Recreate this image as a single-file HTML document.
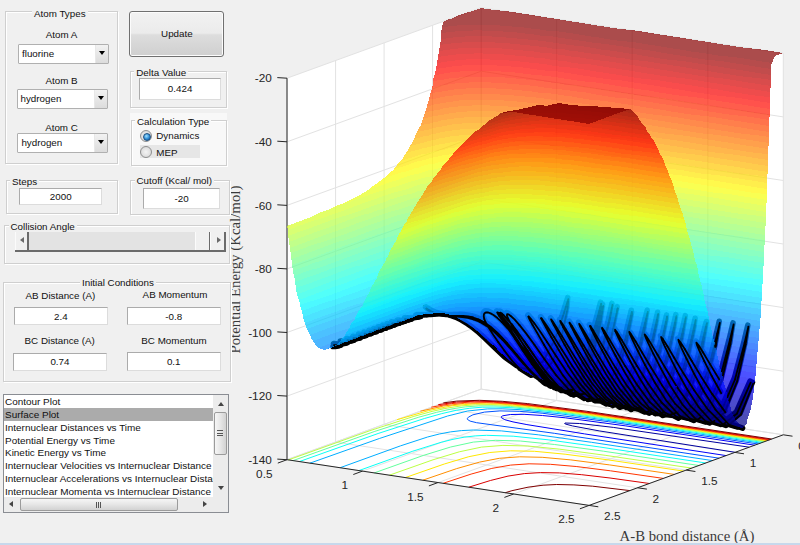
<!DOCTYPE html>
<html><head><meta charset="utf-8"><style>
*{box-sizing:border-box}
html,body{margin:0;padding:0}
body{width:800px;height:545px;overflow:hidden;background:#f0f0f0;position:relative;font-family:"Liberation Sans",sans-serif;font-size:9.8px;color:#111}
div{position:absolute}
.pn{background:#f0f0f0;border:1px solid #cfcfcf;box-shadow:inset 1px 1px 0 #fff,1px 1px 0 #fff}
.pt{background:#f0f0f0;padding:0 2px;line-height:13px;white-space:nowrap}
.lb{text-align:center;line-height:13px;white-space:nowrap}
.ed{background:#fff;border:1px solid #ababab;border-right-color:#dcdcdc;border-bottom-color:#dcdcdc;text-align:center;white-space:nowrap}
.ed{display:flex;align-items:center;justify-content:center}
.pop{background:#fff;border:1px solid #b0b0b0;border-radius:1px}
.pop span{position:absolute;left:3px;top:2px;line-height:13px}
.pop i{position:absolute;right:0;top:0;bottom:0;width:13px;background:linear-gradient(#f2f2f2,#dcdcdc);border-left:1px solid #e8e8e8}
.pop i:after{content:"";position:absolute;left:3px;top:6px;border-left:3.5px solid transparent;border-right:3.5px solid transparent;border-top:4px solid #000}
.btn{border:1px solid #707070;border-radius:3px;background:linear-gradient(#f2f2f2 0%,#ebebeb 48%,#dddddd 52%,#cfcfcf 100%);box-shadow:inset 0 0 0 1px #fcfcfc;display:flex;align-items:center;justify-content:center}
.rad{width:12px;height:12px;border-radius:50%;border:1px solid #8e8f8f;background:radial-gradient(circle at 50% 50%,#f4f4f4 0,#e0e0e0 60%,#d0d0d0 100%)}
.rad.on:after{content:"";position:absolute;left:2px;top:2px;width:6px;height:6px;border-radius:50%;background:radial-gradient(circle at 40% 35%,#9fe0ff 0,#2a8ad4 55%,#1a4f8a 100%);border:0.5px solid #1d4f80}
.rtx{line-height:13px;white-space:nowrap}
</style></head><body>
<svg width="800" height="545" style="position:absolute;left:0;top:0">
<path fill="#fff" d="M287 459.7 481.2 389.1 481.2 7.6 287 78.2ZM481.2 389.1 783.3 434.8 783.3 53.3 481.2 7.6ZM287 459.7 589.1 505.4 783.3 434.8 481.2 389.1Z"/>
<path stroke="#e2e2e2" fill="none" d="M481.2 389.1L783.3 434.8M481.2 389.1L481.2 7.6M287 459.7L481.2 389.1M481.2 389.1L481.2 7.6M432.6 406.8L734.8 452.4M432.6 406.8L432.6 25.2M362.5 471.1L556.7 400.5M556.7 400.5L556.7 19M384.1 424.4L686.2 470.1M384.1 424.4L384.1 42.9M438.1 482.6L632.2 412M632.2 412L632.2 30.5M335.6 442.1L637.6 487.8M335.6 442.1L335.6 60.6M513.6 494L707.8 423.4M707.8 423.4L707.8 41.9M287 459.7L589.1 505.4M287 459.7L287 78.2M589.1 505.4L783.3 434.8M783.3 434.8L783.3 53.3M287 459.7L481.2 389.1M481.2 389.1L783.3 434.8M287 396.1L481.2 325.5M481.2 325.5L783.3 371.2M287 332.5L481.2 261.9M481.2 261.9L783.3 307.6M287 268.9L481.2 198.4M481.2 198.4L783.3 244M287 205.4L481.2 134.8M481.2 134.8L783.3 180.5M287 141.8L481.2 71.2M481.2 71.2L783.3 116.9M287 78.2L481.2 7.6M481.2 7.6L783.3 53.3"/>
<path d="M749.2 447.2 613.3 427.4 579.7 423.5 565 423 564.6 423.5 566 424.2 572.4 425.9 599.2 430.9 735.2 452.3" stroke="#00009e" stroke-width="1" fill="none"/>
<path d="M754.8 445.2 625.8 425.9 565.3 417.8 542.4 415.5 524.1 414.3 510.4 414.5 502.7 415.8 501.4 416.6 501.3 417.6 504.8 419.7 513 421.9 526.9 424.6 584.6 433.9 726.1 455.6" stroke="#0000f8" stroke-width="1" fill="none"/>
<path d="M758.1 444 608.6 421.7 542.1 413.2 519.2 411.3 499.9 410.9 484.5 412.1 472.9 414.8 468.4 417.2 467.4 418.3 467.4 419.4 470.1 421.1 476.6 422.7 554.3 433.3 719.1 458.2" stroke="#0053ff" stroke-width="1" fill="none"/>
<path d="M760.5 443.1 624.9 422.8 561.1 413.9 519 409.6 502.1 408.8 487.7 408.9 467.6 411 447.6 416 379.7 438.4 309.8 463.2M340.2 467.7 400.4 445.9 427.6 437 439.3 434 450.4 431.9 461.4 430.6 473.7 430 501.3 430.9 538.3 434.8 591.5 442.3 712.4 460.6" stroke="#00adff" stroke-width="1" fill="none"/>
<path d="M762.5 442.4 621.6 421.3 556.6 412.2 513.1 407.8 496 407.1 482.2 407.2 469.2 408.3 456.2 410.3 441.8 413.6 424.4 418.5 378.1 433.5 299.3 461.6M358.9 470.6 412.8 451.2 441.1 442.3 453 439.3 464.1 437.2 475.2 435.9 486.6 435.3 513.2 436.2 548.1 439.8 599.1 446.9 705.8 463" stroke="#08fff7" stroke-width="1" fill="none"/>
<path d="M764.2 441.7 621.9 420.4 555.3 411.1 510.5 406.5 493.9 405.8 478.9 405.9 465.2 406.9 451.9 408.9 436.7 412.3 418.8 417.2 374.2 431.6 293.1 460.6M374.3 472.9 423.1 455.5 450.7 447 473.3 442.1 495.4 440.3 520.3 441 554.6 444.5 603.5 451.2 699 465.5" stroke="#62ff9d" stroke-width="1" fill="none"/>
<path d="M765.7 441.2 618.8 419.2 553.1 410 507.9 405.4 490.9 404.6 475.6 404.8 461.4 405.9 447.4 408 432 411.4 413.8 416.4 369.9 430.7 288.4 459.9M389.4 475.2 433 459.8 459.3 451.8 481.5 447.1 502.9 445.4 527.8 446 559.8 449.2 605.9 455.4 691.6 468.1" stroke="#bcff43" stroke-width="1" fill="none"/>
<path d="M767.1 440.7 574.9 412.2 531.7 406.7 501 404.1 475.2 403.7 452.3 405.7 428.4 410.6 397 419.7M405.3 477.6 444.3 464 468.8 456.7 489.8 452.5 510.5 450.8 534.6 451.3 565.1 454.2 608.2 459.9 683.5 471.1" stroke="#ffe800" stroke-width="1" fill="none"/>
<path d="M768.3 440.3 584.7 412.9 542.4 407.3 512.5 404.2 486.5 402.7 464.2 403.3 443.4 406 420.4 411.2M422.8 480.2 456.7 468.6 479.6 462.1 499.3 458.3 519.6 456.8 542.2 457.3 570.8 459.9 609.5 464.9 674.3 474.4" stroke="#ff8e00" stroke-width="1" fill="none"/>
<path d="M769.4 439.9 591.3 413.2 549.2 407.5 519.1 404.1 493.3 402.2 470.8 402 451.5 403.6 431.3 407.2M443.2 483.3 471.1 474.1 491.8 468.4 510.6 465.1 529.1 463.8 550.3 464.3 576.2 466.5 610.4 470.8 663.3 478.4" stroke="#ff3400" stroke-width="1" fill="none"/>
<path d="M770.4 439.5 593.8 413.1 522.9 403.9 496.8 401.7 474.9 401.1 456.5 402.1 438.2 404.7M468.8 487.2 490.4 480.5 508 476.1 524.3 473.6 540.6 472.6 559.4 472.9 581.7 474.7 610 478 649.5 483.5" stroke="#d90000" stroke-width="1" fill="none"/>
<path d="M771.6 439 586.9 411.3 527.8 403.6 502.2 401.3 479.3 400.3 456.7 401.1 443.3 402.9M505.3 492.7 511.9 490.7 528 487.2 543.1 485.2 556.7 484.5 573.9 484.9 592.7 486.2 629.9 490.6" stroke="#800000" stroke-width="1" fill="none"/>
<path stroke="#262626" fill="none" d="M287 78.2L287 459.7M287 459.7L589.1 505.4L783.3 434.8"/>
<g fill-opacity="0.7" shape-rendering="crispEdges">
<path fill="#0068ff" d="M473 307l1 3 1-3m63 0l3 3 0-3m8 1l6 5 0-4"/>
<path fill="#0078ff" d="M494 299l1 2 1-2m-7 0l1 3 1-3m-20 2l-1 1 3 5 2 0 3-4-1-3m58 0l0 3 3 4 3 0 1-6m1 0l5 6 1-5m-84 1l1 3 4-4 0-1m79 1l-1 5 1 1 6 1 1-6m-103 4l1 3 8-2-2-4"/>
<path fill="#0087ff" d="M492 293l2 6 2 0 1-6m-10 0l0 1 2 5 2 0 1-6m-18 1l-3 7 6-1m59-5l-1 5 7 1 0-1-5-5m0 0l5 5 0-5m0 0l0 5 1 1 6 1 0-6m-84 0l-2 2 2 5 5-2-2-6m-5 2l0 1 2-2m84 0l0 6 7 1 0-1m-7-6l7 6 0-5m-98 1l1 3 4-3 0-1m-4 4l-8 3 2 3 7-3"/>
<path fill="#0097ff" d="M496 287l1 4 1-4m-5 0l-1 6 5 0 0-2-1-4m7 0l2 6 1-6m-18 0l-1 6 5 0-2-6m22 0l2 4 0-4m-34 0l2 5 1-5m-10 1l1 6 3-6m-11 1l1 4 2-4m67 4l0 2 1 0m-1-6l0 4 1 2 5 0 1-5m0 0l-1 5 7 1m-82-3l-2 3 3-1m-7-4l2 6 2-1 2-3-1-4m84 1l-1 6 7 1 1-6m-100 1l-1 1 2 5 5-1-2-6m-14 4l1 3 8-5 0-1m-43 14l3 4 8-4-2-3"/>
<path fill="#00a7ff" d="M494 281l0 1 2 5 2 0 1-6m-5 1l-1 5 3 0m7-6l-1 4 1 2 3 0 0-2-1-4m-16 3l-1 3 2 0m19-6l3 6 2 0 1-5 0-1m-36 0l0 1 1 5 3 0 1-3-1-3m-5 0l1 1 0-1m-7 1l-1 2 2 4 4 0 2-6-1-1m50 1l1 2 1-2m-66 1l2 6 3 0 2-5 0-2m66 1l-1 6 7 1 0-1-5-6m-75 1l-3 5 1 2 5-2-2-6m86 1l0 6 7 1 0-1-6-5m-91 4l-3 3 4-1m-14-3l-2 2 2 5 9-3-2-6m-18 6l1 2 8-4-1-1m-35 11l4 6 9-3-4-6m-26 9l1 2 8-4 0-1m-26 9l2 3 8-4-1-2m-74 26l2 5 8-3-2-5"/>
<path fill="#00b7ff" d="M495 275l-1 6 5 0 0-4-1-2m-6 0l2 6 1-6m3 0l1 2 1-2m3 3l0 3 2 0m-3-6l1 3 1-3m4 0l0 2 1 4 6 0-3-6m0 0l3 6 0-6m-35 0l-1 6 4 0-2-6m-4 0l1 6 1 0 1-6m-6 1l-2 6 6-1-1-6m48 1l3 6 2 0 0-6m-63 1l-3 6 7-1-2-6m-6 2l1 5 3-6m70 5l0 1 1 0m7-5l5 6 1-5m-99 1l1 3 3-4m108 1l0 2 6 5 1-6m-118 2l-6 5 7-2m137-2l5 3 1-2m-161 0l-2 2 2 5 8-3-2-6m-9 3l1 1 2-2m161 0l-1 2 13 5 0-5m-202 7l2 6 8-4-1-5m1 5l-8 4 9-3m-20 0l-8 4 2 5 9-3m-20 0l1 2 8-4 0-1m-8 5l-8 3 1 4 9-3m-77 20l3 6 8-3-3-6"/>
<path fill="#00c7ff" d="M496 269l-1 6 3 0m-7-6l0 4 1 2 3 0 1-6m0 0l2 6 2 0 0-6m0 0l2 6 2 0 0-6m-20 0l2 6 1-6m21 0l0 6 4 0-3-6m-30 0l2 5 1-5m27 0l3 6 3 0 1-3-1-3m-34 5l-1 1 1 0m-5-5l-1 1 2 4 3 0 1-1-2-5m-4 2l-1 5 3-1m46-5l0 3 2 3 5 0 0-3-1-2m-62 0l1 2 1-3m-1 3l-1 4 2-1m-8-4l2 6 4-1 1-4-1-2m72 1l5 5 0-5m-89 1l2 5 4-6m83 0l0 5 1 1 6 1 0-6m-101 1l2 6 4-1 1-1-2-5m109 2l0 5 7 1 0-6m-126 1l1 1 2-2m136 2l0 3 7 4 6 1 0-6m-155 2l-6 4 6-2m-11-3l2 6 3-1 6-4-2-4m157 2l0 6 12 2 1-6m-205 7l1 5 8-5-1-3m1 3l-8 5 1 1 9-3m-20 0l2 6 8-4-1-5m-26 9l2 6 9-3-3-6m324 2l0 4 12 2 1-4m12 2l0 4 12 2 1-4m-395 3l0 2 9-3-1-1m-16 5l0 2 8-3 0-2m-25 9l1 3 8-3 0-3m-25 9l1 3 8-3-1-3m-16 6l1 3 8-3-1-3m1 3l-8 3 1 3 8-3"/>
<path fill="#00d7ff" d="M492 263l-1 6 5 0 0-1-2-5m3 0l-1 5 0 1 4 0-2-6m3 0l-1 6 4 0-2-6m-19 0l0 1 1 5 3 0 1-6m14 0l2 6 1-6m-23 0l1 1 0-1m26 5l-1 1 1 0m-31-6l1 6 3 0 1-5-1-1m27 0l0 5 0 1 6 0-2-4-1-2m-35 0l-1 7 3-1-1-6m-8 1l0 3 1-3m53 0l-1 6 6 1-3-7m-60 1l1 6 2-1 1-3 0-3m-7 1l-2 6 0 1 6-1-1-6m-6 1l1 5 2-6m75 1l0 3 1 3 5 0 1-6m-91 1l1 6 6-1 0-1-1-5m85 0l-1 6 7 1 0-2-4-4m-94 0l-3 6 0 1 5-1-1-6m111 2l-1 6 7 0 0-2-5-4m-122 1l1 6 3-1 2-2-1-5m135 3l0 6 13 2 0-6m-160-2l-7 6 1 3 9-3-1-6m158 2l0 6 13 2 0-5-5-2m-197 6l-5 4 2 4 8-3-2-6m-8 5l-8 4 1 3 9-3m-18 4l-8 4 0 1 8-3m324-2l0 4 13 2 0-4m0-2l0 2 12 2 1-2m-1 2l0 4 13 2 0-4m-12-4l-1 2 13 2 0-2m0 0l0 2 13 2 0-2m-410 2l2 5 8-2-2-6m-16 5l2 6 8-3-2-5m-25 8l2 6 9-3-2-6m-25 9l2 6 8-3-2-6m-16 6l2 6 8-3-2-6"/>
<path fill="#00e7ff" d="M493 259l-1 4 2 0m3-3l0 3 1 0m3-2l0 2 1 0m-10-6l1 2 0-2m-9 0l-1 6 5 0-2-6m0 0l2 6 1-6m13 0l-1 4 1 2 3 0 0-3-1-3m-4 0l1 4 1-4m-21 0l1 6 1 0 1-6m20 0l1 3 1-3m-28 0l-1 6 1 0 4 0-1-6m29 1l-1 5 3 0m-36-6l1 6 1-6m-10 1l2 6 1 0 1-5 0-1m52 4l0 2 2 0m-60-5l-1 2 1 4 4-1-2-6m-3 1l0 2 1-2m-1 2l-2 4 3 0m-8-5l2 6 3-1 2-4 0-2m73 1l0 6 7 0 0-2-3-4m0 0l3 4 0-3m-88-1l-3 7 6-1-2-6m87 4l0 2 2 1m18 1l0 1 1 0m-121-6l-2 3 1 4 5-2-2-6m-5 2l1 2 2-3m140 3l-1 5 13 2 0-2-11-5m-148 4l-1 1 2 0m147-5l11 5 1-4m-1 4l0 2 8 1m119 12l0 6 13 2 0-6m0 0l0 6 12 2 0-6m-390 1l0 2 8-3 0-2m382 2l0 6 13 2 0-6m-403 1l-8 4 1 3 8-3m-10-3l1 3 8-4 0-2m-8 6l-8 3 1 2 8-2m-10-3l1 3 8-3-1-3m-15 10l-8 3 0 1 9-3m-10-3l1 5 8-3-1-4m-16 5l1 5 8-3-1-5m-7 8l-8 3 0 1 8-3m-8 2l-8 3 0 1 8-3m-9-3l1 5 8-3-1-5"/>
<path fill="#00f7ff" d="M491 251l1 6 1 0 1-6m-9 0l-1 6 2 0m-1-6l1 6 3 0 0-6m13 0l0 6 2 0m-6-6l0 1 2 5 2 0 0-6m-22 0l-1 1 2 5 3 0 1-6-1 0m18 0l2 6 2 0 0-6m-27 1l-1 5 3 0m-6-5l1 5 2 0 1-5 0-1m-12 1l0 2 1 4 4 0-2-6m-3 2l-1 5 2-1m-5-5l2 6 1 0 1-5 0-1m-7 1l-2 5 0 1 7-1-2-6m76 3l-1 4 4 0m-3-6l0 2 3 4 3 1 1-6m-88 4l-1 1 1 0m-11 0l-2 3 2-1m-6-4l1 6 3-1 2-3-1-3m139 8l0 1 1 0m-1-6l0 5 1 1 12 1 0-4-4-2m0 0l4 2 0-1m0 0l0 1 13 5 0-5m38 6l0 2 12 3 1-3m-271 2l1 5 8-5-1-3m288 5l0 4 12 2 0-4m13 2l0 4 12 2 1-5m-1 5l0 1 13 2m0-6l0 6 12 2 1-6m-393 1l2 6 8-3-2-6m-16 6l1 6 9-3-2-6m-16 6l1 6 8-3-1-6m-25 9l2 5 8-2-1-6m-17 6l2 5 8-3-2-5m-24 8l2 6 8-3-2-6"/>
<path fill="#08fff7" d="M490 245l0 3 1 3 3 0-2-6m-7 0l0 6 4 0 1-3-1-3m10 0l-1 6 4 0-2-6m-20 0l0 6 4 0-1-6m20 0l-1 6 4 0 0-1-1-5m-30 1l-1 4 1 2 4-1-1-6m-9 1l-2 6 3 0m-8-5l1 6 4 0-2-6m-3 0l-2 7 3-1m76-5l0 6 7 1 0-6m-106 3l-1 1 2 5 5-1-2-6m122 0l0 1 6 5 1-5m7 1l5 4 0-3m0 3l0 3 9 1m-9-7l0 3 9 4 4 1 0-6m0 0l0 6 13 1 0-3-7-3m45 6l0 6 13 2 0-6m-273 2l2 6 8-3-1-5m289 5l0 5 12 2 1-5m0-1l0 1 12 2 0-1m0 1l0 5 13 1 0-3m-361-1l0 1 8-4m353 2l0 2 12 2 1-2m-1 2l0 3 13 2 0-3m-386-4l-8 4 1 4 8-3m-9-1l-8 4 1 3 8-3m-9 0l-8 3 1 3 8-3m-17 3l-8 3 0 3 9-3m-9 0l-8 4 0 2 8-3m-16 4l-8 3 0 1 8-3"/>
<path fill="#18ffe7" d="M491 240l-1 5 2 0m-6-6l-1 6 4 0-2-6m12 3l0 3 1 0m-19-6l-1 6 3 0m20-4l0 4 2 0m-11-6l1 3 0-3m-19 1l-1 6 3-1m-14-4l-2 6 3 0m-4-6l1 6 2-6m76 1l-1 6 7 1-5-6m-98 4l-3 5 4-1m122-5l0 5 7 1 0-3-4-3m4 1l0 2 7 4 5 1 1-6m0 0l-1 6 13 2 0-1m-12-7l12 7 1-5m-1 5l0 1 6 1m45 5l0 1 13 2m-265-6l-8 6 0 2 9-2m264-6l0 6 6 1 6 1 1-6m25 4l0 6 12 2 1-6m-350 3l1 6 8-3-1-6m354 2l0 6 13 2 0-6"/>
<path fill="#28ffd7" d="M487 237l-1 2 1 0m5-6l2 6 1 0 1-6m-10 0l1 4 0-4m14 0l2 6 1-5m-41 1l1 5 1-5m-3 0l-2 5 1 1 3 0 0-1-1-5m-4 1l1 4 2-5m78 6l0 1 1 1m-94-5l0 1 1-1m-11 2l1 6 4-7m124 5l0 2 3 0m-137-4l0 2 2-3m139 0l0 6 13 1-12-7m12 2l0 5 13 2 0-4-4-2m4 0l0 2 13 5 0-5m50 10l0 3 13 2 0-3m0-2l0 2 13 3 0-3m0 0l0 3 12 2 0-4m0 4l0 2 13 2 0-2m0-4l0 4 12 2 1-4m-364 2l1 5 8-3-1-5m355 5l0 2 13 2 0-1m0-5l0 5 12 2 1-5"/>
<path fill="#38ffc7" d="M492 227l0 4 0 2 4 0 0-1-1-5m-11 0l2 6 1 0 1-5-1-1m13 1l0 4 1 1 3 1 0-4 0-2m-34 0l0 1 1 5 2-6m-4 0l1 1 0-1m-7 1l-1 3 1 3 2 0 1-4-1-2m-3 3l0 3 1 0m-4-5l0 2 0 4 3-1 0-3 0-3m-10 2l1 6 2-7m83 1l2 2 0-2m5 0l2 3 0-2m-101 0l1 6 1 0 2-7m104 2l6 6 0-6m-122 1l-2 4 1 2 5-1-1-6m124 1l2 1 0-1m-131 1l0 3 2-4m129 0l0 1 6 5 1-5m-143 1l1 6 2-1 2-3 0-3m137 5l0 1 1 0m12-2l0 4 9 1m4-5l0 5 13 2 0-4-4-2m-205 4l0 2 3-3m219-1l0 4 12 4 0-6m-243 3l1 5 8-6 0-2m272 6l0 6 13 2 0-6m-311 1l0 1 4-2m307 0l0 6 12 1 1-5m12 2l0 5 13 2 0-5m-357 0l-8 4 1 3 8-3m-9-3l0 3 8-4 0-2m369 4l0 5 13 2 0-5m0-1l0 1 13 2 0-1"/>
<path fill="#48ffb7" d="M493 222l-1 5 3 0m-11-5l-1 2 1 3 3 0-1-5m15 0l-1 6 4 0-2-6m-31 0l-1 6 3 0 0-3 0-3m-5 1l1 5 1 0 1-6m-7 1l-1 6 2 0m-4-5l-2 6 3-1m-9-4l-1 4 0 2 3-1 2-6m77 0l4 7 2 0 1-6m0 0l4 6 2 1 1-6m-100 0l-2 5 0 1 4-1 2-2-1-4m97 1l6 6 0-5m0 0l0 5 0 1 6 0 1-3-3-3m-118 1l0 3 2-4m-2 4l-2 3 3-1m120-5l0 2 4 4 2 0 0-6m-132 1l1 6 2-1 2-3 0-3m127 0l0 6 7 1 0-4-3-2m-136 0l-4 7 5-1m-11-3l0 1 1-2m164 1l9 4 1-3m-1 3l0 3 9 1m-206-1l1 5 3-1 5-5 0-2m214 1l0 5 12 2 1-4-10-3m10 1l0 2 12 3 0-3m-251 0l-5 4 0 3 9-3-1-5m273 10l0 1 13 2 0-1m-312-4l1 6 4-1 4-3 0-5m303 7l0 1 13 2 0-1m0-5l0 5 6 2 6 1 1-6m-350 1l-4 3 1 5 8-3-1-6m383 6l0 5 13 2 0-6m-454 13l1 4 8-3 0-3"/>
<path fill="#58ffa7" d="M484 216l0 6 2 0-1-6m16 4l0 2 1 0m-11-6l2 5 0-5m-5 0l1 3 0-3m-17 1l-1 5 2 0m-4-5l-1 4 0 2 3-1 1-5-1-1m40 1l2 5 0-5m13 1l1 3 0-3m-71 0l1 6 2-6m72 0l3 6 0-5m-79-1l-1 4-1 3 4-1-1-6m78 1l0 5 7 1-4-6m4 0l0 6 7 1 0-1-5-5m-93 0l-2 6 3-1m-7-4l0 1 1-2m103 0l0 5 0 1 6 1 0-3-2-3m2 3l0 3 4 0m-119-5l1 6 2-1 2-5 0-1m117 1l0 6 6 0 0-2-5-4m-123 0l-4 7 5-1m127-2l0 2 4 1m-147-3l1 6 1-1 3-4 0-3m158 1l0 5 3 2 10 1 0-6m13 2l0 3 12 4 0-5m-216-1l-7 7 0 2 9-3-1-6m215 6l0 1 3 0m10-4l0 5 12 2 1-5m-249 2l-3 3 3-1m274-1l0 1 13 2 0-1m-305 0l-8 5 0 2 9-3m304-4l0 1 12 3 0-2m0 2l0 4 13 2 0-4m0-2l0 2 12 2 0-2m13 2l0 2 12 2 1-2m-1 2l0 4 13 1 0-3m-448 8l-7 3 1 5 9-2-1-6"/>
<path fill="#68ff97" d="M484 215l0 1 1 0m5-6l1 6 2 0 1-6m-8 0l2 6 1 0 1-6m-20 1l-1 6 2-1m39-5l-1 2 2 4 2 0 0-6m-47 0l0 2 1-2m56 1l3 6 1 0 1-5-1-1m-71 0l0 3 0 3 3 0 0-2-1-4m-3 0l1 3 0-3m72 0l0 1 3 5 3 1 0-3-1-3m-77 2l-1 3 1 0m78-2l0 3 3 0m4-2l0 2 2 1m-100-5l1 6 1-1 2-6m99 0l2 2 0-2m0 2l0 4 4 1m-110-6l-3 7 5-1-1-6m113 0l5 6 0-5m0 5l0 1 1 0m-135-3l-4 5 1 2 5-2-1-5m-5 1l0 4 4-5m160 1l0 5 13 2m13-4l0 6 12 2 1-5-6-2m-220 3l0 1 2-2m236 4l0 3 13 2 0-2m0-4l0 4 12 3 1-5m12 2l0 5 13 2 0-5m0 0l0 5 12 2 0-6m-335 2l0 2 8-4m340 2l0 6 12 2 1-6m12 2l0 6 13 2 0-6m-452 18l1 6 8-3 0-6"/>
<path fill="#78ff87" d="M490 204l0 5 0 1 4 0-2-6m-6 0l-1 2 1 4 4 0 0-1-1-5m-15 0l1 6 1-6m-7 1l1 4 1-4m39 0l0 6 3 0 1-3-1-3m-48 0l1 6 1 0 1-6m52 1l1 2 0-2m0 0l0 2 2 4 4 0-2-6m-67 1l-2 5 2 0m-4-5l1 5 1 0 2-5-1-1m71 0l0 6 5 1-4-6m-81 1l0 3 1-4m-5 2l-1 4 0 2 4-1 1-3 0-3m94 0l4 6 2 0 0-5m2 0l5 6 0-5m-112 3l-1 2 1 0m112-5l0 5 1 0 5 1 1-5-2-1m2 0l0 1 6 6 0-6m-141 7l0 1 1 0m-6-5l0 1 1 5 4-1 0-1 0-5m186 9l0 1 7 1m-221-3l1 6 2-1 6-6 0-2m243 5l0 6 13 2 0-5-8-2m-274 3l0 4 8-6 0-1m274 1l0 1 12 2 1-1m-1 1l0 5 13 2 0-4m0 0l0 4 12 1 1-3m-337 0l1 5 8-2-1-6m341 5l0 3 13 2 0-2m0-3l0 3 12 2 1-4m-1 4l0 2 13 2 0-2m-412-1l0 1 3-1m-35 14l-8 3 0 4 9-3m-9-3l0 2 8-3 0-2"/>
<path fill="#87ff78" d="M491 198l-1 6 2 0m-6-6l0 6 3 0-2-6m-13 0l0 5 0 1 2 0 0-1-1-5m0 0l1 5 1-5m-8 1l-1 2 1 4 2 0 0-6m39 0l0 6 3 0m-47-6l-1 5 0 1 3 0 0-4 0-2m-4 0l1 5 1-5m52 1l2 6 1 0 0-6m0 0l0 6 4 0-3-6m-67 0l-1 6 0 1 3-1 0-6m71 4l0 2 1 1m-82-5l1 6 1-1 1-3 0-3m-4 1l-2 7 4-1-1-6m95 0l0 6 6 1 1-2-4-5m4 1l0 4 1 2 5 1 0-5-1-1m1 1l0 5 5 0m2-5l0 5 6 1 0-4-2-2m-140 3l-4 6 5-1m-6-5l1 6 4-6 0-1m-10 3l0 1 1-1m-14 4l-5 4 1 3 9-3-1-5m-26 8l1 6 8-3-1-6m275 1l0 6 13 2 0-6m-304 4l-8 5 0 3 8-3m-17 0l0 4 9-4-1-3m363 2l0 6 13 1 0-5m-401 5l1 5 3 0 5-3 0-5m-49 17l1 6 8-3-1-6"/>
<path fill="#97ff68" d="M486 195l0 3 1 0m-12-3l-1 3 1 0m0-5l0 2 0 3 2 0 0-3 0-2m-8 0l0 6 2 0 1-4 0-2m-5 0l-1 6 2 0m-5-6l0 2 1 4 2 0 1-6m51 1l0 6 3 0 0-1-2-5m2 5l0 1 1 0m-66-3l-1 3 2 0m-1-5l0 2 1-3m-9 2l-1 5 0 1 3-1-1-5m92 0l1 3 0-3m-95 5l-1 1 1 0m95-3l0 3 3 0m4-4l0 5 5 1m-119-5l1 4 1-5m122 0l3 4 0-3m0 3l0 3 4 0m-144-3l-2 3 1 3 5-1-1-6m-5 2l0 2 2-3m-7 2l1 6 1 0 3-5 0-2m-13 7l-4 4 4-1m245-1l12 3 0-1m-275 0l-8 6 0 1 8-3m-9-3l1 5 8-6 0-2m275 3l0 4 13 2 0-4m0-2l0 2 13 3 0-3m25 4l0 4 12 2 0-4m-372 1l1 6 8-3-1-6m364 6l0 2 13 2 0-2m0-4l0 4 13 2 0-4m-406 0l-8 4 0 5 9-3m-42 9l0 2 8-3 0-2m-8 5l-8 3 1 3 8-3m-9-2l0 2 8-3 0-2m-16 6l0 2 8-3 0-2"/>
<path fill="#a7ff58" d="M476 187l-1 6 2 0m1-6l2 5 0-5m-10 0l-1 6 3 0-1-6m-7 1l-1 5 4 0 0-1-1-5m52 5l0 2 1 0m-2-6l1 4 0-4m3 0l1 3 0-3m-67 1l1 6 1-1 1-6m-9 6l-1 2 1 0m88-6l4 6 1 0 1-5m-109 2l1 6 2-1 3-5-1-1m117 0l0 3 3 3 3 1 1-6m2 0l4 4 0-3m-145 2l0 2 2-3m-2 3l-2 4 3-1m-6-4l1 6 2-1 2-4 0-2m-8 2l-1 2 0 4 5-1-1-6m-5 1l1 2 1-2m211 4l0 3 12 4 0-5m13 2l0 6 12 2 1-6m-286 2l1 5 9-3-1-5m289 3l0 5 13 2 0-5m-319 1l0 1 7-4m337 5l0 6 12 2 1-6m-365 2l-8 4 0 1 8-3m377-2l0 6 13 2 0-6m-448 15l1 6 8-3-1-6m-16 6l1 6 8-3-1-6m-16 6l1 6 8-3-1-6"/>
<path fill="#b7ff48" d="M479 181l-1 5 0 1 2 0 1-3-1-3m-10 5l0 1 1 0m4-6l1 6 0-6m15 0l1 5 0-5m3 0l1 4 0-4m-31 1l-1 6 2-1m49-5l0 2 2 4 1 0 1-4-1-2m-61 0l1 5 1-5m59 0l1 2 0-2m0 0l0 2 2 4 1 0 0-5m-67 0l-1 4 1 2 3-1 0-1-1-5m-3 1l0 4 1-4m81 1l0 5 1 1 6 1 0-2-3-4m-96 0l1 5 2-6m-11 2l-2 6 0 1 5-1 0-6m117 1l0 5 7 1 0-2-5-4m5 0l0 4 2 2 4 1 0-6m-141 0l0 2 1-2m-6 2l1 6 2-1 2-5 0-2m-7 3l-2 3 0 3 5-1-1-6m-4 4l-3 4 3-1m-5-4l0 5 2 0 3-4-1-3m177 1l6 3 1-2m25 3l0 6 12 2 1-6m9 2l3 1 0-1m0 1l0 5 13 2 0-4m-278-1l-8 6 0 1 9-3m289-1l0 4 13 2 0-3m-320-2l1 6 7-3 1-1-1-5m325 4l0 3 12 2 0-3m0 3l0 2 13 2 0-2m0-3l0 3 12 3 1-4m-1 4l0 1 13 2 0-1m-432 4l0 2 8-3 0-2m-16 8l-8 3 0 4 8-3m-8-1l-8 4 0 3 8-3m-8 0l-8 3 0 3 8-3"/>
<path fill="#c7ff38" d="M479 176l0 5 1 0m2-6l1 6 1-6m-10 0l0 3 1 3 1 0 1-4-1-2m13 0l2 6 1 0 0-6m1 0l2 6 1 0 1-6m19 1l-1 6 3 0m-61-5l-1 0 1 5 2 0 1-6m56 0l2 6 1 0 0-5m0 0l0 5 3 1 0-1-2-5m-64 0l-1 6 2-1m-4-5l1 6 1 0 1-6m80 2l0 5 4 1m-96-6l0 1 0 5 3-1 0-1 0-5m-9 4l-2 4 3 0m117-1l0 2 2 0m5-5l0 5 6 1 0-2-5-4m-137 1l1 5 1 0 3-7m-8 3l-1 3 0 3 5-2-1-5m-4 4l-2 4 2-1m-8-4l-2 3 1 4 4-2 0-6m171 0l0 4 6 3 7 1 0-6m-189 0l0 2 2-3m200 3l12 5 0-3m0 3l0 2 13 2 0-1m0-4l0 4 9 3 3 0 1-5m-278 4l-6 4 1 4 8-3 0-6m325 4l0 6 12 2 1-6m-363 3l0 4 8-4 0-3m367 2l0 6 13 2 0-6m-396 2l0 5 8-4 0-4m-33 12l1 5 8-3-1-5"/>
<path fill="#d7ff28" d="M482 169l0 4 0 2 2 0 0-6m-9 0l-1 6 2 0m13-6l0 3 0 3 3 0 1-2-1-4m1 0l0 4 0 2 4 0 0-3-1-3m8 1l1 2 0-2m5 0l2 5 0-5m-53 0l1 6 1-6m-3 1l-1 6 3-1-1-6m57 1l0 4 0 1 3 1 0-2-1-4m1 4l0 2 1 0m-64-6l0 6 1 0 1-6m-4 0l-1 6 3 0 0-6m66 0l1 2 0-2m-77 2l-2 6 3-1m101-4l2 3 0-3m8 1l5 6 0-5m0 5l0 1 1 0m-136-5l-1 2 0 4 5-2 0-5m-5 1l0 2 1-2m-1 2l-3 5 3-1m145-6l4 3 0-2m-159 4l-2 4 3-1m171-5l0 5 13 2 0-3-7-4m-183 1l1 6 2-1 2-4 0-2m198 3l0 6 12 2 1-6m12 2l0 6 13 2 0-6-1 0m-274 8l-3 2 3-1m325 1l0 3 13 2 0-2m0-4l0 4 12 2 0-4m-376 1l1 6 8-3-1-6m368 6l0 2 13 2 0-2m-397-2l1 6 8-3-1-6m389 1l0 4 13 2 0-4m-427 6l-8 3 1 6 8-3"/>
<path fill="#e7ff18" d="M483 163l-1 6 2 0m5-6l0 6 3 0-1-6m2 0l0 6 3 0-1-6m5 1l1 5 0-5m1 0l2 6 1 0 0-6m4 0l0 2 1 4 2 0 0-3 0-3m-53 1l-1 0 1 5 2 0 1-6m-4 1l0 6 1-1m57-3l0 4 2 0m-3-6l1 2 0-2m-61 0l0 1 1 5 2 0 0-6m-3 1l-1 5 2 0m64-6l0 1 2 5 1 0 0-6m21 3l0 1 4 5 2 0 1-5m6 0l0 5 1 1 5 1 1-6m-134 0l-2 7 4-1-1-6m-5 1l1 6 1 0 2-7m134 0l6 5 0-4m0 0l0 4 2 2 4 1 1-6m6 1l6 4 1-3m-1 3l0 3 6 0m-183-5l0 1 0 5 5-1-1-6m199 3l0 6 13 2 0-3m-235-1l1 3 4-4m242 6l0 1 12 2m64 4l0 5 12 2 1-6m-369 1l-8 4 0 2 8-3m-8 1l-8 4 0 1 8-3m389-5l0 6 13 2 0-6"/>
<path fill="#f7ff08" d="M490 159l-1 4 2 0m3-4l-1 4 2 0m3-5l2 6 1 0 0-3 0-3m-28 0l0 2 1-2m15-1l1 2 0-1m12 0l-1 3 1 3 3 0-1-6m5 0l0 6 3 0-2-5m-51 0l0 6 3-1 0-2 0-3m0 0l0 3 1-4m50 1l2 6 1 0 1-6m-61 0l-1 6 3 0 0-6m59 0l3 6 0-6m0 0l0 6 3 0 0-1-1-4m-75 1l1 3 0-4m96 2l0 6 7 1 0-2-3-5m9 2l0 5 7 1-6-6m-127 5l-1 1 1 0m-5-5l-1 1 1 5 4-1 1-1-1-5m134 1l0 5 6 1 0-6m-145 0l0 1 1-1m144 0l0 6 7 1 0-3-4-3m4 0l0 3 6 4 7 1 0-6m-174 2l-4 5 4-1m-23 1l0 6 5-1 4-5 0-3m264 7l0 1 12 2 1-1m37 8l0 4 13 1 0-2m12 2l0 2 13 2 0-2"/>
<path fill="#fff700" d="M478 152l1 4 0-4m19 0l0 5 0 1 3 0-2-6m-27 0l1 6 1 0 0-6m14 0l1 5 1 1 0-6m12 1l0 5 2 0m-7-6l1 5 0-5m-31 0l1 6 1-6m40 5l0 1 1 1m-5-7l1 3 0-3m-46 1l-1 6 3 0-1-6m0 0l1 6 1-1 0-3 0-2m50 0l0 5 0 1 4 0 0-2-2-4m-58 1l-1 5 2 0m53-6l2 5 0-5m2 0l2 4 0-4m0 0l0 4 0 2 3 0 0-3-1-2m1 2l0 3 2 1m-3-6l1 2 0-2m-73 1l0 6 1-1 2-6m94 4l0 4 4 0m9 1l0 1 1 0m-130-5l-2 6 4-1 0-6m134 1l0 6 6 0 0-1-5-5m-141 1l1 5 1 0 2-6m142 5l0 1 3 1m-154-5l1 1 0-1m157 0l0 5 13 2 0-3-6-4m-190 8l-2 2 1 4 9-3-1-5m265 7l0 5 13 2 0-6"/>
<path fill="#ffe700" d="M477 146l0 1 1 5 1 0 1-6m18 3l0 3 1 0m-27-6l0 4 0 2 2 0 0-3 0-3m13 0l1 6 2 0 0-6m5 0l2 6 1 0 0-3 0-3m-31 0l0 3 0 3 2 0 0-2 0-4m31 0l2 6 0-6m1 1l2 5 1 0 0-5m-45 4l-1 2 1 0m0-6l0 4 0 2 2 0-1-6m51 1l0 5 2 0m-55-6l1 4 0-4m49 0l0 1 1 5 2 0 0-5 0-1m1 0l-1 1 2 5 2 0 0-5m0 0l0 5 2 1m-63-7l1 6 1-6m59 1l2 6 1 0 1-6m1 0l2 6 0-6m-77 1l-1 3 1 3 3-1-1-6m-3 1l0 3 1-3m101 2l3 4 0-4m-122 2l0 3 2-4m128 0l5 6 0-5m-135 3l-1 3 2-1m134 0l0 1 1 0m-141-5l0 6 4-1 1-3 0-3m145 1l3 3 0-2m-158 0l0 6 1 0 3-7m154 3l0 4 7 0m-184 0l-6 8 7-2m265 1l0 6 13 1 0-5m38 5l0 2 12 2 0-2m13 2l0 2 13 2 0-2m0 0l0 2 12 2 0-2"/>
<path fill="#ffd700" d="M478 140l-1 6 3 0 0-1-1-5m-6 0l-1 6 2 0m13-6l-1 4 1 2 3 0 1-1-1-5m-14 0l1 6 1-6m17 0l0 3 0 3 3 0-2-6m-28 1l-1 5 2 0-1-6m28 0l2 6 1-6m0 0l1 6 2 0 0-2 0-3m1 0l-1 3 1 3 3 0-1-6m-43 3l-1 3 1 0m40-6l0 3 1-3m-44 0l1 6 1 0 1-3-1-3m49 0l0 6 3 0-2-6m-3 0l2 6 0-6m4 1l0 5 3 1-2-6m-60 0l1 5 2 0 1-6m58 1l0 6 4 0 0-2-2-4m0 0l2 4 0-4m0 0l0 4 1 2 2 0 0-5 0-1m-76 1l-1 6 2-1m-4-5l1 6 1 0 1-6m88 1l2 4 0-4m7 1l0 2 3 4 3 0 1-5m1 0l5 5 0-5m-130 1l1 6 2-1 2-6m125 0l0 5 1 1 5 1 1-6m-139 1l-2 5 0 1 5-1-1-6m143 1l0 4 3 2 3 1 1-6m-160 1l1 5 4-1 1-1-1-5m243 19l0 1 13 2m38 0l0 5 12 2 1-5m12 2l0 5 13 2 0-6m0 0l0 6 12 2 0-6"/>
<path fill="#ffc700" d="M478 135l0 5 1 0m8-6l0 6 3 0-2-6m-12 0l-1 4 1 2 2 0 0-5 0-1m17 1l0 5 1 0m-28-1l0 2 0-1m27-5l1 5 3 0-1-5m1 0l0 5 3 1-2-6m3 0l0 6 2 0m-5-6l2 6 1 0 0-6m-43 0l-1 5 0 1 2 0m49-2l0 2 1 0m-4-6l0 2 1 4 2 0 0-2-1-4m5 4l0 3 1 0m-59-6l-1 6 4-1 0-1-1-4m60 2l-1 4 2 0m-6-6l1 3 0-3m4 0l0 2 1 4 2 0 0-6m0 0l0 6 3 0-2-6m-71 0l1 6 1-6m-8 1l0 2 0 4 3 0 0-1 0-5m-4 1l1 1 0-2m88 1l3 6 2 0 0-6m7 1l0 6 7 1 0-2-3-4m3 0l0 4 1 2 5 0 0-5m-130 0l0 2 0 4 5-1 0-2 0-4m125 1l0 5 7 1 0-1-5-5m-132 2l-2 5 2-1m143-4l0 5 7 1 0-4-2-2m-155 0l-3 6 0 1 5-2-1-5m-4 1l0 5 3-6m296 21l0 6 13 2 0-6m12 2l0 6 13 1 0-5m0 0l0 5 12 2 1-5"/>
<path fill="#ffb700" d="M487 129l0 5 1 0m-12-5l0 5 2 0-1-5m19 0l-1 6 3 0m1-3l0 3 1 0m-20-7l1 4 0-4m19 1l-1 3 1 3 3 0-2-6m6 0l0 6 2 0-1-5m-46-1l0 6 1 0 0-6m-6 1l-1 6 2 0 0-6m53 0l2 6 1 0 0-6m4 0l0 6 3 0-2-5m-69 0l1 5 2 0 1-6m65 1l2 5 1-5m2 0l1 2 0-2m-79 0l-1 6 3 0-1-6m-3 1l0 6 1-1 1-6m86 1l0 4 1 2 5 0 1-2-3-4m-95 0l0 3 1-3m103 3l0 4 4 1m3-6l0 6 6 1 0-2-4-4m-124 0l-2 6 5-1-1-6m126 5l0 2 2 0m12-1l-1 3 5 0m-154-3l-1 3 1 0m-5-5l1 6 3-1 1-3 0-3m220 10l0 1 12 3 0-2m76 11l0 6 8 1 4 1 1-6"/>
<path fill="#ffa700" d="M476 126l0 3 1 0m2-6l1 5 1 0 0-5m9 0l1 6 1 0 0-6m-10 0l1 4 1-4m16 0l0 6 1 0m-31-6l1 6 1-6m-4 0l1 6 0-6m38 5l0 1 1 1m-43-7l1 6 1-6m-6 1l1 5 1 0 1-2-1-4m-6 5l0 2 1 0m45-7l1 3 0-3m7 1l0 5 0 1 3 0 0-1-1-5m-4 0l2 5 0-5m-54 0l0 4 1-4m60 3l0 3 1 1m-68-6l-1 5 0 1 4-1-1-6m65 1l0 2 1 4 3 0 0-6m0 0l2 6 1 0 0-6m-78 4l-1 2 1 0m-4-5l1 6 2-1 1-2-1-3m86 0l0 6 4 0-3-6m-93 1l1 5 1 0 1-6m107 2l2 4 0-4m0 4l0 2 2 1m-122-5l-2 5 2-1m129-4l4 4 0-4m-148 2l-1 2 1 4 5-1-1-6m221 10l0 6 12 2 1-6m75 11l0 6 13 2 0-6"/>
<path fill="#ff9700" d="M479 117l0 6 2 0 1-5-1-1m9 0l0 4 0 2 2 0 0-2-1-4m-9 0l0 1 0 5 2 0 0-6m-14 0l0 2 0 4 2 0 0-5 0-1m17 0l1 4 0-4m-23 0l0 1 1 5 1 0 1-4 0-2m15 0l1 4 0-4m-21 0l0 6 2 0 0-5 0-1m-5 1l-1 6 2-1m36-6l1 6 0-6m1 1l2 5 1 0 0-5m7 1l0 5 2 0m-5-6l1 6 2 0 0-5 0-1m-55 0l1 6 1 0 0-4 0-2m0 0l0 2 1-2m-7 1l-1 6 2-1m66-5l-1 6 4 0-2-6m2 0l0 6 3 0 0-3 0-2m-81 0l-1 5 0 1 3 0 0-6m86 4l0 2 1 0m-3-6l2 4 0-4m-93 1l1 6 3-1 0-1-1-5m103 2l1 1 0-1m0 0l0 1 4 5 2 0 0-5m7 1l0 3 2 3 4 0 1-6m-146 2l-3 6 4-1 0-6m221 11l0 5 13 2 0-6m63 10l0 3 12 2 0-3m0 3l0 2 13 2 0-2m13-1l0 3 12 2 0-4"/>
<path fill="#ff8700" d="M480 111l-1 6 2 0m9-4l0 4 1 0m-9-6l0 6 2 0 0-5 0-1m-14 0l0 6 2 0-1-6m18 0l-1 2 1 4 1 0 0-4 0-2m-22 0l-1 6 3 0-1-6m15 0l0 1 1 5 1 0 0-6m-21 1l0 5 2 0-1-5m3-1l1 6 0-6m22 0l1 1 0-1m4 1l2 5 1 0 0-4 0-1m0 0l0 1 1 5 3 0 0-2-1-4m5 0l0 6 3 0-2-6m-53 0l0 3 0 3 2 0-1-6m0 0l1 6 1 0 0-6m60 4l0 3 1 0m-3-6l2 3 0-3m3 1l0 5 3 1m-77-6l1 3 0-4m-4 2l-1 5 2 0m82-6l2 6 2 0 1-5m-92 0l-2 6 3-1 0-5m100 1l3 6 1 0 0-6m0 0l0 6 6 1 1-4-2-2m8 1l0 6 7 0 0-3-2-3m78 16l0 2 13 1m63 4l0 6 12 2 1-6m25 4l0 6 12 1 0-5"/>
<path fill="#ff7800" d="M483 105l-1 6 2 0m-13-4l-1 4 1 0m18-6l0 6 1 0m-22-3l0 3 1 0m16-6l-1 6 2 0 1-6m-21 2l-1 5 1 0m2-6l0 2 1 3 1 0 1-4 0-1m20 0l1 5 1 0 0-5m4 0l0 3 0 3 3 0-1-6m2 0l-1 6 3 0m-42-6l1 6 1-6m45 2l0 4 1 0m-52-5l-1 5 1 0m0-5l0 5 2 0 0-6m56 1l2 6 2 0 0-6m-71 1l0 6 1-1 1-6m70 1l2 6 1-6m3 0l0 2 2 4 5 1 0-3-2-3m-90 2l0 4 1 0m-1-6l0 2 1-2m98 1l0 2 2 4 4 0 0-5m0 0l0 5 5 1-4-6m12 3l0 4 5 0m9-4l6 5 0-4m128 19l11 2 0-1m0 1l0 5 13 2 0-5m0-1l0 1 12 2 0-1m13 3l0 5 12 2 1-5"/>
<path fill="#ff6800" d="M485 100l0 4 0 1 2 0-1-5m-17 0l-1 6 3 0-1-6m21 0l0 5 0 1 2 0 0-2-1-4m-8 0l1 4 0-4m12 0l0 6 2 0m-13-6l1 5 0-5m-5 0l1 3 0-3m5 0l1 5 0-5m1 0l1 5 0-5m-21 0l1 6 0-6m-10 0l-1 2 1 4 2 0 0-1-1-5m-4 1l-1 6 2-1m3-6l1 5 0-5m53 1l-1 6 4 0 0-2-1-3m-71 0l0 1 1 5 2-1 1-4-1-1m69 0l0 3 1 3 3 0 0-6m3 0l0 6 5 1-3-6m-87 0l0 6 1 0 1-6m97 1l0 6 6 1 0-1-3-6m3 6l0 1 1 0m26-3l0 5 0 1 6 1 0-6m102 15l0 5 12 2 0-5m13 2l0 6 1 0 11 1 0-5m13 2l0 5 12 2 1-5"/>
<path fill="#ff5800" d="M485 96l0 4 1 0m-17-4l0 4 1 0m21-4l0 4 1 0m-9-6l0 1 1 5 1 0 0-4 0-2m0 0l0 2 1 4 1 0 0-3 0-3m-6 0l1 6 1 0 0-5 0-1m4 0l0 3 1 3 1 0 0-3 0-3m1 0l-1 3 1 3 1 0 0-4 0-2m-22 0l0 2 1 4 1 0 1-5 0-1m17 0l0 3 1-3m-29 1l0 5 1 0 0-5m31-1l1 1 0-1m-32 1l0 5 1 0 1-5 0-1m2 0l1 2 0-2m41 1l1 2 0-2m7 1l0 5 2 1m-70-6l-1 6 3 0 0-6m70 0l-1 6 4 0-2-6m5 2l0 4 2 1m-88-6l1 6 2 0 0-3 0-3m89 0l1 3 0-3m-96 1l1 6 2-6m100 2l0 4 3 0m-4-6l1 2 0-2m-109 1l0 1 1-1m128 2l6 6 0-5m7 1l0 5 6 1 0-4-2-2m104 15l0 6 12 2 0-6m13 2l0 6 12 2 1-6m12 2l0 6 13 2 0-6"/>
<path fill="#ff4800" d="M484 88l-1 6 2 0m1-6l-1 6 2 0m-6-6l0 6 2 0-1-6m6 0l-1 6 2 0m1-6l0 6 1 0m-21-6l-1 6 3 0-1-6m11 0l1 6 1-6m4 0l1 6 1 0 0-6m-29 5l0 2 1 0m30-7l1 6 1 0 0-6m-32 1l-1 4 1 2 2-1-1-5m3-1l0 6 1 0 0-6m40 1l1 6 1 0 0-6m-60 1l-1 6 2 0m70-2l0 2 1 0m-3-6l2 4 0-4m-79 2l-1 4 0 1 3 0 0-6m86 0l3 6 1 0 1-5m-98 0l1 6 3 0 0-2-1-4m97 0l3 6 1 0 0-5m-109 1l0 5 1 0 1-6m127 2l0 6 6 1 1-6m3 0l3 3 0-2m0 2l0 4 4 0m104 11l0 4 12 2 1-4m12 3l0 3 13 2 0-3m0-3l0 3 12 2 0-3m0 3l0 3 13 2 0-3m0-3l0 3 13 2 0-3m0 0l0 3 12 2 0-3"/>
<path fill="#ff3800" d="M482 86l-1 2 1 0m-12-5l0 5 1 0m11-6l0 4 0 2 2 0 0-1-1-5m5 0l0 6 2 0-1-6m-6 0l1 5 0-5m-3 0l1 4 0-4m10 1l0 4 0 1 2 0 0-3 0-2m-15-1l1 2 0-2m-18 1l0 6 1 0 0-6m2 0l0 1 1 4 1 0 1-4-1-1m39 0l0 2 1 4 2 0 0-3-1-2m-3-1l1 2 0-2m6 1l1 2 0-2m4 0l1 6 2 0 0-5m-78 0l-1 7 2-1m84-6l0 1 2 5 5 1 0-5-1-1m-96 0l-1 5 0 1 3 0 0-4 0-2m95 0l0 1 2 5 4 1 1-6m-109 1l-1 4 0 2 2-1 0-1 0-5m127 2l0 6 7 1 0-2-4-4m4 0l0 4 3 2 3 1 0-6m83 12l0 5 7 2 5 1 1-6m50 8l0 5 12 2 1-5m12 1l0 6 13 2 0-6m0 0l0 6 12 2 0-6"/>
<path fill="#ff2800" d="M482 78l0 4 1 0m5-3l0 3 1 0m-7-5l0 1 1 4 1 0 0-3 0-2m-4 0l1 5 1 0 0-4 0-1m10 0l0 6 2 0m-16-6l1 5 1 0 0-5m-18 5l0 1 1 0m3-6l-1 6 2 0 0-6m5 0l1 4 0-4m-4 0l1 5 1-5m-9 0l0 5 1-5m43 1l0 5 2 1-1-6m-7-1l2 6 0-6m2 0l1 6 1 0 0-5m5 0l1 6 1 0 0-6m4 1l-1 5 1 0 3 1 0-3-1-3m-78 1l1 5 1-5m84 0l0 5 6 1-2-6m-93 0l-1 6 2 0m95-6l0 6 7 1 0-1-3-5m-103 0l0 2 1-2m-3 3l-1 4 1-1m127 0l0 2 3 1m4-5l0 5 6 1 1-6m0 0l6 5 0-4m76 11l0 6 13 2 0-6m50 8l0 6 13 2 0-6m12 2l0 5 13 2 0-5m0 0l0 5 12 2 1-5"/>
<path fill="#ff1800" d="M483 71l-1 6 2 0m-4-6l0 5 0 1 2 0-1-6m-3 0l0 3 0 3 2 0 0-1-1-5m-13 1l0 5 1 0m18-6l1 6 1-6m-16 0l1 6 1 0 1-6m-5 0l0 6 2 0 0-6m20 0l1 6 1 0 0-6m1 0l1 4 0-4m-34 0l1 6 1 0 0-6m43 3l0 4 1 0m-8-7l1 6 2 0 0-4 0-1m0 0l0 1 2 4 2 1 0-4-1-2m5 0l0 3 1 3 2 0 0-4 0-2m4 1l0 6 2 0m-72-6l0 1 1-1m74 0l2 5 0-4m-82 0l-1 3 0 3 2 0 1-6m83 0l0 6 4 0-3-6m-87 0l0 3 1-3m92 1l0 5 4 1-3-6m-100 0l0 6 1 0 1-6m116 2l1 2 0-2m13 2l0 6 7 0m0-5l0 5 6 1 0-5m76 12l0 4 13 2 0-3m50 10l0 1 13 2 0-1m0-5l0 5 12 2 1-5m-1 5l0 1 13 2 0-1m0 0l0 1 13 2 0-1"/>
<path fill="#ff0800" d="M481 68l-1 3 1 0m-3-6l0 6 1 0m6-6l0 5 0 1 2 0 0-1-1-5m-14 0l-1 5 0 1 3 0 0-4 0-2m-5 0l0 6 2 0 0-1 0-5m20 0l0 4 0 2 2 0 0-4 0-2m-9 0l1 5 0-5m1 0l1 5 0-5m1 0l1 5 0-5m4 0l0 2 1 4 1 0 0-6m-34 1l0 3 0 2 2 0 0-6m36 1l0 4 0 1 3 1-1-6m2 0l-1 6 3 0-1-6m6 0l0 6 3 0-2-5m-61 0l1 5 1-5m-5 0l0 6 1 0 0-6m73 0l0 2 1 4 2 1 0-6m-81 0l-1 6 2 0 0-2m83 1l0 1 1 0m-88-6l0 1 1 5 1 0 1-6m91 6l0 1 1 0m-99-6l-1 5 0 1 2 0 0-3 0-3m102 1l2 3 0-3m8 1l4 6 1 0 0-6m7 1l6 7 0-6m7 1l0 6 6 1 0-6m39 5l0 1 12 5 0-4m101 15l0 6 13 2 0-6"/>
<path fill="#f70000" d="M485 61l0 4 1 0m-14-6l0 6 2 0-1-6m-4 0l0 6 2 0-1-6m21 1l0 5 2 0-1-5m-9-1l0 1 1 5 1 0 0-4 0-2m0 0l0 2 1 4 1 0 0-4 0-2m0 0l0 2 1 4 1 0 0-5 0-1m4 1l0 5 2 0-1-5m-32 0l-1 6 2-1m36-5l0 6 2 0-1-6m3 1l0 5 1 0m-46-6l0 5 1-5m51 3l0 3 1 1m-61-6l0 6 2 0 0-2 0-4m0 0l0 4 1-4m-6 0l0 5 0 1 1 0 0-1 0-5m0 0l0 5 1-5m-3 1l1 4 0-5m74 1l0 5 3 1 0-3-1-3m-82 0l-1 6 3 0 0-4 0-2m86 1l2 4 0-4m-94 1l-1 5 1 0m99-6l3 7 2 0 0-6m4 0l3 5 0-4m0 0l0 4 1 2 5 0 1-5m6 1l0 5 6 1 1-6m6 3l0 4 6 1m-8-7l2 2 0-2m45 7l0 5 12 2 0-5m101 15l0 5 13 2 0-5"/>
<path fill="#e70000" d="M472 55l0 4 1 0m-3-2l-1 2 1 0m21 0l0 1 1 0m-9-6l0 5 2 0-1-5m2 0l-1 5 2 0m1-5l-1 5 2 0m5-2l-1 3 1 0m5-1l0 1 1 0m-22-7l1 4 0-4m-15 1l0 4 1-4m-8 0l1 6 1 0 0-5 0-1m42 0l2 6 0-6m-53 1l0 3 0 3 2 0-1-6m0 0l1 6 1 0 0-5 0-1m-5 3l-1 3 1 0m0-6l0 3 0 3 1 0 1-3-1-3m-3 1l0 2 0 4 1-1 1-3-1-2m0 0l1 2 0-3m73 1l0 6 2 0m-81-6l-1 6 2 0m84-5l1 3 0-3m0 0l0 3 1 3 2 0 0-6m4 1l0 2 1 3 5 1 1-5-1-1m1 0l0 1 3 5 3 1 0-6m0 0l0 6 7 1 0-2-3-4m9 1l0 6 7 0 0-3-3-3m3 1l0 2 4 4 2 0 0-5m45 6l0 6 12 2 1-6m50 7l0 5 13 2 0-5m12 2l0 6 8 1 5 1 0-6m25 4l0 6 13 2 0-6"/>
<path fill="#d70000" d="M484 51l-1 3 1 0m-6-6l0 5 1 0 0-5m2 0l1 2 0-2m3 0l1 3 0-3m-23 0l1 6 1 0 0-6m29 0l2 6 0-6m-39 1l0 2 0 3 2 0 0-6m41 0l1 6 2 0 0-4 0-1m-44-1l0 6 1-6m-9 1l-1 6 1 0m5-6l1 2 0-2m-6 0l0 6 2 0-1-6m-3 1l-1 5 1 0m-2-5l-1 6 1 0m63-7l1 2 0-2m-64 1l0 6 1-1 1-5m76 1l2 6 1 0 0-6m0 0l0 6 3 0 1-4-1-2m4 1l0 6 6 0-3-6m4 1l0 5 6 1 0-4-1-2m1 2l0 4 4 1m9-3l0 4 4 0m3-5l0 6 6 1 0-6m45 8l0 4 13 2 0-1m50 5l0 3 13 2 0-3m12 3l0 2 13 2 0-2m13-2l0 4 12 2 0-4m0 4l0 2 13 2 0-2m-13-6l0 4 13 2 0-4"/>
<path fill="#c70000" d="M478 42l-1 4 1 2 1 0 0-6m1 0l1 6 1 0 0-6m2 0l1 6 1 0 0-6m-23 0l0 3 0 3 2 0 0-3 0-3m29 0l0 4 0 2 2 0 0-5m-39 0l0 6 2-1-1-5m7-1l0 3 1-3m34 1l0 4 0 1 3 1-1-6m-44 0l1 5 1 0 0-5m-4 0l0 6 1 0 0-6m-6 0l0 6 1 0 0-6m57 0l1 6 1 0 0-5m-63 0l-1 6 2 0m-4-6l0 6 1-6m79 1l0 6 3 0 0-5 0-1m0 1l0 5 3 0m-90-6l1 2 0-2m93 1l0 6 3 0m4-5l0 6 5 0-3-6m24 3l0 6 6 1 1-2-5-4m0 0l5 4 0-4m70 10l0 5 12 3 0-6m76 13l0 4 12 2 0-4m-12-3l0 1 12 2 1-1m-1 1l0 4 13 2 0-4m0-2l0 2 13 2 0-2"/>
<path fill="#b70000" d="M478 37l0 5 1 0m1-6l0 4 0 2 2 0 0-1-1-5m3 0l0 6 2 0-1-6m-21 1l-1 5 2 0m29-5l0 5 2 1-1-6m-16-1l1 4 0-4m-22 4l-1 3 1 0m6-6l1 5 1 0 0-6m34 1l0 6 2 0-1-6m-43 0l0 3 0 3 2 0 0-6m-5 0l1 6 1 0 1-3-1-3m-5 3l-1 3 1 0m1-6l1 6 1-6m53 1l0 1 1 4 2 1 0-6m-62 0l1 3 0-3m-5 1l-1 2 1 3 1 0 0-2 0-4m0 0l0 4 1-4m-3 1l0 2 1-2m75 0l2 4 0-4m3 0l0 6 3 0-2-6m-85 0l0 6 1 0 1-6m99 5l0 3 2 0m-3-6l1 3 0-3m9 1l4 7 0-6m13 6l0 1 2 1m-2-6l0 4 2 2 5 0 0-4-2-2m2 1l0 1 6 5 0-6m64 11l0 4 12 2 0-2m26 0l0 5 12 3 0-6m0 0l0 6 13 2 0-6m25 4l0 6 13 2 0-6m12 2l0 5 13 2 0-5"/>
<path fill="#a70000" d="M480 30l0 6 1 0 0-6m4 2l-1 4 1 0m10-1l-1 2 1 0m-16-7l0 6 1 0 0-6m-16 1l0 1 0 5 2-1 0-5m34 5l0 1 1 0m-43-6l0 6 2 0-1-6m35 0l1 4 0-4m-40 0l0 5 0 1 2 0 0-6m-4 1l0 5 2 0 0-1 0-4m53 0l0 6 3 0-1-6m-61 0l0 1 0 5 1 0 1-6m-4 0l0 1 1 5 1-5 0-1m-4 1l0 6 1-1m-1-5l1 5 1 0 0-5 0-1m-3 1l0 6 1 0 0-6m74 0l1 6 2 0 0-6m3 4l0 2 1 0m-85-6l0 6 2 0 0-6m95 2l3 6 1 0 0-5m5 0l2 4 0-4m0 0l0 4 2 2 4 1 1-6m12 4l0 4 5 0m2-5l0 6 6 0 0-2-4-4m0 0l4 4 0-3m102 17l0 3 12 2 0-2m-12-5l0 2 12 3 0-3m0 3l0 2 13 2 0-2m25 4l0 2 13 2 0-1m12 2l0 1 13 2 0-1"/>
<path fill="#970000" d="M479 25l-1 3 1 2 1 0 0-5m-9 0l1 2 0-2m10 0l0 6 1 0 0-6m-19 0l0 6 2 0 0-6m2 0l1 5 1-5m16 0l1 6 0-6m-28 3l-1 3 1 0m7-6l0 6 1 0 0-6m21 0l1 6 0-6m1 0l1 4 0-4m2 0l0 2 1 4 1 0 0-6m-39 1l-1 5 2 0m-4-5l0 4 0 2 2 0-1-6m54 0l0 6 2 0m-60-6l-1 6 2 0m-3-5l-1 5 2 0-1-6m0 0l1 6 1-6m-4 1l-1 6 2-1 0-5m-3 0l0 6 1 0 0-6m0 0l0 6 1-6m73 0l0 6 3 0 0-4 0-2m-80 0l-1 6 2 0 1 0-1-6m0 0l1 6 0-6m92 2l0 2 2 4 4 1 1-6m0 0l4 6 2 0 0-5m0 0l0 5 7 1 0-4-2-2m21 8l0 1 2 0m-2-6l0 5 2 1 4 1 1-5 0-1m101 15l0 6 12 2 1-6-2 0m65 9l0 2 12 2 1-2"/>
<path fill="#870000" d="M481 8l-8 3 13 1 8-2m0 0l-8 2 12 2 8-3m0 0l-8 3 13 2 8-3m-54 0l-8 3 6 1 3 1 4 0 2 0 2-1 4-2m20-1l-8 3 3 1 3 0 4 1 3 0 8-3m-37 1l-2 1 3 0 2-1m55-2l-9 3 7 1 6 1 8-3m-67 0l-2 1 1 0 2 1 2-1m-17-1l-2 1 3 1 2-1m6 0l-2 0 1 1 2 0 1-1 1 0m0 0l-1 0 1 1 1-1m17 0l-2 1 2 0 1 0 2-1m-16 0l-2 1 1 0 2 2 1-2 1-1m-17 0l-2 1 2 0 1 0 2 0 1-1m-17 0l-2 1 3 0 2-1m23 1l0 6 1 0m8-7l-2 1 2 0 1 1 1-1 1 0m-30-1l-2 1 2 0 1 0 1 0 1 0m7 0l-1 0 1 6 1 0 0-6 1 0m9 0l-1 2 1 4 1 0 0-4 1-2m-19 0l-1 6 2 0m19-6l-1 0 1 3 1-3m5 0l-1 0 2 0 1 0m-24 0l-2 0 1 6 2 0 0-6m26-1l-2 1 2 0 2 0 2 0m-14 0l-1 3 1 3 1 0 0-4 1-2m-24 0l-1 0 2 0 1 0m0 0l-1 0 1 6 1 0 0-6m-11-1l-2 1 2 0 1 1 1-1 1 0m29 0l-1 2 1 4 1 0 0-5m1-1l-1 1 1 5 1 0 0-6 1 0m1 0l-1 0 1 0 1 0m-35 0l-1 0 2 0 1 0m32 0l0 6 2 0 0-1m-3-5l-1 0 2 6 0-6m-42 0l-2 0 3 1 1-1 1 0m46 0l-2 0 3 5 0-4 1 0 1-1m-49 0l-1 0 2 1 1-1m88-2l-8 3 6 1 7 1 8-3m-54 0l-1 1 3 0 1 0m-52 0l-1 6 1 0m-1-7l-1 1 2 0 1 0m47 0l-1 0 3 5 1-5m-56-1l-2 1 1 0 2 3 1-3 1 0m54 0l-1 0 3 6 1-6m10 0l-2 0 4 1 2-1m7-1l-4 2 3 0 3 1 4-2m-88 4l0 3 0-1m-1-6l-1 0 1 1 1-1m0 0l-1 1 1 3 0 2 2 0 0-3m-4 2l0 2 1 0m-1-7l-1 1 1 4 1-4m-2 3l-1 3 1 0m0-6l-1 0 1 3 0 3 1 0 0-2m73-4l0 6 3 0m4-6l-2 0 3 1 2-1m-86 3l-1 3 1 0m1-6l-1 3 0 3 1 0 1-3m76-3l-1 0 3 1 1-1m12-1l-4 2 6 0 4-1m15-2l-8 3 6 1 6 1 8-3m-40 0l-2 1 3 0 2 0m0 0l-2 0 3 1 3 0 2-1m11 0l-4 1 6 1 4-1m-19 0l0 6 7 1 0-1m26-8l-8 3 7 1 6 1 8-3m-37 0l-2 6 0 1 6 1 0-6 1 0 1-1m4-1l-4 1 6 1 4-1m-12 1l0 6 5 0m14-6l-5 1 7 1 4-1m20-1l-8 3 13 2 8-3m-27 0l-4 1 6 1 4-1m-10 0l-1 6 7 1 0-6m25-2l-8 3 13 1 8-2m12 1l-8 3 13 2 8-3m12 2l-8 3 13 2 8-3m0 0l-8 3 13 2 8-3m-34-1l-4 3 13 4 4-5m21-1l-8 3 12 2 8-3m0 0l-8 3 13 2 8-3m-25 7l0 1 11 2m26-8l-8 3 13 2 8-3m0 0l-8 3 12 2 9-3m12 1l-8 3 13 2 8-3m0 0l-8 3 12 2 8-3m-20 1l-4 7 13 2 3-7"/>
</g>
<path d="M444.1 315.5l0.8 0.1M443.1 315.3l1 0.2M435.9 315.6l1.9-0.2M433.9 315.8l2-0.2M431.6 316l2.3-0.2M429.3 316.2l2.3-0.2M424.5 316.3l2.4 0M421 318.1l-0.6 0M421.4 318l-0.4 0.1M421.4 318.1l0-0.1M421 318.1l0.4 0M420.3 318.3l0.7-0.2M419.1 318.6l1.2-0.3M417.6 318.9l1.5-0.3M415.8 319.2l1.8-0.3M411.4 320.8l-0.8 0.1M411.9 320.7l-0.5 0.1M412 320.7l-0.1 0M411.7 320.8l0.3-0.1M411 321l0.7-0.2M409.8 321.3l1.2-0.3M408.4 321.6l1.4-0.3M405.4 322.8l-0.6 0.1M405.7 322.8l-0.3 0M405.5 322.8l0.2 0M404.8 323l0.7-0.2M402.3 323.6l1.5-0.3 1-0.3M400.4 324.6l-0.6 0.1M400.6 324.5l-0.2 0.1M400.3 324.6l0.3-0.1M399.6 324.8l0.7-0.2M395.5 326.3l-0.9 0.1M396 326.2l-0.5 0.1M396 326.2l0 0M395.5 326.3l0.5-0.1M394.6 326.6l0.9-0.3M391.6 327.8l-0.2 0M391.4 327.9l0.2-0.1M387.2 329.4l-0.3 0.1M386.4 329.7l0.7-0.2 0.1-0.1M360.4 339.5l0.6-0.2" stroke="#000" stroke-width="1.8" stroke-linecap="round" stroke-linejoin="round" fill="none"/>
<path d="M506.9 321.1l-4-4.7-2.9-3.1-2-1.8-1.1-0.8-0.3 0.2 0.5 1.1 1.4 2.2 2.3 3.3 3.4 4.7M502.7 317.9l-2.2-3.4-1.2-2.2-0.3-1.1 0.6 0 1.6 1 2.5 2.3 3.5 3.8M506.7 317.4l-3.3-3.5-2.3-2-1.2-0.8-0.4 0.3 0.5 1.4 1.6 2.5 2.5 3.8M507.2 318.3l4.9 5.8M511.2 322.7l-4.5-5.3M509.6 320.9l-2.3-4.3-1-2.7 0.2-1.3 1.2 0.1 2.5 1.7 3.7 3.4M496.6 316.2l4.6 4.3 5.7 6.2 7.1 8.6M512.1 327.9l-5.2-6.8M504.2 322.2l4.5 6.6 6 8.8M510.5 329.6l-4.5-6.8-3.3-4.9M517 330.3l-5.8-7.6M504.1 319.1l3.7 5.5 5 7.5M513.1 327l-3.5-6.1M518.8 337.1l-6.7-9.2M512.1 324.1l6.1 8.2M518 335.3l-4.9-8.3M513.9 317.8l5 5.7 6.6 8.3M484.5 311.2l1.3-0.4 1.8 0.1 2.4 0.9 2.9 1.6 3.7 2.8M500.1 335.2l-7.8-7.5M497.5 331.8l-7.5-6.6M514 335.3l8.5 11.4M514.7 337.6l7.4 11.3M516.4 338.8l-5.9-9.2M524.4 340.7l-7.4-10.4M512.8 332.1l6.4 10M509.2 345.5l-9.1-10.3M491.1 327.1l7.8 7.3 9 9.9M516.1 352.9l-10-11.9-8.6-9.2M493 329.7l8.6 8.2 9.9 11M529 318l-1.3-2.9 0.4-0.3 1.9 2.1M518.2 332.3l7.8 11M524.5 346.2l-6.5-10.9M525.5 331.8l8.3 11.4M522.5 346.7l10.2 14M527.1 349.1l-8.3-12M523.9 350.4l-7.5-11.6M533.5 354l-9.1-13.3M519.2 342.1l8.1 12.4M486.6 323.6l-1.8-3.4-1.1-2.8-0.5-2.2 0-1.8 0.4-1.3 0.9-0.9M483.5 320.7l-5.7-3M519.9 358.2l-10.7-12.7M507.9 344.3l10.6 12.5M511.5 348.9l11.5 13.4M489.2 328l-2.6-4.4M492.3 327.7l-6.8-5.3-6-3.6M478.2 318.7l6.1 3.4 6.8 5M490 325.2l-6.5-4.5M478.9 320.1l6.7 3.9 7.4 5.7M536.8 331.7l-4.8-8.3-3-5.4M530 316.9l3.7 4.8 5.5 7.7M526 343.3l9.5 13.7M537.1 363.5l-10-14.4M522.1 348.9l9.1 13.5M533.1 364l-9.2-13.6M527.3 354.5l9.8 14.2M532.8 359.4l-8.3-13.2M518.5 356.8l12.1 13.9M527.7 366.7l-11.6-13.8M543.4 343.1l-6.6-11.4M539.2 329.4l7.3 11.1M545.5 326.1l-3.4-6.2-1.6-3.1 0.4-0.1 2.2 2.9M533.8 343.2l10.1 14.4M485 338.3l9.1 8.8M497.6 340.4l-4.8-6.9-3.6-5.5M479.5 318.8l-5.4-2.2-5.1-1.4M472.6 316.6l5.6 2.1M477.8 317.7l-5.4-1.8M532.7 360.7l11.9 15.1M535.5 357l11.2 15.5M544.3 369.2l-10.8-15.2M542.7 373.7l-9.9-14.3M532 372.1l-12.1-13.9M523 362.3l13 13.7M472.9 317.7l6 2.4M494.1 347.1l10.5 9.9M503.7 349l-6.1-8.6M551.9 357.5l-8.5-14.4M546.5 340.5l9.3 14.3M550.8 335.6l-5.3-9.5M543.1 319.6l4.1 6 6.1 9.5M542.5 359.6l11.8-21.4M516.5 365.5l12.9 2.6 13.1-8.5M531.2 362.4l10.8 14M530.6 370.7l13.6 12M543.9 378l-10.8-14M540.9 379.9l-13.2-13.2M548.8 378.5l-11.7-15M511.3 358.9l-7.6-9.9M558.2 348.5l-7.4-12.9M554.3 338.2l8.9-26.3M553.3 335.1l8.1 13M552.6 358.9l-10.8 14.5M543.9 357.6l11.9 16.3M557.6 331.5l-4.4-8-2.3-4.5-0.4-1.2 1.7 2.2 3.6 5.6M541.8 373.4l-11 1.7M545.6 383.6l-13.6-11.5M537.1 368.7l11.4 13.5M536 376l14.3 10M504.6 357l11.9 8.5M520.4 368.7l-9.1-9.8M556.9 384.2l-12.6-15M469 315.2l-5-0.6-4.8-0.3M462.4 314.8l5 0.6 5.2 1.2M472.4 315.9l-5-1-4.9-0.5-4.9 0M461.7 315.5l5.5 0.8 5.7 1.4M544.6 375.8l13.3 12.6M542 376.4l12.2 11M556.2 388.4l-12.3-10.4M546.7 372.5l12.9 14.3M555.2 387.6l-14.3-7.7M554.2 386.2l-11.5-12.5M561.5 332.8l-8.9 26.1M555.8 354.8l11.3 16.8M567.6 364.3l-9.4-15.8M561.4 348.1l10.1 16.1M572.5 358l-8.5-14.9-6.4-11.6M555.8 325.6l5.7 9.2 7.9 12.8M562.4 373.8l-10.5-16.3M567 306.7l-5.5 26.1M573.5 345.7l-6.6-12.2-4.6-8.4M561.4 321.7l3.9 6.1 5.9 9.9M465.6 322.5l5.3 3.7 6.5 5.1 7.6 7M562.3 325.1l-2.4-4.7-0.3-1.1 1.8 2.4M570.7 325.1l-1.9-3.9 0.3-0.1 2.4 3.6M555.8 373.9l13.6 15.3M563.2 311.9l4.5-14.3M530.8 375.1l-10.4-6.4M567.7 297.6l-0.7 9.1M561.9 390.3l-13.1-11.8M554.2 387.4l13 2.2M560.2 387.1l-14.6-3.5M544.2 382.7l14.5 4.6M570.7 394l-13.8-9.8M548.5 382.2l12.6 8.2M550.3 386l14.9-0.1M566.7 391.7l-12.5-5.5M578.9 381.5l-11.3-17.2M571.5 364.2l12.2 17.5M583.1 375.1l-10.6-17.1M569.4 347.6l9.9 16M582.3 361.1l-8.8-15.4M571.2 337.7l8.2 13.6 10.3 16.7M581 344.5l-6.3-11.6M576.1 332.3l6.8 11.4M587.3 349.2l-12.7 26.9-14.4 11M558.7 387.3l14.6-9.3 13.1-25.7M583.7 362.3l-13.8 21M565.2 385.9l14.5-15.9M574.5 389.4l-12.1-15.6M567.1 371.6l13 16.7M574.7 332.9l-4-7.8M571.5 324.7l4.6 7.6M587.7 340.9l-5.3-10.2-3.1-6.2M567.2 389.6l12.9-12.8M581.8 375l-12.7 14.4M569.9 383.3l-14.7 4.3M579.3 324.5l-0.8-2.3 1.3 1.8 3.6 5.7M557.9 388.4l14.4 4.3M575.9 392.8l-14-2.5M569.1 389.4l-12.9-1M559.6 386.8l14 8M561.1 390.4l13.1-3.3M579.4 383.8l-12.7 7.9M569.4 389.2l14.8 9.1M454.5 316.8l3 1.3 3.6 1.8 4.5 2.6M459.2 314.3l-4.9 0.1-4.8 0M452.4 314.5l5 0.1 5 0.2M457.6 314.4l-4.9 0M451.1 314.8l5.3 0.3 5.3 0.4M580.1 376.8l11-28.5M592.5 345.3l-10.7 29.7M574.2 387.1l12.3-19.8 9.7-32.4M594.7 330.1l-11 32.2M579.7 370l12.2-30.1M599.2 326.1l-8.4 33.3-11.4 24.4M579.3 363.6l11.9 17.8M593.1 378.7l-10.8-17.6M589.7 368l12.2 18M599.9 377.1l-10.6-17.5-8.3-15.1M596.5 317.3l-9.2 31.9M586.4 352.3l9.7-32.2M582.9 343.7l9 15 11.1 17.6M591.1 348.3l7.4-32.2M599.3 313.9l-6.8 31.4M595.2 354.8l-7.5-13.9M589.2 339.4l8 13.6M572.3 392.7l14.2-10.8 12.7-27.7M589.6 379.5l-13.7 13.3M591.9 396.6l-13-15.1M583.7 381.7l13.8 15.7M595.5 392.1l-12.4-17M591.9 339.9l8.2-29M583.4 329.7l5.8 9.7M595 336.2l-4-8M601 305.3l-6.3 24.8M591 328.2l-1.7-3.8 0.6 0.2 2.8 4.4 5.1 8.5M573.6 394.8l14.4-5.2M580.1 388.3l14.6 12.3M596.1 320.1l4.6-17.6M585.1 392.1l-14.4 1.9M588 399.4l-13.5-10M599.2 354.2l9-33.7M601.4 349.9l-11.8 29.6M588 389.6l13.2-22.9 10.4-34.4M609.8 339.7l-11.1 33.2M604.9 371.8l-9.7-17M597.2 353l10.2 16.8M598.7 372.9l-13.6 19.2M612.3 394.6l-12.4-17.5M609.4 316.9l-8 33M609.6 363.7l-8.4-15.5-6.2-12M597.8 337.5l7.4 12.5 9.6 16M591.2 381.4l13.7 16.3M605.8 395.6l-12.7-16.9M596.2 334.9l5.3-27.5M602.6 304.4l-3.4 21.7M608.2 341.2l-4.5-9.3-2.3-5 0.1-0.8 2.3 3.4 4.6 7.7M584.2 398.3l15.3-4.2M609.4 404.2l-13.9-12.1M608.2 320.5l3.7-17.1M598.5 316.1l2-14-4 15.2M600.7 302.5l-1.4 11.4M611.9 303.4l-2.5 13.5M601.5 307.4l-0.5-2.1M600.1 310.9l2.5-6.5M447.2 314.6l1.3 0.3 1.6 0.5 1.9 0.6 2.5 0.8M449.5 314.4l-4.8-0.2M442.6 314.1l4.9 0.3 4.9 0.1M452.7 314.4l-4.8 0-4.8-0.3M446 314.5l5.1 0.3M602 396.9l-14 2.5M594.7 400.6l15.2 0.9M606.1 403.8l-14.2-7.2M599.5 394.1l14.1-22.2 11.3-34.8M625.7 342l-10.5 34.5-13.2 20.4M603 376.3l13.1 17.9M616.6 389.8l-11.7-18M607.4 369.8l12.3 18.3M620.2 381.6l-10.6-17.9M614.8 366l11.7 18.3M624.2 370.9l-9.1-16.5-6.9-13.2M615.4 349l9.2 15.5M601.9 386l14.1 15.7M616.4 310.2l-6.6 29.5M608.4 337.2l7 11.8M611.6 332.3l5.5-25.5M622.3 345.4l-4.9-10-2.7-5.8-0.2-1.5 2 2.8 4.4 7.1M604.9 397.7l14.9 9.5M619.9 406.8l-14.1-11.2M626.2 407.4l-13.9-12.8M617.1 306.8l-0.7 3.4M620.4 396.2l-14.3 7.6M597.5 397.4l15 8.1M440 313.7l-4.4-1.1M433.8 311.9l4.2 1.3 4.6 0.9M443.1 314.1l-4.6-0.8-4.2-1.3M432.4 310.8l4.1 1.7 4.6 1.2M609.9 401.5l14.7-16.7 12.4-33.1M633.3 369.9l-12.9 26.3M632.7 399.2l-12.5-17.6M626.5 384.3l13.6 17.5M635.4 389.2l-11.2-18.3M624.6 364.5l11.4 18M639 376.6l-9.5-17.2-7.2-14M616.1 394.2l14.6 13.6M630.1 405.2l-13.5-15.4M619.7 388.1l14.1 16.3M620.9 338l6.7 11.4 9 15.2M624.9 337.1l6.4-26.9M631.6 312.4l-5.9 29.6M637.1 349l-5.1-10.5-2.8-6.3M630.6 332.8l4.3 6.9M612.5 405.5l15.2-6.8M629.2 332.2l-0.5-1.9 1.9 2.5M631.3 310.2l0.3 2.2M438.8 313.7l1.4-0.1 1.3 0 1 0.1 1 0.2 0.8 0.1 0.9 0.2 0.9 0.2 1.1 0.2M444.7 314.2l-4.7-0.5M441.1 313.7l4.9 0.8M623.9 404.4l-14.5-0.2M616 401.7l15.1 7.7M627.7 398.7l13.9-25.6M649.5 352.7l-11.6 34-14 17.7M648.4 405.9l-13-16.7M636 382.5l13.3 18.1M650.5 394.9l-11.5-18.3M642.9 333.6l-9.6 36.3M641.6 373.1l10.6-36.4M636.6 364.6l11.2 17.9M644.5 363.5l-7.4-14.5M637 351.7l8.1-33M634.9 339.7l6.6 11.2 8.9 15M619.8 407.2l15.3-4.8 14.2-23.6M648.4 385.4l-13.9 20-14.6 1.4M633.8 404.4l15.2 8.6M646.7 411.6l-14-12.4M647.2 310.3l-4.3 23.3M647.5 341.3l-2.9-6.5-0.5-2 1.9 2.4 4.3 6.8M428.6 309.4l-2.1-1.5-0.9-0.8 0.3 0.3 1.6 1.1M428 308.5l-1.6-1.2-0.3-0.4 1 0.7 2.1 1.4M645.1 318.7l2.1-8.4M428.7 314.6l2.3-0.2 2.3-0.2 2-0.2M435.6 312.6l-3.9-1.5-3.1-1.7M427.5 308.5l2.7 1.7 3.6 1.7M434.3 312l-3.6-1.7-2.7-1.8M429.2 309l3.2 1.8M631.1 409.4l15.3-7.8M640.9 408.7l-14.7-1.3M630.7 407.8l15.4 2.6M644.6 411.9l-14.5-6.7M649.3 378.8l11.1-36.4M659.6 350.1l-11.2 35.3M646.4 401.6l13.9-26.8M647.8 382.5l13.2 18.4M665.9 399.3l-11.7-18.4-9.7-17.4M650.4 365.9l11.1 17.9M656.6 319.7l-7.1 33M660.2 366.8l-7.5-14.7-5.2-10.8M650.3 342l6.6 11.1 8.9 15.1M655 391.9l-14.1 16.8M640.1 401.8l15.1 11.8M662.7 415.4l-14.3-9.5M649.3 400.6l14.9 13.6M663.8 410.8l-13.3-15.9M435.3 314l1.9-0.2 1.6-0.1M652.2 336.7l5.4-24.5-1 7.5M659.1 402.5l-14.5 9.4M666.9 358.2l-11.9 33.7M661.1 395.3l12.9-32.7M672.1 374.1l-13 28.4M661.5 383.8l13.2 18.5M660.3 374.8l10.4-36.9M669.9 384.4l-9.7-17.6M665.8 368.2l11.1 17.9M674.4 324l-7.5 34.2M676.5 369.5l-7.5-14.7-5.2-10.8M660.4 342.4l6.1-27.3M666.2 318.7l-6.6 31.4M663.8 344l-2.8-6.5M662.5 337.8l4.3 6.9 6.6 11.2M646.1 410.4l15-15.1M649 413l15.5-6.5M661 400.9l14.8 14.4M420.4 316.5l0.4 0 0-0.1-0.4 0.1M416.9 314.5l1.2 0 1.7 0.1 1.9 0.1 2.2 0 2.4 0 2.4-0.1M670.7 337.9l5.1-23.3M661 337.5l-0.5-2.1 2 2.4M666.5 315.1l-0.3 3.6M661.4 412l-14.7-0.4M655.2 413.6l15.6-1.1M664.5 406.5l14.2-25.8M687.1 359.2l-11.6 34.7-14.1 18.1M681.7 402.7l-11.8-18.3M676.9 386.1l13.2 18.5M681.5 337l-9.4 37.1M678.7 380.7l10.8-37.2M686.2 387.2l-9.7-17.7M673.4 355.9l9 15.1M674 362.6l8.7-35.1M686 357.3l-5.1-10.8-2.7-6.4M670.8 412.5l14.8-20M677.3 410.6l-14.6 4.8M678.2 418.1l-14.4-7.3M679.3 414.5l-13.4-15.2M674.7 402.3l14.8 14.8M685.3 315.6l-3.8 21.4M678.2 340.1l-0.4-2 2 2.6 4.5 7 6.7 11.4M675.8 314.6l-1.4 9.4M682.7 327.5l2.6-11.9M664.2 414.2l15.7 2.1M409.3 317.9l2 0 2-0.1 1.9-0.2 1.8-0.3 1.5-0.3 1.2-0.3 0.7-0.2-0.6 0-0.8-0.1-0.9-0.1-0.9-0.3-0.7-0.3-0.5-0.4-0.1-0.4 0.3-0.2 0.7-0.2M685.6 392.5l12.2-35.6M701.2 349.3l-10.4 37.1-13.5 24.2M698 405.5l-11.8-18.3M682.4 371l11.3 18M703.1 389.6l-9.7-17.6-7.4-14.7M694.2 325.6l-7.1 33.6M691 359.1l9.1 15.2M679.9 416.3l15.2-16M692.7 409.5l-14.5 8.6M693.8 420.4l-14.5-5.9M695.2 417.6l-13.5-14.9M689.5 343.5l5.6-25.2M698.7 349l-2.6-6.3-0.3-1.7 2.2 2.7M695.1 318.3l-0.9 7.3M675.8 415.3l15.7 3.9M695.1 400.3l13-33.6M705.7 381.7l-13 27.8M693.7 389l13.2 18.5M714.8 408l-11.7-18.4M715.2 344.2l-9.5 37.5M700.1 374.3l11.4 18M711 374.2l-7.3-14.6-5-10.6M697.8 356.9l7.5-31.8M706.4 321.5l-5.2 27.8M698 343.7l4.5 7.2 6.9 11.6M691.5 419.2l15.4-13.7M690.1 404.6l14.8 14.9M711.5 420.4l-13.5-14.9M403.2 321.7l1-0.3 0.7-0.2 0.2 0-0.3 0-0.6 0.1-1 0.1-1.2 0.1M400.4 320.3l1.8 0.1 1.9 0 1.9-0.2 1.8-0.2 1.4-0.3 1.2-0.3 0.7-0.2 0.3-0.1-0.1 0-0.5 0.1-0.8 0.1-1.1 0-1.2-0.1-1.2-0.2-1.1-0.4-0.7-0.4-0.4-0.3 0.1-0.2 0.6-0.1 1 0.1 1.5 0.1 1.8 0.1M705.3 325.1l1.1-3.6M708.2 409.6l-14.4 10.8M689.5 417.1l15.7 4.7M709.6 422.8l-14.4-5.2M706.9 405.5l13.4-32.1M720.9 379.7l-12.7 29.9M711.5 392.3l13.3 18.5M720.6 391.7l-9.6-17.5M709.4 362.5l9.3 15.4M708.1 366.7l8.6-34.9M705.2 421.8l15.6-12.6M706.9 407.5l14.9 14.9M719.2 321.3l-4 22.9M714.6 345.4l-0.1-1.5M716.7 331.8l2.5-10.5M397.4 320.4l-0.3-0.3 0.1-0.2 0.6 0.1M704.9 419.5l15.8 4.9M394.9 324.7l0.5-0.1 0 0-0.5 0.1M392.7 324.1l1.9-0.1 1.7-0.2 1.5-0.3 1.2-0.3 0.7-0.2 0.3-0.1-0.2 0.1-0.6 0.1-1 0.1-1.3 0.1-1.3-0.1-1.4-0.2-1.2-0.3-0.9-0.4-0.5-0.3 0-0.2 0.6 0.1 1 0.1 1.4 0.2 1.7 0.2 1.9 0 1.8-0.2 1.7-0.2 1.5-0.3M402 321.5l-1.4-0.1-1.3-0.3-1.1-0.3-0.8-0.4M397.8 320l1.1 0.1 1.5 0.2M720.8 409.2l13.6-31.3M736.4 380.1l-12.5 30.8M720.3 373.4l9.3-36.1M729.8 342.5l-8.9 37.2M723.9 410.9l-14.3 11.9M728.2 422.9l-13.4-14.9M733 322.9l-3.2 19.6M729.6 337.3l3.4-14.4M720.7 424.4l15.6-12.4M725.9 425.3l-14.4-4.9M721.8 422.4l15.9 4.6M736.3 412l13.7-31M734.4 377.9l9.6-36.5M745 343l-8.6 37.1M383 325.6l-0.5-0.3 0.1-0.2 0.5 0.1 1.1 0.1 1.4 0.3M388.8 324.5l-1.1-0.4-0.6-0.3-0.2-0.2 0.3-0.1 0.8 0.1 1.3 0.2M740.1 413.2l-14.2 12.1M385.5 327.3l1.8-0.2 1.5-0.3 1.2-0.3 0.8-0.2 0.2-0.1-0.2 0-0.6 0.1-1 0.2-1.3 0-1.4 0-1.4-0.2-1.2-0.4-0.9-0.3M385.6 325.6l1.8 0.1 1.8 0 1.8-0.1 1.6-0.3 1.4-0.3 0.9-0.3-0.9 0.1-1.1 0.1-1.4 0-1.4-0.1-1.3-0.3M389.3 323.8l1.6 0.2 1.8 0.1M744 341.4l3.8-16.3-2.8 17.9M742.6 428.1l-14.4-5.2M752.5 382.2l-12.4 31M380.3 327.8l-1.1-0.4-0.8-0.3-0.3-0.3 0.2-0.1 0.8 0.1 1.2 0.2M377.3 330.6l1.7-0.3 1.4-0.3 1-0.3 0.5-0.1 0.1-0.1-0.4 0.1-0.8 0.1-1.2 0.1-1.3 0.1-1.4-0.2-1.4-0.3M374 328.4l0.9 0.1 1.3 0.3 1.7 0.1 1.8 0.1 1.9-0.1 1.7-0.3 1.5-0.3 1-0.2 0.7-0.2 0.1-0.1-0.3 0.1-0.8 0.1-1.1 0.1-1.3 0.1-1.4-0.1-1.4-0.3M380.3 327l1.6 0.2 1.8 0.1 1.8 0M370.6 331.2l-1-0.4-0.6-0.4 0-0.2 0.4 0 1 0.1 1.4 0.3M375.5 329.4l-1-0.4-0.7-0.3-0.1-0.3 0.3 0M370.4 333.8l1-0.3 0.5-0.1 0-0.1-0.4 0.1-0.9 0.1-1.2 0.1M365.5 332.3l1.5 0.2 1.7 0.1 1.9 0 1.9-0.2 1.7-0.2 1.4-0.4 1-0.2 0.5-0.2 0 0-0.4 0-0.9 0.2-1.1 0.1-1.4 0-1.4-0.2-1.3-0.3M371.8 330.6l1.7 0.1 1.9 0 1.9-0.1M359.1 334.7l-0.5-0.4 0-0.2 0.6 0 1 0.2 1.5 0.2 1.8 0.1M365.5 333.1l-1-0.4-0.5-0.4 0-0.2 0.5 0 1 0.2M361.7 336.6l1.7-0.3 1.4-0.4 1-0.3 0.6-0.1 0-0.1-0.4 0.1-0.9 0.1-1.1 0.1-1.4 0-1.3-0.2-1.3-0.4-0.9-0.4M363.5 334.6l1.9 0 1.9-0.2 1.7-0.3 1.4-0.3M369.4 333.6l-1.3 0-1.4-0.2-1.2-0.3M355.5 337.7l-1.2-0.4-1-0.4-0.5-0.4 0.1-0.2 0.5 0 1.1 0.1 1.5 0.2M353.5 340.3l0.6-0.2 0.2-0.1-0.4 0.1-0.8 0.1M351.7 339l1.9 0 2-0.1 1.7-0.3 1.5-0.4 1-0.3 0.6-0.2 0.1 0-0.4 0-0.8 0.1-1.1 0.1-1.4 0-1.3-0.2M356 336.6l1.8 0.2 2 0 1.9-0.2M340.3 341.1l0.5-0.1 1 0.1 1.5 0.2 1.8 0.2M348.2 339.7l-0.9-0.5-0.5-0.3 0-0.3 0.5 0 1.1 0.1 1.5 0.2 1.8 0.1M345.6 343.2l1.2-0.4 0.7-0.2 0.2-0.1-0.3 0.1-0.7 0.1-1.1 0-1.2 0M345.1 341.5l2 0 2-0.2 1.8-0.3 1.5-0.4 1.1-0.3M353.1 340.2l-1.1 0.1-1.2-0.1-1.4-0.2-1.2-0.3M335.2 344.8l-1-0.5-0.6-0.4-0.1-0.3 0.5 0 1 0 1.4 0.2 1.8 0.2M343 342.5l-1.2-0.3-0.9-0.5-0.6-0.4 0-0.2M336.9 346.2l1.6-0.4 1.2-0.3 0.8-0.3 0.3-0.1-0.2 0-0.7 0.1-1 0.1-1.2 0-1.3-0.2-1.2-0.3M338.2 344l2 0 2-0.2 1.8-0.3 1.6-0.3M344.4 342.7l-1.4-0.2M333 346.6l2-0.1 1.9-0.3" stroke="#000" stroke-width="5.5" stroke-linecap="round" stroke-linejoin="round" fill="none"/>
<g fill-opacity="0.7" shape-rendering="crispEdges">
<path fill="#000087" d="M605 401l-1 2 13 3 2-3m78 12l-5 5 13 2 4-5m0 0l-4 5 13 2 4-5m0-2l0 2 12 2 1-2"/>
<path fill="#000097" d="M567 390l0 1 12 5 3-5m26 6l-3 4 14 2 2-3m103 11l-2 6 13 2 1-6"/>
<path fill="#0000a7" d="M548 382l6 3 2-3m15 1l0 1 12 5 2-4m-14-1l-4 6 15 1 1-2m15-3l0 1 12 3 1-2m0 0l-1 2 13 4 1-4m101 15l-1 6 12 2 2-6"/>
<path fill="#0000b7" d="M536 375l5 3 2-3m0 0l-2 3 7 4 8 0 2-4-4-3m19 2l12 5 1-3m-13-2l-2 6 14 2 0-3m14-2l-1 6 13 2 1-6m7 1l6 2 0-1m-13-2l-1 6 13 2 1-5-6-2m6 1l0 1 13 3 0-2m63 9l0 4 12 3 1-5m13 2l-1 5 12 2 1-5m-13 3l-1 1 13 2 0-1m1-5l-1 5 13 2 1-5"/>
<path fill="#0000c7" d="M527 368l2 1 1-1m0 0l-1 1 6 5 3-6m5 0l2 2 1-2m-8 0l-3 6 1 1 7 0 2-5-2-2m2 2l-2 5 11 0m20-4l-1 6 13 2 1-6-2-1m15 5l-1 3 13 2 0-1m1-5l-1 5 7 2 6 1 1-6m-14 3l0 1 7 1m7-5l-1 6 13 2 1-6m63 9l-1 6 13 2 1-6m13 2l-1 6 12 2 1-6m0 0l-1 6 13 2 1-6"/>
<path fill="#0000d7" d="M520 361l3 3 1-3m0 0l-1 3 4 4 3 0 2-7m14 1l2 1 0-1m-16-1l-2 7 8 0 1-3-5-4m6 0l-1 4 4 3 3 0 2-5-2-1m-7 3l-1 3 5 0m32 0l-1 3 11 1m29-2l-1 6 13 2 1-6-4-1m4 1l-1 6 13 2 1-5m63 12l-1 2 13 2 0-1m13 2l0 1 12 2 0-1m0 0l0 1 13 2 0-1"/>
<path fill="#0000e7" d="M514 354l2 3 1-3m10 0l6 6 1-5m-17-1l-1 3 4 4 4 0 2-7m0 0l-2 7 8 0 1-1-6-6m15 1l-1 3 5 4 2 0 1-6m-16 4l-1 1 2 0m-29-4l3 3 8-3-2-3m27 4l-1 3 6 1m43-1l13 4 0-3m12 7l0 1 9 1"/>
<path fill="#0000f7" d="M510 348l0 1 4 5 3 0 3-6m8 0l-1 6 7 1 1-3-4-4m-11 0l-3 6 9 0 1 0-5-6m-24 3l4 3 8-5-1-1m34 1l-1 6 7 1 1-4-4-3m-36 0l-8 5 3 3 9-3m63-1l0 2 12 6 1-6m0 0l-1 6 13 1 1-4-6-2m108 15l0 1 12 2 0-1m13 2l0 1 12 2 1-1"/>
<path fill="#0008ff" d="M513 341l-3 7 10 0 0-2-3-5m12 4l-1 3 3 0m-11-2l0 2 2 0m-21-6l-5 5 2 4 11-3-4-6m38 5l0 2 3 0m32-2l-1 6 13 2 0-2m-12-6l12 6 1-4m-1 4l0 2 7 1m108 9l0 6 12 2 1-6m13 2l-1 6 13 2 0-6"/>
<path fill="#0018ff" d="M521 335l1 3 1-3m-9 3l-1 3 4 0m-13-1l-3 2 4 0m45-4l2 1 0-1m12 1l1 1 0-1m-77 0l1 0-1-1m90 3l0 6 13 2 0-4-5-3m0 0l5 3 1-2m0 0l-1 2 13 4 0-4m51 7l0 1 13 3 0-2m13 2l-1 2 13 3 0-3m13 5l-1 2 13 2 0-2m-12-5l0 3 12 2 1-4m0 0l-1 4 13 2 0-4m0 4l0 2 12 2 0-2m-12-6l0 4 12 2 1-4"/>
<path fill="#0028ff" d="M516 329l5 6 2 0 1-6m3 1l4 4 0-4m11 1l3 3 1-3m0 0l-1 3 5 4 2 0 0-6m2 0l10 7 1 0 1-5m-85 1l0 1 7 3 0-1-4-6m95 7l-1 2 8 1m-7-7l0 4 7 3 6 1 0-6m0 0l0 6 12 2 1-5-5-2m56 8l-1 6 13 2 1-6m12 2l0 6 12 2 1-6m13 2l-1 6 13 1 0-5m0 0l0 5 12 2 1-5m0 0l-1 5 13 2 0-6"/>
<path fill="#0038ff" d="M517 323l-1 6 8 0 0-3-2-3m3 0l-1 3 3 4 4 0 1-6m-51 1l2 4 4-4 0-1m52 1l0 3 3 3 4 0 0-5 0-1m0 1l0 5 6 1 1-1m0-5l0 5 1 1 12 2 0-2-7-5m-76 2l-8 0 6 6 3-3m96-3l-1 6 13 2 0-2m-12-6l12 6 1-4m-1 4l0 2 8 1m56 5l0 3 13 2 0-2m12 2l0 2 13 2 0-2m13 3l0 1 12 2 0-1m0 0l0 1 13 2 0-1m0 0l0 1 12 1m1-5l-1 5 13 2 0-6"/>
<path fill="#0048ff" d="M509 317l1 1 0-1m8 0l-1 6 5 0m4-5l-1 5 7 1 1-4-2-2m0 0l2 2 0-2m-55 1l3 6 6-1-3-5 0-1m56 1l-1 6 7 0m-6-6l6 6 1-6m4 1l3 3 0-3m0 3l-1 3 6 1m21-3l0 5 13 2 0-6m152 23l0 6 12 1 1-5"/>
<path fill="#0058ff" d="M506 311l3 6 1 0 1-6m-22 0l2 6 2-6m-12 1l3 6 3-7m39 1l0 6 5 0m-5-6l5 6 2 0 1-6m-54 0l-3 5 1 2 6-1-3-6m60 1l-1 6 7 0 0-2-3-4m0 0l3 4 1-3m0 0l-1 3 4 3 3 0 0-6m3 1l10 7 1-6m10 1l3 2 0-1m0 1l-1 5 13 1m152 22l0 1 13 2 0-1"/>
<path fill="#0068ff" d="M497 305l1 4 1-4m5 0l-1 0 3 6 5 0 1-5-1-1m-20 0l2 5 1-5m17 0l1 1 0-1m-26 0l2 4 1-4m0 0l-1 4 1 2 4 0 0-1-2-5m-8 1l-2 5 0 1 6-1 1-2-2-4m41 1l-1 6 8 0-5-6m-48 5l-1 1 1 0m60-2l0 3 3 0m-3-6l0 3 3 3 4 1 0-6m0 0l0 6 6 0 1-1-6-5m-86 2l2 4 9-4-1-3m82 2l0 4 2 2 11 1 0-5-2-1m0 0l2 1 0-1m0 0l0 1 10 6 3 1 0-6m-127 4l7 2-4-5"/>
<path fill="#0078ff" d="M496 299l-1 2 2 4 2 0 1-7m5 1l-1 6 7 0-3-6m-17 0l-1 3 1 3 3 0 1-4-1-2m14 0l3 6 1 0 1-6m-28 0l0 2 1 4 3 0 1-3-1-3m1 3l-1 3 2 0m-6-4l-2 5 3-1m41-2l0 3 2 0m-59-5l0 1 1-1m71 0l-1 6 7 1 0-1-5-6m5 6l0 1 1 0m-79-6l-4 4-4 2 1 2 10-3m83-4l-1 6 11 1-9-7m0 0l9 7 2 0 1-6m0 0l-1 6 13 2 1-5-3-1m-125 4l-8 0 6 6 2 0 3-3m189 2l0 1 12 3 0-2m76 11l0 5 12 2 1-5m0 0l-1 5 13 2 0-5"/>
<path fill="#0087ff" d="M498 292l2 6 1-5m-4 0l-1 6 4-1-2-6m7 1l0 6 3 0m-16-6l-1 6 3 0m11-6l3 6 5 0 0-6m-26 1l-2 5 4 0m-21-4l2 6 1 0 3-7m68 6l0 1 1 0m13 1l0 1 1 0m-1-6l0 5 1 1 12 1 0-4-2-2m2 2l0 4 10 2m-130-5l2 3 8-3-1-3m-30 12l2 2 8-1-3-4m3 4l-8 1 13 1 8 2m195-6l0 6 12 2 1-6m-239 2l2 1 8-2-2-2m-15 6l1 1 8-3-2-1m315 10l-1 5 13 2 0-5m0 0l0 5 12 2 1-6m-382 1l3 2 8-3-2-1m-18 5l4 2 8-3-3-2m-18 6l5 2 8-3-4-2m-23 8l-3 1 6 2 8-3-6-2m-17 6l1 0 8-3"/>
<path fill="#0097ff" d="M498 287l-1 4 1 1 3 1 1-6m-12 0l2 6 1-6m4 4l0 2 1-1m-13-5l2 6 1-6m18 0l-1 6 8 0 1-2-2-4m-43 2l-2 4 1 2 6-1-1-6m84 3l-1 6 11 1-9-7m-102 2l-8 5 1 3 9-3m-20 0l2 3 8-3-1-3m-25 8l2 3 8-3-2-2m2 2l-8 3 4 4 7-3m212-3l-1 5 13 2 0-5m-235 0l-8 4 4 3 8-3m-23-1l2 4 9-3-3-4m3 4l-9 3 6 3 7-3m-24-1l3 4 8-3-2-4m330 10l0 4 12 2 0-4m0 0l0 4 13 1 0-3m-377 0l-8 3 3 1 9-2m-25-1l5 5 8-3-4-5m4 5l-8 3 2 1 9-3m-11 2l-8 4 1 0 9-3m-23-1l5 7 8-3-5-6m-17 5l6 7 3-1 5-2-5-7m-17 6l5 7 9-3-6-7"/>
<path fill="#00a7ff" d="M499 281l-1 6 4 0 0-2-1-4m-12 0l0 3 1 3 3 0 1-5 0-1m11 0l1 4 1-4m-23 0l0 3 1 3 3 0 1-3-1-3m19 0l-1 4 0 2 6 0-3-6m-38 3l-2 5 4-1m65-5l5 6 0-5m-84 1l1 4 3-5m88 1l6 5 0-5m0 5l0 1 1 0m-114-2l1 1 2-2m123-1l13 7 0-5m-138 1l-8 4 1 4 9-3m166-2l9 3 0-2m-204 3l4 6 8-2-3-7m220 8l0 2 12 2 0-1m-258-2l0 1 6-3m0 0l-6 3 4 5 8-3-4-6m-8 4l-8 4 3 4 9-3m-21 0l1 2 8-3-1-2m-23 12l-8 4 1 2 9-3m-18 4l-8 3 1 1 8-2m-9 1l-9 3 1 1 9-3m-10 2l-8 3 1 1 8-3"/>
<path fill="#00b7ff" d="M499 277l0 4 2 0m-10-6l-2 6 5 0-2-6m12 0l-1 3 2 3 2 0 1-4-1-2m-21 0l-2 6 4 0m20-4l-1 4 2 0m28-4l0 5 1 1 5 1 1-6m-87 1l2 6 4-1 1-1-1-5m88 1l-1 5 1 1 6 0 0-6m-115 4l2 6 3-1 6-5-1-3m119 1l-1 6 13 2 1-6m-160 5l1 3 9-4-1-1m176 1l0 5 4 1 9 1 0-6m-197 3l-8 5 1 1 9-3m-29 3l3 6 6-2 2-1-2-6m-17 6l0 1 8-4m-8 4l-8 4 2 4 8-3m-19 0l1 2 8-3-1-2"/>
<path fill="#00c7ff" d="M491 273l0 2 1 0m-2-6l1 4 0-4m13 0l0 6 3 0m-32-5l0 1 1-1m62 1l-1 6 7 1 0-1-5-5m-78 0l-4 6 0 1 6-1m88-5l0 6 6 0 1-2-4-4m-106 2l-2 2-4 4 0 2 10-3-2-6m121 1l0 6 13 2 0-3-7-4m-137 1l2 4 4-4-1-1m-21 6l-2 1 2 5 9-2-2-6m179 1l-1 6 13 1 0-5m-216 10l-8 4 9-3m-20 0l3 6 8-3-2-6m-20 7l-5 2 2 6 8-3-2-6m345 1l-1 4 13 2 0-4m-398 11l0 3 8-4 0-2m-25 9l1 3 8-3-1-3"/>
<path fill="#00d7ff" d="M494 263l2 5 1-5m-9 0l2 6 1 0 1-6m6 0l2 6 1-6m6 0l2 5 0-5m-36 1l2 6 1 0 1-7m61 6l0 2 1 1m8-5l4 4 1-4m-1 4l0 2 3 0m-104 0l-2 2 2-1m121-1l0 2 6 1m-138-5l1 6 5-1-1-6m161 4l5 2 0-1m-180 2l-6 5 7-2m179-4l0 5 12 2 1-2m-228 7l-8 4 0 2 9-3m-17 5l-3 2 3-1m345-3l0 4 12 2 0-4m-400 9l2 6 8-3-2-6m-25 9l2 6 8-3-2-6"/>
<path fill="#00e7ff" d="M493 257l0 2 1 4 3 0 0-3-1-3m-7 0l-1 6 4 0 1-4-1-2m5 0l0 3 1 3 3 0 0-2-1-4m6 0l-1 3 2 3 2 0 1-5-1-1m-36 1l-1 1 1 5 4-1-1-6m69 4l0 3 2 3 5 0 0-6m-109 5l-5 4 1 1 5-1m-7-5l1 5 5-4-1-2m156 3l-1 4 8 3 5 1 0-6m-267 31l-8 4 1 1 8-3m-10-2l1 4 8-4-1-3m-15 10l-8 3 0 1 8-3m-17 0l1 5 8-3-1-5"/>
<path fill="#00f7ff" d="M494 251l-1 6 3 0m-7-6l0 6 3 0-1-6m7 1l-1 5 3 0m6-6l0 6 3 0-2-6m-28 0l0 1 1-1m-6 1l-1 6 3-1-1-5m-18 2l1 5 2-5m86 1l-1 6 7 0 0-4-1-2m-115 4l1 6 5-1-1-6m133 0l11 7 0-5m13 3l0 4 12 2 1-1m88 9l0 4 13 2 0-4m13 1l-1 5 13 3 0-6m13 2l-1 6 13 2 0-6m-429 8l1 6 8-3-1-6m-33 11l2 6 8-3-2-5"/>
<path fill="#08fff7" d="M490 248l-1 3 2 0m-2-6l1 3 0-3m-7 0l1 6 1 0 0-6m15 0l2 6 1-6m3 5l0 1 1 0m-29-6l1 6 1 0 0-6m25 0l1 5 1-5m-33 5l0 2 1 0m-19-4l1 6 3 0 2-7m84 2l0 6 5 0m-112-3l0 1 1-1m-1 1l-4 5 1 1 5-1m132-6l-1 5 2 1 11 2 0-3-5-4m24 4l7 3 0-2m63 9l13 3 0-1m13 3l-1 5 13 2 0-5m0-1l0 1 13 3 0-2m0 2l0 3 12 2 0-3m1-2l-1 2 13 2 0-3m-394 1l0 2 8-4 0-1m386 5l0 3 12 2 1-3m-423 5l-8 3 1 3 8-3m-26 3l1 4 8-4-1-3m-7 7l-8 3 0 1 8-2m-17 0l1 4 8-3-1-4"/>
<path fill="#18ffe7" d="M487 239l2 6 1 0 1-5 0-1m-10 0l2 6 2 0 1-6m13 0l0 3 1 3 3 0 0-4 0-2m-27 1l2 5 2 0 1-6m22 0l0 2 2 4 2 0 0-5m-39 0l1 6 1-6m-15 2l0 2 1 4 6-1-1-6m80 2l5 6 0-6m-108 3l1 6 1 0 3-5 0-2m130 4l0 3 7 1m19-3l-1 5 6 2 7 1 0-6m64 9l-1 6 13 2 0-6m26 4l-1 6 13 2 0-6m13 2l0 6 12 1 0-5m-395 0l1 6 8-3-1-6m-49 18l1 6 8-3-1-6m-25 9l2 6 8-3-1-6"/>
<path fill="#28ffd7" d="M487 233l0 4 0 2 4 0-2-6m-7 0l-1 6 5 0 1-2-1-4m14 0l-1 6 4 0-2-6m-24 1l-1 5 0 1 5-1-1-6m24 1l-1 5 4 1 0-1-1-5m-39 1l1 5 2 0 1-4 0-2m-14 2l-2 6 6-1-1-1-1-4m81 1l0 4 1 2 5 0 1-1-4-5m0 0l4 5 0-5m14 2l5 5 1-4m-125-1l-4 7 5-1m131-4l12 7 0-5m-164 2l1 1 1-2m175 2l0 4 12 2 1-1m29 0l9 2 0-1m25 6l0 3 12 2 1-2m12-2l0 4 13 2 0-4m0 4l0 2 12 2 0-2m1-4l-1 4 13 3 0-5m0 5l0 1 12 2 0-1m-397-5l2 6 8-3-1-5m389 2l-1 5 13 2 0-5m-442 10l-8 4 1 5 8-3m-17 1l-9 3 1 5 9-3"/>
<path fill="#38ffc7" d="M488 228l-1 5 2 0m-6-6l-1 6 4 0-2-6m16 5l0 1 1 0m-10-6l1 4 0-4m-14 1l-1 6 3-1-1-5m16-1l1 5 0-5m-9 0l1 1 0-1m16 3l0 4 2 0m-40-5l0 2 1 4 4-1-1-5-1-1m46 0l1 2 0-1m-54 0l0 3 1-3m-4 3l-2 4 2 0m81-3l0 4 3 0m-3-6l0 2 3 4 4 0 0-3-2-3m15 2l0 6 1 0 6 1 0-5-2-1m9 1l-1 5 1 1 12 2 0-4-5-3m-160 3l1 6 2-1 6-8m178 4l4 2 0-2m25 4l0 6 4 1 9 1 0-6m51 8l-1 5 13 2 0-5-6-1m6 1l13 2 0-1m0 1l0 5 12 2 0-5m-377 2l-8 4 0 1 9-2m389-3l0 5 12 2 1-5"/>
<path fill="#48ffb7" d="M483 224l0 3 1 0m5-5l2 5 1 0 1-5m-15 4l0 2 1 0m14-6l2 5 1 0 1-5m-11 0l1 5 1 0 0-5m-5 0l0 2 1-2m-16 1l-2 6 3-1m44-6l2 6 1 1 0-6m-55 0l0 1 1 5 1 0 1-6m-13 2l1 4 1-4m88 0l-1 6 5 0m16-1l-1 3 5 1m9-3l0 4 7 1m-155-5l-1 2-4 5 0 1 9-3 1 0-1-6m-10 3l1 5 4-5 0-1m175 1l-1 3 9 4 4 0 0-5m16 2l10 3 0-2m0 2l-1 4 13 2 0-3m51 10l0 1 6 1m7-5l-1 6 13 1 0-5"/>
<path fill="#58ffa7" d="M489 216l0 3 0 3 4 0 0-1-2-5m2 0l0 5 0 1 4 0 0-1-2-5m-10 0l1 6 2 0 1-3-1-3m-6 0l1 6 1 0 0-6m-17 1l1 4 1-4m44 0l0 5 3 1 1-6m-55 0l-1 6 3 0-1-6m-10 2l1 3 1-4m-5 1l0 1 1 5 2 0 1-3-1-3m99 2l2 3 1-3m7 1l5 4 1-3m-139 4l-3 4 4-1m-8-4l-3 4 1 3 5-1-1-6m-5 1l0 3 3-4m178 1l0 6 12 2 1-3-11-5m-201 6l1 4 7-7m216 1l0 5 3 1 10 1 0-5m-263 8l1 4 8-5 0-2m317 4l0 2 13 2 0-2m0 2l0 4 12 2 0-4m0-2l0 2 13 2 0-2m13 2l-1 2 13 2 0-2"/>
<path fill="#68ff97" d="M490 210l-1 6 2 0m3-6l-1 6 2 0m-10-6l-1 5 1 1 3 0-2-6m-6 0l2 6 2 0 0-1-1-5m-16 1l-1 2 1 4 2 0 1-6m38 0l1 2 1-2m3 0l0 6 4 0 0-1-2-5m-52 4l-1 2 1 0m-1-6l1 4 0-4m-11 2l1 6 2-1 1-3-1-3m-3 1l-2 6 3 0m95-5l0 2 4 5 3 0 0-6m-117 1l1 6 3-7m119 1l0 5 1 1 6 1 0-6m-145 7l-1 2 2 0m-6-5l1 6 3-1 1-2 0-4m-21 6l-2 2 1 5 8-3 1 0-1-6m217 2l-1 5 13 2 0-3m-263 5l-1 1 1 5 9-3-1-5m318 3l0 6 13 2 0-6m13 2l-1 6 13 2 0-6m13 2l0 6 12 2 0-6m-455 13l0 6 7-3 2 0-1-6"/>
<path fill="#78ff87" d="M485 206l0 4 1 0m-5-6l-1 6 3 0-1-6m7 0l1 5 0-5m-5 0l0 2 1-2m-18 1l-1 6 3 0 0-2-1-4m37 0l2 6 2 0 0-6m4 3l-1 3 2 0m-2-6l1 3 0-3m-53 1l1 5 1 0 2-6m-11 2l-2 6 3-1m93-3l0 5 7 1-5-6m-112 1l-1 3 1 3 4-1 1-2-1-4m120 2l-1 5 7 1m-146-2l-4 5 0 1 5-1m-6-4l1 4 4-5 0-1m-14 4l0 2 2-2m-2 2l-6 6 7-2m-27 7l-7 4 8-2m294-6l-1 1 13 3 0-2m13 4l-1 3 13 2 0-3m13 3l0 2 12 2 0-2m1-4l-1 4 13 2 0-4m0 4l0 2 12 2 1-2m-433 0l0 1 8-3 0-1m-24 11l-8 3 1 4 8-3"/>
<path fill="#87ff78" d="M481 201l0 3 1 0m5-6l2 6 1 0 1-6m-7 0l1 6 1 0 0-6m-18 3l0 4 1 0m38-6l-1 5 0 1 4 0 0-6m-42 0l0 2 1-2m41 0l3 6 1 0 0-6m-52 1l-1 6 4-1 0-1-1-5m-11 2l1 5 1-6m90 2l4 5 0-4m0 4l-1 2 2 0m-109-6l-3 7 4-1m-11-3l1 5 3-6m131 0l2 2 1-2m-152 5l-1 1 1 5 5-2-1-6m-14 5l1 5 2 0 6-7 0-1m261 11l0 6 12 2 0-6m51 8l0 5 12 2 0-5m-421 6l1 5 8-3-1-5"/>
<path fill="#97ff68" d="M487 192l-1 3 1 3 4 0-2-6m-6 0l1 6 2 0 0-3 0-3m21 1l0 6 3 0-2-6m-41 0l1 6 1 0 0-6m42 0l-1 6 4 0 0-5m-51 1l-1 5 2-1m-1-5l0 1 0-2m56 1l2 5 1-5m-69 1l-1 1 1 5 2-1 1-3 0-2m-10 1l1 5 1-5m94 0l0 3 3 3 4 1 0-5 0-1m-109 0l1 6 2-6m-12 3l-1 1 1 5 4-1 1-2-1-4m127 0l0 3 4 3 3 0 0-5m-149 5l-3 5 4-2m-11-2l-3 4 0 3 9-3-1-6m-9 3l1 3 3-4m254 8l0 1 13 2 0-2m0 2l0 4 12 2 1-3m37 3l0 4 13 2 0-4m0 4l0 2 12 2 1-2m-414 0l-8 3 0 5 8-3"/>
<path fill="#a7ff58" d="M487 187l0 5 2 0-1-5m-5 0l-1 4 1 1 3 0-1-5m-14 0l1 6 1-6m34 3l0 3 1 0m-41-6l0 5 0 1 2 0 1-6m41 1l0 5 3 1 1-2-2-4m-51 0l1 6 0-1 1-5m54 0l0 4 1 2 3 0 0-3-1-3m-67 1l-1 6 3 0-1-6m-10 1l0 1 1 5 2 0 1-2-1-4m95 1l-1 5 7 1-5-6m-104 1l0 1 0 4 3 0 2-6 0-1m-11 3l-3 7 4-1m128-6l-1 6 7 1 0-3-4-4m-150 7l-5 6 5-2m-10-3l1 6 4-1 5-6-1-2m199 2l1 1 0-1m51 8l-1 6 13 1 0-5m51 7l-1 6 13 2 0-6"/>
<path fill="#b7ff48" d="M487 184l0 3 1 0m-5-6l0 6 2 0m-5-6l1 3 0-3m-4 0l1 5 1-5m-8 0l-1 5 1 1 2 0-1-6m-4 0l-1 6 3 0 0-1 0-5m41 2l0 5 2 0m-51-6l0 4 0 2 2 0 1-6m54 2l-1 4 3 0m-67-1l0 2 1 0m-8-5l-2 6 3 0m95-1l0 2 1 0m-102-6l-2 7 5-2-1-5m119 6l0 2 2 0m-156 1l-4 5 0 2 9-3 0-5m188 0l-1 2 12 5 1 0 0-5m38 5l0 1 13 3 0-2m0 2l0 4 12 2 0-4m38 4l0 3 13 2 0-3m0 3l0 2 12 2 0-1m1-4l-1 4 13 2 0-5m-465 21l1 3 8-3-1-3"/>
<path fill="#c7ff38" d="M479 175l0 1 1 5 1 0 1-6m-5 0l0 2 0 4 2 0 0-5 0-1m-8 3l0 3 1 0m-3-4l-1 4 2 0m-7-5l-1 6 3 0-1-6m-20 4l-2 5 2 0m109-5l3 5 1-4m7 1l5 4 1-3m-148 1l1 3 1-3m-11 5l-4 5 5-1m188-6l0 6 12 2 1-6-2 0m14 2l0 3 13 3 0-4m13 2l-1 5 13 2 0-6m51 8l-1 6 13 2 0-6m13 2l0 6 12 1 0-5m-465 20l0 6 8-3 0-6"/>
<path fill="#d7ff28" d="M480 169l-1 6 3 0 0-2-1-4m-4 0l0 6 2 0-1-6m14 0l1 4 0-4m-29 4l-1 3 1 0m54-5l1 4 0-4m-67 0l1 6 1-6m96 3l0 3 3 3 4 1 0-6m6 1l0 5 1 1 6 1 0-6m-148 1l0 6 2 0 3-5 0-2m168 3l7 4 0-3m0 3l0 3 11 2m15-4l-1 6 13 2 0-6m13 2l0 6 12 1 0-4m51 10l0 2 12 2 0-2m0-4l0 4 13 2 0-4m0 4l0 2 12 2 1-2m-459 15l-8 3 1 4 8-3"/>
<path fill="#e7ff18" d="M480 165l0 4 1 0m-3-2l-1 2 1 0m13-6l1 6 1 0 0-6m23 2l0 2 2 4 1 0 1-5 0-1m-69 1l1 5 2 0 1-5 0-1m96 4l-1 5 7 1 0-1-5-5m12 1l-1 6 7 1 0-2m-147-3l-2 3 1 3 5-1-1-6m-5 2l0 2 2-3m167 2l-1 3 6 3 7 1 0-5m26 6l0 3 12 2 0-1m89 8l-1 6 13 2 0-6"/>
<path fill="#f7ff08" d="M490 158l0 1 1 4 2 0 1-4-1-1m8 0l0 3 1-3m-44 1l0 6 1 0 0-6m58 0l-1 6 4 0m-66-6l1 6 1-6m-4 1l-1 6 4-1-1-6m68 1l1 4 1-4m27 7l0 2 1 0m-127-3l-2 6 3-1m-6-4l1 6 2-1 2-6 0-1m165 3l0 6 12 2 0-4-5-3m132 23l0 2 12 2 0-2"/>
<path fill="#fff700" d="M490 152l0 6 3 0-1-6m7 0l2 6 1 0 0-5 0-1m-45 1l0 1 1 5 1 0 1-6m-6 1l-1 1 1 4 2 0 1-5 0-1m-4 2l-1 5 2-1m66-5l0 2 2 4 2 0 0-6m-81 1l1 5 1-5m108 2l4 6 1-5m7 1l5 5 1-4m-151 1l0 1 0 5 5-2-1-5m160 1l6 4 0-3m0 3l0 3 7 1"/>
<path fill="#ffe700" d="M490 146l0 6 2 0-1-6m7 0l0 3 1 3 3 0-2-6m-42 1l-1 6 3 0 1-2-1-4m53 0l0 1 1-1m-60 1l0 6 3-1-1-6m65 1l-1 6 4 0-2-6m-73 0l1 6 1-6m-8 2l0 5 2 0 1-3 0-3m105 2l0 4 2 2 5 1 0-6m6 1l0 5 1 1 6 1 0-6m-148 0l-3 7 4-1 0-6m153 1l0 2 7 4 6 1 0-5m139 20l0 2 13 2 0-2"/>
<path fill="#ffd700" d="M491 145l-1 1 1 0m8-6l-1 6 2 0m-14-6l0 4 1-4m-28 1l-1 6 2 0m1-6l1 3 0-3m49 0l2 6 1 0 0-5m-59 0l-1 6 2-1m59-5l2 6 0-6m4 4l0 2 1 0m-74-5l1 5 2 0 1-5 0-1m-8 2l-1 4 0 2 3-1-1-6m-3 1l1 4 1-4m108 2l-1 5 7 1 0-1-5-5m12 1l-1 6 7 1 0-2-5-4m-143 0l1 5 2-5m-2 5l-1 1 1 0m154-5l-1 6 13 2 0-4-4-3m-173 1l1 6 3-7m313 22l-1 5 13 2 0-5"/>
<path fill="#ffc700" d="M485 134l0 1 1 5 1 0 0-6m-12 0l0 4 1-4m22 1l1 5 0-5m-39 0l1 6 1 0 1-6-1 0m48 0l0 4 1 2 3 1 0-3-1-3m-55 0l1 4 1-5m54 1l0 3 1 3 2 0 1-4-1-2m-68 1l-1 5 0 1 4-1-1-6m71 0l2 6 0 1 1-6m-80 2l-1 5 1-1m-4-5l1 6 2 0 1-5-1-1m-6 1l1 4 1-5m112 6l0 2 1 0m12 0l0 1 1 1m-144-5l1 5 3 0 2-5 0-2m150 4l0 4 8 1m-173-5l0 6 4-1 1-1 0-5m312 22l0 6 12 2 0-6-4-1"/>
<path fill="#ffb700" d="M485 128l0 6 2 0 0-5m-13 0l1 5 1 0 0-5m20 0l2 6 1 0 0-3 0-3m-5 0l1 6 1-6m-36 0l0 3 0 3 2 0 0-6m49 1l-1 5 3 1m-55-6l0 6 2-1 0-3 0-2m54 0l0 6 3 0-2-6m-65 1l-1 6 2-1m71-5l-1 5 1 0 3 1 0-4-1-2m-82 1l-1 3 0 3 3 0 0-6m92 0l3 4 0-3m-101 0l0 6 2-1 1-3 0-3m113 3l4 4 1-4m-136 1l-1 4 0 3 6-2-1-5m141 0l4 4 0-3m-158 2l-2 4 1 2 5-1-1-6m326 24l-1 6 13 2 0-6"/>
<path fill="#ffa700" d="M486 123l-1 5 2 1m-13-6l0 5 0 1 2 0 0-3 0-3m20 0l0 4 0 2 3 0-2-6m-5 0l2 6 2 0 0-2-1-4m-34 1l-1 5 2 0m-4-5l-1 4 1 2 2 0-1-6m55 5l0 1 1 0m7-5l0 6 2 0m-74-6l0 5 1-5m-8 1l-1 6 2 0m89-6l3 6 3 1 0-6m-101 0l-1 3 1 3 3-1-1-5m112 1l0 4 2 3 5 0 0-6m-133 1l-3 6 4 0m138-6l0 4 3 2 4 1 0-6m-156 3l-2 5 3-1m326 18l0 6 12 2 0-6"/>
<path fill="#ff9700" d="M475 117l-1 6 2 0m20-5l0 5 1 0m-5-6l0 4 0 2 3 0-1-6m-16 0l1 6 0-6m2 0l1 1 0-1m-24 3l0 4 1 0m-10-5l1 6 1 0 1-6m68 0l2 6 0-6m3 1l0 2 1-2m-84 0l1 5 1-5m88 0l0 4 1 2 6 1 0-2-2-4m-98 0l-1 6 2 0m112-4l0 5 7 1 0-2-3-4m10 1l-1 6 7 1 0-4-2-2m160 24l0 3 13 2 0-3m0 3l0 2 12 2 1-2"/>
<path fill="#ff8700" d="M493 112l-1 5 2 0m-16-6l-1 2 1 4 1 0 1-6m0 0l1 6 1 0 0-6m6 0l0 2 1-2m-23 1l1 5 1-6m-19 2l0 4 0 2 3 0 0-2 0-4m67 0l0 3 1 3 2 0 0-5m0 0l3 6 1 0 0-6m-84 1l0 5 2 0 1-5 0-1m88 1l-1 5 5 1-3-6m-95 0l0 6 2-6m112 4l-1 4 4 0m10-2l0 3 4 1m161 18l-1 6 13 2 0-6"/>
<path fill="#ff7800" d="M478 105l0 6 2 0 0-2 0-4m0 0l0 4 0 2 2 0 1-6m0 0l1 6 1-6m2 0l1 6 1 0 0-6m-23 1l0 1 0 5 2-1 0-3 0-2m31 0l1 6 1-6m-51 1l-1 6 3 0-1-6m68 0l0 6 3 1-2-6m3 0l-1 6 4 0 0-4-1-2m-83 1l-1 2 1 4 3-1-1-6m89 4l0 3 1 0m-96-5l1 5 2 0 0-4 0-2m277 26l0 1 13 2 0-1m0 1l0 5 12 2 0-5m0-1l0 1 13 2 0-1"/>
<path fill="#ff6800" d="M478 100l0 5 2 0-1-5m2 0l-1 5 3 0 0-2-1-3m1 0l0 3 0 2 2 0 0-1-1-4m3 0l0 5 2 0-1-5m-22 0l0 6 2 0-1-6m30 0l2 6 2 0 0-2-1-4m-40 0l0 2 1-2m-10 3l-1 4 1 0m68-2l0 2 1 1m-6-7l1 6 1-6m2 1l1 3 0-3m4 0l0 6 2 0m-82-5l-1 6 2-1 0-5m-6 1l0 2 0 4 3-1 0-6m102 1l3 6 1-5m171 25l0 5 13 2 0-5m13 2l-1 5 13 2 0-6"/>
<path fill="#ff5800" d="M479 99l-1 1 1 0m2-6l0 6 1 0m1-5l0 5 1 0m3-3l0 3 1 0m-21-4l-1 4 1 0m31-6l-1 6 3 0-1-6m-40 1l1 5 1 0 0-5m51 0l0 2 2 4 2 0 0-5m0 0l2 6 1 0 1-6m1 0l2 6 0-6m-77 0l1 6 1-6m-5 4l0 3 1 0m-4-5l-2 6 3-1-1-6m100 1l0 2 3 4 4 1 0-6m30 4l2 2 0-2m140 21l-1 6 13 2 0-6m13 2l0 6 12 1 0-5"/>
<path fill="#ff4800" d="M484 88l1 6 1-6m0 0l1 6 1-6m-8 0l1 6 0-6m17 2l0 4 1 0m-28-6l1 6 0-6m-4 0l1 6 1-6m-11 1l0 6 2 0 0-2 0-4m0 0l0 4 1-4m51 1l-1 5 4 1-2-6m2 0l0 6 4 0 0-2-2-4m2 0l0 4 1 2 2 0 0-5m-77 0l0 5 2 0 1-6m-9 6l0 2 0-1m-1-5l1 4 1-4m99 1l0 5 7 1 0-2-3-4m29 4l0 2 4 4 2 0 1-5m139 23l0 3 12 2 0-3m0-3l0 3 13 2 0-3m0 3l0 3 12 2 1-3"/>
<path fill="#ff3800" d="M484 82l0 5 0 1 2 0-1-6m1 0l0 6 2 0-1-6m-7 0l0 2 0 4 1 0 1-2-1-4m-11 0l0 1 1 5 1 0 1-6m-5 1l0 1 0 4 2 0 0-5 0-1m19 0l1 6 0-6m1 1l1 4 0-4m-33 0l0 6 2 0-1-6m0 0l1 6 1 0 0-6m51 3l0 4 1 0m2-6l0 6 2 0-1-6m3 1l0 5 3 1 0-1-2-5m-75 0l-1 3 1 3 3-1 0-1 0-5m-10 2l0 2 0 4 2 0 1-7m99 2l-1 6 4 0m29-2l0 6 7 1 0-6m152 23l-1 5 13 2 0-6"/>
<path fill="#ff2800" d="M484 79l0 3 1 0m1-3l0 3 1 0m-7-5l0 5 1 0m-10-5l-1 5 3 0 0-1-1-4m-4 0l0 6 2-1-1-5m19 0l0 2 1 3 1 0 0-4 0-1m1 0l-1 1 1 5 1 0 0-6m-32 2l-1 4 1 0m0-6l0 2 0 4 2 0 0-1 0-5m2 0l1 6 1-6m54 5l0 3 1 0m-74-6l-1 6 3-1-1-5m-7 1l-2 6 3-1m-4-5l1 6 2-6m105 2l1 1 0-1m11 1l2 4 1-3m13 1l-1 6 7 1 0-2m152 19l0 6 12 1 0-5"/>
<path fill="#ff1800" d="M471 71l0 6 1 0m-3-6l-1 6 1 0m20-6l-1 6 2 0m1-6l0 6 1 0m-11-6l1 6 1-6m-4 0l1 5 0-5m-19 0l-1 6 2 0m2-6l0 6 2 0 0-5 0-1m-19 3l0 5 1 0m-9-5l-1 6 3 0 0-3 0-3m102 2l3 6 1 0 1-6m6 1l0 2 4 4 3 1 0-6m6 1l7 6 0-5m158 28l0 1 12 2 0-1m1-5l-1 5 13 2 0-5"/>
<path fill="#ff0800" d="M481 65l0 3 0 3 2 0 0-2-1-4m-4 0l1 6 1 0 1-3-1-3m-16 0l-1 6 1 0 2 0-1-6m6 0l0 5 1-5m-4 0l1 6 0-6m-6 0l0 6 1-6m37 1l1 6 1-6m-60 2l1 4 1-4m-5 1l-1 5 2 0m91-5l2 5 0-5m7 1l0 3 2 3 5 0 0-5m6 0l0 6 7 1 0-6m6 1l0 6 7 1 0-6m171 25l0 6 12 2 0-6"/>
<path fill="#f70000" d="M481 59l0 6 1 0m-3-6l-1 6 2 0m-16-5l0 5 1 0 0-5m5-1l1 6 1 0 0-6m-5 0l1 6 1 0 0-6m23 1l1 5 0-5m-31 0l1 5 1 0 0-5m36 0l1 6 2 0 0-5 0-1m-60 2l0 2 0 4 2 0 0-6m78 0l1 3 0-3m-84 1l0 5 1-6m90 1l0 4 1 2 2 0 1-6m6 1l0 6 7 1 0-2-3-5m10 2l-1 5 7 1-5-6m12 1l-1 6 7 1 0-4-2-2m2 0l0 2 6 5 1-6m164 25l0 5 12 2 1-5"/>
<path fill="#e70000" d="M464 58l0 2 1 0m5-6l0 3 0 2 2 0 0-4 0-1m-5 0l0 5 2 0 1-2-1-3m15 0l1 5 1-5m6 0l-1 5 1 1 1 0 1-3-1-3m-7 0l1 5 1-5m-26 0l0 3 0 3 2 0 0-2 0-4m35 0l0 5 1 1 3 0-2-6m-52 1l1 3 0-3m-6 1l-1 6 2 0 1-4 0-2m75 0l2 6 1 0 1-6m-85 1l0 3 0 3 1-1 1-6m89 1l0 6 4 0 0-3-2-3m9 2l-1 5 4 0m10 0l0 2 1 0m12-2l0 3 4 1m2-5l0 5 7 1 0-5"/>
<path fill="#d70000" d="M470 48l0 6 2 0-1-6m-3 0l-1 6 2 0m15-6l0 3 0 3 2 0 0-3-1-3m7 1l0 5 1 0m-7-6l0 3 0 3 2 0 0-3-1-3m-24 0l-1 6 2 0m36-6l-1 6 2 0m-49-5l1 6 1-6m-5 1l0 5 1 0 1-6m-6 1l-1 6 2 0m75-6l0 6 4 0 0-5m-84 0l-1 6 2-1 0-5m90 2l-1 4 2 0m14-4l1 2 0-2m26 4l0 6 7 1 0-4-3-3m41 6l0 2 13 5 0-5"/>
<path fill="#c70000" d="M471 43l-1 5 1 0m13-6l0 6 1 0m1-6l0 6 1 0m-10-6l0 4 1-4m-26 1l0 6 2 0 0-3 0-3m-5 1l0 6 2-1-1-5m0 0l1 5 0-6m71 2l-1 5 4 1m-83-4l-1 4 1 0m102-4l3 6 1 0 1-5m26 7l-1 2 4 0m41 1l0 5 13 2 0-3-10-4m124 19l-1 1 13 2 0-2"/>
<path fill="#b70000" d="M476 36l1 6 1 0 0-5 0-1m-26 2l0 2 0 3 2 0-1-6m-3 4l-1 3 1 0m0-6l0 3 0 3 1-1 1-3-1-2m56 0l1 1 0-1m34 3l0 3 2 3 5 1 0-6m37 5l8 6 0-5m25 9l0 1 3 0m23-2l0 1 12 4 0-3m89 13l0 6 12 1 0-5"/>
<path fill="#a70000" d="M476 30l0 5 0 1 2 0-1-6m-25 2l0 6 1-1 0-5m-2 0l-1 6 1 0m55-6l1 6 1 0 0-6m34 4l0 5 7 1 0-2-2-4m34 5l0 3 5 3 8 1 0-3-4-3m55 8l0 6 12 2 1-6-4-1m92 19l0 1 12 2 0-1"/>
<path fill="#970000" d="M476 26l0 4 1 0m1-5l0 3 1-3m-26 5l-1 2 1 0m52-6l1 6 2 0 0-6m-61 1l0 5 1-5m95 3l-1 6 5 0m7-5l2 2 0-2m26 5l-1 5 9 1m55 7l0 1 9 1m55 3l-1 0 13 3 0-1m0 0l0 1 12 2 1-2"/>
<path fill="#870000" d="M473 11l-8 2 13 2 8-3m33 1l-8 3 12 2 9-3m-75 1l-4 2 3 0 3 1 2-1 2-1m27 0l-2 1 3 1 2-1m-17 0l-1 1 2 0 1 0m-8-1l-1 1 1 0 1 0m3-1l-1 1 1 4 1-4m3 0l-1 0 1 6 1 0 0-6m15 0l-1 0 2 5 1-5m-40 0l-1 1 1 4 1-4m48 0l-1 5 1 1 3 0m-61-5l-1 4 1 2 1 0 0-3m75-4l-2 1 3 0 2 0m-6 0l-1 0 3 6 1-5m19-1l-4 1 7 1 4-1m-19 0l-1 0 4 2 0-1m18 1l-1 1 6 1 1-1m4-1l-4 1 6 1 5-1m-18 0l-1 0 5 6 2 0 0-5m26-3l-8 3 6 1 6 1 8-3m-8 3l-4 1 13 2 4-1m21-1l-8 2 12 2 8-3m13 2l-8 3 12 2 8-3m-33-1l-4 2 13 2 4-2m25 4l-4 5 12 3 5-6m0 0l-5 6 13 2 4-6m21-1l-8 3 12 2 8-3m-8 3l-3 7 12 2 4-7m21-1l-9 3 13 1 8-3m-33 0l-4 7 13 1 3-6"/>
</g>
<g fill-opacity="0.7" shape-rendering="crispEdges">
<path fill="#000087" d="M722 419l-4 5 12 2 4-5m1-2l-1 2 13 2 0-2"/>
<path fill="#000097" d="M596 393l12 4 1-3m127 19l-1 6 12 2 2-6"/>
<path fill="#0000a7" d="M551 384l3 1-6-3m50 5l-2 6 13 1 1-4m128 17l-2 6 13 2 2-6"/>
<path fill="#0000b7" d="M537 377l4 1-5-3m5 3l-4-1 6 3 3 1 5 3-3-2m90 4l0 2 12 2 1-2m63 9l-1 5 13 2 1-5m11 7l0 1 13 2 0-1"/>
<path fill="#0000c7" d="M529 369l-4 0 1 3 7 4 4 1-1-2-1-1m2 3l-4-1 10 4m96 0l-1 6 13 2 1-6m63 9l-1 6 13 2 1-6"/>
<path fill="#0000d7" d="M534 361l5 4 1-4m-26 3l0 1 9-1-3-3m5 8l-4 0 5 3m114 3l-1 5 13 2 0-4m63 12l0 1 13 2 0-1"/>
<path fill="#0000e7" d="M534 355l-1 5 1 1 6 0 1-3-3-3m-22 2l-8 3 6 4 6-3"/>
<path fill="#0000f7" d="M535 352l-1 3 4 0m59 1l6 2 0-2m114 17l0 1 13 2 0-1"/>
<path fill="#0008ff" d="M526 342l3 3 0-3m62 7l-1 4 7 3 6 0 1-6m114 17l-1 6 13 2 1-6"/>
<path fill="#0018ff" d="M523 335l-1 3 4 4 3 0 1-6m2 0l5 5 1-4m53 8l0 4 13 1 0-1m114 16l0 2 13 2 0-2"/>
<path fill="#0028ff" d="M524 329l-1 6 7 1 1-2-4-4m4 0l0 4 1 2 6 1 1-6m61 7l5 2 0-1"/>
<path fill="#0038ff" d="M505 323l3 5 1-5m4 0l3 6 1-6m-30 1l0 1 1-1m36 2l0 3 3 1m5-6l-1 6 8 1 0-3-3-4m0 0l3 4 0-3m7 0l0 1 7 5 0-5m6 1l7 5 1-4m26 3l-1 4 8 3 5 1 1-6m51 7l-1 3 13 3 0-4m38 6l0 5 12 2 1-5m12 2l0 5 12 2 1-5"/>
<path fill="#0048ff" d="M502 317l3 6 4 0 1-5-1-1m1 0l0 1 3 5 4 0 1-6m-34 1l0 1 3 5 1 0 3-7m42 3l-1 4 4 0m-3-6l0 2 3 4 3 1 1-6-1 0m8 0l-1 6 7 1 1-3-3-3m3 0l0 3 5 4 8 1 0-6m26 3l0 6 13 2 0-3-11-4m62 9l0 5 12 2 1-6m38 6l-1 6 13 2 0-6m13 2l-1 6 13 2 0-6"/>
<path fill="#0058ff" d="M499 311l2 5 1-5m0 0l-1 5 1 1 7 0-3-6m5 0l-1 6 8 0-3-6m-28 0l-3 7 7-1-2-6m45 1l-1 6 6 1m8-2l0 2 4 1m-85-4l3 4 8-3-2-4m79 1l0 6 13 2-10-7m24 3l0 1 12 6 1-6m-131 3l4 2-5-4m195 12l0 3 13 1 0-2m38 7l0 1 12 2 0-1m13 2l0 1 12 2 0-1"/>
<path fill="#0068ff" d="M499 305l-1 4 1 2 3 0 1-6m0 0l-1 6 4 0m6-5l-1 5 4 0m-27-2l-1 2 2 0m-15-1l-9 4 1 2 9-3m80 0l-1 1 3 1m24-3l0 6 13 1 0-5m-133 4l-7-2 2 1 3 2 4 3-1-2"/>
<path fill="#0078ff" d="M500 298l3 7 1 0 1-6m-5-1l-1 7 4 0m-19-6l1 2 0-2m-25 5l2 4 4-2-1-3m114 3l3 1 0-1m0 1l-1 5 13 2 0-1m-148-3l8 0-1-3m1 9l-2 0 4 1m202 0l0 2 13 3 0-3"/>
<path fill="#0087ff" d="M501 293l-1 5 5 1 0-6m-23 0l2 6 1 0 2-5 0-1m-24 5l-4 3 1 3 5-1m102-5l2 2 0-1m0 0l0 1 10 6 3 0 0-6m-140 4l4 6 7-3-2-3-2-3m210 10l-1 6 13 2 1-6m-268 6l2 1 8-3-1-1m-62 20l6 2 8-3-5-2m-17 6l-8 3 6 2 8-3"/>
<path fill="#0097ff" d="M502 287l-1 6 4 0-2-6m-20 0l-1 5 0 1 5 0-2-6m58 3l6 6 1-6m-94 2l0 1 1-1m101-1l9 7 2 1 1-6m0 0l-1 6 13 1 1-6m0 0l12 7 1-5m-148 2l-8 3 2 3 7-3m-19 0l2 2 8-2-2-3m221 8l0 5 13 2 0-5-8-2m-257 7l-8 3 5 3 9-3m-25-1l3 5 8-4-3-4m-42 15l5 6 8-4-5-5m-3 9l-8 3 9-3"/>
<path fill="#00a7ff" d="M501 281l1 4 1-4m-1 4l0 2 1 0m-15-6l1 3 0-3m-6 0l1 3 0-3m0 3l-1 3 2 0m-14-5l0 2 1-2m71 2l0 5 0 1 7 0 0-6m-96 2l2 6 1 0 3-3-1-4m98 0l0 5 1 1 12 2 0-6m0 0l0 6 13 1m0-5l0 5 13 2 0-6m-169 4l3 7 8-3-1-4-1-2m186 2l0 2 12 3 0-3m25 9l0 1 5 0m-271 2l-8 3 3 4 8-3m-35 10l-8 3 1 2 8-3"/>
<path fill="#00b7ff" d="M500 275l-1 2 2 4 2 0 0-3-1-3m-16 0l2 6 1 0 2-6m16 0l1 2 0-2m-27 0l2 6 1 0 2-6m-17 1l2 6 1 0 2-6m70 2l-1 6 7 0-5-6m-89 1l-3 4 1 3 5-1-2-6m100 0l0 6 13 2-6-5-3-2m23 3l-1 6 13 1 0-3-5-3m-157 3l-9 4 2 3 9-2m186-4l0 6 12 2 1-6m-219 1l1 5 8-5-1-3"/>
<path fill="#00c7ff" d="M500 269l0 6 2 0m-15-6l-1 6 5 0 0-2-1-4m14 0l3 6 1 0 0-6m-26 0l-1 5 0 1 5 0-2-6m-15 1l-1 3 1 3 5 0 1-5 0-1m69 7l0 1 1 0m-88 0l-1 1 1 0m97-6l4 4 0-3m0 3l-1 2 4 1m23 0l0 3 7 1m31-1l0 5 13 2 0-6m-213-1l-8 5 2 3 8-3m64 6l0-1 3 0"/>
<path fill="#00d7ff" d="M488 263l-1 6 3 0m15-6l-1 6 4 0 1-1-2-5m-24 1l-1 5 2 0m-13-5l-1 3-1 3 6 0-2-6m79 3l-1 4 3 2 4 1 0-6m-129 6l1 3 7-6m173 4l0 1 13 5 0-4m0 4l-1 2 13 1m-147 9l-3-5 9 0 1 2-4 3m4-3l-1-2 4 0"/>
<path fill="#00e7ff" d="M496 257l1 3 0-3m8 3l0 3 2 0m2-6l1 1 0-1m-38 2l-1 5 2 0m-21-3l2 6 3-7m95 1l0 6 6 1 1-5-1-1m-130 6l1 6 8-3 1-1-1-5m173 4l0 6 13 2 0-5-7-2m-131 18l-1-1 5-4 2 0 3 5m0 0l-3-5 9 1 1 3-3 1"/>
<path fill="#00f7ff" d="M494 251l2 6 1 0 1-5 0-1m9 0l2 6 1 0 0-6m-43 2l0 1 0-2m-16 3l1 6 5-1 1-1-1-5m94 1l1 2 0-1m0 1l0 4 6 1m-125-2l-6 6 1 2 9-3-1-6m175 9l-1 1 6 1m-127 13l2-1 0 1m0 0l0-1 4-3 3 0 2 5m-48 0l-3-1 3 0m-47 16l-8 3 1-3 8-3"/>
<path fill="#08fff7" d="M495 245l-1 6 4 0-2-6m11 0l-1 5 1 1 3 0 1-4-1-1m-45 1l2 6 0-1 2-6m-16 3l-2 5 0 1 6-1-1-6m90 1l5 6 1 1 1-6m-119 3l1 5 4-5 0-1m-4 6l-2 2 3-1m251 10l0 1 13 2 0-1m-205 8l2-2 1 2m-49 4l-6-1 2-2 11-3-4 6m298-5l0 3 13 2 0-3m-415 2l0 3 8-4 0-2m42 20l3-5 8-3-3 5m-99 1l1 4 8-3-1-4"/>
<path fill="#18ffe7" d="M495 242l0 3 1 0m2-6l1 3 0-3m8 1l0 5 3 1-2-6m-44 1l1 6 4-1-1-6m-13 4l-2 5 3-1m90-5l0 6 7 1 0-6m16 2l4 3 0-2m-140 1l1 5 5-1-1-6m249 17l0 6 13 2 0-6m-255 15l3-5 6-2 4 1-2 3m294-4l0 5 13 2 0-5m-417 1l2 6 8-3-1-6m46 21l2-3 8-3-2 3m-103 0l1 6 8-3-1-6"/>
<path fill="#28ffd7" d="M489 233l2 6 0-6m5 0l2 6 1 0 1-6m-20 0l1 6 1-6m25 6l0 1 1 0m-33-6l1 5 1-5m29 0l1 5 1-5m-43 1l-1 5 0 1 4-1-1-5m51 0l1 2 0-2m28 2l0 5-1 1 7 1 0-3-2-3m16 2l-1 4 3 2 4 1 0-6m-139 0l-2 3 1 4 5-2-1-6m251 21l-1 2 13 2 0-2m-207 6l-3-5 9 0m-51 11l2-3 4 1m296-1l0 1 13 2 0-1m-418-4l1 6 9-3-2-6m-40 15l0 1 8-4m-8 4l-8 3 1 5 8-3"/>
<path fill="#38ffc7" d="M488 227l0 1 1 5 2 0 1-2-1-4m5 0l0 5 0 1 4 0 0-1-1-4m-20 0l1 5 2 0 1-6m-9 1l1 6 2 0 1-6m26 0l0 2 2 4 2 0 0-6m-42 3l-1 4 2 0m-2-6l1 2 0-2m50 0l0 1 2 5 1 0 0-6m28 5l0 3 4 1m16-3l0 5 6 1 0-1m-137-2l-2 3 3-1m144-4l5 3 0-2m140 20l0 1 12 2 0-1m-248 5l-1-2 2-2 6 0 2 4m-147-2l1 4 8-4 0-3m-8 7l-8 4 8-3m-42 9l2 6 8-3-1-6"/>
<path fill="#48ffb7" d="M488 222l0 5 3 0-2-5m8 0l-1 5 3 1m-20-6l-1 4 1 2 4-1 0-3 0-2m-9 0l-1 3 1 3 4 0 0-2-1-4m28 0l-1 6 4 0 0-1-1-5m-43 1l1 6 1 0 2-6m48 0l0 6 3 0 1-6m38 4l3 3 0-2m10 1l3 2 0-2m0 0l0 2 7 5 5 1 1-6m-194 10l1 3 5-4m327 12l0 5 12 2 1-5m-248 6l4-4 2 4m-137-6l-8 3 0 5 9-3m-42 12l-8 3 0 2 9-3"/>
<path fill="#58ffa7" d="M489 219l-1 3 1 0m-9-6l-1 2 0 4 4 0-1-6m13 0l2 5 0-5m-23 0l0 6 3 0-1-6m29 2l0 4 2 0m-41-5l-2 6 4 0 0-2-1-4m50 0l-1 6 4 0m-60-5l1 5 1-6m93 4l-1 3 4 3 3 1 0-6m-127 1l1 6 4-7m129 1l-1 3 4 3 3 0 0-5m0 0l0 5 13 2 0-1-9-6m24 3l11 5 0-3m-221 7l1 5 6-1 3-3-1-4m-34 11l1 6 8-5-1-4m351 7l0 4 13 2 0-4"/>
<path fill="#68ff97" d="M480 210l0 6 2 0m12-6l1 6 2 0 1-6m-23 1l-1 5 2 0m7-6l1 5 1-5m-19 3l0 4 1 0m48-6l2 5 0-5m-57 1l-1 4 1 2 2-1 1-2-1-4m65 1l1 1 0-1m27 3l0 6 6 1 0-1-5-6m-121 2l-2 4 1 2 5-1-1-6m130 1l0 6 6 1 0-2m0 0l0 2 4 0m22-3l0 6 2 0 11 2 0-6m-204 1l1 6 7-8m209 3l0 1 12 4 0-3m-238 1l-8 7 0 1 9-3m-27 3l-8 4 1 4 8-3"/>
<path fill="#78ff87" d="M494 204l0 6 4 0-2-6m-14 0l1 6 2 0 0-4 0-2m-6 0l1 6 1-6m33 1l0 3 1 3 2 0 0-6m-56 1l-1 6 2-1m63-5l2 6 1 0 0-6m-77 1l1 6 2-6m-12 2l1 4 1-4m-7 1l0 3 1-3m-1 3l-2 4 3-1m-11-3l0 5 4-6m169 5l0 4 13 2 0-1m-203-4l-2 2 1 4 8-2 1-2-1-4m209 3l0 6 12 2 1-6m-266 9l1 6 1-1 7-4 0-4m307 2l0 2 13 2 0-2m0 0l0 2 12 2 0-2m38 5l0 4 13 2 0-4m-441 7l0 1 8-3 0-1"/>
<path fill="#87ff78" d="M495 198l-1 6 2 0m-14-6l-1 3 1 3 3 0-1-6m-5 0l0 5 0 1 2 0 0-3 0-3m33 1l0 6 3 0 1-5m-58 0l1 6 1-6m60 0l3 6 3 0 0-2-2-4m-75 1l-1 3 1 3 3 0 0-1-1-5m-12 2l1 6 2 0 2-7m-10 2l1 6 1 0 3-7m128 2l-1 2 7 5 0-6m-148 1l-1 1 1 5 4-1 1-1-1-5m-15 5l-6 7 7-2m-19-1l0 3 5-4m223 2l0 3 13 2 0-2m-261 3l-5 3 0 5 9-3-1-6m308 2l0 6 13 2 0-6m0 0l0 6 12 2 1-6m37 6l0 5 13 2 0-5m-442 7l1 5 8-3-1-5"/>
<path fill="#97ff68" d="M482 192l0 6 2 0-1-6m-3 2l-1 4 2 0m5-6l0 3 1-3m21 1l2 6 1-6m3 1l0 5 4 1-3-6m-55 0l0 3 0 3 2 0 1-5 0-1m59 0l-1 5 1 1 4 0-3-6m-71 2l-1 5 2 0m-1-6l0 1 1-1m-10 2l-2 6 5-1 1-1-1-5m-9 2l-1 5 0 1 5-1-1-6m129 3l0 5 6 1 0-4-2-2m-143 1l-3 6 4-1m-34 4l1 5 5-1 4-4-1-3m-25 13l-3 2 3-1m309-1l-1 3 13 2 0-3m0 0l0 3 13 2 0-2m38 6l-1 2 13 2 0-2m-434 1l-8 4 0 4 8-3"/>
<path fill="#a7ff58" d="M482 191l0 1 1 0m2-5l1 5 1 0 0-5m-6 0l1 4 1-4m-17 0l1 5 0-5m40 0l0 3 1 3 3 0 0-5m4 4l-1 2 1 0m-54-6l-1 6 3 0-1-6m51 0l2 4 0-4m7 3l0 3 1 0m-72-5l1 6 1 0 1-6m-9 2l-2 6 3-1m98-5l5 6 0-6m-109 2l-3 5 3-1m129 0l0 3 4 0m-171 2l-5 6 0 2 9-3-1-6"/>
<path fill="#b7ff48" d="M483 181l2 6 2 0 0-3 0-3m-6 0l0 3 0 3 2 0 0-6m-13 0l0 5 1-5m-6 1l1 5 1 0 1-6m40 1l-1 5 4 1 0-5 0-1m-49 4l-1 2 1 0m50-6l-1 1 2 5 2 0 0-4-1-2m-53 0l1 4 0-4m-11 1l0 3 0 3 3 0 0-2 0-4m89 2l0 4 1 2 5 0 1-3-2-2m10 1l5 4 0-4m9 2l4 2 0-2m-158 2l1 3 2-3m-16 8l-3 3 3-1m260 1l0 2 12 2 1-2"/>
<path fill="#c7ff38" d="M484 175l-1 6 4 0-1-6m-4 0l-1 6 2 0m-7-6l1 2 0-2m-8 0l0 2 1 4 1 0 0-3 0-3m-5 1l-1 6 3-1 1-4 0-2m39 1l0 6 3 0-2-6m3 0l0 6 2 0m-54-6l1 6 1 0 1-6m57 1l2 5 1-5m-70 0l-2 6 3 0m89-4l0 6 5 1m9-5l-1 4 2 2 5 0 0-5m7 1l-1 3 3 3 4 0 0-6m-158 2l0 6 3 0 2-4-1-3m243 12l0 6 13 2 0-6"/>
<path fill="#d7ff28" d="M484 169l0 6 2 0m-8-6l1 6 1-6m-5 0l1 6 1 0 0-6m4 0l1 4 0-4m-12 1l-1 5 2 0-1-6m-3 1l-1 6 3-1-1-5m40 4l0 2 1 0m-48-6l-1 6 3 0 1-3-1-3m56 1l0 4 1 2 3 0 0-4-1-2m35 4l0 6 6 1 0-1-5-6m12 2l0 6 6 0 0-3-4-3m-153 2l-2 3 1 3 4-1 0-6m-5 2l0 2 2-3m183 2l0 3 11 5 2 0 0-6m38 6l12 3 0-1m0 1l0 4 13 2 0-4"/>
<path fill="#e7ff18" d="M478 163l0 4 0 2 2 0 0-4 0-2m-4 0l-1 6 2 0 1-2-1-4m3 0l0 2 1 4 1 0 1-6m-16 4l0 3 1 0m-6-6l-1 6 2 0m57-4l-1 5 3 0m30-2l5 5 0-5m0 5l0 1 1 0m12 0l0 2 2 0m-151-2l-2 4 3-1m-6-4l1 6 2-1 2-4 0-2m181 3l0 5 13 2 0-6m13 2l0 3 12 4 0-5m13 2l0 6 12 2 1-6"/>
<path fill="#f7ff08" d="M479 157l-1 6 2 0m-4-5l0 5 1 0m4-6l-1 6 3 0 0-2-1-4m-41 5l1 5 2-6m107 2l0 4 1 2 5 0 0-5m1 0l6 6 0-5m9 1l4 3 0-3m-160 2l-1 2 0 4 5-1-1-6m177 2l5 3 1-2m-1 2l0 4 13 1m13-3l0 5 12 2 1-6m12 2l0 6 13 2 0-5-4-1m67 10l0 3 12 2 1-3"/>
<path fill="#fff700" d="M481 153l0 4 1 0m-29-3l0 1 1-1m75 1l2 2 0-2m-90 1l0 6 3-1 0-1-1-5m108 2l0 6 6 1 0-1-4-6m5 1l-1 5 1 1 6 1 0-6m7 1l-1 4 3 2 4 0 0-5m-157 1l-3 6 3-1m170-5l0 3 7 4 6 1 0-6m25 6l0 4 13 1 0-2m88 10l0 6 13 2 0-6"/>
<path fill="#ffe700" d="M452 148l1 6 1 0 0-6m73 1l2 6 2 0 0-6m-89 1l-1 6 2-1 0-5m-3 0l0 6 1 0 1-6m109 5l0 2 2 0m5-5l0 6 6 1 0-1-5-6m12 2l0 6 6 1 0-4-3-3m16 3l0 5 13 2 0-4-4-2m130 21l0 4 13 2 0-4"/>
<path fill="#ffd700" d="M452 142l0 1 0 5 2 0 1-6m69 1l3 6 4 0 0-2-1-4m-87 5l-1 2 1 0m-4-6l1 6 2 0 1-2-1-4m116 7l0 1 1 0m7-4l5 4 0-4m0 4l0 2 3 0m12-4l4 3 0-2m0 2l0 4 9 1"/>
<path fill="#ffc700" d="M509 135l1 4 0-4m-57 1l-1 6 3 0 0-6m62 0l1 2 0-2m7 1l-1 6 6 0-3-6m-79 0l0 5 1-5m-9 1l-1 5 0 1 3 0-1-6m119 3l5 5 0-4m0 0l0 4 1 2 5 0 0-5m5 0l2 2 0-2m0 0l0 2 8 5 4 1 1-6"/>
<path fill="#ffb700" d="M499 129l0 3 1-3m8 1l1 5 1 0 1-5m-51 0l0 2 0-3m-6 1l-1 6 2 0m60-6l2 6 1 0 0-6m7 3l0 4 2 0m-80-6l1 6 1 0 1-6m-9 4l-1 3 1 0m118-3l-1 4 2 2 5 1 0-6m0 0l0 6 6 1 1-3-4-4m4 1l0 3 4 3 2 0 0-5m0 0l0 5 13 2 0-5-2-1m166 25l0 6 13 2 0-6"/>
<path fill="#ffa700" d="M495 123l1 4 0-4m1 0l2 6 1 0 0-6m7 1l0 4 1 2 3 0 0-1-2-5m-50 0l1 6 0-1 1-5m54 0l-1 5 1 1 3 0 0-3-1-2m-70 0l0 4 0 2 3 0 0-1 0-5m-13 2l0 3 1-3m121 2l0 6 6 1 0-2-4-4m4 4l0 2 3 0m4-5l0 6 6 1 0-6m0 0l0 6 11 1m166 19l0 6 13 2 0-6"/>
<path fill="#ff9700" d="M491 117l1 4 0-4m2 0l1 6 1 0 0-5 0-1m0 0l0 1 1 5 3 0-1-6m9 1l-1 6 2 0m-50-6l-1 2 1 4 2 0-1-6m55 1l0 5 2 1m-69-6l-1 6 3 0-1-6m88 2l2 4 0-4m-103 1l1 5 1 0 1-6m117 2l3 4 0-3m0 3l0 2 2 1m9-5l2 2 0-2m0 2l0 4 6 1m165 19l0 3 13 2 0-3m0 3l-1 2 13 2 0-2"/>
<path fill="#ff8700" d="M491 111l-1 2 1 4 1 0 1-5-1-1m1 0l0 1 1 5 2 0-1-6m2 1l-1 5 3 0m-40-5l0 6 1 0m-11-1l-1 2 1 0m85-4l3 6 2 0 0-6m-103 1l0 6 3-1 0-6m112 2l2 2 0-2m0 0l0 2 3 4 3 1 0-6m7 1l0 2 4 4 2 0 0-5m171 25l0 6 13 2 0-6"/>
<path fill="#ff7800" d="M491 106l0 5 1 0m1-5l0 5 2 0m30-3l1 2 0-2m-82 0l1 6 1-6m87 1l0 3 1 3 5 0 1-3-2-2m-101 0l-1 5 0 1 3-1-1-5m109 1l4 6 2 0 0-6m0 0l0 6 6 1 0-4-1-2m8 1l0 6 6 1 0-6m171 26l0 5 13 2 0-5m0-1l0 1 13 2 0-1"/>
<path fill="#ff6800" d="M479 100l1 5 1-5m-14 0l1 6 1-6m31 0l1 4 0-4m22 2l2 6 1 0 0-6m-82 1l0 5 2 0 1-5 0-1m86 1l0 6 5 1-3-7m-97 3l-1 4 1 0m109-5l-1 5 1 1 6 0 0-5m0 0l0 5 5 1m8-5l0 6 6 1 1-1m183 22l0 6 13 2 0-6"/>
<path fill="#ff5800" d="M479 94l0 5 0 1 2 0 0-6m-14 0l0 2 0 4 2 0 0-4 0-2m30 0l1 6 1 0 0-5m22 1l0 6 3 0 0-4 0-1m-82 0l-1 3 1 3 3-1-1-6m87 4l0 3 2 0m12-4l0 6 6 1-5-7m208 31l0 5 13 2 0-5"/>
<path fill="#ff4800" d="M479 88l0 6 2 0-1-6m-13 0l0 6 2 0-1-6m30 1l0 1 1 4 2 1 0-1-1-5m10 0l2 6 1-5m1 0l2 6 0-6m7 1l0 5 3 1m-81-6l-1 6 2-1 0-5m101 6l0 2 1 0m-4-6l3 4 0-4m210 34l-1 3 13 2 0-3"/>
<path fill="#ff3800" d="M480 84l-1 4 1 0m-12-4l-1 4 1 0m17-6l1 6 0-6m1 0l1 6 0-6m10 1l0 6 2 0-1-6m-32 0l1 1 0-1m41 1l0 2 1 3 3 1 0-4-1-2m1 0l0 2 1 4 2 0 0-6m-71 4l0 3 1 0m3-7l0 5 1-5m71 1l2 5 1-5m-79 0l0 3 1-3m95 2l3 6 3 0 0-5m16 2l4 4 0-4"/>
<path fill="#ff2800" d="M484 77l0 2 1 3 1 0 0-3 0-2m0 0l0 2 1 3 1 0 0-3 0-2m10 3l0 3 1 0m-32-6l0 6 1 0 0-6m22 0l0 1 1-1m19 1l-1 6 3 0-1-6m2 0l0 6 3 0-1-6m-67 1l1 5 1 0 0-2 0-4m70 1l0 3 1 3 3 0 0-6m-79 0l0 6 1 0 1-6m91 2l3 5 0-5m0 0l0 5 0 1 6 1 0-5-1-1m15 2l-1 3 3 3 4 0 0-5"/>
<path fill="#ff1800" d="M485 71l-1 6 2 0m1-6l-1 6 2 0m-22-6l0 1 1 5 1 0 1-6m20 0l1 6 1 0 0-6m19 4l0 3 1 0m2-4l0 4 2 0m-67-5l-1 1 1 5 2-1-1-5m71 0l0 6 4 0 0-1-2-5m-78 0l1 6 2 0 0-5 0-1m-9 2l0 5 1-6m96 1l3 6 3 0 0-6m0 0l0 6 5 1-3-6m18 2l0 6 6 1 0-6m190 28l0 5 13 2 0-5"/>
<path fill="#ff0800" d="M467 65l-1 6 3 0-1-6m21 0l0 5 0 1 2 0 0-2-1-4m-8 0l1 4 0-4m-3 0l1 3 0-3m-33 2l0 6 1 0 0-6m72 2l-1 4 2 0m-77-5l-1 4 0 1 3 0 0-6m-9 2l-1 3 1 3 1-1 1-5 0-1m94 1l0 5 1 1 6 0 0-2-2-3m2 3l0 2 2 1m18-4l0 6 6 1m190 22l0 6 13 2 0-6"/>
<path fill="#f70000" d="M467 59l0 6 1 0m21-5l0 5 1 0m-9-6l1 6 1 0 0-5 0-1m-4 0l1 6 1 0 0-6m-3 0l0 6 1-6m-31 7l0 1 1 0m-4-5l0 6 2-1 0-1-1-4m-7 1l-1 6 2-1 0-5m95 0l-1 6 5 1-3-7m20 3l5 6 0-5m197 29l-1 5 13 2 0-5"/>
<path fill="#e70000" d="M481 53l0 6 2 0-1-6m-3 0l0 4 0 2 2 0-1-6m-3 0l0 2 1 4 1 0 0-2-1-4m12 1l1 5 1-5m-23 0l1 3 0-3m23 0l1 3 0-3m-48 4l-1 4 1 0m-4-6l1 6 1-6m-4 4l-1 3 1 0m95-3l0 3 1 0m-3-6l2 3 0-2m17 2l3 4 0-4m0 0l0 4 1 2 5 1 0-6"/>
<path fill="#d70000" d="M482 50l-1 3 1 0m-3-5l0 5 1 0m-3-5l0 5 1 0 0-5m12 0l0 2 0 4 2 0 0-5 0-1m-24 0l1 6 1 0 0-6m17 0l1 3 0-3m4 0l0 1 1 5 1 0 0-6m-33 0l1 6 1-6m-18 2l1 6 1-6m-4 0l-1 6 2 0 1-6m74 0l2 6 0-6m11 1l0 2 1 4 2 1 0-6m13 1l0 2 4 5 3 0 0-6m0 0l0 6 6 1 0-4-1-2m18 2l3 3 0-2"/>
<path fill="#c70000" d="M477 46l0 2 1 0m12-6l0 6 2 0-1-6m-23 0l0 3 0 3 2 0 1-5 0-1m15 0l1 6 1 0 0-6m4 0l0 6 2 0 0-2-1-4m-33 1l1 5 2 0 0-3 0-3m-15 2l1 6 0-6m-3 0l-1 6 2 0m-3-6l-1 6 2 0 0-6m73 0l0 2 1 4 2 0 1-5m0 0l3 6 0-6m7 1l0 5 3 1 0-6m14 2l-1 5 7 1 0-5m0 0l0 5 5 1m15-4l0 4 3 2 3 1 0-6"/>
<path fill="#b70000" d="M490 40l0 2 1 0m-22-6l-1 6 3 0-1-6m16 0l0 6 2 0 0-1 0-5m4 2l0 4 1 0m-32-5l-1 6 3-1-1-5m-11 1l1 2 0-2m-4 0l0 4 0 2 1 0 1-3-1-3m-5 3l0 3 1 0m73-5l0 5 4 1 0-2-2-4m2 0l0 4 0 2 3 0 0-6m7 1l0 6 3 0-2-6m16 2l0 6 6 1-4-7m24 5l0 4 6 1"/>
<path fill="#a70000" d="M469 31l0 5 1 0m17-4l-1 4 2 0m-27-5l0 6 1 0m15-7l1 6 0-6m-23 2l0 4 0-5m-4 1l0 6 1 0 0-6m-3 1l-1 5 1 0m70-5l-1 6 2 0m2-6l0 6 3 0 0-2-1-4m8 6l0 1 1 0m16 0l0 2 2 0m39 0l4 3 0-2m76 11l0 1 13 3 0-2m38 5l0 4 12 2 0-4"/>
<path fill="#970000" d="M476 25l0 1 1 4 1 0 0-2 0-3m-24 1l1 6 0-1 1-5m-5 0l0 6 1 0 1-2-1-4m70 3l0 4 2 0m58 2l0 1 8 6 4 1 0-6m51 7l0 5 9 2 4 1 0-6m12 2l0 6 13 2 0-6m38 7l0 4 12 2 0-4m1-2l-1 2 13 2 1-2"/>
<path fill="#870000" d="M486 12l-8 3 6 1 6 1 8-3m-21 5l-1 6 2 0m33-9l-8 3 3 1 3 0 3 1 3 1 2-2 2 0 4-2m-68 2l-1 0 0 6 2 0 0-2m-4-2l-1 4 1 0m86-4l-2 1 7 6 2-6m29 3l-4 1 6 1 4-1m2 2l0 6 12 2 0-1m5-6l-4 1 13 2 4-2m25 4l-4 2 12 3 4-3m-4 3l0 4 13 2 0-2m12 3l0 1 13 2 0-1m4-6l-4 6 11 3 2 0 4-7m37 6l-3 6 13 2 3-7"/>
</g>
<path d="M582.4 376.6l-12.7 14.4M433 312.4l4.1 1.7 4.6 1.2 4.9 0.8M429.8 310.6l3.2 1.8M427.7 309.2l2.1 1.4M426.7 308.5l1 0.7M434.9 313.6l-3.6-1.7-2.7-1.8-1.6-1.2-0.3-0.4M439.1 314.9l-4.2-1.3M434.4 313.5l4.2 1.3M440.6 315.3l-4.4-1.1-3.9-1.5-3.1-1.7-2.1-1.5M426.5 309l1.6 1.1 2.7 1.7 3.6 1.7M438.6 314.8l4.6 0.9M443.7 315.7l-4.6-0.8M427.1 309.5l-0.9-0.8 0.3 0.3M442.1 315.2l1 0.1M440.8 315.2l1.3 0M416.8 316.3l0.7-0.2M416.5 316.5l0.3-0.2M416.6 316.9l-0.1-0.4M417.1 317.3l-0.5-0.4M417.8 317.6l-0.7-0.3M384.8 326.9l1.4 0.3M383.7 326.8l1.1 0.1M383.2 326.7l0.5 0.1M383.1 326.9l0.1-0.2M383.6 327.2l-0.5-0.3M385.7 327.9l-1.2-0.4-0.9-0.3M379.7 328.4l1.2 0.2 1.6 0.2M378.9 328.3l0.8 0.1M378.7 328.4l0.2-0.1M379 328.7l-0.3-0.3M379.8 329l-0.8-0.3M380.9 329.4l-1.1-0.4M382.3 329.7l-1.4-0.3M383.7 329.8l-1.4-0.1M375.5 330.1l1.3 0.3M374.6 330l0.9 0.1M374.3 330l0.3 0M374.4 330.3l-0.1-0.3M376.1 331l-1-0.4-0.7-0.3M371 331.9l1.4 0.3 1.7 0.1M370 331.8l1 0.1M369.6 331.8l0.4 0M369.6 332l0-0.2M370.2 332.4l-0.6-0.4M371.2 332.8l-1-0.4M372.5 333.1l-1.3-0.3M373.9 333.3l-1.4-0.2M366.1 333.9l1.5 0.2M365.1 333.7l1 0.2M364.6 333.9l0-0.2 0.5 0M365.1 334.3l-0.5-0.4M366.1 334.7l-1-0.4M349 340.3l1.5 0.2M347.9 340.2l1.1 0.1M347.4 340.2l0.5 0M347.4 340.5l0-0.3M347.9 340.8l-0.5-0.3M348.8 341.3l-0.9-0.5" stroke="#000" stroke-width="1.8" stroke-linecap="round" stroke-linejoin="round" fill="none"/>
<g fill-opacity="0.7" shape-rendering="crispEdges">
<path fill="#000087" d="M734 421l-4 5 13 2 4-5"/>
<path fill="#000097" d="M609 394l-1 3 13 3 1-4"/>
<path fill="#0000a7" d="M610 390l-1 4 13 2 1-2"/>
<path fill="#0000b7" d="M651 388l-1 2 13 3 0-4"/>
<path fill="#0000c7" d="M525 369l4 0-2-1m125 14l-1 6 12 1 1-6"/>
<path fill="#0000d7" d="M523 364l-9 1 7 4 4 0 2-1m113 6l0 1 12 3 1-2m-1 2l0 4 12 1 1-2"/>
<path fill="#0000e7" d="M641 368l-1 6 13 2 0-6"/>
<path fill="#0000f7" d="M531 348l4 4 1-3m105 13l0 6 12 2 1-6"/>
<path fill="#0008ff" d="M529 342l0 3 2 3 5 1 1-7m1 1l5 4 1-4m98 17l-1 2 13 2 0-1"/>
<path fill="#0018ff" d="M512 335l2 3 1-3m-14 0l3 5 1-5m25 1l-1 6 8 0 0-1-5-5m6 1l-1 4 1 2 6 0 1-6"/>
<path fill="#0028ff" d="M509 329l3 6 3 0 1-6m-19 0l4 6 4 0 2-6m24 5l-1 2 2 0m7-5l-1 6 7 0 0-3-3-3"/>
<path fill="#0038ff" d="M494 323l3 6 2-6m10 0l-1 5 1 1 7 0-3-6m-14 0l-2 6 10 0 1-1-3-5m34 5l0 3 3 0m-67-2l8 0-2-4m239 25l-1 5 13 2 0-5"/>
<path fill="#0048ff" d="M491 317l3 6 5 0 2-6m9 1l-1 5 4 0m-12-6l-2 6 6 0-3-6m-32 5l5 7 6-4-3-6m117 7l11 4 0-3m114 17l0 6 12 2 1-6"/>
<path fill="#0058ff" d="M515 311l3 6 1-6m-26 0l-2 6 10 0 0-1-2-5m2 5l0 1 1 0m-25 0l-8 3 1 2 8-3m-15 0l6 1-3-4m128 3l-1 6 2 1 11 1 1-6m113 22l0 1 13 2 0-1"/>
<path fill="#0068ff" d="M512 305l0 1 3 5 4 0 1-6m-26 0l-1 5 0 1 6 0-1-2-1-4m-18 1l2 5 2-5m-26 7l4 5 2 1 3-3-1-2-2-4m131 4l0 5 13 2 0-3-11-4m-138 4l1 1-3-2"/>
<path fill="#0078ff" d="M513 299l-1 6 8 0 0-3-2-3m-23 2l-1 4 3 0m-18-5l-1 3 1 3 4 0 2-5-1-2m-22 9l-8 2 3 3 6-3m119-4l0 1 12 6 1-5m-1 5l0 1 2 0m-145 1l7 3-2-1-4-1-6-6m225 9l0 3 13 2 0-3"/>
<path fill="#0087ff" d="M513 293l0 6 5 0-3-6m-34 0l-2 7 5-1-2-6m100 7l0 6 13 2 0-6m-160 5l3 4 8-1-4-6m4 6l-8 1 13 4m-21-3l-8 2 3 0 16-1 2 0m229 0l-1 6 13 2 0-6m-288 7l2 1 8-3-2-1"/>
<path fill="#0097ff" d="M514 291l-1 2 2 0m-33-1l-1 1 1 0m101 1l-1 6 13 2 0-1m-155 0l-8 2 3 4 7-3m-17 10l9-1 7 0m231-5l0 5 12 2 1-5m-286 6l-8 4 5 2 8-3m-25-1l4 5 8-3-3-5"/>
<path fill="#00a7ff" d="M634 296l0 3 13 3 0-4m-178 9l-4-4 10-1 1 1-6 4m-85 4l-8 4 2 3 9-3"/>
<path fill="#00b7ff" d="M561 280l3 2 0-2m71 10l-1 6 13 2 0-6m-182 11l-4-4 1-1 10 0 3 4m-14-3l-1 0 2-1m-62 18l-8 2 1-1 8-3m-41 16l-8 3 1-1 8-3m-9 4l-8 3 1-1 8-3"/>
<path fill="#00c7ff" d="M558 274l0 3 3 3 3 0 0-5m-142 7l0 1 2-1m-11 3l1 3 8-5 0-1m213 2l0 6 12 2 1-5-10-2m-176 13l5-5 1 0 4 4 0 1m-12 1l-6-4 13-2-5 5m-69 19l4-5 8-3-4 5m-48 18l3-5 8-3-3 5m-16 6l3-5 8-3-3 5"/>
<path fill="#00d7ff" d="M512 263l1 2 0-2m-64 5l1 5 3-6m105 1l0 6 6 1 1-6m-145 8l2 5 2 0 6-5-1-3m194 3l0 4 12 3 1-5m-225 0l2 6 9-3-2-5m34 18l-1 0 4-5 6 0 5 3-1 0m-44 10l-8 2 2-4 9-3m-29 14l1-3 9-2-2 2m-49 18l2-3 8-3-2 3m-16 6l2-3 8-3-2 3"/>
<path fill="#00e7ff" d="M510 257l0 1 2 5 1 0 0-5m-66 4l2 6 4-1 1 0-2-6m106 1l1 1 0-1m0 1l-1 5 7 1 0-1m-141 1l-5 4 1 4 9-3-1-6m188 2l7 2 0-1m0 1l0 5 13 2 0-3m-217-3l-8 6 9-2m37 13l3-3 3 3m21-3l-2-4 7 0m-15 4l-3-3 6 0m66 5l-1-1 10 1m-135 12l3-5 9-3-3 5"/>
<path fill="#00f7ff" d="M510 251l0 6 3 1 1-4-1-2m-64 4l-2 4 0 2 5-1-1-6m101 1l0 1 6 5 1 0 0-6m-133 6l1 4 6-6m-6 6l-3 3 4-1m183-5l0 5 5 2 7 1 1-6m-142 18l-2-3 2-1 7 0 2 3-2 1m-18 1l-4-4 12-1 1 1-3 4m65 4l-1-6 13 2 1 5-3 0m16 0l-1-3 13 2 1 2m-161 6l1-1 8-2m-8 2l-8 2 2-3 8-3m195 3l0-1 13 2m-234 7l-8 3 1-3 8-3"/>
<path fill="#08fff7" d="M492 245l2 6 1-6m1 0l2 6 1-6m12 2l-1 4 3 1m-3-6l1 1 0-1m-38 0l1 4 1-4m49 1l1 2 0-2m-74 7l-2 2 2-1m102-5l-1 6 7 0 0-5m-134 5l1 6 7-2 2-2-1-5m177 7l0 3 13 2 0-1m-142 15l5-5 2 5m-22 1l-1-1 3-4 6 0 4 4m18-2l-2-3 7 0m39 8l12-1 1 3m13 2l-1-5 13 1 1 6m-241-3l1 3 8-3 0-3m67 12l3-6 8-2-3 5m195 2l-1-5 13 2 1 5m-241 7l3-5 8-3-3 5"/>
<path fill="#18ffe7" d="M491 239l0 1 1 5 3 0 0-3-1-3m1 0l0 3 1 3 3 0 0-3-1-3m10 1l2 6 1 0 0-6m-39 0l1 6 2 0 1-6m45 1l3 6 1 0 1-6m27 3l0 6 6 1 1-4-3-2m-129 4l-4 4 1 3 9-3-1-5m36 27l3-4 3 4m20-1l-2-5 17 1-8 4m64 7l13 0 0 1m-241-3l1 6 9-3-2-6m89 7l-8 1 2-4 9-2m-20 10l1-2 8-2-1 2m191 2l-1-3 13 2 1 3m-237 7l2-4 8-2-2 3"/>
<path fill="#28ffd7" d="M491 233l0 6 3 0-2-6m4 0l-1 6 3 0m10-5l-1 5 1 1 3 0 1-5-1-1m-40 0l0 2 1 4 4 0 0-1-1-5m44 1l0 2 2 4 5 0 0-5 0-1m25 3l2 3 1-3m-1 3l0 3 4 1m-125-1l-4 5 5-1m162-4l4 2 0-2m-106 25l6-5 9 1 2 5m-173 3l1 6 8-3-1-6m84 10l3-5 9-3-3 6m-134 7l1 1 8-3 0-1"/>
<path fill="#38ffc7" d="M492 231l-1 2 1 0m7-5l1 4 0-4m8 0l0 6 3 0-2-6m-36 0l-2 6 4 0-1-6m45 1l0 6 7 0-3-6m-65 1l1 2 0-2m88 2l0 2 4 4 3 0 0-6m32 5l0 2 9 5 4 0 0-5m-100 25l6-4 1 0 2 5m-9-1l-2-4 8 0m233-1l0 1 13 2 0-1m-262 1l-1-2 3 0m-147 5l1 5 8-4-1-4m80 13l2-2 8-1-1 0m-138 7l1 6 9-3-2-6"/>
<path fill="#48ffb7" d="M497 222l2 6 1 0 1-6m-24 0l1 4 1-4m29 5l0 1 1 0m-36-3l0 3 1 0m28-6l2 6 1-6m-32 0l0 3 1-3m46 1l-1 6 4 0m-66-5l1 6 1 0 2-6 0-1m87 3l-1 6 7 0m-124-2l1 6 4-7m152 2l-1 6 13 2 0-3-9-4m-205 12l0 5 9-5-1-3m112 19l0-1 1 1m-147-7l1 1 4-3m133 9l-2-4 1-1 7 0 2 4 0 1m-154-4l1 1 8-3-1-1m380 1l-1 5 13 2 0-5m-263 4l-3-4 0-1 10 0 0 1-4 4m-139-3l-9 4 1 4 8-3m-41 12l-8 3 0 2 8-3"/>
<path fill="#58ffa7" d="M497 216l0 5 0 1 4 0 0-2-1-4m-24 0l1 6 2 0 0-4 0-2m22 0l0 4 1 2 3 0 0-4 0-2m-33 0l0 1 1 5 1 0 0-6m-11 1l1 6 2-6m51 0l3 6 0-6m-61 1l-2 6 4-1-1-5m-29 6l-2 3 1 3 5-1-1-6m153 7l0 1 3 1m-201 5l-5 3 1 4 8-3-1-5m-33 11l0 6 5-2 4-1-1-6m129 11l5-4 2 4m-153-5l1 6 8-3 0-6m380 3l0 4 12 2 0-4m-266 3l5-5 2 0 3 5"/>
<path fill="#68ff97" d="M498 210l-1 6 3 0m-25-6l0 1 1 5 3 0-1-6m24 0l-1 6 4 0-2-6m-30 0l-1 6 2 0 1-5 0-1m-12 1l0 4 0 2 3 0 0-4 0-2m51 0l0 5 0 1 3 0 1-6m-63 1l1 4 1-4m-1 4l0 2 1 0m-11-4l1 5 2-6m-19 4l0 4 2-4m133 0l6 5 0-4m-141 3l-2 3 3-1m204 4l0 3 13 3 0-4m-260 1l1 5 8-7 0-1m-8 8l-3 2 3-1m-26 4l-8 4 1 3 8-3m-9 0l-8 4 0 2 9-3m131 3l1-1 1 1"/>
<path fill="#78ff87" d="M476 204l-1 6 3 0m24-2l0 2 1 0m-11-6l2 6 0-6m-21 0l0 6 2 0-1-6m22 0l2 6 0-6m-33 1l-2 6 3 0m51-6l0 6 4 0 0-3-1-2m-62 0l0 1 0 5 2 0 1-6m-12 1l-1 4 1 3 3-1-1-6m-19 5l1 5 2 0 2-4 0-3m131 1l0 6 6 1 1-6m64 9l-1 6 13 2 0-6m-259 0l-2 2 1 5 9-3-1-6m315 12l0 2 13 3 0-3"/>
<path fill="#87ff78" d="M491 198l1 6 2 0 1-6m-21 5l-1 1 1 0m7-6l0 3 1-3m13 0l1 6 2 0 1-6m19 2l-1 5 3 1m-61-6l-1 6 3 0-1-6m66 0l2 4 0-3m-78 0l0 3 1-3m-1 3l-1 3 2 0m103-3l1 1 0-1m-120 1l-3 6 0 1 5-2-1-6m132 3l0 4 7 1m-149-5l0 1 1-1m212 12l0 2 12 2m-253-5l-6 5 7-2m-27 3l1 1 5-3m337 5l-1 6 13 2 0-6"/>
<path fill="#97ff68" d="M491 192l0 6 4 0-2-6m-13 0l0 2 1 4 1 0 0-6m13 0l0 6 4 0 0-1-1-4m17 1l3 6 0-6m-58 3l-1 3 1 0m-1-6l1 3 0-3m63 0l3 6 2 1 1-5-1-1m-79 1l1 5 1 0 1-5 0-1m97 2l0 1 5 6 1 0 1-6m-120 5l-1 2 1-1m137-4l2 2 0-1m-150 0l1 6 1 0 3-6 0-1m-58 18l0 6 6-2 3-2-1-5m310 2l0 3 12 2 0-3m13 6l0 2 12 2 0-2m26 0l0 4 12 2 0-4"/>
<path fill="#a7ff58" d="M492 187l-1 5 2 0m-13-5l0 5 2 0 0-1-1-4m15 0l-1 5 3 1m8-6l1 3 0-3m8 1l0 4 0 2 3 0 0-2-1-4m-59 0l1 6 1 0 1-6m61 0l0 3 1 3 5 1-3-6m-75 1l-1 4 0 2 3-1-1-6m98 2l0 6 7 1 0-3-3-3m16 2l0 3 4 3 2 1 1-6m-150 0l-2 3 1 3 5-1-1-6m-51 16l-7 4 1 4 8-3-1-5m311 2l0 5 12 2 1-5m50 7l0 6 12 2 1-6"/>
<path fill="#b7ff48" d="M481 184l-1 3 1 0m6-6l0 3 1-3m17 0l1 6 1 0 1-5m7 2l0 4 2 0m-6-6l0 1 1-1m-53 0l-1 5 0 1 3 0 1-2-1-4m53 0l1 2 0-2m7 1l0 5 3 1-2-6m-72 3l-1 4 1-1m0-5l0 2 0-3m99 5l-1 3 4 1m16-4l0 6 7 1 0-4-4-2m-144 1l-2 5 3-1m-50 15l-1 1 1 0m299-6l-1 2 13 3 0-3m0 3l0 3 13 2 0-3m50 9l0 1 13 2 0-1m-214 7l-2-5 14 2 0 2"/>
<path fill="#c7ff38" d="M486 175l1 6 1 0 0-6m-17 0l0 3 1-3m32 0l0 5 1 1 3 1 0-6m-44 0l1 6 1-6m43 0l2 6 1 0 0-6m-52 0l-1 6 2 0m51-6l2 6 1 0 1-6m6 6l0 1 1 0m-73-5l1 6 0-1 2-6m116 9l0 2 3 1m106 9l0 6 12 2 0-6m-140 24l-1-5 13 2 2 5"/>
<path fill="#d7ff28" d="M484 169l2 6 2 0 1-3-1-3m-18 0l1 6 1 0 0-6m-4 1l1 5 1-5m35 0l0 2-1 3 4 1 0-2-1-4m-43 0l0 3 0 3 2 0 1-6m42 0l-1 4 1 2 3 0 0-1-2-5m2 0l0 5 0 1 4 0 0-1-2-5m-64 2l-1 3 1 3 3-1-1-6m213 20l0 1 13 2 0-1m0 1l0 4 12 2 1-3m-142 22l-1-2 9-2 4 1 1 5"/>
<path fill="#e7ff18" d="M485 163l-1 6 4 0-1-6m-17 1l0 5 2 0 0-5m5-1l1 4 0-4m-10 1l-1 3 1 3 2 0 0-1-1-5m36 0l0 6 2 0m-42-6l0 1-1 5 3 0 0-3 0-3m42 2l0 4 1 0m2-3l0 3 2 0m-63-4l-1 6 2-1m188 10l0 5 12 3 1 0 0-6m13 2l-1 6 13 2 0-6m-121 28l3 0 1 1"/>
<path fill="#f7ff08" d="M485 157l0 6 2 0m-16-3l-1 4 2 0m4-6l1 5 1 0 1-6m0 0l1 6 1-6m-13 2l0 5 1 0m-3-6l-1 6 2 0m-16-4l0 6 1-6m-37 8l1 2 1-2m186 2l-1 2 13 5 0-5m26 3l-1 6 13 2 0-6m13 3l0 5 12 2 0-5m64 9l-1 3 13 2 0-3"/>
<path fill="#fff700" d="M477 152l-1 6 3-1 0-1-1-4m1 0l0 4 0 1 2 0 0-4 0-1m-31 2l1 6 1 0 1-5 0-1m-38 8l0 6 2 0 3-6-1-1m184 3l0 6 12 2 1-6m25 7l0 2 12 2m89 8l0 6 12 2 0-6"/>
<path fill="#ffe700" d="M477 147l0 5 1 0m2-6l-1 6 2 0m-30-4l-1 6 3 0-1-6m-38 9l1 5 4-1 0-6m180 3l4 2 0-2m0 2l0 4 13 2 0-1m126 16l0 4 12 2 1-4m-340 35l-8 3 0-1 8-3"/>
<path fill="#ffd700" d="M452 143l-1 5 1 0m78-5l1 4 0-4m-114 7l-3 7 5-2-1-5m172 1l0 2 9 5 4 0 0-5m-196 67l3-5 8-3-3 5"/>
<path fill="#ffc700" d="M455 136l0 6 1-6m71 1l3 6 1 0 1-5m-114 11l-1 1 1 0m173-5l-1 6 13 2 0-6m-193 68l3-5 8-3-3 5"/>
<path fill="#ffb700" d="M454 130l1 6 1 0 1-6m68 1l0 2 2 4 5 1 0-2-2-4m-95 2l0 3 1-4m155 7l0 5 12 2"/>
<path fill="#ffa700" d="M455 124l-1 6 3 0 0-2 0-4m56 0l1 5 1-5m2 1l1 2 0-2m7 0l0 6 5 1-3-6m-81 0l1 3 0-4m-13 3l1 6 1-1 1-3 0-3"/>
<path fill="#ff9700" d="M460 118l1 6 1-6m-7 0l0 6 2 0-1-6m55 0l0 1 2 5 2 0 0-5m0 0l2 6 1 0 1-6m6 3l0 3 2 1m-81-6l0 6 1-1 1-6m-14 3l0 1 0 5 3-1-1-5m136 3l0 2 6 5 1-6"/>
<path fill="#ff8700" d="M490 111l0 2 1-2m4 0l1 6 1-5m-38 0l1 6 2 0 0-3 0-3m-6 3l-1 3 1 0m56-5l-1 5 4 1 0-1-2-5m2 0l0 5 0 1 4 0 0-3-2-3m-72 1l0 1 1 5 2-1 1-2-1-3m-12 2l-2 6 2 0m136-2l0 5 7 1 0-5"/>
<path fill="#ff7800" d="M489 105l1 6 1 0 0-5m2 0l2 5 2 1 0-3-1-3m-36 0l-1 6 3 0-1-6m51 2l0 5 1 0m2-6l0 6 2 0m-71-5l-1 6 3 0 0-6m90 2l2 2 0-2m-105 0l1 5 1-5m135 4l0 6 7 1 0-2-6-5"/>
<path fill="#ff6800" d="M489 100l0 5 2 1 0-1-1-5m3 0l0 4 0 2 3 0-1-6m-35 2l0 4 1 0m-14-3l-1 5 2 0m87-5l3 7 2 0 0-6m-105 0l0 6 2 0 1-4 0-2m128 3l7 6 0-5m0 5l-1 1 1 0"/>
<path fill="#ff5800" d="M489 97l0 3 1 0m4-5l-1 5 2 0m-52-3l0 3 1-3m89 0l0 3 2 3 5 1 0-4-1-2m-104 1l-1 1 1 4 3 0-1-6m111 1l5 7 0-6m13 2l0 5 7 1 0-5"/>
<path fill="#ff4800" d="M523 91l3 6 1-6m-84 0l0 6 1 0 1-6m89 1l-1 5 6 1-3-6m-100 0l-1 7 2-1m110-5l0 4 1 2 5 1 1-6m13 2l-1 6 7 1 0-4-3-3m-9 56l-1-2 11 1"/>
<path fill="#ff3800" d="M508 84l1 2 0-2m15 1l-1 5 0 1 4 0 0-5 0-1m-85 0l1 6 2 0 0-3 0-3m89 2l0 5 2 0m-100-5l0 4 1-5m110 2l0 5 7 1 0-1-4-5m17 6l0 2 3 0m-10 54l-3-4 15 1 2 4-3 0m3 0l-2-4 13 1 1 3"/>
<path fill="#ff2800" d="M507 78l1 6 1 0 1-6m5 0l1 6 1-5m7 0l0 6 3 0m-8-6l1 3 0-3m-77 1l-1 5 3 0 0-6m-9 2l-1 2 1 4 1-1 1-6m109 3l0 5 3 0m7 58l0-1 13-1 2 3m-15-2l-3-4 15 1 1 2m2 3l-2-3 8-1 5 1 2 4"/>
<path fill="#ff1800" d="M483 71l1 6 1-6m2 0l1 6 1-6m17 1l0 2 1 4 3 0 0-3-1-3m4 0l0 2 2 4 2 1 0-6m-68 0l1 5 1-4 0-2m66 1l2 6 1 0 0-6m-76 1l-1 6 2-1-1-6m-7 2l-1 6 2-1 0-5m116 66l-1-2 11-2 2 1 3 4m9 1l4 0 1 1"/>
<path fill="#ff0800" d="M483 65l0 4 0 2 2 0 0-1-1-5m3 0l0 5 0 1 2 0 0-1-1-5m2 0l1 4 0-4m-26 0l1 6 1-6m39 1l0 6 3 0-2-6m7 1l-1 5 4 1 0-1-2-5m-66 0l0 6 2-1-1-5m67 0l0 5 0 1 3 0 1-4-1-2m-76 5l0 2 0-1m-7-1l0 3 1 0m126 62l2 0 0 1"/>
<path fill="#f70000" d="M483 60l0 5 1 0m3-4l0 4 1 0m1-6l0 1 1 5 1 0 0-5m-26 0l0 5 2 0 0-6m40 4l-1 3 1 0m7-4l0 5 1 0m-66-6l-1 5 1 1 1 0 0-6m67 0l0 6 3 0-2-6m240 35l12 2 0-1"/>
<path fill="#e70000" d="M490 54l-1 5 2 1 0-1m-9-6l1 6 0-5m-18 0l-1 4 1 2 2-1-1-5m14-1l1 6 0-6m-31 5l-1 3 1 0m68-2l-1 2 1 0m-79-4l1 3 0-3m318 33l0 6 12 1 0-5"/>
<path fill="#d70000" d="M482 48l0 2 0 3 1 1 1-3-1-3m-18 0l0 6 1 0 0-6m14 0l-1 0 1 5 1 0 1-3-1-2m-39 3l0 5 1-6m-4 1l0 1 0 5 1 0 1-6m119 4l1 2 1-2m196 33l0 2 12 2 0-2"/>
<path fill="#c70000" d="M482 42l0 6 1 0m-18-3l0 3 1 0m14-6l0 6 1 0m10-6l1 6 0-6m1 0l1 4 0-4m-48 2l1 6 1-6m-6 1l0 2 0 4 1-1 1-6m-4 1l-1 6 2 0 1-4-1-2m114 4l5 6 2 0 0-6m-12 70l-4-2 13 0"/>
<path fill="#b70000" d="M491 36l-1 4 1 2 1 0 0-4 0-1m-7-1l1 6 0-6m6 1l0 1 1 4 1 0 0-5m-32 0l1 5 1-5m-4 0l0 6 1-6m-14 1l-1 4 0 2 2 0 0-2 0-4m-5 1l-1 6 2-1 0-3 0-2m-3 0l-1 6 1 0m114-2l0 6 7 0 0-5m-16 73l-5-3 3-1 14 0 4 3-3 1"/>
<path fill="#a70000" d="M491 31l0 5 1 1m-7-6l0 1 0 4 1 0 1-4 0-1m6 0l-1 6 2 0 1-2-1-4m-33 0l1 6 2 0 0-5 0-1m-5 0l1 6 1 0 0-6m-14 2l0 5 1 0m-5-5l0 6 1 0 0-6m80 0l1 4 0-3m31 3l-1 6 7 1 0-2-3-4m174 25l0 4 13 3 0-5m-202 48l10-3 4 3"/>
<path fill="#970000" d="M485 25l0 6 2 0-1-6m7 2l0 4 1 0m-32-6l-1 5 0 1 3 0-1-6m-4 0l0 3 0 3 2 0 0-1 0-5m-9 1l1 4 0-4m-3 0l1 6 0-6m71 1l0 2 2 4 1 1 1-6m30 5l0 4 3 1m137 14l12 2 1 0m24 5l0 4 13 2 0-4m1-2l-1 2 13 2 0-2"/>
<path fill="#870000" d="M478 15l-4 2 3 0 3 1 4-2m1 6l0 3 1 0m-24-6l0 6 1 0m-3-6l-1 6 2 0m62-7l-4 2 4 0 3 1 4-2m-78 1l-1 0 1 2 0 4 1 0 1-6m-3 0l-1 3 0 3 1 0 1-4m57-2l3 5 0-4m11 1l-1 5 4 1 0-5m56 6l12 7 1-5m17 0l-4 2 12 2 4-2m76 12l-4 7 13 2 3-7m38 5l-3 7 12 2 4-7"/>
</g>
<path d="M530 369.7l13.1-8.5M542.4 375l-11 1.7M567.6 308.3l-5.5 26.1M563.8 313.5l4.5-14.3-0.7 9.1M667.1 316.7l-0.3 3.6M411.9 319.5l2-0.1M409.9 319.5l2 0M408.1 319.4l1.8 0.1M406.6 319.3l1.5 0.1M405.6 319.2l1 0.1M405 319.3l0.6-0.1M409.5 320.9l-1.2-0.1M360.8 335.9l1.5 0.2 1.8 0.1M359.8 335.7l1 0.2M359.2 335.7l0.6 0M359.2 335.9l0-0.2M359.7 336.3l-0.5-0.4M360.6 336.7l-0.9-0.4M355.1 338l1.5 0.2M354 337.9l1.1 0.1M353.5 337.9l0.5 0M353.4 338.1l0.1-0.2M353.9 338.5l-0.5-0.4M354.9 338.9l-1-0.4M356.1 339.3l-1.2-0.4M357.4 339.5l-1.3-0.2M342.4 342.7l1.5 0.2M341.4 342.6l1 0.1M340.9 342.9l0-0.2 0.5-0.1M341.5 343.3l-0.6-0.4M342.4 343.8l-0.9-0.5" stroke="#000" stroke-width="1.8" stroke-linecap="round" stroke-linejoin="round" fill="none"/>
<g fill-opacity="0.7" shape-rendering="crispEdges">
<path fill="#000097" d="M622 396l-1 4 13 3 1-5"/>
<path fill="#0000a7" d="M624 390l-1 4-1 2 13 2 2-6"/>
<path fill="#0000b7" d="M625 385l-1 5 13 2 1-4m25 1l0 4 12 2 1-4"/>
<path fill="#0000c7" d="M664 383l-1 6 13 2 1-6"/>
<path fill="#0000d7" d="M653 376l-1 2 13 3 0-4m0 4l-1 2 13 2 0-2"/>
<path fill="#0000e7" d="M538 355l3 3 1-3m111 15l0 6 12 1 1-5"/>
<path fill="#0000f7" d="M509 348l1 1 0-1m26 1l-1 3 3 3 4 0 1-6m3 0l4 3 0-2m104 14l-1 6 13 2 1-6"/>
<path fill="#0008ff" d="M517 341l3 5 1-4m-16 0l4 6 1 0 3-7m24 1l-1 7 7 0 0-2-5-4m6 0l-1 4 3 2 4 1 1-6m103 19l0 1 13 2 0-1"/>
<path fill="#0018ff" d="M515 335l-1 3 3 3 4 1 1-4-1-3m-16 0l-1 5 1 2 8-1 1-3-2-3m-24 3l1 1 2-2m46 4l0 1 1 1m7-6l-1 6 7 1 1-5-2-1"/>
<path fill="#0028ff" d="M516 329l-1 6 6 0m-14-6l-2 6 7 0-3-6m-25 3l4 6 3-1 6-8m48 5l0 3 5 1"/>
<path fill="#0038ff" d="M522 323l2 3 1-3m-17 5l-1 1 2 0m-21-5l-1 1-4 4 1 3 13-3-3-6"/>
<path fill="#0048ff" d="M518 317l4 6 3 0 1-5m-35-1l-3 7 6-1m-25 2l6 4-5-7m136 5l0 3 13 4 0-5"/>
<path fill="#0058ff" d="M519 311l-1 6 8 1 0-6m-51 1l2 4 3-5m-11 8l-6-1-1 1 5 4 2 1 1-3m137-1l-1 6 13 2 0-6"/>
<path fill="#0068ff" d="M520 305l-1 6 7 1-4-7m-47 2l-1 3 1 3 5-1 1-1-2-5m-16 13l-2-1 1 2m134-6l11 4 0-3m0 3l0 3 12 2 1-1m-145 2l-3-5 14 2 2 3-8 0"/>
<path fill="#0078ff" d="M518 299l2 3 0-3m0 3l0 3 2 0m-45-5l1 3 1-3m-1 3l-3 4 4-1m116 2l-1 5 2 1 11 1 1-5m-136 9l-1 0 13-3 2 5"/>
<path fill="#0087ff" d="M515 293l3 6 2 0 1-6m-47 1l3 6 2 0 2-7m114 9l0 6 13 2 0-5-6-2m-159 10l-2 0 2-1m-56 13l2 1 9-3-2-1"/>
<path fill="#0097ff" d="M514 287l0 4 1 2 6 0-3-6m-41 1l-3 6 7-1 1-1-2-5m115 14l0 1 7 1m-161 10l-7 0 4-3 7-1 4 1-6 2m-52 8l-8 3 4 2 9-3"/>
<path fill="#00a7ff" d="M515 282l-1 5 4 0m-39-5l-2 6 3-1m167 11l0 4 12 3 1-5m-222 10l3-2 4 1m-4-1l-8 0 11-3"/>
<path fill="#00b7ff" d="M647 292l0 6 13 2 0-6m-227 14l4-5 7-2 3 1-3 3"/>
<path fill="#00c7ff" d="M515 269l1 3 0-3m122 16l10 2 0-1m0 1l-1 5 13 2 0-4m-223 13l2-2 5 0"/>
<path fill="#00d7ff" d="M513 263l0 2 2 4 1 0 1-5m119 15l-1 5 3 1 10 1 0-5m-180 12l-5-3 9-1m-19 6l-7-2 11-3m100 7l0-3 13 2 0 1m-155 8l-8 2 1-3 9-3m-10 6l-9 2 2-2 8-3"/>
<path fill="#00e7ff" d="M513 258l0 5 4 1 0-3-2-3m-43 0l0 1 1-1m86 4l0 1 6 5 0-5m-146 8l0 2 5-4m199 2l0 1 13 4 0-3m0 3l0 3 12 2 0-2m-185 11l-3-3 1-2 10-1 3 3-2 2m-26 4l-1 0 4-5 8-2 3 1-3 3m100 4l-1-5 12 2 2 5m-162 8l4-5 8-3-3 5m-17 6l3-5 9-3-4 5"/>
<path fill="#00f7ff" d="M514 254l-1 4 2 0m-2-6l1 2 0-2m-44 0l2 6 1 0 1-6m85 4l0 6 6 1 1-6m-149 8l2 6 5-2 3-3-1-4m198 3l-1 6 13 2 0-5-2-1m-173 18l4-5 2 0 4 4m20-2l-2-3 6 0m-46 9l3-4 5 2m23-6l-1-1 3 0m74 10l-1 0 13 0 0 2m-13-2l-1-5 13 2 1 3m-139 4l-8 2 2-4 9-3m-20 11l1-2 8-2-1 1m-17 6l2-3 8-2-1 2"/>
<path fill="#08fff7" d="M511 246l0 1 2 5 1 0 0-6m-45 0l1 6 4 0 0-2-1-4m86 5l0 5 7 1 0-5-1-1m-146 7l-3 3 1 4 9-3-1-6m186 2l0 2 13 4 0-4m0 4l0 1 10 2m-169 13l1-1 1 1m22-1l-2-5 8 0 2 3-2 2m-16 0l-4-4 11-1 1 0-5 5m72 5l-1-3 13 0 1 5m-144 5l3-5 9-3-3 5m-101 0l1 3 8-3-1-3"/>
<path fill="#18ffe7" d="M511 240l0 6 3 0 1-3-1-3m-44 0l-1 6 4 0-1-6m-18 2l1 2 0-2m102 3l3 2 0-2m0 2l-1 4 6 0m-142-1l1 3 4-4m-4 4l-5 5 6-2m186-4l0 6 13 2 0-5-6-2m-131 21l6-5 2 5m-20 1l-3-4 1-1 10-1 3 5m-28 0l-4-1 5-1m-33 14l1-2 8-1m-105-1l1 6 8-3-1-6m89 5l-8 2 2-3 8-3"/>
<path fill="#28ffd7" d="M512 235l-1 5 3 0m-43-4l-1 4 2 0m39-6l1 1 0-1m-59 3l1 5 1 0 2-6m97 2l-1 3 4 4 3 0 0-6m-136 5l-1 2 0 4 5-1 4-5 0-2m180 9l-1 1 7 1m-145 17l4-5 3 0 3 4m-29 4l-4-1 1-2 12-3-4 5m-9 0l-7 0 8-2m-121 6l-1 0 1 6 8-3-1-6m84 10l2-5 9-3-3 5m-133 8l0 1 9-3-1-1"/>
<path fill="#38ffc7" d="M509 228l2 6 1 0 0-6m11 1l3 6 1-6m-72 1l-2 7 4-1 2-4-1-2m96 2l0 6 6 1-6-6m-124 3l-6 8 8-2-1-6m46 29l2-2 1 2m-29 5l3-5 6-2 4 2-1 2m-20 5l-1 0 2-5 10-2-3 5m-115-3l1 6 8-3-1-5m98 7l-8 1 1-3 9-3m-21 11l2-4 9-1-2 2m-137 7l1 6 8-3-1-6"/>
<path fill="#48ffb7" d="M509 222l-1 5 1 1 3 0 1-6m7 1l3 6 4 0 0-5m-70 0l-2 6 3 0m-13-4l1 5 2-5m57 33l-2-4 9 0 0 1m-17 0l0-1 1 0m-42 10l2-3 4 1m-117-4l0 2 9-4-1-1m93 11l3-5 3-1 6 1-2 3m-111-4l-8 3 1 3 8-2m91 5l3-5 9-3-3 5m-142 6l1 4 8-3-1-4m-7 7l-8 3 0 2 8-3"/>
<path fill="#58ffa7" d="M479 216l0 2 1-2m20 0l1 4 0-4m8 0l0 6 4 0-2-5m-40-1l1 1 0-1m48 1l0 6 7 1 0-3-1-3m-81 2l-1 2 1 4 3 0 2-6 0-1m-21 5l0 3 2-3m147 0l9 6 0-5m-203 13l0 2 5-3m114 18l-2-4 1-1 8 0 2 5m-17 0l-3-5 9 0 0 1-5 4m-154-2l1 6 8-3-1-6m97 12l1-1 2 0m-12 4l2-4 8 0-1 1m-138 3l-8 3 1 5 8-3"/>
<path fill="#68ff97" d="M478 210l1 6 1 0 0-6m18 0l2 6 1 0 1-6m7 3l0 3 2 1m-41-6l1 5 1 0 1-6m48 1l-1 6 6 1-3-6m10 1l1 3 1-3m-88 1l-2 6 5-1-1-5m-21 5l1 5 2 0 2-3 0-4m141 1l0 4 4 2 9 1 0-5-1-1m-203 14l1 5 5-1 3-2-1-5m-33 11l0 3 8-4 0-2m136 12l6-4 2 4m-18 0l-1-1 4-4 4 0 2 5m-151-2l-8 4 0 1 8-3"/>
<path fill="#78ff87" d="M476 204l2 6 2 0-1-6m19 0l0 6 4 0 0-2-1-4m-30 1l-1 4 0 2 3-1 0-6m48 4l0 3 2 1m-66-6l1 1 0-1m71 1l4 6 2 0 0-6m-87 4l-1 3 2 0m111-4l2 1 0-1m-131 2l-4 6 1 1 5-2-1-5m143 0l-1 6 12 1m-196 5l0 1 2-2m-2 2l-8 6 1 2 8-3m-34 6l1 5 8-3-1-5m130 12l2-2 2 2"/>
<path fill="#87ff78" d="M477 198l-1 5 0 1 3 0 0-1-1-5m21 0l-1 6 3 0m-30-5l0 6 2-1 1-1-1-4m-16 1l0 6 1 0 1-6m69 1l0 3 1 3 6 0-3-6m23 3l0 1 5 5 2 0 0-5m-130 6l-1 1 1 0m152-4l4 2 0-2m51 8l0 3 12 4 1-6m-263 1l1 6 2-1 6-5 0-3m-34 12l1 3 8-5-1-1m-7 6l-9 4 1 2 8-3m139 4l-1-1 3 0m-37 6l-5-2 7-1"/>
<path fill="#97ff68" d="M477 195l0 3 1 0m11-6l2 6 0-6m-19 3l-1 4 2 0m20-7l2 6 0-6m-38 2l-1 3 1 3 2 0 1-3-1-3m70 2l-1 5 4 0m-4-6l1 1 0-1m27 3l-1 6 7 1 0-3-3-4m16 3l0 1 9 6 4 0 0-6m51 8l0 6 13 1 0-5-2-1m-257 0l-4 3 0 4 9-3-1-5m-34 11l1 6 8-3 0-6m330 1l0 3 13 3 0-4m-212 15l-3-5 9 0 1 2-4 3m-42 4l-3-1 2-3 11-2-3 5"/>
<path fill="#a7ff58" d="M488 187l1 5 2 0 1-5m0 0l1 5 2 0 1-5m-38 1l-1 6 2 0m66-5l3 6 1 0 0-6m-81 1l1 4 1-4m103 2l3 3 0-3m0 3l0 3 3 0m17-3l-1 6 13 1 0-2-5-4m56 13l0 1 11 1m-253-3l-4 3 4-1m-26 4l-8 5 0 2 9-3m331-4l-1 5 13 2 0-6m-215 16l0-1 4-4 3 0 2 5m-9-1l-3-3 7-1m-41 10l3-5 3-1 6 3-1 1"/>
<path fill="#b7ff48" d="M488 181l-1 3 1 3 4 0 0-1-1-5m1 0l0 5 0 1 4 0 0-2-1-4m28 2l2 6 4 0 0-2-1-4m-81 1l1 6 2 0 1-4 0-2m99 2l0 2 3 4 3 0 0-5m20 4l0 4 7 1m107 10l0 3 13 2 0-3m0 3l0 3 12 1 0-2m38 2l0 5 13 2 0-5m-262 9l2-1 1 1m-10 1l-1-3 2-2 6 0 2 3-2 1m-38 5l1-2 2 1"/>
<path fill="#c7ff38" d="M488 175l0 6 3 0-2-6m3 0l0 6 3 0-2-6m30 2l-1 5 1 1 5 0-3-6m-76 1l-2 5 0 1 4 0-1-6m100 2l0 6 6 1 0-2-3-5m137 20l0 6 13 2 0-6m50 8l0 5 13 2 0-5m-268 10l4-4 2 4"/>
<path fill="#d7ff28" d="M489 172l-1 3 1 0m4-2l-1 2 1 0m-5-6l1 3 0-3m18 1l1 4 1-4m-46 0l1 3 0-3m50 0l2 5 0-4m7 2l0 4 2 0m-76-2l0 3 1 0m-1-6l0 3 1-3m100 5l0 3 3 0m125 13l0 1 13 3 0-3m0 3l-1 3 13 2 0-3m51 9l-1 2 13 2 0-2"/>
<path fill="#e7ff18" d="M483 163l1 6 1-6m2 0l1 6 1 0 0-6m-20 1l1 5 0-5m-3 0l0 3 1-3m37 0l2 6 2 0 0-4-1-2m-46 0l1 6 1 0 1-5 0-1m48 1l-1 2 2 3 2 1 0-4-1-2m-67 1l1 6 1 0 1-6m-40 9l1 1 0-1m203 2l13 5 0-3m50 8l0 6 13 1 0-5"/>
<path fill="#f7ff08" d="M483 157l0 4 0 2 2 0 0-6m0 0l2 6 2 0 1-4-1-2m-21 1l0 1 1 5 1 0 1-4 0-2m-5 0l1 6 1 0 0-5 0-1m37 0l0 6 3 0-1-6m-44 0l-1 4 0 2 3 0-1-6m49 1l0 6 2 0m-67-5l0 4 0 2 3 0 0-6m-40 10l0 5 1 0 4-5-1-2m200 4l0 5 13 2 0-5m50 8l0 5 13 2 0-4m63 8l0 3 13 2 0-4"/>
<path fill="#fff700" d="M484 152l-1 5 2 0m1-5l-1 5 4 0-1-5m-19 0l-1 6 3 0-1-6m-4 0l0 5 0 1 2 0-1-6m39 3l-1 3 2 0m-44-3l0 3 1 0m-14-4l-2 6 3 0m-41 4l1 6 4-2 0-6m201 4l-1 6 13 2 0-4-8-3m21 3l0 3 12 4 1-5m100 15l0 6 13 1 0-5"/>
<path fill="#ffe700" d="M486 146l0 6 2 0-1-6m-18 4l0 2 1 0m-3-3l-1 3 1 0m-53 5l-4 6 0 1 5-2m188-4l0 2 13 5 0-5m0 5l0 1 4 1m21-3l0 6 13 2 0-6m101 17l-1 4 13 2 0-4m-320 24l-8 2 1-2 9-3"/>
<path fill="#ffd700" d="M486 144l0 2 1 0m116 7l0 5 13 2 0-5m25 6l0 3 13 2 0-2m-214 45l3-6 9-2-3 5"/>
<path fill="#ffc700" d="M433 140l0 4 2-4m168 7l0 6 13 2 0-3m-173 51l2-3 8-2-1 3"/>
<path fill="#ffb700" d="M530 132l2 4 0-4m-100 2l1 6 2 0 0-3 0-3m154 5l2 1 0-1m0 0l0 1 12 7 1-6m36 53l0-1 13 2 0 1"/>
<path fill="#ffa700" d="M453 124l1 6 1-6m72 2l3 6 2 0 0-6m-100 2l0 2 0 4 3 0-1-6m144 4l11 7 2 0 0-5m0 0l0 5 13 2 0-5m-144 53l-8 1 1-2 9-3m178 8l-2-5 13 2 2 5"/>
<path fill="#ff9700" d="M452 119l1 5 2 0 0-6m71 2l-1 2 2 4 5 0 0-2-2-4m-96 3l-2 5 2 0m145-2l-1 6 13 2 0-6m0 0l0 6 13 2 0-2-10-6m-141 60l3-5 9-3-3 5m176 3l-2-5 13 2 2 5"/>
<path fill="#ff8700" d="M509 112l2 6 1-5m-59 0l-1 4 0 2 3-1 1-3-1-2m58 0l2 5 0-5m11 1l0 6 4 0-2-6m-95 2l1 6 2-6m143 5l0 5 12 2 0-1-8-6m8 6l0 1 3 0m-138 55l2-2 8-2-1 1m171 3l13 1 0 1"/>
<path fill="#ff7800" d="M496 106l1 3 0-3m-38 0l0 6 1-6m48 1l0 1 1 4 3 1 0-5-1-1m-57 0l-1 6 2 0 0-6m57 0l0 1 1 5 2 0 0-6m11 3l0 4 2 0m3-5l2 3 0-3m-101 2l1 5 3 0 0-1-1-5m123 2l1 2 0-2m20 7l0 2 4 0m11 48l0-1 13 1"/>
<path fill="#ff6800" d="M492 100l1 4 0-4m2 0l1 6 1 0 0-6m-39 1l1 5 1 0 0-4 0-2m49 1l-1 6 3 0-1-6m-56 1l0 5 1 0m57-6l0 6 3 0-1-6m14 2l3 6 2 0 0-6m-100 2l-1 3 0 3 3-1 0-6m118 2l5 6 1 0 1-6m34 62l-2-5 13 2 2 4"/>
<path fill="#ff5800" d="M492 94l-1 2 1 4 1 0 1-5-1-1m1 0l0 1 1 5 2 0-1-6m-38 1l0 4 0 2 2-1-1-5m50 2l0 4 1 0m2-4l0 4 2 0m12-4l0 1 2 5 5 0 0-3-1-3m-98 3l-1 5 2-1m-1-5l0 1 1-1m118 1l0 6 7 0 0-5m32 62l-2-4 13 1 2 5"/>
<path fill="#ff4800" d="M492 88l0 6 1 0m1-6l0 6 2 0-1-6m-36 1l-1 6 1 0m68-4l-1 6 6 0-3-6m-95 2l0 6 1 0 1-7m118 2l-1 6 7 1-5-7"/>
<path fill="#ff3800" d="M494 85l0 3 1 0m32-2l0 5 2 0m-94-4l-2 5 1 1 2-1 0-1 0-4m118 6l0 1 1 0m-5-6l4 5 0-4m32 62l-1-3 14 2 0 1"/>
<path fill="#ff2800" d="M524 79l3 6 0-5m-92 3l0 4 1 0m111-5l0 1 3 5 4 1 0-6m16 61l-1-2 9 1m7 5l-2-4 13 1 3 5"/>
<path fill="#ff1800" d="M505 72l1 2 0-2m3 0l1 3 0-3m14 2l0 4 0 1 3 1 0-6m21 2l-1 6 7 1 0-4-1-2m16 65l-3-4 14 1 2 4-4 0m5 1l-1-1 13 0 1 2"/>
<path fill="#ff0800" d="M504 66l1 6 1 0 0-6m1 0l2 6 1 0 0-6m1 1l2 5 1-5m1 0l2 5 0-5m7 1l0 6 3 0 0-1-1-5m-89 1l0 3 1-3m110 2l0 5 5 1-4-6m17 67l0-1 12-1 2 3"/>
<path fill="#f70000" d="M503 60l0 1 1 5 2 0 1-3-1-3m1 0l0 3 0 3 3 0 0-3 0-2m0 0l0 2 1 4 3 0 0-5 0-1m0 0l0 1 1 5 2 0 0-6m7 4l0 3 2 0m-89-5l0 1 0 5 1 0 1-6m109 6l0 2 1 0"/>
<path fill="#e70000" d="M488 54l1 5 1-5m-24 0l1 5 0-5m36 0l0 6 3 0-1-5m2 0l0 5 3 1-2-6m3 0l-1 6 4 0-2-6m2 0l0 6 3 0 1-2-2-3m-78 1l-1 6 2 0 1-3-1-3m126 4l3 3 0-2"/>
<path fill="#d70000" d="M488 48l0 3 0 3 2 0 0-4-1-2m-6 0l1 3 0-3m-18 0l0 6 1 0 1-6m35 2l0 4 2 1m2-4l0 4 1 0m3-4l0 4 1 0m2-5l0 5 2 1-1-6m-76 2l-1 5 1 0m123-2l-1 2 4 4 3 1 0-6m190 28l0 4 12 2 1-4"/>
<path fill="#c70000" d="M488 42l0 6 1 0m-7-6l1 6 1 0 0-6m-5 0l0 6 1 0 0-6m-14 0l-1 3 1 3 2 0 0-3 0-3m46 7l0 1 1 0m47-1l0 6 6 1 0-6m190 30l0 4 13 2 0-4"/>
<path fill="#b70000" d="M482 36l0 5 0 1 2 0-1-6m-5 0l0 1 1 5 1 0 0-2-1-4m-13 0l0 6 2 0-1-6m23 0l0 4 1-4m35 3l2 6 1-5m33 4l0 5 6 1 0-1-4-5"/>
<path fill="#a70000" d="M483 31l-1 5 1 0m-5-6l0 6 1 0 0-6m-13 1l0 5 1 0m22-5l1 5 1 0 0-5m0 0l1 6 1-6m32 3l0 3 1 2 3 1 0-6m33 8l0 2 2 0m-5-6l3 4 0-4m133 20l0 3 13 2 0-3m38 5l0 5 12 2 0-5"/>
<path fill="#970000" d="M478 28l0 2 1 0m10-5l0 6 2 0 0-2-1-4m1 0l0 4 0 2 2 0 0-4 0-2m-30 0l1 6 0-6m-3 0l0 5 1-5m-4 0l1 3 0-3m67 3l-1 6 4 0 0-3-1-3m28 3l0 2 3 5 3 0 0-4 0-2m134 20l-1 6 13 2 0-6m38 7l0 4 12 2 1-4"/>
<path fill="#870000" d="M484 16l-4 2 3 0 2 1 1 0 2-1 2-1m-1 3l0 5 1 0m1-6l0 6 2 0m-30-6l-1 0 1 6 1 0 1-6m-4 0l-1 0 1 6 1 0 0-6m-4 0l-1 1 1 5 1 0 1-6m64 2l-1 1 3 1 1-1m-1 1l0 5 2 0m28-2l0 5 6 1 0-5"/>
</g>
<path d="M517.1 367.1l12.9 2.6M587 353.9l9.7-32.2M597.1 318.9l-9.2 31.9M591.7 349.9l7.4-32.2M599.8 327.7l-8.4 33.3M449.1 316.5l1.6 0.5M447.8 316.2l1.3 0.3M446.7 316l1.1 0.2M404.9 319.5l0.1-0.2M405.3 319.8l-0.4-0.3M406 320.2l-0.7-0.4M407.1 320.6l-1.1-0.4M408.3 320.8l-1.2-0.2M402.8 322l1.9 0M401 321.9l1.8 0.1M399.5 321.7l1.5 0.2M398.4 321.6l1.1 0.1M397.8 321.5l0.6 0.1M397.7 321.7l0.1-0.2M398 322l-0.3-0.3M398.8 322.4l-0.8-0.4M399.9 322.7l-1.1-0.3M403.8 323l-1.2 0.1M404.8 322.9l-1 0.1" stroke="#000" stroke-width="1.8" stroke-linecap="round" stroke-linejoin="round" fill="none"/>
<g fill-opacity="0.7" shape-rendering="crispEdges">
<path fill="#000087" d="M619 403l-2 3 13 3 2-4"/>
<path fill="#000097" d="M621 400l-2 3 13 2 2-2m1-5l-1 5 12 2 2-5"/>
<path fill="#0000a7" d="M637 392l-2 6 13 2 1-6"/>
<path fill="#0000b7" d="M638 388l-1 4 12 2 1-4m26 1l-1 4 13 2 1-4"/>
<path fill="#0000c7" d="M677 385l-1 6 13 2 1-6"/>
<path fill="#0000d7" d="M519 366l2 3-7-4 0-1m151 13l0 4 12 2 1-4m-1 4l0 2 13 2 0-2"/>
<path fill="#0000e7" d="M556 356l6 5 1-4m-55 3l-1-2 6 2 4 3 2 3-5-2m152 8l-1 5 13 2 1-6"/>
<path fill="#0000f7" d="M522 348l5 6 1-6m22 2l0 2 6 4 7 1 1-6m-57 7l-3-3 9 5m154 6l-1 6 13 1 0-6"/>
<path fill="#0008ff" d="M521 342l-1 4 2 2 6 0 1-3-3-3m-33 2l3 3 5-5m50 2l-1 6 14 1 0-3-5-3m108 20l0 1 12 1"/>
<path fill="#0018ff" d="M522 338l-1 4 5 0m-35-5l-2 2 4 5 8-2 3-2-3-5m51 4l-1 5 8 1"/>
<path fill="#0028ff" d="M497 329l-6 8 10-2"/>
<path fill="#0038ff" d="M475 329l2 2 4 4"/>
<path fill="#0048ff" d="M475 329l-6-4 2 2 2 1 4 3"/>
<path fill="#0058ff" d="M469 325l-2-1 4 3"/>
<path fill="#0068ff" d="M522 305l4 7 1-6m80 9l0 3 13 4 0-5m-132 7l-2-3 14 1 1 1"/>
<path fill="#0078ff" d="M520 299l0 3 2 3 5 1 0-3-2-3m83 10l-1 5 13 2 0-5m-134 9l-2-5 1 0 13 1 2 5m-29-3l-3-4 16 1"/>
<path fill="#0087ff" d="M521 293l-1 6 5 1m77 3l6 2 0-1m0 1l0 5 12 2 1-2m-136 6l11-4 2 5m-30-2l-4-4 17 0 3 5m-62-2l-8 3 1-1 10-2"/>
<path fill="#0097ff" d="M518 287l3 6 1-5m74 8l-1 5 7 2 6 1 1-6m-145 13l-1 0 7-4 8 0 2 2 1 2m183-5l8 2 0-1m-192 2l-2-2 7 0m-36 3l-4-1 6-1m-36 8l11-3 8 0-9 1"/>
<path fill="#00a7ff" d="M515 281l0 1 3 5 4 1 0-4-1-2m0 0l1 2 0-2m74 8l0 6 13 2 0-6m-139 15l6-4 2 4m182-7l-1 5 5 1 8 1 0-5m-194 5l-2-4 1-1 15 0 0 1-7 4m-40 2l-4-1 3-3 8-1 3 1-4 3"/>
<path fill="#00b7ff" d="M515 275l0 6 6 1-3-7m0 0l3 7 1 0 1-6m73 11l0 3 13 2m51 2l0 6 12 2 1-6m-196 6l5-4 2-1 6 1 2 4m-48 3l3-3 5 2m-5-2l-3-1 4-1"/>
<path fill="#00c7ff" d="M516 272l-1 3 3 0m-2-6l0 3 2 3 5 1 0-3-2-3m127 16l0 1 12 3 0-2m0 2l0 4 13 2 0-3m-189 4l4-3 2 4m15-1l-1-4 10 1m-70 7l-5 0 2-3 12-3-5 5m137 7l-1-4 12 2 1 3"/>
<path fill="#00d7ff" d="M517 264l-1 5 5 1-3-6m48 5l5 4 0-3m77 11l0 5 12 2 1-6m-157 11l-2-5 14 2 2 3-4 1m-73 4l4-5 1 0 7 2m131 8l-1-5 2 0 10 2 1 5"/>
<path fill="#00e7ff" d="M517 261l0 3 1 0m-3-6l2 3 0-3m48 5l0 5 1 1 5 1 1-6m-162 9l1 6 8-6 0-2m217 2l0 3 12 3 1-4m-1 4l0 2 13 1m-159 6l-1-1 6-3 8 1 1 5m-56-3l-3-1 4-1m124 13l10 1 0 1"/>
<path fill="#00f7ff" d="M514 252l0 2 1 4 2 0 1-6m48 5l-1 6 7 1 0-6m-164 10l2 5 9-2-2-6m217 2l2 1 0-1m0 1l0 5 13 2 0-4m-142 13l7-3 1 4m-58 1l-5-2 0-1 13-3-4 5m-48 12l-8 2 1-3 9-2"/>
<path fill="#08fff7" d="M514 246l0 6 4 0 0-2-2-4m-66 4l1 4 2-5m112 2l1 1 0-1m0 1l0 5 6 1 0-1m-156 2l0 2 3-3m-3 3l-8 6 0 1 9-3m207-5l0 4 10 3 2 0 1-6m-185 22l4-6 6-1 4 3-1 1m-142 11l1 3 8-3-1-3m75 8l3-5 9-3-3 6"/>
<path fill="#18ffe7" d="M515 243l-1 3 2 0m-2-6l1 3 0-3m14 1l3 6 1-5m-83 1l-1 3 1 4 3-1 2-5-1-2m106 3l0 2 5 4 1 0 0-5m-152 7l2 6 3-1 5-5-1-3m195 3l6 2 0-1m0 1l0 5 13 1 0-2m-181 18l2-3 4 2m24-2l-3-5 10 0-6 5m-15-3l0-1 1 0m-151 15l1 6 8-3-1-6m79 9l2-3 8-2-1 2m1-2l-8 2 1-2 9-3"/>
<path fill="#28ffd7" d="M512 234l0 1 2 5 1 0 0-6m11 1l0 1 3 5 4 1 0-6m-80 1l-3 6 4-1m106-3l0 6 6 1 0-2-5-5m-148 8l1 6 9-3 0-4-1-1m190 1l0 5 6 2 6 1 0-6m-141 21l-3-4 10-1 3 5m-21 1l-6-3 11-2-4 5m78 3l-1-4 13 1 1 3m-235 3l-8 3 1 6 8-3m82 4l3-5 8-3-2 5"/>
<path fill="#38ffc7" d="M512 228l0 6 3 0 1-4-1-2m12 1l-1 6 7 1 0-4 0-2m-113 9l-7 7 0 1 9-2-1-6m191 3l0 4 12 2 1-2m-145 19l-1-2 2-3 7 0 1 2 1 2m-24 3l-2-2 2-3 10-1 3 2-2 2m73 4l-1-5 13 1 1 5m-235 0l1 6 1 0 7-3-1-6m98 6l-9 1 1-1 9-3m-20 11l2-5 8-2-2 4m191-2l-1-4 13 2 1 4"/>
<path fill="#48ffb7" d="M507 222l1 5 1-5m4 0l-1 6 3 0m12-4l0 5 6 1-4-6m-108 14l-1 1 1 0m60 21l4-4 3 4m-22 2l4-5 1 0 5 4m73 3l-2-6 14 2 1 5m-227-3l0 2 8-3 0-2m113 3l-6-1 8-2m-123 5l-8 4 1 2 8-3m90 6l3-5 9-3-3 5m178 2l-1-4 13 2 1 4m-332 2l1 4 8-3-1-4"/>
<path fill="#58ffa7" d="M505 216l0 2 2 4 2 0 0-6m18 5l0 3 2 0m8-5l4 6 0-6m-71 38l0-1 1 1m30-6l0-1 1 0m45 8l13-1 1 3m-91-4l-5-3 8-1m-139 4l1 6 8-3-1-6m108 8l-2 0 2-4 11-3-3 5m-29 9l3-5 8-2-2 4m-137 3l-8 3 1 5 8-3"/>
<path fill="#68ff97" d="M506 210l-1 6 4 0 0-3-1-2m27 2l-1 3 3 3 4 0 0-2-2-4m-190 31l1 4 8-4 0-3m143 9l-2-5 8 0 1 1-6 4m-161-3l1 5 8-4-1-4m116 9l-3-1 2-3 12-2 1 0-4 5m-131 0l-8 3 0 1 8-3m108 4l3-5 4-1 5 1-1 2"/>
<path fill="#78ff87" d="M506 205l0 5 2 1m27-4l0 6 4 0m36-1l11 7 1 1 1-6m68 10l8 2 0-1m-316 14l1 5 9-3-1-5m142 9l-2-2 3-2 5 0 2 4m-164-4l-3 1 1 5 8-3-1-5m116 10l3-5 4-1 5 4m-23 5l1-2 3 1"/>
<path fill="#87ff78" d="M478 198l1 5 0-5m-6 1l1 4 0-5m58 3l3 6 0-6m40 5l0 6 13 2 0-4-4-2m68 9l-1 6 5 1 8 1 0-6m-308 15l-8 4 0 1 9-3m143 5l4-4 1 4m-157-3l-5 3 5-2m119 5l2-2 2 1"/>
<path fill="#97ff68" d="M477 192l0 3 1 3 1 0 1-4 0-2m-8 1l0 2 1 4 1-1 1-3-1-2m55 2l0 1 3 5 3 0 0-3-1-3m41 7l0 4 9 2m68 4l0 5 12 2 0-4"/>
<path fill="#a7ff58" d="M478 187l-1 5 3 0m-7-5l-1 6 2 0m55-4l0 6 5 0-3-6m52 7l5 4 1-3m50 7l0 5 11 2 2 1 0-6m-290 9l1 4 8-5 0-1"/>
<path fill="#b7ff48" d="M529 187l0 2 2 0m-3-6l1 4 0-4m47 6l0 2 7 5 6 1 0-6m-185 4l1 4 4-5m231 4l-1 6 13 2 0-5-3-1m-287 10l0 5 9-2-1-6m194 21l0-2 13 2"/>
<path fill="#c7ff38" d="M525 177l3 6 1 0 1-5m-83 0l0 5 2-5m127 5l0 6 13 2 0-2-7-5m-178 6l0 5 5-1 4-5 0-2m227 10l0 1 9 2m-280 3l-8 4 1 3 8-3m194 19l-2-5 13 2 2 5m-118 0l-8 0 1-2 10-3"/>
<path fill="#d7ff28" d="M523 171l0 2 2 4 5 1 0-1-3-5m-81 1l1 5 2 0 0-3 0-3m127 8l0 3 6 1m-175-1l-4 4 1 3 9-3-1-6m279 13l0 3 12 2 0-3m51 8l0 4 12 2 0-4m-247 10l-2-4 8 1m37 8l-1-5 13 2 1 5m-123 3l3-5 10-3-3 5"/>
<path fill="#e7ff18" d="M508 164l1 2 0-2m3 0l0 3 1-2m10 0l0 6 4 1-3-6m-77 0l-1 6 0 1 3-1-1-6m-36 10l-5 7 5-2m279 8l0 5 12 2 1-5m50 7l0 6 12 2 1-6m-250 12l-3-4 1 0 16 0 0 2-6 3m36 3l-1-1 13-1 1 4m-119 3l2-4 8 0 0 1m-8-1l-7 1 8-2"/>
<path fill="#f7ff08" d="M482 157l1 4 0-4m21 1l1 6 0-6m-41 0l1 6 1-6m41 0l1 6 1 0 0-6m1 1l2 5 1 1 0-6m10 5l0 1 1 1m-76-2l-1 2 1 0m214 13l4 1 0-1m13 2l-1 1 13 3 0-2m0 2l0 4 13 2 0-4m50 9l0 2 13 2 0-2m-252 10l7-5 6 0 3 5m-81 10l-1 0 3-5 9-2-3 5"/>
<path fill="#fff700" d="M481 152l0 1 1 4 1 0 1-5m0 0l1 5 1-5m16 0l0 1 2 5 1 0 1-3-1-3m-42 0l0 3 1 3 2 0 0-1-1-5m0 0l1 5 0-5m40 0l0 3 1 3 2 0 0-1-1-4m2 0l-1 4 1 2 3 0 0-1-2-5m109 14l8 3 0-2m26 4l-1 5 9 2 4 0 0-5m13 1l0 6 12 2 0-6m-169 26l5-3 1 3m-76 10l3-5 3-1 5 0-2 4m2-4l-5 0 6-2"/>
<path fill="#ffe700" d="M482 146l-1 6 3 0 0-3-1-3m1 0l0 3 0 3 2 0 0-6m16 0l0 6 3 0-2-5m-39 0l-1 5 2 0m-1-5l1 5 1 0 1-3-1-3m40 1l0 5 2 1m2-5l0 5 1 0m-102 5l1 5 4-6m202 3l0 5 4 2 8 1 0-6m26 4l0 6 12 2 0-6m13 2l0 5 12 2 1-5-11-2m-226 38l0-1 3 0m0 0l-3 0 3-4 10-3-4 5"/>
<path fill="#ffd700" d="M482 141l0 5 1 0m1-6l0 6 2 0 0-2 0-4m16 4l0 2 1 1m-38-6l-1 6 2-1 0-5m-57 11l0 6 5-1-1-6m203 4l0 5 12 2 1-5-3-1m28 8l0 2 12 2 0-1m-208 36l3-5 2-1 7 0-2 3"/>
<path fill="#ffc700" d="M485 135l-1 5 2 0m-21-2l0 3 1 0m-56 5l-2 4 1 2 4-1 0-6m190 2l13 5 0-3m0 3l0 3 10 1m-165 42l0-1 2 0m-10 1l-8 2 1-2 9-3"/>
<path fill="#ffb700" d="M412 143l-2 3 3-1m191-4l-1 6 13 2 0-6m-170 55l4-5 9-3-4 5"/>
<path fill="#ffa700" d="M432 129l0 1 0-2m172 8l0 5 12 2 1-4-7-2m-120 45l-7-2 11-2m-44 15l2-3 8-1-1 1m-7 0l-9 2 1-1 9-3"/>
<path fill="#ff9700" d="M431 123l1 6 0-1 2-5 0-1m170 12l0 2 6 1m-127 43l-1-1 4-4 7-2 3 2-2 3m-50 13l4-5 8-3-3 5"/>
<path fill="#ff8700" d="M455 113l1 2 0-3m-4 1l0 4 1-4m-23 4l1 6 3-1-1-6m131 2l2 3 0-2m17 2l8 6 1-5m-106 53l2-3 5 1m-5-1l-3-1 5-1m-42 16l2-3 8-2-2 2"/>
<path fill="#ff7800" d="M455 107l0 6 1-1 1-5m51-1l0 2 0-1m3 0l1 1 0-1m-61 0l1 6 1 0 1-6m-23 4l-1 5 0 1 3-1-1-5m127 1l0 2 5 4 2 1 0-6m13 2l0 4 4 2 9 1 0-5m-107 54l-5-1 3-3 11-2-4 5"/>
<path fill="#ff6800" d="M454 101l0 1 1 5 2 0-1-6m50 0l2 5 0 1 1-6m1 0l1 6 1 0 0-6m-61 1l0 1 0 4 3 0 0-5 0-1m-22 7l-1 3 1 0m0-6l0 3 1-3m127 1l-1 6 7 1 0-6m13 2l0 6 13 2 0-4-4-3m-105 57l4-4 8 1-1 1m-30 7l-8 2 2-4 9-2"/>
<path fill="#ff5800" d="M491 94l0 2 1-2m4 0l1 6 1-6m-43 1l-1 6 2 0m49-6l0 1 1 5 3 0 0-4-1-2m-51 0l1 4 0-4m51 0l0 2 1 4 2 0 0-4 0-2m-60 1l-1 6 3-1-1-6m-21 4l-1 1 1 5 1 0 1-5 0-1m126 2l0 5 6 1m13-2l0 4 9 1m2 49l0-1 13 2m-145 10l4-5 2 0 6-1-3 4"/>
<path fill="#ff4800" d="M490 88l1 6 1 0 0-6m3 0l1 6 2 0 0-4-1-1m8 0l0 6 3 0-1-6m-50 0l0 6 1 0 1-6m50 0l0 6 3 0-2-6m-58 1l0 6 1-1 0-5m-20 3l-1 6 2 0 0-6m121 1l5 7 0-6m30 63l-2-5 13 2 2 5m0 0l-2-5 13 2 2 4-12-1"/>
<path fill="#ff3800" d="M490 82l0 6 2 0 0-1-1-4m3 0l0 2 1 3 2 1-1-6m10 2l-1 4 2 0m-51-6l0 2 1 4 2 0-1-6m51 3l0 3 1 0m-57-1l-1 2 1 0m-20 2l0 1 1 0m-1-6l0 5 2-5m119 2l0 4 1 1 5 1 0-6m28 64l-2-2 13 0 2 4m0 0l-2-4 12 1 1 0 2 5"/>
<path fill="#ff2800" d="M490 78l0 4 1 1m3-6l0 6 2 0-1-6m-38 1l-1 5 2 0m-25-2l0 3 0 3 2 0 0-4 0-2m119 2l0 6 6 0 0-2-2-4"/>
<path fill="#ff1800" d="M495 75l-1 2 1 0m-61-2l-1 6 2 0 0-6m119 4l0 4 4 0m24 60l-2-4 14 2 1 2"/>
<path fill="#ff0800" d="M520 67l1 2 0-2m5 1l1 5 1-5m-93 6l-1 1 1 0m145 64l-2-3 12 0 1 0 3 5m-16-5l-1-2 13 2"/>
<path fill="#f70000" d="M506 60l1 3 0-3m11 1l2 6 1 0 0-5m3 0l0 3 2 3 2 0 0-6m49 72l-3-4 14 1 3 5-1 0m-66-6l-1-1 3 0"/>
<path fill="#e70000" d="M505 55l1 5 1 0 0-5m1 0l2 6 1-6m1 0l2 6 0-6m4 1l0 3 0 2 3 1 0-6m4 0l-1 6 4 0 0-2-1-3m47 73l-3-5 14 2 3 4m-65-2l-7-2 2-1 17-2-9 5"/>
<path fill="#d70000" d="M489 48l1 2 0-2m13 1l0 1 2 5 2 0 0-4 0-2m0 0l0 2 1 4 3 0 0-4-1-2m1 0l0 2 1 4 2 0 0-5m4 0l0 6 3 0-2-6m6 1l0 5 2 1m4-6l1 2 0-2m39 74l-1 0 13-1 2 3m-67-1l7-4 7-1 5 2-2 1"/>
<path fill="#c70000" d="M488 42l1 6 1 0 0-6m14 1l-1 6 4 0-2-6m2 0l0 6 3 0-1-6m2 1l0 5 3 1 0-1-1-5m5 2l0 4 1 0m9-5l0 1 3 5 1 0 0-5m-7 76l4-3 3 2"/>
<path fill="#b70000" d="M489 36l-1 5 0 1 2 0 0-2 0-4m-9 0l1 5 0-5m1 0l1 6 0-6m-17 0l1 6 1-6m35 2l0 5 1 0m3-4l-1 4 2 0m-52-6l1 3 0-3m53 1l0 6 2 0m16-4l-1 5 4 1 0-6m32 4l4 5 0-4"/>
<path fill="#a70000" d="M489 31l0 5 1 0m-9-6l0 6 1 0 1-5-1 0m1 0l0 5 1 0 1-4-1-1m-17 0l-1 0 1 5 2 0 0-5m-12 0l0 6 1 0 0-6m71 3l0 6 3 0 0-1-2-5m32 4l0 4 2 2 4 1 0-4-1-2m191 28l0 5 13 2 0-5m-238 42l-2 0 4-1"/>
<path fill="#970000" d="M481 25l-1 5 1 0 1 1 0-6m1 0l0 6 1 0 0-6m-17 0l0 6 2 0 0-1-1-5m-12 1l1 5 1 0 1-3-1-3m71 6l0 3 1 0m-2-6l1 3 0-3m33 6l0 4 5 1m192 24l-1 4 13 2 0-4m-240 46l-6-1 5-2 16-2 0 1-11 3m-10 0l-8 0 13-2"/>
<path fill="#870000" d="M481 21l0 4 1 0m1-4l0 4 1 0m-1-7l-1 1 2 0 1 0m-18 0l0 6 1 0m-11-5l-1 4 0 2 2-1m69-3l-1 1 2 5 1 0 0-6 1 0m27 3l-1 1 6 1 1-1m-33 82l8-3 8 1m-29 4l13-3 8-2-8 3"/>
</g>
<path d="M599.9 315.5l-6.8 31.4M592.5 341.5l8.2-29M601.6 306.9l-6.3 24.8M596.8 336.5l5.3-27.5M603.2 306l-3.4 21.7M602.1 309l-0.5-2.1M600.7 312.5l2.5-6.5M628.3 400.3l13.9-25.6M478.8 320.3l6.1 3.4M486.1 324l-6-3.6M485.4 321.8l-1.1-2.8M439.4 315.3l1.4-0.1M437.8 315.4l1.6-0.1M393.8 323.6l1.4 0.2M392.8 323.5l1 0.1M392.2 323.4l0.6 0.1M392.2 323.6l0-0.2M392.7 323.9l-0.5-0.3M393.6 324.3l-0.9-0.4M388.6 325.2l1.3 0.2 1.6 0.2M387.8 325.1l0.8 0.1M387.5 325.2l0.3-0.1M387.7 325.4l-0.2-0.2M388.3 325.7l-0.6-0.3M389.4 326.1l-1.1-0.4M390.7 326.4l-1.3-0.3" stroke="#000" stroke-width="1.8" stroke-linecap="round" stroke-linejoin="round" fill="none"/>
<g fill-opacity="0.7" shape-rendering="crispEdges">
<path fill="#000087" d="M632 405l-2 4 12 2 4-5"/>
<path fill="#000097" d="M634 403l-2 2 14 1 0-1m2-5l-2 5 13 3 1-6"/>
<path fill="#0000a7" d="M649 394l-1 6 12 2 2-7"/>
<path fill="#0000b7" d="M650 390l-1 4 13 1 1-2m26 0l-1 4 13 2 0-4"/>
<path fill="#0000c7" d="M557 369l3 2 0-2m-28 4l1 3-7-4m164 15l-1 6 12 2 1-6"/>
<path fill="#0000d7" d="M548 362l0 1 9 6 3 0 2-6m6 1l7 4 0-3m-54 4l-2-3 11 2 2 5-6-1m152 7l-1 4 13 2 1-4m-1 4l0 2 12 2 1-2"/>
<path fill="#0000e7" d="M549 356l-1 6 14 1 0-2-6-5m7 1l-1 4 6 3 7 1 1-6m-57 7l-2-3 12 5 1 0m149 5l-1 6 13 2 0-6"/>
<path fill="#0000f7" d="M550 352l-1 4 7 0m8-5l-1 6 13 2 1-4-5-3m107 15l0 6 12 2 1-5-12-2"/>
<path fill="#0008ff" d="M559 345l5 3 1-3m-72 0l3 2-3-3m71 4l0 3 8 1m-47 6l-1-4 12 2 2 5-4-1"/>
<path fill="#0018ff" d="M552 338l0 1 7 6 6 0 0-5-1-1m-75 0l-1 0 0 3 5 3 0-1m31 10l-2-5 13 2 1 5"/>
<path fill="#0028ff" d="M552 332l0 6 12 1-10-7m-66 7l-7-3 6 5 1 1m34 7l-1-3 13 2 1 3"/>
<path fill="#0038ff" d="M553 331l-1 1 2 0"/>
<path fill="#0048ff" d="M478 328l1 2-6-2-2-1"/>
<path fill="#0058ff" d="M467 324l-4-2 12 2 3 4-7-1"/>
<path fill="#0068ff" d="M463 322l-4-3 9 0 4 0 3 5m26-1l-1-1 3 0"/>
<path fill="#0078ff" d="M525 300l2 3 1-3m-60 19l3 0 1 0m28 3l-2-5 14 1 1 3-10 1"/>
<path fill="#0087ff" d="M521 293l4 7 3 0 0-6m80 10l0 1 13 5 0-4m-137 10l-3-5 15 1-11 4m13 1l-2-5 1 0 14 1 1 5"/>
<path fill="#0097ff" d="M522 288l-1 5 7 1-4-6m85 10l-1 6 13 2 0-6m-140 11l-1-2 5-2 9 0 2 5m1 0l12-3 2 4m161-6l0 1 13 2 0-1m-251 4l-8 0 1 0 11-3"/>
<path fill="#00a7ff" d="M522 284l0 4 2 0m85 4l0 6 12 2 1-4-9-3m-128 14l7-4 2 4m178-5l0 5 13 2 0-5m-209-1l-1-1 2 0m-50 11l6-5 8 0-3 2"/>
<path fill="#00b7ff" d="M673 296l-1 6 13 2 0-6m-210 4l-3-4 9-1 1 1-5 4"/>
<path fill="#00c7ff" d="M521 270l2 3 0-3m54 6l7 4 0-3m76 11l0 2 13 3 0-3m0 3l0 3 12 2 1-3m-214 3l0-1 5-4 2 0 2 4m-42 4l-8 0 10-3"/>
<path fill="#00d7ff" d="M518 264l3 6 2 0 1-6m47 6l0 3 6 3 7 1 0-6m-181 11l0 2 5-4m253 2l-1 6 13 2 0-5-5-2m-191 10l1-1 1 1m-48 8l4-6 10-2-4 5"/>
<path fill="#00e7ff" d="M517 258l0 3 1 3 6 0 0-2-2-4m50 6l-1 6 13 1 1-5m-184 10l2 6 5-2 3-1-1-6m239 2l-1 4 13 3 0-5m-160 10l-1-3 7 0m-72 11l2-3 8 1"/>
<path fill="#00f7ff" d="M518 252l-1 6 5 0-3-6m18 2l2 2 0-2m33 4l0 6 13 2 0-1-11-7m62 9l0 1 13 3 0-2m-243-1l-6 5 1 3 9-3-2-5m241 3l0 4 12 2 0-3m-161 10l-2-5 15 1 1 1-7 3m86 7l0-2 13 2 0 1"/>
<path fill="#08fff7" d="M518 250l0 2 1 0m-3-6l2 4 0-4m15 2l4 6 2 0 0-6m33 9l0 1 2 0m-167 4l1 5 8-6 0-2m221 2l-1 6 13 2 0-6m-241 4l-2 1 2 0m90 11l-1-2 5-3 9 1 2 5m-47-1l-4-3 7-1m124 14l-1-5 12 2 2 5"/>
<path fill="#18ffe7" d="M515 240l0 3 1 3 2 0 1-6m14 2l-1 5 1 1 6 0 1-6m-91 2l0 2 1-3m-45 13l2 6 9-3-2-6m210 1l0 1 13 4 0-3m0 3l0 2 12 2 0-1m-147 12l8-4 1 5m-49 1l-4-2 1-2 13-2 0 1-3 4m123 9l-1-2 13 2 0 2m37 2l0-1 13 1 0 2"/>
<path fill="#28ffd7" d="M515 234l0 6 4 0 0-3-1-2m15 1l0 6 7 0 0-1-4-5m-88 2l-1 1 2 5 1-1 3-6m-42 11l-6 5 0 3 9-3-1-6m211 1l0 6 13 2 0-6m-178 22l4-5 3 0 6 3m169 17l-1-6 12 2 2 5"/>
<path fill="#38ffc7" d="M516 230l-1 4 3 1m15-5l0 2 1-2m-1 2l0 4 3 0m-86-5l-2 7 5-1-1-6m-40 10l1 5 7-7m192 1l0 2 13 4 0-4m-212 4l-2 2 2-1m212-1l-1 2 13 2m-174 17l1-2 2 2m13-4l-3-2 5-1m-17 5l-4-2 6-1m-146 11l1 6 8-3-1-6m97 4l-8 2 1 0 8-3m201 5l-1-4 13 2 0 4m1 1l-1-1 13 2 0 1"/>
<path fill="#48ffb7" d="M529 224l4 6 1 0 0-6m-82 5l-2 2 2 0m-37 3l-4 4 1 3 8-2 1-1-1-5m192 2l0 5 13 2 0-5m-149 24l-5-4 13-2 1 1-4 4m-21 3l-4-1 2-3 12-2-4 5m-139 3l0 3 8-4 0-2m-8 6l-8 3 1 2 8-3m284-2l0-1 13 2 0 1m-207 6l3-6 8-2-3 5m200 1l-1-4 12 1 2 5"/>
<path fill="#58ffa7" d="M527 218l0 3 2 3 5 0-3-6m-112 12l-4 4 5-1m193-1l-1 3 13 2 0-1m-154 21l-1-1 3-4 7-1 4 4m28 0l-2-5 7 1 1 1m-60 7l3-5 4-1 5 3 0 1m90 0l-1-2 13 2m-246 2l1 6 8-3-1-6m278 11l-1-5 12 2 2 5m-204 1l2-5 7-2 2 0-3 5"/>
<path fill="#68ff97" d="M503 210l2 6 1-6m22 3l-1 5 4 0m8-5l2 4 0-3m46 6l13 7 0-6m-127 31l4-5 3 4m30-1l-2-4 0-1 8 1 1 5m-56 3l1-2 3 1m-132-3l1 5 8-3-1-5m218 8l-1-5 13 2 1 5m-110-5l-5-1 7-2m-130 6l-8 3 0 1 8-3m277 6l-1-2 13 1 0 3m-200 1l1-1 6-1m-138 2l1 6 8-3-1-6"/>
<path fill="#78ff87" d="M502 204l0 4 1 2 3 0 0-5m29 2l4 6 2 1 1-6m46 6l-1 6 13 1 0-4-2-2m-90 30l6-3 2 4m-176-4l-8 3 1 5 8-3m217 3l-2-5 14 1 1 6m-114-1l-3-1 2-3 11-3-3 5m-164 9l-8 3 0 4 8-3"/>
<path fill="#87ff78" d="M503 199l-1 5 4 1 0-1-2-5m31 2l0 6 7 1-4-6m50 8l0 4 10 1m-250 18l0 5 8-4 0-4m200 15l0-2 12-1 2 4m-114 1l3-6 5-1 5 2-2 2m141 8l-1-5 13 1 1 5-10-1"/>
<path fill="#97ff68" d="M503 194l0 5 1 0m-27-6l0 2 0-3m-3 1l1 2 0-2m59 2l1 3 1-2m-1 2l0 3 3 1m58 1l5 3 0-2m-253 23l-1 0 1 6 8-3-1-6m155 9l-1-2 3 0m-53 10l2-2 3 1m-3-1l-8 0 10-3m144 11l-1-3 13 1 1 3"/>
<path fill="#a7ff58" d="M476 187l1 6 0-1 1-5m-5 0l1 6 1 0 1-6m55 2l3 6 2 1 0-6m53 7l-1 3 8 3 5 1 0-5m-205 5l1 4 5-6m-48 16l1 5 8-4-1-4m-7 8l-7 4 7-3m154 7l-2-5 8 1 1 2-4 2m-59 8l-1 0 3-5 11-3-3 5"/>
<path fill="#b7ff48" d="M476 181l0 6 2 0 0-1-1-5m-3 0l-1 6 3 0-1-6m54 2l0 4 2 2 5 1 0-1-3-5m56 7l0 6 12 2 0-4-6-3m-199 6l0 6 6-2 3-3-1-4m-51 18l1 5 8-3 0-5m145 16l-1-1 4-3 3 0 2 5m-9-2l-2-3 6 0m-55 12l3-6 2 0 7 1-1 2"/>
<path fill="#c7ff38" d="M477 177l-1 4 1 0m-3-3l0 3 1 0m55-3l-1 5 4 1m49 0l7 5 0-4m0 4l0 2 6 1m-195-1l-5 5 1 2 8-3 0-5m-43 17l-8 4 0 2 9-3m148 12l2-2 1 2m-9 0l-2-4 1-1 8 0 1 3-2 2m-52 6l1 0 1 0m117 0l-2-5 13 1 2 4-12 0"/>
<path fill="#d7ff28" d="M527 172l3 5 0-5m46 6l0 2 6 4 7 1 0-5m-186 4l0 3 4-4m-4 4l-3 4 4-1m299 6l0 3 13 3 0-4m-213 19l5-4 3 4m64 6l-1-5 13 1 1 5"/>
<path fill="#e7ff18" d="M524 166l3 6 3 0 0-5 0-1m-85 1l1 5 1-6m130 6l-1 6 13 2 0-3-6-4m-181 5l1 6 4-1 5-7-1-1m293 16l-1 5 13 2 0-5m-142 25l-1-4 13 0 1 5m-14-5l-1-2 13 2 1 0"/>
<path fill="#f7ff08" d="M524 160l-1 4 1 2 6 0-3-6m-83 1l1 6 2-1 1-2-1-3m130 8l0 3 6 1m-179-1l-2 3 0 3 9-3 0-5m280 13l0 2 13 2 0-2m0 2l0 4 12 2 0-4m-237 21l-7-2 11-3m89 7l-1-5 13 2 1 5"/>
<path fill="#fff700" d="M463 153l0 2 0-3m45 1l1 4 1-4m14 1l0 6 3 0m-82-5l-1 5 0 1 3 0 0-6m-37 9l-6 8 7-2m217-2l0 2 13 3 0-3m50 7l0 6 13 2 0-6m-232 29l-1 0 4-5 9-2 2 1-3 3m88 2l-2-5 13 2 2 5"/>
<path fill="#ffe700" d="M480 146l1 6 1-6m1 0l1 3 0-3m-18 0l1 3 0-3m-5 1l1 6 0-1 1-5m42 0l2 6 2 0 0-5 0-1m-64 5l-1 3 2 0m181 7l0 6 13 2 0-6m51 8l-1 5 13 2 0-5m-229 29l3-5 6 3m85 1l12 0 1 2m-13-2l-2-5 14 2 0 3"/>
<path fill="#ffd700" d="M480 140l0 5 0 1 2 0 0-5 0-1m0 0l0 1 1 5 1 0 0-6m-18 1l0 5 1 0 1-5m-6 0l0 3 0 3 2 0-1-6m43 0l0 6 4 0-2-6m-45 0l1 6 1-6m161 15l3 1 0-1m0 1l-1 5 13 2 0-3m13-1l0 4 12 3 1-5m-100 35l-1-5 13 2 2 5"/>
<path fill="#ffc700" d="M480 134l0 6 2 0-1-6m2 0l-1 6 2 0 1-5 0-1m-20 1l0 3 1 3 2 0 0-2-1-4m-4 0l-1 6 1 0m44-4l-1 4 2 0m-45-6l0 6 2 0 0-3 0-3m151 14l0 3 10 4 3 0 0-5m25 4l0 5 13 2 0-6m-101 36l-1-2 12 0 2 4m-134 6l-8 2 1-1 8-3"/>
<path fill="#ffb700" d="M481 132l-1 2 1 0m2-6l0 6 2 0-1-6m-18 1l-1 6 2 0m-4-6l0 6 2 0-1-6m-37 7l1 5 2-6m186 8l0 6 13 2 0-6m25 6l0 4 13 1 0-2m-229 47l3-5 9-3-4 5"/>
<path fill="#ffa700" d="M483 127l0 1 1 0m-20-1l-1 2 1 0m-38 1l1 6 3-1 2-5 0-1m185 10l-1 4 13 2 0-1m-188 52l2-4 9-2-2 3"/>
<path fill="#ff9700" d="M428 124l-2 5 0 1 6-1-1-6m163 5l10 6 0-4"/>
<path fill="#ff8700" d="M430 117l-2 7 3-1m161-1l-1 5 3 1 10 2 0-6"/>
<path fill="#ff7800" d="M430 111l0 5 1-5m161 6l0 5 12 2 0-4-4-2"/>
<path fill="#ff6800" d="M456 101l1 6 1-6m-8 1l1 1 0-1m-22 4l1 5 1 0 1-3 0-3m156 5l4 3 0-2m0 2l0 4 8 1m-113 45l-2 0 2-1m-31 12l-8 2 2-3 8-3"/>
<path fill="#ff5800" d="M455 95l1 6 2 0 0-2-1-4m-4 0l1 6 1-6m-5 1l0 6 1 0 1-6m-23 4l0 6 3-1-1-5 0-1m148 4l0 2 9 5 4 1 0-6m-107 58l-6 0 2-3 10-3-4 5m-37 11l3-5 9-3-4 5"/>
<path fill="#ff4800" d="M497 89l1 1 0-1m-42 0l-1 5 0 1 2 0 0-6m46 0l2 6 0-6m-52 1l0 5 2 0 0-1 0-5m-6 1l1 6 2 0 0-6m-22 4l-1 6 2-1 0-5m149 4l-1 5 13 2 0-5m-111 60l4-5 8 1-2 1m-38 11l1-1 8-2m0 0l-8 2 3-4 9-3"/>
<path fill="#ff3800" d="M496 83l1 6 1 0 0-6m-42 2l0 4 1 0m45-6l1 6 2 0 1-4-1-2m-47 0l1 6 0-6m-6 1l0 4 0 2 2-1-1-5m-4 0l-1 5 0 1 3 0 1-2-1-4m81 2l1 1 0-1m-103 6l-1 2 1 0m149-2l0 6 12 2 0-1-9-7m16 59l0-1 12 2m-154 11l4-4 8-2-3 3"/>
<path fill="#ff2800" d="M493 77l-1 0 2 6 0-6m1 0l1 6 2 0 0-3 0-3m4 0l0 6 3 0-1-6m-47 1l1 5 1 0 1-4 0-2m-6 3l-1 4 1 0m1-6l1 5 1-5m-7 0l0 4 0 2 2 0 0-6m79 2l2 6 1 0 0-6m46 10l0 2 3 0m16 58l-3-5 13 2 3 5-1 0"/>
<path fill="#ff1800" d="M493 71l0 6 1 0 1-2-1-4m1 0l0 4 0 2 3 0-2-6m6 2l0 4 2 0m-46-5l-1 4 0 2 3-1-1-5m-4 0l0 6 2 0 0-2 0-4m-6 2l-1 4 2 0m76-4l3 6 3 0 0-5m62 70l-1-2 13 1 1 3"/>
<path fill="#ff0800" d="M493 67l0 4 1 0m1-6l0 6 1 0m-38-5l0 6 1 0m-4-6l0 5 0 1 2 0-1-6m72 2l-1 5 1 1 6 1 0-1-2-5"/>
<path fill="#f70000" d="M456 61l-1 5 1 0m72-4l0 6 4 1-1-2-2-4"/>
<path fill="#e70000" d="M516 56l2 3 0-3m10 4l0 2 1 1"/>
<path fill="#d70000" d="M515 50l1 6 2 0 0-6"/>
<path fill="#c70000" d="M502 43l1 6 1-6m1 0l2 6 0-6m8 1l-1 5 1 1 3 0 0-4-1-2"/>
<path fill="#b70000" d="M488 36l0 5 1-5m12 1l1 6 2 0 0-5 0-1m0 0l0 1 1 5 2 0 1-4-1-1m8 0l0 6 2 0-1-6"/>
<path fill="#a70000" d="M487 31l0 1 1 4 1 0 0-5m-5 0l1 1 0-1m15 0l0 5 1 1 3 0-2-6m2 1l0 5 3 1-1-6m9 4l0 2 1 0m14-4l2 5 0-5m35 5l1 2 1-2"/>
<path fill="#970000" d="M487 25l0 6 2 0-1-6m-8 0l0 5 1-5m3 0l0 6 1 0 0-6m16 1l-1 5 2 0m2-5l0 6 2 0-1-6m24 2l0 3 1 3 2 0 0-5m30 3l0 2 5 5 2 0 0-6"/>
<path fill="#870000" d="M487 21l0 4 1 0m-9-6l1 6 1 0 0-4m3-2l-1 2 1 4 1 0 0-3m19 3l0 1 1 0m24-4l0 6 3 1 1-5m29 3l0 5 7 1m-52 77l-8 1 13-1 8-3"/>
</g>
<path d="M596.7 321.7l4.6-17.6M601.1 303.7l-4 15.2M599.1 317.7l2-14M601.3 304.1l-1.4 11.4M473.5 319.3l6 2.4M484.1 322.3l-5.7-3M473.2 318.2l5.6 2.1M480.1 320.4l-5.4-2.2M478.4 319.3l-5.4-1.8M474.7 318.2l-5.1-1.4M426.9 316.3l2.4-0.1M422.3 316.3l2.2 0M420.4 316.2l1.9 0.1M418.7 316.1l1.7 0.1M417.5 316.1l1.2 0M418.7 317.9l-0.9-0.3M419.6 318l-0.9-0.1M420.4 318.1l-0.8-0.1" stroke="#000" stroke-width="1.8" stroke-linecap="round" stroke-linejoin="round" fill="none"/>
<g fill-opacity="0.7" shape-rendering="crispEdges">
<path fill="#000087" d="M646 406l-4 5 13 3 4-6"/>
<path fill="#000097" d="M646 405l0 1 13 2m1-6l-1 6 12 2 2-6"/>
<path fill="#0000a7" d="M662 395l-2 7 13 2 2-7"/>
<path fill="#0000b7" d="M554 375l4 3 1-2m104 17l-1 2 13 2 0-2"/>
<path fill="#0000c7" d="M546 368l-1 2 9 5 5 1 1-5-3-2m3 0l0 2 12 6 1 0 1-6m11 1l2 1 0-1"/>
<path fill="#0000d7" d="M548 363l-2 5 11 1m5-6l-2 6 14 2 1-3-7-4m7 1l0 3 10 4 2 0 1-5m103 14l-1 4 13 2 0-4"/>
<path fill="#0000e7" d="M562 361l0 2 6 1m8-5l-1 6 13 2 1-6m-72 2l-1-2 12 3 1 4m162 7l0 6 12 2 1-6"/>
<path fill="#0000f7" d="M572 352l5 3 0-2m-77-1l2 2-4-3m79 4l-1 4 13 2m-73 0l-2-5 12 3 2 5m152 4l12 2 0-1m0 1l-1 5 13 2 1-5"/>
<path fill="#0008ff" d="M565 345l-1 3 8 4 5 1 1-6-1 0m-81 0l-3-2 3 3 4 4-2-1m16 5l-1-2 12 4 1 1m154 3l-1 5 1 1 12 1 1-5"/>
<path fill="#0018ff" d="M565 340l0 5 12 2m-84-2l-5-3 1 0 5 3 2 3m184 10l0 4 13 2 0-3"/>
<path fill="#0028ff" d="M488 342l-1-1 2 1m-8-6l0-1 3 2 3 4m34 5l-1-2 13 2 1 2"/>
<path fill="#0038ff" d="M481 335l-4-4 4 2 2 3 1 1m36 7l-1-5 13 1 1 6"/>
<path fill="#0048ff" d="M477 331l-4-3 6 2 2 3m38 6l-2-5 2 0 11 1 2 5"/>
<path fill="#0058ff" d="M519 334l11 0 0 1"/>
<path fill="#0068ff" d="M529 306l5 6 0-6"/>
<path fill="#0078ff" d="M528 300l-1 3 2 3 5 0 1-3-2-3"/>
<path fill="#0087ff" d="M528 294l0 6 5 0m88 6l0 4 12 3 1-5m-220 9l-8 3 1-1 8-3"/>
<path fill="#0097ff" d="M524 288l4 6 1-6m92 12l0 6 13 2 0-6m-138 10l-2-5 15 1 0 1-12 3m-90 7l11-4 2 0 6-2-11 3"/>
<path fill="#00a7ff" d="M522 282l0 2 2 4 5 0 0-4-1-2m94 14l-1 4 13 2 0-3m-140 8l-2-4 1-1 14 1 2 5"/>
<path fill="#00b7ff" d="M523 276l-1 6 6 0-3-6m-32 26l10-4 2 0 2 5m-25-5l-1-1 3 0"/>
<path fill="#00c7ff" d="M523 273l0 3 2 0m-22 22l2-1 0 1m168-8l0 3 13 2 0-3m-205 5l-2-4 9 0 0 1-4 3m-12 0l-4-4 9 0"/>
<path fill="#00d7ff" d="M668 283l5 2 0-1m-279 1l1 3 8-4 0-2m270 3l0 5 13 2 0-5m-207 6l-1-1 5-4 2 0 3 5m-20 0l4-4 3-1 3 4-1 1m-50 9l-4 1 3-5 9-3-4 6"/>
<path fill="#00e7ff" d="M522 258l2 4 0-4m137 19l0 5 7 1 5 1 1-5m-282 0l2 6 9-3-2-6m82 12l1-1 1 1m-13 1l2-2 1 1m-30 5l-8-1 1-2 11-2m-23 10l3-5 8-1-2 3"/>
<path fill="#00f7ff" d="M519 252l3 6 2 0 1-5m-79 4l1 3 2-4m-50 14l1 3 6-5m255 6l0 3 13 2 0-3m-274-3l-8 5 0 1 9-3m37 14l4-5 7-2 3 1-3 4"/>
<path fill="#08fff7" d="M518 246l0 4 1 2 6 1 0-4-1-2m-80 4l2 6 3-1 2-2-1-4m-52 15l1 5 7-2 2-1-1-5m35 23l1-3 6 1"/>
<path fill="#18ffe7" d="M519 240l-1 6 6 1-3-6m-77 4l-1 2 1 4 6-1-1-4 0-2m188 12l0 3 12 3 1-4m-252 0l-1 1 1 6 9-3-2-6m161 25l-1-6 13 2 1 4m0 0l-1-4 12 2 1 3m-180 6l-8 3 1-2 8-3"/>
<path fill="#28ffd7" d="M519 237l0 3 2 1m15-5l4 5 0-4m-93 2l-3 6 5-1m-45 6l1 3 6-5m226 2l0 6 13 2 0-5-9-2m-236 2l-7 5 7-2m160 19l-1-2 13 0 1 4m-14-4l-1-3 13 2 1 1m1 4l-1-4 11 1 1 0 1 5m-186 10l3-5 8-3-3 5"/>
<path fill="#38ffc7" d="M534 230l-1 2 3 4 4 1 0-4-2-2m-132 12l-3 3 1 4 7-2 2-2-1-5m151 29l-1-5 13 2 1 5m-169 12l2-5 8-3-2 5m224-1l0-4 12 2 1 4m-235-6l-8 3 9-3"/>
<path fill="#48ffb7" d="M534 224l0 6 4 1m-127 5l0 2 4-4m-4 4l-5 5 6-2m73 15l-1-1 1 0m77 10l12 0 1 2m-13-2l-1-5 13 2 0 3m-255 3l0 3 8-3 0-3m298 5l0-1 12 2m2 5l-2-5 13 2 1 5m-242 1l3-6 9-3-3 6"/>
<path fill="#58ffa7" d="M543 220l5 5 0-5m-138 10l1 6 4-2 4-4 0-3m65 28l-4-4 10-1-5 5m76 5l-1-3 12 0 2 5m-256 0l1 6 8-3-1-6m299 10l-2-5 13 2 1 5m-225 2l3-5 8-3-2 5"/>
<path fill="#68ff97" d="M541 214l0 3 2 3 5 0 0-4-2-2m-129 8l-7 8 9-3-1-6m62 30l-3-4 12-1 2 3-1 1m18-4l-1-1 1 0m-183 8l1 5 8-3-1-5m-7 8l-8 4 8-3m284 1l-1-3 13 2 1 2m0 3l0-3 12 2 1 3m-221 2l1-1 8-3-1 1m-7 2l-9 2 2-3 9-3"/>
<path fill="#78ff87" d="M501 204l1 4 0-4m40 4l-1 6 5 0m52 1l2 2 0-1m-182 4l-1 2 1-1m59 26l4-5 4-1 4 5m18-1l-2-4 9 0 0 1-6 3m-176 0l-8 3 1 5 8-3m276 7l-1-5 3 0 10 2 1 5m-331 0l1 2 8-3 0-2m109 10l3-5 8-3-2 5"/>
<path fill="#87ff78" d="M499 198l2 6 1 0 1-5m1 0l2 5 1-5m31 3l4 6 0-6m46 6l0 2 10 5 2 1 1-6m-120 32l2-3 2 2m20 0l-1-4 2-1 5 0 3 5m97 11l10 1 0 1m-330-1l0 6 9-3-1-6m113 11l2-4 8-2-2 3"/>
<path fill="#97ff68" d="M499 193l0 4 0 1 4 1 0-5 0-1m0 0l0 1 1 5 3 0 0-6m29 3l-1 2 3 4 4 0 0-3-1-3m47 6l0 6 13 2 0-4-5-3m-207 9l0 2 4-3m113 25l4-3 1 3m-213 11l-8 3 1 3 8-3"/>
<path fill="#a7ff58" d="M500 187l-1 6 4 0-2-6m3 0l-1 6 4 0 0-3-1-3m30 3l0 6 5 0-4-6m51 10l0 2 8 1m-208 4l1 5 4-1 4-3-1-4m-50 17l1 6 1 0 7-4-1-5"/>
<path fill="#b7ff48" d="M500 183l0 4 1 0m3-6l0 6 2 0-1-6m-33 0l1 6 1-6m59 3l3 5 0-5m0 5l0 1 1 0m-146 9l-4 4 1 4 8-3 0-6m-51 18l1 5 8-3-1-5"/>
<path fill="#c7ff38" d="M504 180l0 1 1 0m-33-6l-1 3 1 3 2 0 0-3-1-3m57 3l3 6 3 0 0-5 0-1m-141 14l0 4 5-5m-5 5l-4 3 5-1m-43 13l-8 4 0 1 8-3m237 15l-2-4 13 2 1 3"/>
<path fill="#d7ff28" d="M472 169l0 6 1 0m57-3l0 5 0 1 6 0-3-6m-90 1l1 6 2-6m-52 14l1 5 5-1 3-4 0-3m185 40l-1-5 13 2 1 5"/>
<path fill="#e7ff18" d="M530 167l0 5 3 0m-91-5l0 1 1 5 3 0 0-1-1-5m-47 13l-4 4 0 3 9-3-1-6m185 41l-1-5 2 0 10 2 2 5"/>
<path fill="#f7ff08" d="M527 160l3 6 1-6m-87 1l-2 6 3 0m-43 5l0 3 2-3m-2 3l-4 5 4-2m302 7l0 2 12 2 0-2m-128 27l10 1 0 1"/>
<path fill="#fff700" d="M524 154l3 6 4 0 0-3-2-2m-128 12l1 5 2 0 6-8m294 15l0 6 12 2 1-6m-246 27l-8-1 1-2 11-2"/>
<path fill="#ffe700" d="M524 148l0 6 5 1-2-6m-126 12l-1 0 1 6 9-3 0-1-1-5m295 16l0 5 13 2 0-4m-253 28l4-5 8-2 2 0-3 5"/>
<path fill="#ffd700" d="M479 140l1 5 0-5m25 1l1 6 0-6m18 2l0 5 3 1m-121 4l-5 8 8-3 0-6m220 4l0 1 12 4 0-3m26 4l-1 5 13 3 0-6m13 2l0 6 12 2 0-6m-236 32l2-3 6 1m0 0l-6-1 1-2 11-2-4 5m-8-1l-7 0 8-2"/>
<path fill="#ffc700" d="M478 134l0 1 1 5 1 0 0-6m1 0l1 6 1-6m20 1l2 6 1 0 1-4-1-2m-98 15l-2 3 3-1m220-1l0 5 12 2 1-5m25 3l0 6 12 2 0-6m13 2l0 6 12 2 1-6m-234 33l3-5 6-1 4 1-2 3m-19 4l-2 0 3-4 10-3-3 5"/>
<path fill="#ffb700" d="M479 128l-1 6 2 0 1-2-1-4m1 0l0 4 0 2 2 0 0-6m1 0l1 6 0-6m18 1l0 6 3 0-2-6m-40 0l1 6 1-6m163 16l0 6 13 2 0-5-4-2m16 3l0 2 13 3 0-3m0 3l0 2 12 2 1-1m12 2l0 1 13 2 0-1m-231 29l2-2 4 1m-16 4l4-5 8 0-2 2"/>
<path fill="#ffa700" d="M479 123l0 5 1 0m1-5l0 5 2 0 0-1-1-4m2 0l-1 4 1 1 1 0 1-5m18 3l-1 3 1 0m-40-6l0 4 0 2 2 0-1-6m145 14l7 2 0-2m0 0l0 2 12 5 0-5m0 5l0 1 9 1m17-3l-1 6 13 2 0-6"/>
<path fill="#ff9700" d="M482 118l-1 5 1 0m2-6l0 6 2 0 0-2-1-4m-20 0l-1 6 1 0m-39 1l0 5 2-5m176 6l0 4 6 3 7 0 0-5m0 0l0 5 12 2 1-5m25 3l0 6 12 2 0-5-10-2m-175 41l-8 0 1-2 11-2"/>
<path fill="#ff8700" d="M484 112l0 5 1 0m-60 1l1 6 2 0 2-7m174 7l0 6 13 2 0-6m0 0l0 6 13 2 0-4-10-4m-145 51l4-5 6-1 3 1-2 3"/>
<path fill="#ff7800" d="M425 113l0 5 5-1 0-1 0-5m170 7l4 2 1-1m-1 1l0 4 13 2m-138 46l1-2 5 1"/>
<path fill="#ff6800" d="M427 106l-2 7 5-2-1-5m163 5l0 2 8 5 5 1 0-6"/>
<path fill="#ff5800" d="M429 100l-2 6 2 0m163-1l0 6 13 2 0-6"/>
<path fill="#ff4800" d="M455 89l0 5 1-5m136 11l0 5 13 2 0-1-11-6"/>
<path fill="#ff3800" d="M454 84l1 5 1 0 0-4 0-2m-4 1l1 4 0-4m130 8l9 7 1-5m-1 5l0 1 2 0m-142 62l-8 2 9-3"/>
<path fill="#ff2800" d="M454 78l0 2 0 4 2-1-1-5m-3 0l0 6 1 0 1-4-1-2m127 8l0 4 3 2 10 2 0-6m19 64l-3-5 13 2 2 4m-180 11l5-5 8-3-4 5"/>
<path fill="#ff1800" d="M459 72l1 5 1-6m-6 1l-1 6 1 0m2-6l0 4 1-4m-7 0l0 2 1 4 1 0 0-6m127 9l0 5 13 2 0-4-3-2m19 65l-1-3 12 1 2 4m-27-6l-1-2 13 1 1 2m-159 15l2-3 8-2-2 2m2-2l-8 2 2-2 8-3"/>
<path fill="#ff0800" d="M458 66l1 6 2-1 0-2 0-3m-5 0l1 6 1 0 0-6m-6 1l-1 5 2 0-1-6m128 9l0 6 10 1m4 59l-3-5 13 2 3 4m-154 12l4-5 8-2-4 4"/>
<path fill="#f70000" d="M459 60l-1 5 0 1 3 0-1-6m-4 0l0 1 0 5 2 0 0-1 0-5m-6 5l0 2 0-1m139 70l12 0 1 2m-13-2l-3-5 13 2 2 3"/>
<path fill="#e70000" d="M459 55l0 5 1 0m-4-6l0 6 2 0-1-6m131 77l-3-4 13 1 3 5"/>
<path fill="#d70000" d="M457 51l-1 3 1 0m128 73l-2-3 12 0 3 4m-15-4l-1-2 13 2"/>
<path fill="#c70000" d="M513 44l1 5 1-5m2 0l1 2 0-2m64 78l-4-4 14 1 3 5"/>
<path fill="#b70000" d="M511 38l2 6 2 0 0-6m1 0l1 6 1 0 0-5m15 1l2 6 0-6m38 5l2 2 0-1m3 72l-3-3 4-1 9 1 4 4"/>
<path fill="#a70000" d="M499 31l1 5 0-5m2 0l2 6 0-5m7 0l0 6 4 0 0-2-1-4m1 0l0 4 1 2 2 1 1-6-1 0m14 1l0 5 1 1 2 0 1-5m33 4l-1 2 5 4 2 1 0-6m4 74l8 0 1 1"/>
<path fill="#970000" d="M498 25l1 6 1 0 1-5m0 0l1 5 2 1 0-6m8 0l-1 6 3 0-2-5m3 0l0 5 3 1-1-6m15 2l0 5 4 1 0-4-1-2m34 4l0 6 6 1 0-1-5-6"/>
<path fill="#870000" d="M498 19l-1 1 1 5 3 1 0-2m0-4l0 4 0 2 3 0 0-1m8 0l0 1 0 1m3-5l0 5 2 0m16-3l-1 5 3 0m28-3l-1 1 7 6 1-6"/>
</g>
<path d="M543.1 361.2l11.8-21.4M562.1 334.4l-8.9 26.1M554.9 339.8l8.9-26.3M531.4 376.7l-10.4-6.4M466.2 324.1l5.3 3.7M608.8 322.1l3.7-17.1-2.5 13.5M461.7 321.5l4.5 2.6M617.7 308.4l-0.7 3.4M458.1 319.7l3.6 1.8M635.7 404l14.2-23.6M649 387l-13.9 20M484.3 319l-0.5-2.2 0-1.8M647 403.2l13.9-26.8M497.2 317.8l4.6 4.3M483.8 315l0.4-1.3 0.9-0.9M493.5 315l3.7 2.8M485.1 312.8l1.3-0.4M507.5 322.7l-4-4.7M490.6 313.4l2.9 1.6M499.1 315.8l2.3 3.3M486.4 312.4l1.8 0.1 2.4 0.9M503.3 319.5l-2.2-3.4M502.2 316.9l2.5 3.8M503.5 318l-2.9-3.1M504.3 316.1l3.5 3.8M500.6 314.4l1.6 2.5M507.3 319l-3.3-3.5M501.8 313.8l2.5 2.3M504 315.5l-2.3-2M507.9 318.2l-1-2.7 0.2-1.3 1.2 0.1 2.5 1.7" stroke="#000" stroke-width="1.8" stroke-linecap="round" stroke-linejoin="round" fill="none"/>
<g fill-opacity="0.7" shape-rendering="crispEdges">
<path fill="#000087" d="M659 408l-4 6 12 2 4-6"/>
<path fill="#000097" d="M673 404l-2 6 13 2 2-7"/>
<path fill="#0000a7" d="M568 383l3 1 0-1m104 14l-2 7 13 1 1-6"/>
<path fill="#0000b7" d="M559 376l-1 2 10 5 3 0 2-6-1 0m103 18l0 2 12 2 1-2"/>
<path fill="#0000c7" d="M560 371l-1 5 13 1m15-5l0 1 13 4 0-3"/>
<path fill="#0000d7" d="M588 367l-1 5 13 2 1-6m-60 3l1 1-10-3m171 14l0 4 12 3 1-5"/>
<path fill="#0000e7" d="M507 358l1 2-3-3m84 4l-1 6 13 1 1-3m-73 3l-1-4 12 2 1 5-9-2m172 8l-1 6 13 2 1-6"/>
<path fill="#0000f7" d="M502 354l-2-2 3 2 1 1 3 3-2-1m23 7l-2-5 8 1 4 1 2 5m152 3l0 1 13 2 0-1m0 1l-1 5 13 2 0-5"/>
<path fill="#0008ff" d="M500 352l-4-4 4 1 3 5m23 5l-1-1 9 2m159 4l-1 5 13 2 0-6"/>
<path fill="#0018ff" d="M565 339l0 1 12 7 1 0 0-6m-82 7l-2-3 6 4m193 12l0 3 12 1 1-2"/>
<path fill="#0028ff" d="M566 334l-1 5 13 2 1-2-9-5m-11 18l-1-3 13 2 1 3"/>
<path fill="#0038ff" d="M566 332l0 2 4 0m-12 15l-1-5 6 1 7 1 1 5"/>
<path fill="#0058ff" d="M534 312l5 7 1 0 1-6"/>
<path fill="#0068ff" d="M534 306l0 6 7 1 0-3-3-3m-79 12l-1-1 10 1"/>
<path fill="#0078ff" d="M533 300l2 3 0-3m0 3l-1 3 4 1m-80 11l-7-3 17 0 3 4-3 0"/>
<path fill="#0087ff" d="M528 294l5 6 2 0 1-5m-85 20l11-4 2 0 4 4"/>
<path fill="#0097ff" d="M529 288l-1 6 8 1 0-2-3-5m-71 23l1 0 1 0m-38 2l-6 2 7-2"/>
<path fill="#00a7ff" d="M529 284l0 4 4 0m-41 15l0-1 1 0m-73 13l-2 0 5-4 9-3 1 0-6 5"/>
<path fill="#00b7ff" d="M492 302l-2-4 13 0-10 4m-70 9l2-2 7-1"/>
<path fill="#00c7ff" d="M529 271l1 2 1-2m-41 27l-2-4 3-1 13 0 1 4-2 1"/>
<path fill="#00d7ff" d="M526 264l3 7 2 0 0-6m142 19l0 1 13 2 0-1m-301 2l2 4 8-4-1-3m97 8l4-3 3-2 4 0 2 5m-26-1l-3-4 8 0"/>
<path fill="#00e7ff" d="M524 258l0 4 2 2 5 1 0-5 0-1m143 20l-1 5 13 2 0-6m-302 2l1 6 9-3-2-6m106 9l3-1 1 1m-27 0l-1-1 3-3 5-1 2 4-1 1m-46 4l-8 1 9-3"/>
<path fill="#00f7ff" d="M525 253l-1 5 7 1-4-6m135 18l-1 3 13 2 0-3m0 3l0 3 12 1 1-1m-295-1l-8 4 8-3m85 5l3-4 2 3m32-2l-1-1 4 0m-88 13l3-5 10-3-4 5"/>
<path fill="#08fff7" d="M525 249l0 4 2 0m135 12l0 6 12 2 0-6-6-1m-155 14l-2-5 15 1 0 1-9 3m-85 8l3-5 1 0 7-1-1 3"/>
<path fill="#18ffe7" d="M443 245l0 2 1-2m206 13l-1 4 13 3 0-6m-151 16l-1-5 14 1 2 5m65 6l-1-3 13 2 1 3m-201 7l-8 2 1-1 8-3"/>
<path fill="#28ffd7" d="M442 239l1 6 1 0 3-6 0-1m-52 15l2 6 1-1 7-5-1-3m246 3l0 5 12 1 0-3m-152 14l9-5 4 1 1 5m53 2l-1-1 12 2m2 5l-1-5 13 2 1 5m-207 11l2-5 9-3-3 5"/>
<path fill="#38ffc7" d="M445 232l-3 7 5-1-1-6m-43 14l-8 6 0 1 9-3m115 15l3-1 1 2m53 6l-1-5 13 2 1 5-1 0m1 0l13 1 0 1m50 6l-1-4 13 2 1 3m-267 4l3-5 2-1 6-2-2 5"/>
<path fill="#48ffb7" d="M446 231l-1 1 1 0m129 35l-1-2 13 1 1 3m63 9l-1-5 13 2 1 5m-263 2l0-1 2 0m0 0l-2 0 3-5 8-3-3 6"/>
<path fill="#58ffa7" d="M448 261l-8 0 1-1 9-3m187 14l-1-5 13 2 1 5m-246 3l3-5 8-3-3 5"/>
<path fill="#68ff97" d="M491 249l-2-3 6-1m-54 15l3-6 9-2-3 5m-133-1l1 6 8-4-1-5m298 8l-1-2 13 2 0 2m1 3l-1-3 13 2 1 3m-225-4l-8 3 2-4 8-3m209 3l0-2 12 2 1 2m-241 6l0-2 9-2-1 1m-8 1l-8 3 2-3 8-3m-10 6l-8 3 2-3 8-3"/>
<path fill="#78ff87" d="M600 216l0 1 13 5 0-4m-124 28l-4-5 11 0 1 2-2 2m19-3l0-1 2 0m-40 6l-5-4 10-1-4 5m-33 7l2-4 8 0-1 2m1-2l-8 0 1-1 9-2m-132 1l-8 4 1 4 8-3m297 6l-1-5 13 2 1 5m-217 2l2-5 9-3-3 5m209 1l-1-5 12 1 1 6m-246 6l3-5 8-3-3 5m-16 6l3-6 8-2-3 5"/>
<path fill="#87ff78" d="M601 210l-1 6 13 2 1-6m-129 29l-2-2 2-2 8-1 0 1 3 4m18 0l-3-5 14 1-9 4m-45 2l-2-1 2-3 10-2 2 2-2 3m-34 7l2-5 10-3-3 6m165 7l0-1 12 2 1 1m-214 2l2-3 8-2-1 2m205 1l-1-1 13 2m-242 7l2-4 8-3-2 4m-16 5l2-4 8-2-2 4"/>
<path fill="#97ff68" d="M498 193l1 4 0-4m102 13l0 4 13 2 0-1m-275 19l0 1 8-4m138 10l4-5 1 0 3 4m18 0l-1-3 2-2 13 1 2 4-2 1m-54 2l3-5 2-1 5 4m46-1l-2-4 11 1m-87 11l3-5 1 0 8 0-2 2"/>
<path fill="#a7ff58" d="M496 187l2 6 1 0 1-6m1 0l2 6 1-6m-65 5l1 1 0-1m-102 32l1 6 8-3-1-6m143 11l0-1 1 1m22-1l4-2 4-2 3 0 2 5m-51 2l1-1 1 0m49-1l-2-5 15 1 1 4-3 1"/>
<path fill="#b7ff48" d="M496 181l0 4 0 2 4 0 0-4-1-2m1 0l0 2 1 4 3 0 0-6m-65 5l0 6 1 0 2-7m-55 16l0 2 4-4m-47 17l-7 3 1 5 8-3-1-5m175 11l3-2 0 2m0 0l0-2 6-3 7 1 2 5m-126 20l-8 2 2-4 9-3"/>
<path fill="#c7ff38" d="M497 175l-1 6 3 0-1-6m3 0l-1 6 4 0 0-1-1-5m-30 0l1 3 0-3m62 3l0 1 1-1m-98 2l-1 2 1 4 3-1 2-5 0-1m-58 16l1 6 4-2 4-3 0-4m-50 23l-1 1 1 0m184 6l6-2 1 3m-34-5l-1-1 2 0m32 3l-1-2 6 1m-134 27l3-6 8-3-2 6"/>
<path fill="#d7ff28" d="M497 172l0 3 1 0m3-5l0 5 2 0m-31-6l1 6 1 0 1-6m58 3l3 6 1 0 0-5m-97 1l-1 6 5-1-1-6m-54 15l-3 3 0 4 9-3-1-5m107 30l-3-4 10-1 0 1-5 4m31 1l-2-5 15 1 1 3-8 2m-131 21l1-2 8-2-1 1m1-1l-8 2 2-3 8-3"/>
<path fill="#e7ff18" d="M473 163l-1 6 3 0-1-6m56 3l0 1 3 5 4 1 0-4-1-2m-94 1l-2 6 3-1m-49 11l-5 4 5-1m104 26l-4-5 11 0 3 4m24 1l-1-3 3-2 11 1 2 5m-16-4l0-2 3 0m52 6l-1 0 3 0m-176 21l3-5 8-3-3 5"/>
<path fill="#f7ff08" d="M473 160l0 3 1 0m57-3l-1 6 6 1-3-6m183 26l0 2 13 3 0-3m-235 19l4-4 4-1 3 5m29 0l10-3 1 4m-14-1l-3-5 15 1 1 1-10 3m51 6l-1-5 13 2 1 4-10-1m-173 16l1-3 9-3-2 3m2-3l-9 3 2-2 8-3"/>
<path fill="#fff700" d="M531 157l0 3 2 1m184 20l-1 6 13 2 0-6m-231 21l2-3 2 2m26 0l-1-3 4-1 10 0 2 5m41 5l-2-5 13 2 2 5m-179 14l2-5 9-3-3 5"/>
<path fill="#ffe700" d="M704 174l13 3 0-2m0 2l0 4 12 2 0-4m-198 20l9-4 1 4m41 5l-1-2 13 0 1 4m-175 14l3-5 8-2-2 4"/>
<path fill="#ffd700" d="M641 158l0 3 13 3 0-4m50 8l0 6 13 1 0-5"/>
<path fill="#ffc700" d="M506 135l1 2 0-2m135 18l-1 5 13 2 0-5m51 7l-1 6 13 2 0-6"/>
<path fill="#ffb700" d="M477 129l1 5 1-6m22 1l2 6 0-6m1 0l2 6 1 0 0-6m-85 8l0 3 1-4m215 10l4 2 0-1m0 1l0 5 12 2 0-4m13 0l0 3 13 3 0-4m25 8l0 1 12 2m-241 24l-8 0 10-3"/>
<path fill="#ffa700" d="M477 123l-1 3 1 3 2-1 0-5m21 0l1 6 2 0 1-3-1-3m1 0l0 3 0 3 3 0 0-1-1-4m-43-1l1 4 0-4m-43 8l1 6 1-1 3-6m203 9l0 5 9 2 4 1 0-6m25 4l0 6 13 2 0-6m-212 41l3-6 11-2-4 5"/>
<path fill="#ff9700" d="M477 117l0 6 2 0-1-6m22 0l0 6 3 0-2-5m3 0l0 5 2 1m-44-6l1 5 1 0 1-6m-44 8l0 6 5-1 0-1 0-5m204 10l-1 5 13 2 0-5m15 2l10 2 0-1m0 1l0 5 13 2 0-4m-209 39l3-3 8 0 0 1"/>
<path fill="#ff8700" d="M477 113l0 4 1 0m22-4l0 4 1 1m-39-6l0 3 0 3 3-1-1-5m-41 7l-2 6 5-1-1-6m205 12l0 4 12 2 0-2m13-2l0 5 2 1 10 1 1-5"/>
<path fill="#ff7800" d="M463 106l-1 6 2 0m-39 1l-2 6 2-1m180 1l-1 1 13 6 0-6m38 6l0 6 13 2 0-6"/>
<path fill="#ff6800" d="M605 113l0 6 12 1 0-5m38 8l0 3 13 2 0-2"/>
<path fill="#ff5800" d="M605 107l0 6 12 2 1-4-9-3m-94 49l-4-3 10 0"/>
<path fill="#ff4800" d="M594 100l11 6 0-5m0 5l0 1 4 1m-98 46l-4-2 2-2 19-1-7 5m107 8l-1-4 12 2 2 3"/>
<path fill="#ff3800" d="M593 94l-1 5 2 1 11 1 0-5m-96 54l5-3 1-1 8-1 5 4m99 9l-3-4 13 1 2 5"/>
<path fill="#ff2800" d="M453 78l1 2 0-2m139 10l0 6 12 2 1-5-3-1m-88 56l5-4 3 3m101 9l0-1 13 1 0 1m-13-2l-2-4 13 2 2 3"/>
<path fill="#ff1800" d="M453 72l0 6 1 0 1-6m135 10l3 2 0-2m0 2l0 4 10 2m19 59l-2-4 13 1 2 5m-27-7l-1-2 13 2 0 1"/>
<path fill="#ff0800" d="M452 66l1 6 2 0 0-1-1-5m126 9l10 7 3 0 0-5m14 65l-3-4 13 1 3 5m25 3l-2-4 13 2 2 4"/>
<path fill="#f70000" d="M460 60l1 6 1-6m-9 1l-1 4 0 1 2 0 0-5m127 8l-1 6 13 2 0-6m11 67l-1-2 13 1 1 2m26 4l-2-3 13 1 2 4"/>
<path fill="#e70000" d="M459 54l0 1 1 5 2 0 0-3 0-3m-9 2l0 5 1 0m87-3l1 1 0-1m39 6l0 5 12 2 0-2-6-5"/>
<path fill="#d70000" d="M460 48l-1 6 3 0-1-6m77 4l3 6 1 0 0-5m39 7l0 4 6 0"/>
<path fill="#c70000" d="M460 43l0 5 1 0m74-2l3 6 4 1 0-6m53 77l-3-5 13 2 3 3"/>
<path fill="#b70000" d="M535 40l0 6 7 1 0-3-1-3m51 78l-4-4 14 2 3 4"/>
<path fill="#a70000" d="M510 32l1 6 0-6m3 0l1 4 0-4m21 3l-1 5 6 1-3-6m50 80l-1-1 13 0 2 3"/>
<path fill="#970000" d="M508 26l2 6 1 0 1-6m0 1l2 5 1 0 0-5m2 0l1 6 1 0 0-6m17 4l0 4 2 0m-3-6l1 2 0-2m34 4l5 6 0-5"/>
<path fill="#870000" d="M509 20l-1 6 4 0 0-1m0-4l0 4 0 2 3 0 0-5m2-2l-2 2 2 5 2 0 0-6 1 0 1 0m12 2l0 1 2 5 1 0 0-6m34 4l-1 6 1 0 5 1 1-6"/>
</g>
<path d="M553.2 360.5l-10.8 14.5M587.9 350.8l-12.7 26.9M580.3 371.6l12.2-30.1M574.8 388.7l12.3-19.8M580.7 378.4l11-28.5M593.1 346.9l-10.7 29.7M595.3 331.7l-11 32.2M587.1 368.9l9.7-32.4M471.5 327.8l6.5 5.1M534.1 355.6l-9.1-13.3M646.7 412l15-15.1M497.7 313.6l1.4 2.2M501.1 316.1l-1.2-2.2M500.6 314.9l-2-1.8M497.2 312.5l0.5 1.1M498.6 313.1l-1.1-0.8-0.3 0.2M499.9 313.9l-0.3-1.1M500.1 313l0.5 1.4M672.7 375.7l-13 28.4M499.6 312.8l0.6 0 1.6 1M500.5 312.7l-0.4 0.3M501.7 313.5l-1.2-0.8M665.1 408.1l14.2-25.8M687.7 360.8l-11.6 34.7M413.9 319.4l1.9-0.2" stroke="#000" stroke-width="1.8" stroke-linecap="round" stroke-linejoin="round" fill="none"/>
<g fill-opacity="0.7" shape-rendering="crispEdges">
<path fill="#000087" d="M671 410l-4 6 13 2 4-6m0 0l13 3 0-1"/>
<path fill="#000097" d="M565 390l2 1 0-1m119 15l-2 7 13 2 1-7"/>
<path fill="#0000a7" d="M556 382l-2 3 11 5 2 0 4-6-3-1m28 3l2 1 0-1m89 13l-1 6 12 2 2-6"/>
<path fill="#0000b7" d="M558 378l-2 4 12 1m18-4l-1 3 11 4 2 0 1-6m-53 0l0 1-3-1m145 17l-1 2 13 2 1-2"/>
<path fill="#0000c7" d="M587 373l-1 6 13 1 1-3m-67-1l-1-3 11 3 3 4-3 0m57-6l0 3 12 4 1-5"/>
<path fill="#0000d7" d="M532 373l-2-5 2 1 10 3 1 4m58-8l-1 6 13 2 1-6m-72 2l-1-1 12 2 1 3m0 0l-1-3 13 2 1 4m149 6l-1 5 13 2 0-5"/>
<path fill="#0000e7" d="M516 361l1 2-4-3m17 8l-1 0 3 1m70-4l-1 3 13 2 0-1m-73 2l-1-5 12 2 1 5m0 0l-1-5 12 2 2 5m151 4l-1 6 12 2 1-6"/>
<path fill="#0000f7" d="M504 355l-1-1 11 2 2 5-3-1m27 6l-2-5 12 3 2 4m0 0l-2-4 13 2 1 4m-26-9l12 2 0 1m0 0l0-1 13 2 0 1m154 8l0 5 12 2 1-5"/>
<path fill="#0008ff" d="M503 354l-3-5 2 1 11 4 1 2m24 5l-2-5 13 2 1 5m0 0l-1-5 12 2 2 5"/>
<path fill="#0018ff" d="M498 344l2 5-6-4-5-3m47 14l-1-5 12 1 2 6m0 0l-2-6 13 2 1 6m132-2l0 3 13 2 0-3"/>
<path fill="#0028ff" d="M570 334l9 5 0-4m-92 6l-3-4 7 2 5 2 2 3-9-2m46 9l-1-3 12 2 1 2m0 0l-1-2 13 2 1 2m134-2l-1 6 13 2 1-6"/>
<path fill="#0038ff" d="M567 328l-1 4 4 2 9 1 1-6m-96 8l-1-1 8 3m203 11l0 2 13 2 0-1"/>
<path fill="#0048ff" d="M567 322l0 6 13 1"/>
<path fill="#0078ff" d="M591 333l-1-4 12 2 1 3"/>
<path fill="#0087ff" d="M538 320l-1-3 13 1 1 2m-145 0l-8 3 1-1 8-3m183 10l-1-5 5 1 7 1 1 5"/>
<path fill="#0097ff" d="M533 288l3 5 0-4m1 28l-1-4 8 0 5 0 1 5m-151 4l10-4 9-3-11 4"/>
<path fill="#00a7ff" d="M530 282l-1 2 4 4 3 1 1-6m7 30l5-1 0 1m-140 5l1-1 8-2"/>
<path fill="#00b7ff" d="M530 276l0 6 7 1 0-1-4-5m1 28l-1-4 13 2 1 2m-115 3l-7 1 2-3 10-3-4 5"/>
<path fill="#00c7ff" d="M530 273l0 3 3 1m0 24l-1-3 8-1 5 1 1 5m-119 3l4-5 8 0-2 2"/>
<path fill="#00d7ff" d="M686 286l0 1 13 2 0-1m-322 3l2 5 8-4-2-4m155 9l5 0 0 1m-27-5l-2-3 13 1"/>
<path fill="#00e7ff" d="M531 259l0 1 1-1m154 21l0 6 13 2 0-6m-316 0l-7 4 1 5 8-3-1-6m132 8l-1-5 14 1 1 5-1 0"/>
<path fill="#00f7ff" d="M527 253l4 6 1 0 0-6m142 20l0 3 13 3 0-4m-305 1l2 6 8-4-1-5m296 6l-1 1 13 2 0-1m-184 4l-1-4 3-1 10 1 2 5"/>
<path fill="#08fff7" d="M525 247l0 2 2 4 5 0 0-6m142 20l0 6 13 2 0-5m-306 0l1 6 9-3-2-6m128 13l9-3 1 4m-84 1l-7 1 9-3"/>
<path fill="#18ffe7" d="M526 241l-1 6 7 0-3-6m-141 21l1 3 8-6m-8 6l-8 4 0 1 8-3m47 16l-1 0 3-5 10-3-3 5m159 4l-1-3 13 2 0 2"/>
<path fill="#28ffd7" d="M526 236l0 5 3 0m121 11l0 1 12 3 0-2m-271 0l-4 3 1 5 9-3-2-6m115 17l-2-5 11 0m-81 13l3-6 2 0 7 0-2 3m155 6l-1-5 13 2 1 5"/>
<path fill="#38ffc7" d="M441 233l1 6 3-7m205 14l0 6 12 2 1-6m-268 4l-4 2 4-1m113 12l-2-5 15 1 1 3-3 1m-78 7l1 0 1 0m146 2l-1-5 13 2 1 4m0 1l0-1 12 1 1 2m50 5l-1-3 12 2 1 3"/>
<path fill="#48ffb7" d="M442 227l-2 4 1 2 4-1 1-1-1-5m205 17l0 3 13 2 0-2m-157 14l-1-1 7-3 0-1 7 1 2 5m53 4l0-3 13 2 0 2m1 3l-1-3 13 1 1 4m63 9l-1-5 12 2 1 5m-275-1l-8 3 3-5 8-3"/>
<path fill="#58ffa7" d="M444 222l-2 5 3-1m67 29l6-3 1 4m55 6l-2-5 5 0 8 1 2 6m-147-3l-8 2 0-1 9-2m209 13l-1-5 12 2 2 5m-267 4l2-5 9-3-3 5"/>
<path fill="#68ff97" d="M620 224l6 2 0-1m-194 37l3-5 9-3-3 6m208 8l-1-3 13 2 0 3m-13-5l-1-2 13 1 1 3m0 0l-1-3 13 2 0 2m-275 6l1-2 8-3 0 2"/>
<path fill="#78ff87" d="M613 218l0 4 7 2 6 1 0-6m-129 24l-1-2 4 0m-184 9l0 2 8-4 0-1m111 10l2-5 6-2 3 0-2 4m2-4l-3 0 4-1m200 14l-1-6 13 2 1 5m0 0l-1-5 12 2 2 5"/>
<path fill="#87ff78" d="M614 212l-1 6 13 1 0-3-11-4m-119 29l-3-4 1-1 9 0 1 1-4 4m-7-4l0-1 1 0m-11 3l-2-2 4 0m-170 7l1 6 8-3-1-5m114 10l1-1 5-1m0 0l-5 1 2-4 9-3-2 5m174 4l-1-5 12 2 1 5m13 2l13 1 0 1m0 0l0-1 12 2 0 1m-257-4l-8 3 0-2 9-3"/>
<path fill="#97ff68" d="M601 204l0 2 13 5 0-5m0 5l0 1 1 0m-121 24l5-5 1 0 3 5m-173-3l1 1 8-3 0-1m154 6l-3-4 9-1-5 5m-13 1l-5-4 13-1-4 5m-162 1l-9 3 1 3 8-2m117 5l3-5 9-3-3 5m171 4l-1-3 12 2 1 3m-226 8l3-5 8-3-2 5"/>
<path fill="#a7ff58" d="M601 199l0 5 13 2 0-5-1-1m-114 31l1-1 0 1m-170-4l0 6 9-3-1-6m152 8l-1-1 4-4 4 0 3 3-1 1m-23 2l-1 0 3-4 7-1 4 3 0 1m27-3l-1-2 5 0m-77 15l1-3 8 0m0 0l-8 0 2-3 9-2m-46 19l3-5 7-3 1 0-3 5"/>
<path fill="#b7ff48" d="M499 181l1 2 0-2m40 4l3 4 0-4m58 10l0 4 12 1m-235 4l1 5 8-6 0-2m-50 17l0 1 7-3m-7 3l-8 4 1 4 8-3m155 3l3-3 1 3m-19 2l3-5 4 4m30-1l-2-5 8 0 2 3-3 2m3-2l-2-3 8 0m-83 14l3-5 9-3-3 6"/>
<path fill="#c7ff38" d="M498 175l1 6 1 0 1-6m2 0l1 5 0-5m33 3l-1 1 4 6 3 0 0-6m-105 1l0 2 1-2m-61 18l0 6 9-3-1-6m-50 18l1 5 7-2 1-1 0-5m168 12l-1-2 5-3 2 0 2 5m0 0l-2-5 15 1 1 2-6 2m-80 9l2-3 8 0-1 0"/>
<path fill="#d7ff28" d="M497 169l0 3 1 3 3 0 0-5m0 0l2 5 1 0 1-3-1-2m33 3l0 5 6 1-4-6m-102 1l1 6 1 0 1-6m-55 16l1 1 3-3m-3 3l-8 6 0 1 8-3m-50 12l0 6 9-3-1-6m173 13l2-1 0 1m0 0l0-1 6-3 7 0 2 5m-26-5l0-1 1 0m39 5l-1-3 10 1m-147 23l-8 3 2-3 8-3"/>
<path fill="#e7ff18" d="M497 164l0 5 4 1 0-1-1-5m-26-1l1 6 1-6m-4 1l0 5 1-6m28 1l0 5 0 1 3 0-2-6m35 5l0 4 2 0m-3-6l1 2 0-2m-100 2l-1 1 1 4 3 0 2-6 0-1m-57 17l0 6 4-2 5-4-1-3m-49 22l-8 3 0 1 8-3m181 9l6-3 1 3m-24-1l-3-4 9 0-5 4m38 2l-2-5 14 2 1 4-3 0m-153 23l3-5 8-3-3 5"/>
<path fill="#f7ff08" d="M498 158l-1 6 3 0m-26-6l-1 2 1 3 2 0 0-5m-5 0l0 2 1 4 1-1 0-3 0-2m28 3l0 3 1 0m31-3l3 6 1 0 0-6m-98 1l-2 7 5-2-1-5m-57 16l1 6 8-3 0-6m112 33l-3-5 10 0 2 5m31 1l-1-4 3 0 10 1 2 5m-152 22l1-4 8-2-1 3m1-3l-8 2 1-1 9-3"/>
<path fill="#fff700" d="M474 152l0 6 2 0-1-6m-3 0l-1 6 2 0m58-3l0 2 2 4 4 0 1-2-2-4m-95 1l-2 6 2 0m-49 9l-8 7 9-3m109 28l-2-2 3-2 6-1 1 3 2 2m35 2l9-2 1 3m-30-6l-1-1 5 0m-31 2l-2-2 5 0m-94 29l3-6 8-2-2 5"/>
<path fill="#ffe700" d="M474 149l0 3 1 0m56-3l0 6 5 0-3-6m-30 50l3-4 3 3m17 1l-2-5 15 1 1 0-9 4m-33 0l-5-4 12-1 1 1-3 4m78 3l0-3 13 2 0 1m-182 20l3-4 8-3-3 5"/>
<path fill="#ffd700" d="M531 147l0 2 2 0m146 15l0 6 2 0 11 2 0-6m-168 28l-1-2 6-3 8 1 2 5m-46 0l-1-1 3-4 6 0 4 4m-13 0l-5-2 8-2m86 9l-2-5 13 2 2 5"/>
<path fill="#ffc700" d="M679 158l0 6 13 2 0-6m-163 29l7-3 1 4m-42 0l3-3 3 3m-14 2l-3-2 2-2 11-2 1 1-3 3m84 4l-2-4 6 0 7 1 2 5"/>
<path fill="#ffb700" d="M680 157l-1 1 13 2 0-1m13-3l0 5 12 3 0-6m-231 30l4-5 1-1 6 4m86 4l7 0 0 1"/>
<path fill="#ffa700" d="M476 123l0 3 1-3m29 1l1 4 0-4m198 27l0 5 12 2 1-5m-228 30l0-1 1 0m-24 6l-7 1 2-4 9-3-3 6"/>
<path fill="#ff9700" d="M475 117l1 6 1 0 0-6m27 1l2 6 1 0 1-6m159 21l0 1 13 3 0-2m25 7l0 3 13 2 0-3m-256 35l3-5 4-1 5 0-3 3m3-3l-5 0 6-2"/>
<path fill="#ff8700" d="M475 111l0 5 0 1 2 0 0-4 0-2m-13 1l1 5 0-5m39 0l0 4 0 2 4 0-2-6m114 14l10 4 0-2m0 0l0 2 12 4 0-4m26 4l-1 5 13 2 0-6m-215 45l1-1 3 0m0 0l-3 0 3-4 10-3-4 5"/>
<path fill="#ff7800" d="M476 105l-1 6 2 0m-14-5l1 6 1 0 1-5-1-1m40 0l-1 6 2 0m111 8l0 6 3 0 10 2 0-6m0 0l0 6 12 2 1-6m25 4l0 6 12 1 0-5m-211 45l3-4 8-1-1 2"/>
<path fill="#ff6800" d="M463 100l0 5 0 1 2 0 0-6m152 15l0 5 13 2 0-5m0 0l0 5 13 2 0-4-8-3m33 9l0 2 12 2 1-1"/>
<path fill="#ff5800" d="M464 95l-1 5 2 0m144 8l9 3 0-2m0 2l-1 4 13 2 0-1m0 0l0 1 5 0"/>
<path fill="#ff4800" d="M605 101l0 5 4 2 9 1 0-6m-111 49l-3-1 5-1"/>
<path fill="#ff3800" d="M605 96l0 5 13 2 0-5m-114 53l-5-2 2-1 11-2 2 1-5 3m5-3l-2-1 3 0"/>
<path fill="#ff2800" d="M603 90l3 1 0-1m0 1l-1 5 13 2 0-1m-117 51l4-5 7 3m0 0l-7-3 1 0 12-2 2 1-5 4m122 8l-2-3 13 1 1 4"/>
<path fill="#ff1800" d="M593 82l0 2 10 6 3 0 0-6m-100 59l6-5 6 3m117 10l-2-5 3 0 9 2 3 4m-28-7l0-1 13 2"/>
<path fill="#ff0800" d="M454 66l1 5 0-5m138 11l0 5 13 2 0-5m-102 57l-3 0 4-1m131 11l9 1 0 1m-25-4l-3-5 13 2 3 5"/>
<path fill="#f70000" d="M454 61l0 5 1 0 1-5 0-1m137 11l0 6 13 2 0-3-7-4m-98 64l-5 0 3-3 9-2 2 0-5 4m5-4l-2 0 3 0m106 8l-1-2 13 1 1 3m-27-5l-2-3 14 2 1 2"/>
<path fill="#e70000" d="M453 55l0 1 1 5 2-1-1-5m132 9l6 5 1-4m-1 4l0 2 6 1m-100 61l3-2 6 0m0 0l-6 0 3-3 9-1 2 0-5 4m90 2l-3-5 14 2 3 5m-113-4l-8 0 11-3"/>
<path fill="#d70000" d="M454 49l-1 6 2 0m126 3l0 2 6 4 7 1 0-4-3-2m-86 69l3-2 6 1m84 1l-3-4 14 1 3 5m-118 1l6-5 8 0-3 2"/>
<path fill="#c70000" d="M581 52l0 6 10 1m4 65l13 0 1 1"/>
</g>
<path d="M505.2 358.6l11.9 8.5M573.9 379.6l13.1-25.7M591.4 361l-11.4 24.4M527.9 356.1l9.8 14.2M455.1 318.4l3 1.3M533.7 365.6l-9.2-13.6M452.6 317.6l2.5 0.8M523.1 348.3l10.2 14M537.7 365.1l-10-14.4M450.7 317l1.9 0.6M533.4 361l-8.3-13.2M467.8 317.9l5.7 1.4M462.3 317.1l5.5 0.8M446.6 316.1l5.1 0.3 5.3 0.3 5.3 0.4M468 317l5.2 1.2M463 316.4l5 0.6M469.6 316.8l-5-0.6M458 316.2l5 0.2M473 317.5l-5-1M464.6 316.2l-4.8-0.3M468 316.5l-4.9-0.5M459.8 315.9l-4.9 0.1M463.1 316l-4.9 0M715.8 345.8l-9.5 37.5" stroke="#000" stroke-width="1.8" stroke-linecap="round" stroke-linejoin="round" fill="none"/>
<g fill-opacity="0.7" shape-rendering="crispEdges">
<path fill="#000087" d="M684 412l-4 6 12 2 5-5m0-1l0 1 12 2 0-2"/>
<path fill="#000097" d="M566 391l1 0-2-1m133 17l-1 7 12 1 2-6"/>
<path fill="#0000a7" d="M554 385l-3-1 10 3 5 4-1-1m20-5l-2 4 10 3 3 1 2-6-2-1m104 15l-2 6 13 2 2-6"/>
<path fill="#0000b7" d="M551 384l-5-3 13 4 2 2m24-5l0 3 11 1m105 13l-1 2 13 2 0-1"/>
<path fill="#0000d7" d="M728 387l0 5 12 2 1-5"/>
<path fill="#0000e7" d="M602 362l0 3 12 4 1-5m114 17l-1 6 13 2 1-6"/>
<path fill="#0000f7" d="M603 356l0 2-1 4 13 2 1-6m-53 8l0-1 12 2 1 2m154 7l-1 5 13 2 0-5"/>
<path fill="#0008ff" d="M512 352l1 2-11-4m102 0l-1 6 13 2 1-5-6-2m-48 14l-2-5 13 1 1 6"/>
<path fill="#0018ff" d="M500 349l-2-5 12 3 2 5-10-2m102-1l0 1 7 1m-50 9l-1-6 12 2 2 5"/>
<path fill="#0028ff" d="M498 344l-2-3 13 3 1 3m-15-7l1 1-5-2m43 9l-1-2 13 1 0 3m0 0l0-3 12 2 1 3m1 2l-1-2 13 2 0 2"/>
<path fill="#0038ff" d="M483 336l-2-3 12 2 2 5-4-1m42 7l-1-6 12 2 0 1 2 4m0 0l-2-4 13 1 1 5"/>
<path fill="#0048ff" d="M567 322l13 7 0-5m-99 9l-2-3 13 2 1 3m39 5l-2-5 13 2 1 5"/>
<path fill="#0058ff" d="M568 316l-1 6 13 2 1-5-3-2m-48 18l0-1 12 1 1 2"/>
<path fill="#0068ff" d="M568 311l0 5 10 1"/>
<path fill="#0087ff" d="M451 315l-8-2 0-1 19-1"/>
<path fill="#0097ff" d="M443 312l6-2 2-2 8-1 4 4-1 0m74 2l0-2 8 2"/>
<path fill="#00a7ff" d="M451 308l4-3 4 2m77 4l-1-5 13 2 1 4-5 1m-126 2l-8 2 4-4 9-2"/>
<path fill="#00b7ff" d="M533 277l4 5 0-5m-2 29l-1-1 13 0 1 3m-1-3l-1-2 13 2m-145 8l2-2 9-2-2 2"/>
<path fill="#00c7ff" d="M531 271l-1 2 3 4 4 0 1-6m-168 29l1 0 5-2m170 5l-1-5 13 2 1 5"/>
<path fill="#00d7ff" d="M531 265l0 6 7 0 0-2-3-4m0 0l3 4 0-3m-169 28l1 6 6-2 3-2-2-5m168 7l0-1 12 0 1 3"/>
<path fill="#00e7ff" d="M531 260l0 5 4 0m-3-6l-1 1 4 5 3 1 0-6m-163 25l1 1 7-4m-7 4l-9 4 2 4 8-3"/>
<path fill="#00f7ff" d="M532 253l0 6 6 1 1-4-2-2m-163 25l1 6 8-3 1 0-2-6"/>
<path fill="#08fff7" d="M532 247l0 6 5 1-4-6m-160 25l-1 0 2 6 8-3-1-6"/>
<path fill="#18ffe7" d="M381 269l-8 4 8-3m235 15l0-2 12 2 1 2m-242 9l-8 3 0-1 8-3"/>
<path fill="#28ffd7" d="M387 256l0 1 4-3m271 0l0 2 13 2 0-2m-59 27l-1-5 12 2 1 5m-249 13l3-5 8-3-3 5"/>
<path fill="#38ffc7" d="M386 250l1 6 4-2 4-2-1-5m269 1l-1 6 13 2 0-6m-73 25l-1-4 12 1 1 4m1 2l-1-2 13 2 0 2m-245 13l3-6 8-3-3 6"/>
<path fill="#48ffb7" d="M650 240l0 3 13 3 0-4m-269 2l-9 5 1 1 8-3m269-1l0 2 12 2 0-1m-88 17l0-2 12 1 1 2m1 4l-1-4 12 1 1 4"/>
<path fill="#58ffa7" d="M651 235l-1 5 13 2 0-5m-76 27l-2-6 13 2 1 5m-167-2l-2 0 2-1m231 13l-2-5 13 2 1 5m0 0l-1-5 13 1 1 6"/>
<path fill="#68ff97" d="M651 233l0 2 12 2 0-1m-91 21l-1-5 13 1 1 5-8-1m8 1l13 1 0 1m-168 3l-6 1 2-4 9-3-3 5m229 8l0-3 12 1 1 4m0 0l-1-4 13 2 1 3m-14-5l0-2 12 2 1 2"/>
<path fill="#78ff87" d="M571 252l-1-6 13 2 0 2 1 3m-276 0l0 2 8-3 0-2m110 10l3-5 8-3-2 5m238 9l-2-5 13 2 1 5"/>
<path fill="#87ff78" d="M615 212l11 4 0-2m-56 32l-2-4 7 0 6 1 2 5m-276-1l1 6 8-3-1-6m114 11l1-2 8-2-1 1m1-1l-8 2 2-3 8-3m193 8l-1-5 13 2 1 5m0 0l-1-5 12 2 2 4m12 3l0-1 13 2 0 1m-278-3l-8 2 0-1 8-3"/>
<path fill="#97ff68" d="M614 206l0 5 1 1 11 2 0-6m-304 28l1 2 8-4-1-1m245 9l6 0 0 1m-267-2l-8 3 1 3 8-3m117 6l2-6 9-2-3 5m192 3l-1-3 13 2 1 3m0 0l-1-3 13 1 0 4m-259 7l3-5 8-3-3 5"/>
<path fill="#a7ff58" d="M614 201l0 5 12 2 1-3m-138 26l-4-3 8-1m-172 3l1 6 8-3 0-6m145 6l-6-3 9-1m-44 15l2-3 8-2-1 3m-7-1l-8 2 0-1 9-3m-36 17l3-5 8-3-3 5"/>
<path fill="#b7ff48" d="M433 187l1 5 2-6m-107 35l0 2 8-4 0-1m148 10l-4-4 13-2 2 2-3 3m-164-4l-8 3 0 4 9-3m139 3l-2-1 2-3 12-2-3 5m-50 13l3-5 9-3-3 5m-33 12l0-1 8-2"/>
<path fill="#c7ff38" d="M432 181l1 6 3-1 2-4 0-2m-110 36l1 5 8-3-1-5m145 11l4-5 5-1 4 4m18-2l-1-3 6 0m-48 9l3-5 3-1 6 4m-50 13l3-5 5-2 4-1-3 5"/>
<path fill="#d7ff28" d="M496 169l1 3 0-3m42 4l4 6 1-6m-109 2l-3 6 6-1-1-6m-60 18l1 5 8-6-1-1m-57 20l-1 0 1 6 8-3 0-6m149 12l2-3 3 2m21-1l-3-4 1-1 8 0 2 4-2 1m-45 4l1-2 2 1m-41 12l0-1 5-1m-37 11l-8 3 2-3 8-3"/>
<path fill="#e7ff18" d="M495 163l1 6 1 0 0-5m40 3l0 2 2 4 5 0 0-4-1-1m-107 1l0 1 1-1m-1 1l-1 5 2-1m-61 13l1 5 8-2 0-6m-49 22l-8 4 8-3m173 5l5-4 3 4m43 3l-1-4 13 1 1 2m-177 27l2-5 9-3-3 5"/>
<path fill="#f7ff08" d="M494 158l0 1 1 4 2 1 1-6m39 3l0 6 6 1-4-7m-103 2l0 6 1 0 2-7m-55 16l-8 6 0 3 9-3m129 24l-2-5 10 0-7 5m44 3l-2-5 14 1 1 5m-28-7l-1-1 4 1m-149 31l2-4 8-3-1 4m1-4l-8 3 1-1 8-3"/>
<path fill="#fff700" d="M494 152l0 6 4 0 0-1-1-5m-22 0l1 6 1-6m-7 0l1 6 1-6m66 7l-1 2 2 0m-104-4l1 6 3-1 2-6-1 0m72 47l-2-2 4-3 12 1 1 1-5 3m35 3l-1-3 10-1 3 0 2 5m-28-3l-2-5 14 2 1 2-9 2m-146 26l3-6 8-3-3 6"/>
<path fill="#ffe700" d="M495 146l-1 6 3 0m-22-6l-1 3 1 3 2 0 0-5 0-1m-7 0l-1 4 1 2 2 0 0-2-1-4m-34 5l-2 6 5-1 0-6m74 48l7-4 3 0 2 5m15 0l-1-4 2 0 12 1 1 5m-151 24l3-4 8-3-3 4"/>
<path fill="#ffd700" d="M475 140l0 6 2 0-1-6m-6 0l0 6 1 0m-32-1l-2 6 3-1-1-6m82 50l2-2 1 2m18 1l10-3 2 4"/>
<path fill="#ffc700" d="M475 138l0 2 1 0m-37 3l0 2 0-1m59 43l-1-1 3-1m-16 5l-4-1 6-1"/>
<path fill="#ffb700" d="M680 153l0 4 12 2 0-5m25 4l0 6 13 2 0-6m-233 26l-6-4 14-1-5 4m-20 4l-4-1 2-3 12-2-4 5"/>
<path fill="#ffa700" d="M680 147l0 6 12 1 0-5m26 4l-1 5 13 2 0-6m-239 28l-1 0 4-4 5-1 6 4m-27 4l4-5 1 0 7 2 0 1"/>
<path fill="#ff9700" d="M680 143l0 4 12 2 1-4m-13-4l0 2 13 2 0-2m25 7l0 3 12 1 0-2m-236 26l2-3 3 2m-17 3l0-1 1 1"/>
<path fill="#ff8700" d="M474 111l1 5 0-5m2 0l0 2 1-2m25 1l1 4 0-4m138 18l0 4 13 3 0-5m25 3l0 6 13 2 0-6m-227 42l-8 2 2-3 9-3"/>
<path fill="#ff7800" d="M473 105l0 1 1 5 1 0 1-6m0 0l1 6 1 0 0-6m-13 1l1 1 0-1m35 0l2 6 1 0 1-6-1 0m139 18l-1 6 13 2 0-6m25 4l0 5 13 2 0-5m-213 38l-8 1 1-1 10-3m-23 11l3-5 6-2 3 0-3 4m3-4l-3 0 4-1"/>
<path fill="#ff6800" d="M474 100l-1 5 3 0 0-2-1-3m1 0l0 3 0 2 2 0 0-5m-13 0l0 6 1 0 0-6m35 0l0 4 0 2 3 0-1-6m140 20l0 4 12 2 0-3m13-1l0 4 13 3 0-5m0 5l-1 1 13 2 0-1m-220 39l4-5 8-2 2 0-4 4m-20 6l1-1 5-1m0 0l-5 1 3-4 10-3-4 5"/>
<path fill="#ff5800" d="M474 94l0 6 1 0 0-6m2 0l-1 6 2 0 1-1-1-5m-14 0l0 1 1 5 1 0 1-4-1-2m35 1l0 5 2 0-1-5m116 14l0 2 12 5 0-5m38 5l0 6 13 2 0-6m-204 47l2-2 6 0m-18 5l3-4 9-1-2 2"/>
<path fill="#ff4800" d="M474 92l0 2 1 0m2-5l0 5 1 0m-13-5l-1 5 2 0 0-6m35 6l0 1 1 0m116 8l0 6 12 2 1-6m37 6l0 5 13 2 0-4m-235 56l-8 2 3-3 8-3"/>
<path fill="#ff3800" d="M465 84l0 5 1-1m152 10l0 5 13 2 0-4-8-3m-182 71l3-5 8-2-3 4"/>
<path fill="#ff2800" d="M606 90l0 1 12 6 0-5m0 5l0 1 5 0m-118 45l-1 0 2 0"/>
<path fill="#ff1800" d="M606 84l0 6 12 2 0-6m-114 57l-7-1 2-2 12-2 1 0-6 5"/>
<path fill="#ff0800" d="M606 79l0 5 12 2 1-5-3-1m-117 60l5-4 7 2m122 8l-3-5 13 2 2 4-9-1"/>
<path fill="#f70000" d="M599 72l7 4 0-3m0 3l0 3 10 1m14 61l-1-3 12 2 2 3m-27-6l-1-2 12 1 2 2"/>
<path fill="#e70000" d="M455 55l1 5 0-6m138 11l-1 4 6 3 7 1 0-6m-90 60l-2 0 4-1m97 9l-3-5 13 2 2 4"/>
<path fill="#d70000" d="M454 49l1 6 1-1 1-3-1-2m135 10l3 2 0-1m0 0l0 1 0 4 12 2 0-6m-92 66l-6-1 3-2 14-2-7 4m94 4l-3-5 13 2 3 5m-117-6l-8 0 11-2"/>
<path fill="#c70000" d="M454 43l0 3 0 3 2 0 0-6m125 9l10 7 3 1 0-6m0 0l0 6 12 1 1-1-10-6m-86 70l7-5 6-1 5 1-4 3m84 3l-1-1 13 1 1 2m-122-1l7-5 11-2-7 5m97 0l-3-3 14 2 2 2m-121 1l-8 1 4-3 11-3m114 4l-2-2 13 1 1 3"/>
<path fill="#b70000" d="M455 37l-1 6 2 0m125 3l0 6 13 2 0-1-8-6m8 6l0 1 3 0m-79 65l3-1 3 0m-17 3l6-4 8 1-3 1m87 2l-3-4 13 1 4 5m-123 1l7-5 8-2 2 0-6 4m112 2l-4-5 13 2 4 4"/>
<path fill="#a70000" d="M581 44l0 2 5 1m16 70l-2-3 12 1 3 3m-112 1l2-1 6-1m104 1l-3-3 13 1 3 4"/>
</g>
<path d="M494.7 348.7l10.5 9.9M565.8 387.5l14.5-15.9M584.3 363.9l-13.8 21M521 370.3l-9.1-9.8M485.6 339.9l9.1 8.8M567.8 391.2l12.9-12.8M555.8 389.2l-14.3-7.7M536.6 377.6l14.3 10M546.2 385.2l-13.6-11.5M531.2 372.3l13.6 12M602 351.5l-11.8 29.6M541.5 381.5l-13.2-13.2M523.6 363.9l13 13.7M532.6 373.7l-12.1-13.9M519.1 358.4l12.1 13.9M531.8 364l10.8 14M536.1 358.6l11.2 15.5M544.9 370.8l-10.8-15.2M544.5 359.2l11.9 16.3M526.6 344.9l9.5 13.7M563 375.4l-10.5-16.3M671.4 414.1l14.8-20M691.4 388l-13.5 24.2M686.2 394.1l12.2-35.6M541.1 318.4l0.4-0.1M695.7 401.9l13-33.6M706.3 383.3l-13 27.8M410.6 320.9l-1.1 0M406.6 321.8l1.8-0.2M404.7 322l1.9-0.2M401.2 323l-1.3-0.3M402.6 323.1l-1.4-0.1M400.6 323.8l1.7-0.2" stroke="#000" stroke-width="1.8" stroke-linecap="round" stroke-linejoin="round" fill="none"/>
<g fill-opacity="0.7" shape-rendering="crispEdges">
<path fill="#000087" d="M709 415l0 2 13 2 0-2"/>
<path fill="#000097" d="M582 391l-3 5 13 4 4-7-3-1m118 17l-2 6 13 2 2-6"/>
<path fill="#0000a7" d="M583 389l-1 2 11 1m120 11l-2 6 13 2 1-6"/>
<path fill="#0000b7" d="M546 381l0-1 11 3 2 2m154 17l0 1 12 2 1-1"/>
<path fill="#0000c7" d="M546 380l-3-4 12 2 2 5"/>
<path fill="#0000d7" d="M543 376l-1-4 12 4 1 2m186 11l-1 5 13 2 1-5"/>
<path fill="#0000e7" d="M615 364l-1 5 9 2 4 1 1-6m114 17l-1 6 13 2 0-6"/>
<path fill="#0000f7" d="M616 358l-1 6 13 2 1-6m113 18l0 5 12 2 1-5"/>
<path fill="#0008ff" d="M611 351l6 2 0-1m-104 2l-1-2 12 2 1 4m92-5l-1 5 13 2 0-3"/>
<path fill="#0018ff" d="M604 345l0 4 7 2 6 1 0-6m-105 6l-2-5 12 2 2 5"/>
<path fill="#0028ff" d="M605 340l-1 5 13 1 1-2m-108 3l-1-3 12 2 1 3m-26-8l-1-1 13 2 1 2"/>
<path fill="#0038ff" d="M495 340l-2-5 13 2 2 5m36 1l0-1 13 2"/>
<path fill="#0048ff" d="M493 335l-1-3 13 1 1 4m-27-7l-1-2 13 2 1 2m52 10l-1-5 13 2 1 5"/>
<path fill="#0058ff" d="M478 328l-3-4 5 0 9 1 2 5m52 7l-1-2 13 1 1 3"/>
<path fill="#0068ff" d="M480 324l8 0 1 1"/>
<path fill="#0087ff" d="M576 323l0-1 13 2m-191-1l-9 3 2-1 8-3"/>
<path fill="#0097ff" d="M463 311l-4-4 10 0 1 0m106 15l-1-5 12 2 2 5m-198 1l9-4 9-3-10 4"/>
<path fill="#00a7ff" d="M459 307l-4-2 2-2 8 0 4 4m106 10l-1-3 13 1 0 4m-187 2l2-1 8-3-1 1m1-1l-8 3 4-4 8-3"/>
<path fill="#00b7ff" d="M457 303l4-4 4 4m-40 6l-9 2 2-3 9-2m-21 10l2-3 8-2-2 2"/>
<path fill="#00c7ff" d="M362 303l1 1 8-4-1 0m48 8l4-5 5-1 4-1-4 5"/>
<path fill="#00d7ff" d="M360 297l2 6 8-3-1-6m53 9l1 0 4-1"/>
<path fill="#00e7ff" d="M367 288l0 2 9-4-1-1m-8 5l-8 3 1 4 9-3"/>
<path fill="#00f7ff" d="M365 282l2 6 8-3-1-6"/>
<path fill="#08fff7" d="M372 273l-8 4 1 5 9-3"/>
<path fill="#18ffe7" d="M380 265l1 4 8-4-1-3"/>
<path fill="#28ffd7" d="M378 259l2 6 8-3-1-5 0-1"/>
<path fill="#38ffc7" d="M381 252l-4 2 1 5 9-3-1-6m136 14l-1-3 10 1"/>
<path fill="#48ffb7" d="M663 242l0 4 12 3 1-5m-291 5l-4 3 5-2m135 11l-2-5 15 1 1 3-4 2m69 5l-1-2 13 2 0 1m-219 16l-8 3 3-5 8-3m-11 8l-8 3 2-5 9-3"/>
<path fill="#58ffa7" d="M663 237l0 5 13 2 0-5-5-1m-152 18l-1-4 4-1 10 1 2 5m65 8l-1-5 13 2 1 5m-224 15l2-5 8-3-2 5m-17 6l3-5 8-3-2 5"/>
<path fill="#68ff97" d="M663 236l0 1 8 1m-149 13l9-4 1 5m53 6l-1-5 13 2 1 4m0 1l0-1 12 1 1 2m-221 15l1-2 8-3-1 2m-16 6l1-2 8-3-1 2"/>
<path fill="#78ff87" d="M584 253l-1-3 13 1 1 4"/>
<path fill="#87ff78" d="M626 214l0 2 13 3 0-3m-209 37l-8 2 1-3 9-2m227 8l-2-4 13 2 1 4m0 0l-1-4 13 2 1 4"/>
<path fill="#97ff68" d="M430 200l0 1 1-1m195 8l0 6 13 2 0-6m-325 29l0 2 9-3-1-2m101 16l3-5 8-3-2 6m212-1l0-2 12 2 1 1m0 4l0-4 12 2 1 4m0 0l-1-4 13 2 1 4"/>
<path fill="#a7ff58" d="M429 194l1 6 1 0 3-7m180 7l0 1 13 4 0-3m0 3l-1 3 13 2 0-1m-326 24l1 6 8-3-1-6m123 9l-8 2 1-2 9-3m-20 11l2-4 8-2-2 3m210 3l-2-5 13 2 1 5m-228-6l-8 2 8-3"/>
<path fill="#b7ff48" d="M548 186l2 2 0-2m-121 2l-1 2 1 4 5-1 0-1-1-5m181 8l0 5 13 2 0-6m-131 28l-2-2 4 0m-177 4l-8 3 0 4 8-3m146-1l-7-1 9-2m-32 13l3-5 9-3-3 5m196 6l-1-5 12 2 2 5m-235 1l3-5 8-3-3 5m-32 11l-8 3 2-5 8-2"/>
<path fill="#c7ff38" d="M543 179l5 7 2 0 0-6m-118 1l-3 7 4-1m182 2l-1 6 13 1 0-2m-258 7l0 2 6-4m119 23l-4-4 11-1 1 1-4 4m-38 6l-1 0 3-5 10-2-3 5m-29 8l3-5 8-1-2 3m192 6l-1-4 12 2 1 4m-230 1l3-5 8-3-3 5m-41 14l3-5 8-3-3 6"/>
<path fill="#d7ff28" d="M544 173l-1 6 7 1 0-3-2-3m-116 2l0 5 3-6m-66 20l0 6 6-2 3-2-1-5m113 26l-3-2 2-2 9-1 3 4m-39 6l3-5 1 0 7 1-1 2m-46 14l0-2 8-2 0 1m-41 14l1-2 8-3-1 2"/>
<path fill="#e7ff18" d="M544 169l0 4 4 1m-117-4l1 6 3-1 1-5 0-1m-67 20l-1 1 1 5 8-3-1-5m113 27l4-5 1-1 4 5m-33 5l0-1 1 1"/>
<path fill="#f7ff08" d="M493 158l1 1 0-1m-61 6l-2 5 0 1 5-1 0-6m-60 21l-7 5 7-2"/>
<path fill="#fff700" d="M492 152l1 6 1 0 0-6m42 3l2 4 0-4m-103 2l-2 7 3-1m74 38l-1-3 5 0m42 5l-1-2 11 1"/>
<path fill="#ffe700" d="M491 146l1 6 2 0 1-6m-21 0l0 3 1-3m-4 0l1 4 0-4m-3 0l0 4 1-4m63 3l3 6 2 0 0-5m-29 48l-3-3 2-1 13 0-7 4m41 3l-1-5 13 1 2 5-3 0"/>
<path fill="#ffd700" d="M491 140l0 5 0 1 4 0 0-3-1-3m-21 0l1 6 1 0 0-6m-5 0l1 6 1 0 1-6m-5 0l1 6 1 0 0-6m61 3l0 4 2 2 5 1 0-2-2-4m-100 1l1 6 2-6m69 49l5-4 1-1 7 0 2 3-2 2m33 2l-2-4 5-1 9 1 1 5"/>
<path fill="#ffc700" d="M491 134l0 6 3 0-1-6m-20 0l0 5 0 1 2 0 0-2 0-4m-4 1l-1 5 3 0 0-1-1-5m-4 1l0 4 0 1 2 0-1-5m63 3l-1 5 5 1-3-6m-97 1l0 6 3 0 0-2-1-4m76 50l5-4 2 4m36 2l8-1 1 2"/>
<path fill="#ffb700" d="M492 129l-1 5 2 0m-19-5l-1 5 2 0m-4-5l0 6 1-1m-3-5l-1 6 1 0m63 1l0 2 1 0m-97-5l-1 4 1 2 2 0 0-6m254 21l0 5 13 2 0-5"/>
<path fill="#ffa700" d="M437 130l-1 3 2 0m254 16l0 5 13 2 0-5m-173 27l-2-2 8 0m-33 5l-6-4 11-1"/>
<path fill="#ff9700" d="M693 145l-1 4 13 2 0-3m-175 28l-2-4 1-1 14 1 1 2-6 2m-39 1l-3-2 3-2 8-1 4 3-1 1m18-4l-1-1 2 0"/>
<path fill="#ff8700" d="M506 112l2 6 0-6m21 59l9-4 3 0 2 5m-44 1l4-5 4 4m20-1l-3-5 14 1-9 4m-71 10l-8 2 1-2 9-3"/>
<path fill="#ff7800" d="M505 106l1 6 2 0 0-4 0-2m30 61l2-1 1 1m-17-1l-1 0 8-4 7 0 2 4-2 1m-87 14l4-5 8-3-3 5"/>
<path fill="#ff6800" d="M472 100l1 5 1-5m1 0l1 3 0-3m29 1l0 5 3 0-2-5m129 16l8 3 0-2m0 0l0 2 12 3 0-3m-124 42l5-3 2 3m-83 14l1-2 8-2-1 1"/>
<path fill="#ff5800" d="M472 94l0 1 0 5 2 0 0-6m1 0l0 6 1 0 1-6m1 0l1 5 0-5m26 2l0 5 1 0m124 10l0 5 5 1 8 1 0-5m0 0l0 5 12 2 1-5m-177 48l-9 1 1-1 10-3"/>
<path fill="#ff4800" d="M472 88l0 6 2 0 0-2 0-4m1 0l-1 4 1 2 2 0 0-5 0-1m0 0l0 1 1 5 1 0 0-6m-16 1l1 5 1-5m166 16l-1 6 13 2 0-6m0 0l0 6 13 2 0-6m12 2l13 3 0-1m-210 50l4-5 9-3 1 0-4 5"/>
<path fill="#ff3800" d="M473 82l-1 6 2 0m1-6l0 6 2 0-1-6m1 0l0 6 2 0 1-4-1-2m-16 1l0 6 2 0 0-5 0-1m158 15l8 3 0-2m0 2l0 4 12 2 0-2m0 0l0 2 13 2 0-1m13-3l-1 6 13 2 0-6m-206 51l2-2 7-1m-15 2l-8 2 0-1 9-3"/>
<path fill="#ff2800" d="M475 78l0 4 1 0m2-5l-1 5 2 0m-16-5l-1 5 1 1 2 0-1-6m154 15l0 5 5 1 8 1 0-5m38 5l0 6 12 2 0-6m-198 48l-6 1 7-2m-23 10l5-5 9-3-5 5"/>
<path fill="#ff1800" d="M463 71l0 6 1 0 0-6m154 15l0 6 13 2 0-6m38 8l0 3 12 2 1-2m-205 51l-2 0 4-5 10-2-5 5m-18 5l1-1 8-2"/>
<path fill="#ff0800" d="M616 80l3 1 0-1m0 1l-1 5 13 2 0-2m-120 52l-7-2 1-1 14-2-7 5m-33 7l2-2 8-1 0 1"/>
<path fill="#f70000" d="M606 73l0 3 10 4 3 0 0-5m-114 60l5-4 1 0 12-2 1 1-5 3m110 5l-2-2 13 2 1 2"/>
<path fill="#e70000" d="M606 67l0 6 13 2 0-6m-108 62l5-4 7 2m104 7l-2-4 13 2 2 4"/>
<path fill="#d70000" d="M606 61l0 6 13 2 0-4-7-3m13 70l-3-5 13 2 3 5"/>
<path fill="#c70000" d="M597 54l10 6 0-4m0 4l-1 1 6 1m10 65l-1-2 12 2 2 2"/>
<path fill="#b70000" d="M594 48l0 5 3 1 10 2 0-4-4-2m-82 68l-8-1 13-2"/>
<path fill="#a70000" d="M594 45l0 3 9 2m-90 67l8-5 10-1 2 0-7 4m74-1l-2-2 14 2 0 1m0 0l0-1 13 2"/>
<path fill="#970000" d="M521 112l4-2 6 1m67 1l-4-4 14 2 4 4m0 0l-4-4 13 2 4 4"/>
<path fill="#870000" d="M594 108l-2-2 12 1 4 3m0 0l-4-3 13 1 4 4m-28 4l-8 3 12 2 8-3"/>
</g>
<path d="M575.2 377.7l-14.4 11M559.3 388.9l14.6-9.3M570.5 384.9l-14.7 4.3M550.9 387.6l14.9-0.1M560.8 388.7l-14.6-3.5M544.8 384.3l14.5 4.6M478 332.9l7.6 7M587.1 383.5l12.7-27.7M511.9 360.5l-7.6-9.9M443.2 315.7l4.9 0.3 4.9 0.1 5 0.1M448.5 316l-4.8-0.3M445.3 315.8l-4.7-0.5M445.8 315.8l0.9 0.2M450.1 316l-4.8-0.2M453.3 316l-4.8 0M454.9 316l-4.8 0M458.2 316l-4.9 0M534.4 344.8l10.1 14.4M444.9 315.6l0.9 0.2M552.5 359.1l-8.5-14.4M568.2 365.9l-9.4-15.8M562 349.7l10.1 16.1M680.5 417.9l15.2-16M707.5 407.1l13.4-32.1M721.5 381.3l-12.7 29.9" stroke="#000" stroke-width="1.8" stroke-linecap="round" stroke-linejoin="round" fill="none"/>
<g fill-opacity="0.7" shape-rendering="crispEdges">
<path fill="#000087" d="M594 400l10 3 1-2"/>
<path fill="#000097" d="M567 391l-1 0 10 2 3 3m17-3l-4 7 2 0 11 1 3-4"/>
<path fill="#0000a7" d="M566 391l-5-4 11 2 4 4"/>
<path fill="#0000b7" d="M561 387l-2-2 12 4 1 0"/>
<path fill="#0000c7" d="M680 400l0-3 12 2 1 3"/>
<path fill="#0000d7" d="M627 372l13 3 0-1m40 23l-2-5 13 2 1 5"/>
<path fill="#0000e7" d="M628 366l-1 6 13 2 1-6m37 24l-1-5 12 2 2 5"/>
<path fill="#0000f7" d="M629 360l-1 6 13 2 0-6m102 15l-1 1 13 2 0-1m-78 8l-1-1 13 2 0 1"/>
<path fill="#0008ff" d="M617 352l0 1 12 4 0-3m0 3l0 3 12 2 1-2m-56 4l0-1 13 2 0 1m144 5l0 6 12 2 1-6"/>
<path fill="#0018ff" d="M617 346l0 6 12 2 1-6m-44 15l-1-5 12 2 2 5m144 4l0 2 13 2 0-2"/>
<path fill="#0028ff" d="M605 339l0 1 13 4 0-3m0 3l-1 2 13 2 0-1m-45 11l-1-2 13 2 0 2"/>
<path fill="#0038ff" d="M606 333l-1 6 13 2 0-6"/>
<path fill="#0048ff" d="M606 330l0 3 12 2 1-1m-127-2l-1-2 13 2 1 1m52 11l-1-5 12 2 2 5-7-1"/>
<path fill="#0058ff" d="M491 330l-2-5 13 2 2 5m38 3l-1-3 13 2 1 2m1 3l-1-3 13 2 0 3"/>
<path fill="#0068ff" d="M489 325l-1-1 13-1 1 4m39 5l-1-4 10 0 3 1 1 5"/>
<path fill="#0078ff" d="M550 328l3 0 0 1"/>
<path fill="#0097ff" d="M589 324l-2-5 13 2 1 5-7-1"/>
<path fill="#00a7ff" d="M455 305l-3-1 5-1m-90 12l2 3 8-3-2-3m212 7l0-4 12 2 1 4"/>
<path fill="#00b7ff" d="M452 304l-5-2 1-2 12-1 1 0-4 4m-92 6l2 6 8-3-1-4-1-2m43 5l-8 2 2-2 8-3"/>
<path fill="#00c7ff" d="M448 300l5-5 1 0 6 4m-89 1l-8 4 2 5 8-3m37 5l3-5 9-3-4 5"/>
<path fill="#00d7ff" d="M413 306l2-1 8-2-1 0"/>
<path fill="#18ffe7" d="M371 267l1 6 1 0 8-4-1-4"/>
<path fill="#28ffd7" d="M370 262l1 5 9-2-2-6"/>
<path fill="#38ffc7" d="M377 254l-8 4 1 4 8-3"/>
<path fill="#48ffb7" d="M676 244l-1 5 13 2 0-5"/>
<path fill="#58ffa7" d="M671 238l5 1 0-1m0 1l0 5 12 2 1-5m-171 11l-1-1 5 0"/>
<path fill="#68ff97" d="M664 231l-1 5 8 2 5 0 0-5m-159 18l-1-5 14 1 1 0-9 4m76 8l-1-4 12 2 1 3m-219 15l-8 3 2-3 8-3m-10 6l-8 3 2-3 8-3"/>
<path fill="#78ff87" d="M664 226l0 5 12 2 0-5m-160 18l-2-4 2-1 13 1 1 5m53 3l0-2 12 2 1 1m1 4l-1-4 12 1 1 5m-224 18l2-6 9-3-3 6m-16 6l2-6 8-3-2 6"/>
<path fill="#87ff78" d="M516 241l9-4 2 0 2 5m54 6l-2-5 13 2 1 5m-173 5l-8 2 1-2 8-3m-36 17l2-4 9-3-2 4m-17 6l2-4 8-3-2 4"/>
<path fill="#97ff68" d="M525 237l2-1 0 1m54 6l0-1 13 1 0 2m-179 10l2-5 9-3-3 5m234-2l-1-1 13 2 0 1"/>
<path fill="#a7ff58" d="M417 250l3-5 8-2-2 4m230 2l-1-5 12 2 2 5"/>
<path fill="#b7ff48" d="M313 227l0 2 8-3 0-2m334 20l-2-5 13 2 1 5m-248-1l-7 3 3-5 8-3-3 5"/>
<path fill="#c7ff38" d="M361 204l0 3 8-4 0-2m-57 20l1 6 8-3-1-5m161 5l-6-4 10-1m-34 9l-8 1 9-3m201 13l-1-4 13 2 1 4m-26-8l-1-1 13 2 0 1m-237 8l2-6 9-2-3 5"/>
<path fill="#d7ff28" d="M360 198l1 6 8-3 0-6m-50 18l-8 4 1 4 8-2m155 1l-2-1 3-3 9-2 2 2-2 3m-42 10l3-5 9-3-3 5m187 6l-1-5 13 1 1 6m-235 3l1-1 8-3 0 2"/>
<path fill="#e7ff18" d="M543 168l1 1 0-1m-176 22l-8 5 0 3 9-3m107 21l3-5 1-1 5 4m-39 10l3-6 1 0 7-1-2 4m183 6l-1-6 12 2 2 5"/>
<path fill="#f7ff08" d="M539 161l4 7 1 0 0-6m-114 2l1 5 2-5m46 47l0-1 1 0m157 11l-1-2 12 2 1 2"/>
<path fill="#fff700" d="M538 155l0 4 1 2 5 1 0-4-1-2m-113 2l0 6 3 0 2-7"/>
<path fill="#ffe700" d="M538 150l0 5 5 1-4-6m-105 1l1 6 2-6m-6 1l-2 4 1 2 5-1-1-6m72 44l-1-1 3 0m32 1l-1 0 3 0"/>
<path fill="#ffd700" d="M490 140l1 5 0-5m3 0l1 3 0-3m43 8l0 2 1 0m-106-4l1 5 3 0-1-6m-3 1l-2 6 3-1m71 43l-4-4 11-1 1 1-5 4m15-2l-2-3 8 0m10 6l-2-5 15 1 0 1-10 3m10-3l0-1 5 0m50 12l-2-5 13 1 1 5-7-1"/>
<path fill="#ffc700" d="M488 134l2 6 1 0 0-6m2 0l1 6 1 0 0-5m-23-1l1 5 0-5m-4 1l1 5 1-5m-4 0l1 4 0-4m-33 5l-2 4 0 2 3-1 0-6m65 51l-3-3 2-2 8 0 4 4m9 0l-2-4 2 0 14 0 1 1-7 3m8 1l-1-4 3-1 11 1 2 5m-16-5l-1-1 4 0m13 6l-2-5 14 1 1 3-8 1m48 7l-2-6 13 2 2 5m-189 6l-8 2 9-3"/>
<path fill="#ffb700" d="M487 129l1 5 3 0 1-5-1 0m1 0l1 5 2 1-1-6m-23 0l1 5 1 0 1-5m-5 0l0 6 2 0 0-6m-5 0l1 6 1 0 1-6m-34 8l0 3 1-1m64 46l5-4 3 4m13 0l8-5 3 0 3 5m4 0l9-3 2 4m-15-1l-3-5 16 1 0 1-9 3m11 1l-2-4 4 0 10 0 2 5m39 5l0-2 12 2 1 2m-1-2l-1-3 13 2 1 2m-207 14l3-5 9-3-3 5"/>
<path fill="#ffa700" d="M488 123l-1 6 4 0-1-6m2 0l0 6 2 0m-22-6l-1 6 3 0 0-1-1-5m-4 0l0 6 2 0-1-6m-3 0l-1 6 3 0-1-6m61 57l3-2 0 2m0 0l0-2 6-2 7 0 3 5m4 1l9-2 1 2m52 7l-1-5 12 2 2 5m-203 11l3-5 8-2-2 4m2-4l-8 2 1 0 8-3"/>
<path fill="#ff9700" d="M488 117l0 6 2 0 0-2-1-4m-17 1l0 5 1 0m-3-4l-1 4 1 0m-3-5l0 5 1 0m225 20l0 2 12 3 0-3m-167 31l6-2 1 2m-49-1l-3-2 6 0m114 11l-2-4 13 1 1 5m-197 11l3-5 8-3-3 5"/>
<path fill="#ff8700" d="M488 113l0 4 1 0m204 20l0 6 12 2 0-6m-212 34l-5-1 2-2 12-2 1 0-4 5m-68 19l3-5 8-2-3 4m-5-2l-9 3 1-1 8-3"/>
<path fill="#ff7800" d="M693 132l0 5 12 2 1-5m-216 36l4-5 1 0 7 3m-76 21l3-5 9-3-4 5"/>
<path fill="#ff6800" d="M503 100l1 6 1 0 0-5m150 19l0 3 13 3 0-4m25 9l0 1 13 2m-212 31l1-1 0 1m-66 19l3-3 8-3-2 3"/>
<path fill="#ff5800" d="M502 95l1 5 2 1 0-5 0-1m151 20l-1 5 13 2 0-6m-198 48l-6 1 7-2"/>
<path fill="#ff4800" d="M474 88l0 4 1-4m27 1l-1 5 1 1 3 0-2-6m153 20l0 6 12 1 0-5-5-1m18 3l0 1 13 2 0-1m-201 41l-8-1 11-3m-32 13l-2 0 4-5 9-2-4 5"/>
<path fill="#ff3800" d="M473 82l1 6 1 0 0-6m1 0l1 6 0-6m25 1l0 6 1 0m128 10l0 2 12 4 0-4m13 7l0 1 7 1m18-3l0 6 13 2 0-6m-209 46l5-5 5-1 4 0-3 3m3-3l-4 0 6-1m-17 7l-7 1 3-3 10-3-5 5m-19 5l3-3 8-1-2 2"/>
<path fill="#ff2800" d="M473 77l0 4 0 1 2 0 0-4 0-1m0 0l0 1 1 4 1 0 1-5m153 17l0 5 12 2 1-5m37 5l0 6 13 2 0-6m-204 47l1-2 4 1m0 0l-4-1 3-3 10-2 1 0-4 5m-21 5l3-4 8-1-1 2"/>
<path fill="#ff1800" d="M474 71l-1 6 2 0m1-6l-1 6 3 0 0-3 0-3m153 17l0 6 13 2 0-6m25 4l0 2 13 3 0-3m0 3l-1 2 13 2 0-2m-200 44l3-3 7 1m-29 7l-8 2 3-4 9-3"/>
<path fill="#ff0800" d="M476 65l0 6 2 0-1-6m154 21l0 2 13 2m25-2l0 6 13 2 0-6m-212 58l3-3 8-2-2 2m2-2l-8 2 2-2 9-2"/>
<path fill="#f70000" d="M476 63l0 2 1 0m192 17l0 6 13 2 0-6m-207 59l4-5 9-1-4 4m157-1l-1-2 13 2 1 1"/>
<path fill="#e70000" d="M669 80l0 2 13 2 0-1m-42 55l-2-4 12 1 3 5"/>
<path fill="#d70000" d="M612 62l7 3 0-2m19 71l-3-5 12 2 3 4"/>
<path fill="#c70000" d="M607 56l0 4 5 2 7 1 0-5m16 71l-2-2 13 1 1 3"/>
<path fill="#b70000" d="M603 50l4 2 0-2m0 2l0 4 12 2 0-1"/>
<path fill="#a70000" d="M594 43l0 2 9 5 4 0 0-6m-96 73l-6 1 5-3 11-3-8 5"/>
<path fill="#970000" d="M594 37l0 6 13 1 0-1-11-6m-86 78l7-5 8 0-4 2m104 4l-4-4 13 1 4 4-7 0"/>
<path fill="#870000" d="M594 36l0 1 2 0m25 75l-4-4 13 1 4 4m-25-3l-8 3 12 2 8-3"/>
</g>
<path d="M549.1 383.8l12.6 8.2M599.3 374.5l-13.6 19.2M588.6 391.2l13.2-22.9M556.8 390l-12.3-10.4M542.6 378l12.2 11M504.3 350.6l-6.1-8.6M545.2 377.4l13.3 12.6M562.5 391.9l-13.1-11.8M554.8 387.8l-11.5-12.5M528.3 368.3l-11.6-13.8M537.7 370.3l11.4 13.5M512.1 350.5l11.5 13.4M544.5 379.6l-10.8-14M520.5 359.8l-10.7-12.7M508.5 345.9l10.6 12.5M533.3 362.3l11.9 15.1M502.2 339.5l9.9 11M549.4 380.1l-11.7-15M557.5 385.8l-12.6-15M543.3 375.3l-9.9-14.3M522.7 350.5l9.1 13.5M479.5 321.7l6.7 3.9M487.2 325.2l-1.8-3.4M547.1 342.1l9.3 14.3M705.8 423.4l15.6-12.6 13.6-31.3M396.9 324l1.9 0 1.8-0.2M395.2 323.8l1.7 0.2M737 381.7l-12.5 30.8M394.8 324.6l-1.2-0.3M396.2 324.8l-1.4-0.2M397.5 324.9l-1.3-0.1M398.8 324.8l-1.3 0.1M399.8 324.7l-1 0.1M398.4 325.1l1.2-0.3M396.9 325.4l1.5-0.3M395.2 325.6l1.7-0.2M393.3 325.7l1.9-0.1M391.5 325.6l1.8 0.1M736.9 413.6l13.7-31M392.1 326.5l-1.4-0.1M393.5 326.5l-1.4 0M394.6 326.4l-1.1 0.1M753.1 383.8l-12.4 31M393.2 326.9l1.4-0.3" stroke="#000" stroke-width="1.8" stroke-linecap="round" stroke-linejoin="round" fill="none"/>
<g fill-opacity="0.7" shape-rendering="crispEdges">
<path fill="#0008ff" d="M629 354l0 3 13 3 0-4"/>
<path fill="#0018ff" d="M630 348l-1 6 13 2 1-5-4-1m105 15l-1 4 13 2 0-4"/>
<path fill="#0028ff" d="M618 341l0 3 12 3 1-5m-1 5l0 1 9 2m-130-6l-1-2 12 2 1 2m63 10l-1-3 13 2 1 3m147 1l0 6 12 2 1-6"/>
<path fill="#0038ff" d="M618 335l0 6 13 1 0-5-4-1m-119 6l-2-5 13 2 1 5m63 9l-1-5 13 2 1 5"/>
<path fill="#0048ff" d="M619 334l-1 1 9 1m-121 1l-1-4 12 1 2 5"/>
<path fill="#0058ff" d="M555 336l-1-2 13 2 1 2"/>
<path fill="#0068ff" d="M554 334l-1-5 13 2 1 5"/>
<path fill="#0078ff" d="M553 329l0-1 12 2 1 1"/>
<path fill="#0087ff" d="M389 326l-8 3 2-1 8-3"/>
<path fill="#0097ff" d="M371 321l4 5 8-3-4-5m4 10l9-4 8-3-9 4"/>
<path fill="#00a7ff" d="M377 315l-8 3 2 3 8-3m13 6l2-1 8-3-2 1m-41-4l2 5 8-4-2-3m35 5l-8 3 3-4 9-3m-12 7l-8 3 3-4 8-3"/>
<path fill="#00b7ff" d="M356 311l3 6 8-2-2-6m32 10l3-3 8-3-2 3m2-3l-8 3 1-2 9-3m-21 11l3-4 8-2-3 3"/>
<path fill="#00c7ff" d="M363 304l-9 3 2 4 9-2m36 5l4-5 8-3-3 5"/>
<path fill="#00d7ff" d="M405 309l2-2 8-2-2 1"/>
<path fill="#38ffc7" d="M369 256l0 2 8-4 0-1"/>
<path fill="#48ffb7" d="M688 246l0 5 13 2 0-5m-333 2l1 6 8-3-1-6"/>
<path fill="#58ffa7" d="M689 241l-1 5 13 2 0-4m-325 1l-8 5 8-3"/>
<path fill="#78ff87" d="M596 251l-1-1 13 2"/>
<path fill="#87ff78" d="M595 250l-1-5 13 2 1 5m-210 10l-9 3 1-1 8-3"/>
<path fill="#97ff68" d="M594 245l0-2 12 1 1 3m62 5l0-1 12 2 1 1m-292 10l3-5 8-3-3 5"/>
<path fill="#a7ff58" d="M669 251l-2-5 13 2 1 5m-288 6l2-5 9-3-3 5"/>
<path fill="#b7ff48" d="M304 230l1 2 8-3 0-2m354 19l-1-5 13 2 1 5m-285 6l1-1 8-3 0 1"/>
<path fill="#c7ff38" d="M304 224l0 6 9-3-1-6m354 20l-1-4 13 2 1 4m-27-8l0-1 13 1 0 2m0 0l0-2 12 2 1 2"/>
<path fill="#d7ff28" d="M487 216l-2-2 4 0m-178 3l-8 3 1 4 8-3m161-2l-7-1 10-2m-37 14l-5 1 3-5 9-2-3 5m209 5l-1-6 12 2 2 5m0 0l-2-5 13 2 1 5"/>
<path fill="#e7ff18" d="M485 214l-5-4 13-1-4 5m-23 4l-1-1 3-4 11-2-3 5m-39 10l3-5 9-3-3 6m205 4l-2-5 13 2 1 5m0 0l-1-5 12 2 2 5"/>
<path fill="#f7ff08" d="M480 210l-1 0 4-5 6 0 5 3-1 1m-25 4l3-5 1 0 7 2 0 1m-39 10l1-1 8-2m200 5l-1-2 13 1 1 3m0 0l-1-3 13 2 0 3"/>
<path fill="#fff700" d="M543 156l1 2 0-2m-61 49l3-3 3 3"/>
<path fill="#ffe700" d="M539 150l4 6 1 0 1-5"/>
<path fill="#ffd700" d="M538 144l0 4 1 2 6 1 0-4-1-2m-31 45l-1-1 2 0"/>
<path fill="#ffc700" d="M538 138l0 6 6 1-4-7m-28 51l-4-4 10 0 1 0-5 4m5-4l-1 0 3 0m44 5l-1-3 13 2 0 1"/>
<path fill="#ffb700" d="M539 136l-1 2 2 0m-32 47l-3-4 10-1 3 5m0 0l-3-5 14 0-8 5m43 2l-2-5 13 2 2 5m-29-7l0-1 4 1m76 11l-1-2 13 2 0 1m-227 16l3-5 8-3-3 5"/>
<path fill="#ffa700" d="M486 123l1 6 1-6m-15 0l1 5 0-5m31 58l5-5 1 0 4 4m0 0l-4-4 19 0 2 2-3 2m33 2l-1-2 11-1 1 0 2 5m-27-3l-3-5 15 2 1 2-9 2m75 9l-2-5 13 2 2 5m-224 12l3-5 8-3-3 5m3-5l-8 3 9-3"/>
<path fill="#ff9700" d="M486 117l0 4 0 2 2 0 0-6m-16 0l0 1 1 5 1 0 1-6m230 28l0 3 13 2 0-3m-208 29l1-1 0 1m0 0l0-1 5-4 11 0 1 1 2 4m15 0l-1-2 6-2 8 1 2 5m65 8l-1-5 3 1 9 1 2 5m-219 12l4-6 8-2-3 5"/>
<path fill="#ff8700" d="M486 111l0 6 2 0 0-4 0-2m-15 0l-1 6 3 0 0-1-1-5m231 28l0 6 13 2 0-6m-202 30l1-1 6-4 1 0 3 5m23 1l7-1 1 2m-116 12l-8 2 0-1 9-3m-20 11l2-4 9-3-3 5"/>
<path fill="#ff7800" d="M487 105l-1 6 2 0m-15-5l0 5 1 0m232 23l-1 5 13 2 0-5-11-2m-273 52l4-5 8-3-3 5"/>
<path fill="#ff6800" d="M693 126l0 5 13 3 0-6m-268 53l2-3 8-2-2 2"/>
<path fill="#ff5800" d="M693 120l0 6 13 2 0-6"/>
<path fill="#ff4800" d="M500 89l1 5 1-5m192 27l-1 4 13 2 0-3"/>
<path fill="#ff3800" d="M499 83l1 6 2 0 0-6m141 18l0 4 13 3 0-5m-179 53l-8 1 1-2 10-2"/>
<path fill="#ff2800" d="M498 77l0 3 1 3 3 0-2-6m144 19l-1 5 13 2 0-6m-165 51l-8 1 1-1 10-3m-24 10l5-5 2 0 6-1-3 4"/>
<path fill="#ff1800" d="M474 71l1 6 1-6m23 0l-1 6 2 0m144 13l0 6 12 1 0-4-10-3m36 6l0 3 12 2 0-4m-210 51l5-5 2-1 6 0-3 3m3-3l-6 0 8-2"/>
<path fill="#ff0800" d="M477 65l1 6 0-6m-4 0l0 2 0 4 2 0 0-6m155 17l0 4 13 4 0-6m38 6l0 6 12 1 0-5m-205 51l0-1 2 0m0 0l-2 0 5-4 7-2 3 0-5 4m-10 2l-8 1 3-2 10-3m-21 7l-8 2 1-1 9-3"/>
<path fill="#f70000" d="M477 59l-1 4 1 2 1 0 0-6m-4 0l0 6 2 0 0-2 0-4m155 18l0 5 13 2 0-5m38 5l0 6 12 2 1-6m-201 52l2-2 5 0m-17 5l4-4 8-1-2 2m2-2l-8 1 1-1 10-3m-33 13l5-5 8-2 0-1-4 5"/>
<path fill="#e70000" d="M477 55l0 4 1 0m-3-6l-1 6 2 0m156 12l-1 6 13 2 0-5-6-2m44 11l0 1 13 2 0-1m-206 51l5-5 8 0-3 2m-28 8l0-1 8-1"/>
<path fill="#d70000" d="M632 70l0 1 6 1"/>
<path fill="#c70000" d="M633 127l-1-3 12 2 2 2"/>
<path fill="#b70000" d="M607 50l0 2 12 5 1-5m12 72l-4-4 13 2 3 4"/>
<path fill="#a70000" d="M607 44l0 6 13 2 0-3-9-4m17 75l-3-4 6 1 7 0 3 5"/>
<path fill="#970000" d="M596 37l11 6 0-4m0 4l0 1 4 1"/>
<path fill="#870000" d="M595 31l-1 5 2 1 11 2 1-6m9 75l-8 2 12 2 9-3m-29 4l-8 3 12 2 8-3"/>
</g>
<path d="M561.7 392l13.1-3.3M580 385.4l-12.7 7.9M554.8 389l13 2.2M569.7 391l-12.9-1M572.9 394.3l14.2-10.8M590.2 381.1l-13.7 13.3M567.3 393.3l-12.5-5.5M558.5 390l14.4 4.3M576.5 394.4l-14-2.5M574.2 396.4l14.4-5.2M599.8 355.8l9-33.7M610.4 341.3l-11.1 33.2M610 318.5l-8 33M601.8 368.3l10.4-34.4M560.2 388.4l14 8M600.1 395.7l14.1-22.2M617 311.8l-6.6 29.5M612.2 333.9l5.5-25.5M615.8 378.1l-13.2 20.4M498.2 342l-4.8-6.9-3.6-5.5M493.6 331.3l8.6 8.2M506.7 342.6l-8.6-9.2M500.7 336.8l-7.8-7.5M491.7 328.7l7.8 7.3M633.9 371.5l-12.9 26.3M486.2 325.6l7.4 5.7M489.8 329.6l-2.6-4.4M498.1 333.4l-7.5-6.6M484.9 323.7l6.8 5M492.9 329.3l-6.8-5.3M490.6 326.8l-6.5-4.5M558.8 350.1l-7.4-12.9M553.9 336.7l8.1 13M590.5 326.2l2.8 4.4" stroke="#000" stroke-width="1.8" stroke-linecap="round" stroke-linejoin="round" fill="none"/>
<g fill-opacity="0.7" shape-rendering="crispEdges">
<path fill="#000097" d="M579 396l-3-3 12 3 4 4"/>
<path fill="#0000a7" d="M576 393l-4-4 5 2 7 1 4 4"/>
<path fill="#0000b7" d="M572 389l-1 0 6 2m-18-6l-2-2 12 2 2 4"/>
<path fill="#0000c7" d="M557 383l-2-5 12 2 2 5"/>
<path fill="#0000d7" d="M555 378l-1-2 13 3 0 1"/>
<path fill="#0008ff" d="M642 356l0 4 12 3 1-5m-56 8l0-1 12 2 0 1"/>
<path fill="#0018ff" d="M639 350l4 1 0-1m0 1l-1 5 13 2 0-5m-56 12l-2-5 13 2 1 5"/>
<path fill="#0028ff" d="M631 342l-1 5 9 3 4 0 0-6m-46 16l0-2 12 2 1 2"/>
<path fill="#0038ff" d="M631 337l0 5 12 2 1-4"/>
<path fill="#0048ff" d="M619 329l0 5 8 2 4 1 1-6m-127 2l-1-1 13 2m65 14l-1-5 13 2 1 5"/>
<path fill="#0058ff" d="M619 323l0 6 13 2 0-5-6-2m-122 8l-2-5 13 2 2 5m64 9l-1-4 13 2 1 4"/>
<path fill="#0068ff" d="M620 322l-1 1 7 1m-124 3l-1-4 2-1 11 1 1 6"/>
<path fill="#0078ff" d="M503 322l10-1 1 2m39 5l-1-4 12 1 1 5m38 4l-1-3 13 2 1 3"/>
<path fill="#0087ff" d="M552 324l-1-4 12 1 1 4m38 6l-1-5 13 2 1 5"/>
<path fill="#0097ff" d="M601 326l13 1 0 1m-13-2l-1-5 13 1 1 5"/>
<path fill="#00a7ff" d="M600 321l-1-4 13 2 1 3m-262-2l2 5 8-3-2-5"/>
<path fill="#00b7ff" d="M348 314l3 6 8-3-3-6m28 10l-8 3 1-1 8-3m-9 4l-8 3 1-1 8-3"/>
<path fill="#00c7ff" d="M354 307l-8 3 2 4 8-3m21 12l3-5 9-3-4 5m-16 6l3-5 8-3-3 5"/>
<path fill="#00d7ff" d="M380 318l2-3 8-3-1 3m-17 6l2-3 8-3-2 3"/>
<path fill="#87ff78" d="M389 265l-8 3 1-1 8-3"/>
<path fill="#97ff68" d="M594 243l-1-3 12 2 1 2m-224 23l3-5 8-3-3 5"/>
<path fill="#a7ff58" d="M593 240l-2-5 13 1 1 6m-220 20l2-5 8-3-2 5"/>
<path fill="#b7ff48" d="M591 235l-1-6 13 2 1 5m-308-3l1 3 8-4-1-2m100 20l-8 3 2-4 8-3m-19 11l1-1 8-3-1 1"/>
<path fill="#c7ff38" d="M590 229l0-1 12 1 1 2m-307-4l0 6 8-3 0-6m94 25l3-6 8-3-3 6"/>
<path fill="#d7ff28" d="M303 220l-8 3 1 4 8-3m130 7l-8 2 2-4 9-3m-36 17l1-2 8-3-1 2"/>
<path fill="#e7ff18" d="M465 217l-8 0 1-1 10-3m-40 16l3-5 9-3-3 5"/>
<path fill="#f7ff08" d="M548 162l3 5 0-4m-57 45l-5-3 9-1m-40 12l3-5 10-3-3 5m-19 5l-8 2 2-4 9-3m-21 11l2-2 8-2-1 1"/>
<path fill="#fff700" d="M544 156l0 2 4 4 3 1 0-6m-62 48l-3-3 1-2 11-1 2 2-2 3m-37 7l2-4 8 1m-28 8l3-5 9-3-3 5"/>
<path fill="#ffe700" d="M545 151l-1 5 7 1 0-2-3-4m-61 49l4-5 2 0 5 4m-52 12l1-2 8-2 0 1"/>
<path fill="#ffd700" d="M545 147l0 4 3 0m-4-6l1 2 0-2m-54 50l1-1 1 1"/>
<path fill="#ffc700" d="M540 138l4 7 1 0 0-6m32 51l0-1 6 1"/>
<path fill="#ffb700" d="M539 133l0 3 1 2 5 1 0-4-1-2m33 56l-2-5 14 2 1 4-7 0"/>
<path fill="#ffa700" d="M539 127l0 6 5 0-3-6m34 57l-2-5 14 2 2 5m-28-6l-1-2 12 1"/>
<path fill="#ff9700" d="M539 125l0 2 2 0m-30 48l-4-3 9-1m57 8l13 0 1 2m-27-3l-2-5 13 1 2 5-1 0"/>
<path fill="#ff8700" d="M471 111l1 6 1-6m34 61l-4-4 11-1 3 3-1 1m42 2l-1-2 11-2 1 0 2 5m53 7l-2-5 13 2 1 5-9-1"/>
<path fill="#ff7800" d="M471 106l0 1 0 4 2 0 0-5 0-1m30 63l6-5 5 4m108 9l-2-5 13 2 2 5"/>
<path fill="#ff6800" d="M471 100l0 6 2-1-1-5m148 71l12 1 1 1m-185 3l-8 2 1-2 9-3"/>
<path fill="#ff5800" d="M472 95l-1 5 1 0m-31 76l4-5 8-3-3 5"/>
<path fill="#ff4800" d="M694 115l0 1 12 3 0-3m-261 55l1-1 8-3-1 1"/>
<path fill="#ff3800" d="M694 109l0 6 12 1 0-5"/>
<path fill="#ff2800" d="M694 103l0 6 12 2 1-6"/>
<path fill="#ff1800" d="M496 71l2 6 1-6m147 19l10 3 0-1m38 9l0 2 13 2 0-1m-13-7l0 4 13 3 0-5"/>
<path fill="#ff0800" d="M495 65l1 6 3 0 0-1-1-4m146 18l0 6 2 0 10 2 1-6m37 6l0 5 13 2 0-5m-242 53l-8 2 9-3"/>
<path fill="#f70000" d="M476 59l0 4 1-4m-4 0l1 6 0-6m21 1l0 5 3 1-1-6m147 19l0 5 13 2 0-6m38 6l-1 6 13 2 0-6m-219 49l-9 1 10-2m-32 13l5-5 9-3-5 5"/>
<path fill="#e70000" d="M475 53l1 6 1 0 0-4 0-2m-5 1l0 1 1 4 1 0 1-6m21 1l-1 6 2 0m141 12l6 2 0-1m0 1l0 5 13 1 0-3m38 8l0 1 12 2m-228 50l6-4 6-2 3-1-5 5m-27 8l1-1 8-3 0 1"/>
<path fill="#d70000" d="M475 48l0 3 0 2 2 0-1-5m-3 0l-1 6 3-1 0-2-1-3m158 17l0 5 6 2 6 1 0-6m-159 67l1-1 5-1"/>
<path fill="#c70000" d="M475 43l0 5 1 0m-3-6l0 6 1 0 0-6m148 16l10 4 0-2m0 2l0 3 12 2 1-1m-153 61l-8 2 3-2 9-3"/>
<path fill="#b70000" d="M473 39l0 3 1 0m146 10l-1 5 3 1 10 2 0-6m-145 73l6-5 10-3-7 5"/>
<path fill="#a70000" d="M611 45l9 4 0-3m0 3l0 3 12 2 0-1m-139 69l3-3 9-1-2 1"/>
<path fill="#970000" d="M607 39l0 4 4 2 9 1 0-5"/>
<path fill="#870000" d="M608 33l-1 6 13 2 0-1 0-5"/>
</g>
<path d="M614.2 373.5l11.3-34.8M516.7 354.5l-10-11.9M626.3 343.6l-10.5 34.5M509.8 347.1l-9.1-10.3M499.5 336l9 9.9M625.2 386.4l12.4-33.1M519.8 343.7l8.1 12.4M515.3 339.2l7.4 11.3M524.5 352l-7.5-11.6M514.6 336.9l8.5 11.4M527.7 350.7l-8.3-12M525.1 347.8l-6.5-10.9M564.6 344.7l-6.4-11.6M389.8 327.3l1.8-0.1 1.6-0.3M388 327.3l1.8 0M386.2 327.2l1.8 0.1M387.1 328.1l-1.4-0.2M388.5 328.1l-1.4 0M389.8 328.1l-1.3 0M390.8 327.9l-1 0.2M391.4 327.8l-0.6 0.1M390.6 328.1l0.8-0.2M387.9 328.7l1.5-0.3 1.2-0.3M386.1 328.9l1.8-0.2M384.3 328.9l1.8 0M382.5 328.8l1.8 0.1M385 329.7l-1.3 0.1M386.1 329.6l-1.1 0.1M386.9 329.5l-0.8 0.1M385.4 329.9l1-0.2" stroke="#000" stroke-width="1.8" stroke-linecap="round" stroke-linejoin="round" fill="none"/>
<g fill-opacity="0.7" shape-rendering="crispEdges">
<path fill="#0008ff" d="M655 358l-1 5 13 2 0-5m-56 8l0-1 13 2 0 1"/>
<path fill="#0018ff" d="M643 350l0 1 12 2 0-1m0 1l0 5 12 2 1-4m-57 11l-1-5 12 2 2 5"/>
<path fill="#0028ff" d="M643 344l0 6 12 2 1-6m-59 12l-1-3 13 2 0 3m1 2l-1-2 13 2 0 2"/>
<path fill="#0038ff" d="M631 337l13 3 0-2m0 2l-1 4 13 2 0-3m-60 12l-1-5 12 2 2 5"/>
<path fill="#0048ff" d="M632 331l-1 6 13 1 0-5m-24 21l-1-6 12 2 1 6"/>
<path fill="#0058ff" d="M626 324l6 2 0-1m0 1l0 5 12 2 1-4m-128 5l-2-5 14 1 1 4-11 0m61 5l0-1 12 1 1 2m26 7l-1-3 12 2 1 3"/>
<path fill="#0068ff" d="M620 317l0 5 6 2 6 1 1-6m-118 10l-1-6 13 2 2 5m51 8l-2-6 13 2 1 5"/>
<path fill="#0078ff" d="M620 312l0 5 13 2 0-6m-119 10l-1-2 13-1 1 5m38 5l-1-5 13 2 1 4m0 1l0-1 13 2 0 1"/>
<path fill="#0087ff" d="M621 310l-1 2 13 1m-82 7l-1-2 13 2 0 1m1 4l-1-4 13 2 1 4m-196 2l-8 3 2-1 8-3"/>
<path fill="#0097ff" d="M550 318l-1-5 13 2 1 5m-188 11l9-4 8-3-9 4"/>
<path fill="#00a7ff" d="M549 313l0-1 12 1 1 2m-178 12l2-1 8-3-2 1m-50-1l3 5 8-3-2-5m35 6l-8 3 3-4 8-3"/>
<path fill="#00b7ff" d="M340 317l2 6 9-3-3-6m33 11l3-4 8-3-3 4"/>
<path fill="#00c7ff" d="M346 310l-8 4 2 3 8-3"/>
<path fill="#00d7ff" d="M366 321l-8 3 2-3 8-2"/>
<path fill="#00e7ff" d="M360 321l3-5 8-3-3 6"/>
<path fill="#00f7ff" d="M363 316l1-3 8-3-1 3"/>
<path fill="#97ff68" d="M606 244l-1-2 13 1 1 2"/>
<path fill="#a7ff58" d="M605 242l-1-6 13 2 1 5"/>
<path fill="#b7ff48" d="M604 236l-1-5 12 2 2 5"/>
<path fill="#c7ff38" d="M603 231l-1-2 13 1 0 3"/>
<path fill="#d7ff28" d="M426 233l-8 3 2-4 8-3"/>
<path fill="#e7ff18" d="M420 232l3-5 8-3-3 5"/>
<path fill="#f7ff08" d="M441 220l-8 2 1-3 9-3m-20 11l2-3 8-2-2 2"/>
<path fill="#fff700" d="M486 202l-2-1 3-1m-53 19l3-5 9-3-3 5"/>
<path fill="#ffe700" d="M484 201l-6-3 13-3-4 5m-32 7l-8 2 2-3 9-3m-21 11l2-3 8-2-1 2"/>
<path fill="#ffd700" d="M478 198l4-5 5-1 5 2-1 1m-42 11l3-5 9-3-3 5"/>
<path fill="#ffc700" d="M482 193l2-3 3 2m-35 9l1-3 8-1 0 1"/>
<path fill="#ffb700" d="M544 133l1 2 0-2"/>
<path fill="#ffa700" d="M541 127l3 6 1 0 1-5"/>
<path fill="#ff9700" d="M539 121l0 4 2 2 5 1 0-5-1-1m-1 52l-1-2 7 0m23 7l-2-5 14 2 1 3"/>
<path fill="#ff8700" d="M539 115l0 6 6 1-3-6m1 56l-2-5 14 1 2 3-7 1m-33-2l-3-3 9-1m48 8l-2-5 14 2 2 5m-28-5l-2-3 13 1m68 14l-1-5 12 2 2 4"/>
<path fill="#ff7800" d="M540 112l-1 3 3 1m-1 51l-1-1 10-3 3 0 2 5m-41-1l-5-4 11-1 3 4m46 3l13-1 1 3m-28-3l-2-5 14 1 2 5-1 0m-66-1l-7-3 14-2-6 5m132 10l-2-5 12 2 2 5"/>
<path fill="#ff6800" d="M550 163l3-1 0 1m-44 0l0-1 5-4 2 0 4 4m33 1l0-1 12-2 2 4m-72 1l0-1 4-4 5-1 5 3 0 1m124 10l-1-1 13 1 0 2m-25-4l-2-5 13 2 1 4m-192 6l-8 3 1-2 8-3"/>
<path fill="#ff5800" d="M514 158l1-1 1 1m-17 2l2-2 3 1m114 7l-2-5 13 2 2 5m-198 11l4-5 8-3-4 5"/>
<path fill="#ff4800" d="M706 116l0 3 13 2 0-3m-103 43l12 1 1 1m-175 4l-8 3 3-4 8-3m-20 11l1-2 8-2-1 1"/>
<path fill="#ff3800" d="M706 111l0 5 13 2 0-5m-270 53l3-4 9-3-4 4"/>
<path fill="#ff2800" d="M707 105l-1 6 13 2 0-6"/>
<path fill="#ff1800" d="M656 92l0 1 13 3 0-2m38 10l0 1 12 2 0-1"/>
<path fill="#ff0800" d="M498 66l1 4 0-4m158 20l-1 6 13 2 0-6"/>
<path fill="#f70000" d="M494 60l1 5 0-5m2 0l1 6 1 0 0-6m158 20l0 6 12 2 0-6"/>
<path fill="#e70000" d="M494 54l0 3 0 3 1 0 1-6m0 0l1 6 2 0 0-1-1-5m146 19l0 1 13 3 0-2m0 2l0 3 12 2 0-2m26 0l0 5 12 3 0-6m-228 57l-8 1 5-4 9-2-6 4"/>
<path fill="#d70000" d="M476 48l1 5 0-5m17 0l0 6 2 0m-22-6l1 3 0-3m-4 0l1 6 1-6m23 0l0 6 2 0-1-6m147 19l0 6 13 2 0-6m38 8l0 3 12 2 0-2m-216 52l-5 1 4-4 10-3-6 5m-18 5l2-1 8-2-1 1"/>
<path fill="#c70000" d="M475 42l0 1 1 5 1 0 0-2 0-4m-3 0l0 6 1 0 0-5 0-1m-4 0l0 1 0 5 2 0 0-6m23 1l0 5 1 0m135 12l0 2 13 4 0-5m0 5l-1 1 13 2m-167 60l2-2 8-1"/>
<path fill="#b70000" d="M476 36l-1 6 2 0m-4-6l0 3 1 3 1 0-1-6m-3 0l0 6 2 0 0-3 0-3m159 18l0 6 13 1 0-4-11-3"/>
<path fill="#a70000" d="M474 31l-1 5 1 0m-3-5l0 5 2 0-1-5m148 15l0 3 12 4 0-5m0 5l0 1 2 0m-129 64l-9 1 4-2 10-2"/>
<path fill="#970000" d="M472 27l-1 4 1 0m148 10l0 5 12 2 0-3-11-4m-121 76l7-4 10-3-7 5"/>
<path fill="#870000" d="M620 40l0 1 1 0m-114 72l2-2 8-1"/>
</g>
<path d="M585.7 393.7l-14.4 1.9-13.8-9.8M584.8 399.9l15.3-4.2M547.3 374.1l12.9 14.3M570 390.8l14.8 9.1M556.4 375.5l13.6 15.3M513.4 333.7l6.4 10M509.3 330.4l6 8.8M517 340.4l-5.9-9.2M507.5 328.3l7.1 8.6M508.4 326.2l5 7.5M504.8 323.8l4.5 6.6M511.1 331.2l-4.5-6.8M501.8 322.1l5.7 6.2M512.7 329.5l-5.2-6.8M504.7 320.7l3.7 5.5M501.4 319.1l3.4 4.7M506.6 324.4l-3.3-4.9M513.7 328.6l-3.5-6.1M507.8 319.9l4.9 5.8M511.8 324.3l-4.5-5.3M510.2 322.5l-2.3-4.3M558.2 333.1l-4.4-8M556.4 327.2l5.7 9.2M583.5 345.3l9 15M604.3 333.5l-2.3-5 0.1-0.8 2.3 3.4" stroke="#000" stroke-width="1.8" stroke-linecap="round" stroke-linejoin="round" fill="none"/>
<g fill-opacity="0.7" shape-rendering="crispEdges">
<path fill="#000087" d="M604 402l0 1-10-3"/>
<path fill="#000097" d="M592 400l-4-4 11 2 5 4-10-2"/>
<path fill="#0000a7" d="M588 396l-4-4 12 3 3 3m-16-6l1 0-7-1"/>
<path fill="#0000b7" d="M571 389l-2-4 13 2 1 5-6-1"/>
<path fill="#0000c7" d="M569 385l-2-5 11 2 2 0 2 5"/>
<path fill="#0000d7" d="M567 380l0-1 11 3"/>
<path fill="#0008ff" d="M667 360l0 5 12 2 1-5"/>
<path fill="#0018ff" d="M668 356l-1 4 13 2 0-4"/>
<path fill="#0028ff" d="M609 360l0-3 12 2 1 3"/>
<path fill="#0038ff" d="M644 338l0 2 12 3 1-3m-48 17l-2-5 13 2 1 5"/>
<path fill="#0048ff" d="M644 333l0 5 13 2 0-5m-62 15l-1-5 12 2 1 5"/>
<path fill="#0058ff" d="M632 325l0 1 13 3 0-2m0 2l-1 4 13 2 0-3m-127 2l-1-4 12 2 1 3m52 10l-1-4 12 2 1 4"/>
<path fill="#0068ff" d="M633 319l-1 6 13 2 0-6m-116 9l-2-5 13 2 0 1 1 4"/>
<path fill="#0078ff" d="M633 313l0 6 12 2 1-5-11-2m-108 11l-1-5 1 0 12 2 1 5m-27-6l-1-3 14 2m52 11l-1-4 13 2 1 4"/>
<path fill="#0087ff" d="M527 320l11 0 1 2m-27-4l-1-5 13 2 2 5m37 1l0-1 13 2 0 1m1 4l-1-4 13 1 1 5"/>
<path fill="#0097ff" d="M511 313l-2-4 2 0 12 1 1 5m39 5l-1-5 13 2 1 5"/>
<path fill="#00a7ff" d="M511 309l11-3 1 4m26 2l-1-4 13 2 0 3m1 2l-1-2 13 1 1 3m-241 9l2 5 9-3-3-5"/>
<path fill="#00b7ff" d="M548 308l-1-3 12 0 2 5m-229 10l2 6 8-3-2-6m52 1l-8 3 1-1 8-3"/>
<path fill="#00c7ff" d="M338 314l-8 3 2 3 8-3m45 3l4-5 8-3-4 5"/>
<path fill="#00d7ff" d="M389 315l1-3 8-3-1 3m-39 12l-8 3 1-3 9-3"/>
<path fill="#00e7ff" d="M351 324l4-5 8-3-3 5"/>
<path fill="#00f7ff" d="M355 319l1-3 8-3-1 3"/>
<path fill="#97ff68" d="M619 245l-1-2 13 2 0 2"/>
<path fill="#a7ff58" d="M618 243l-1-5 13 2 1 5"/>
<path fill="#b7ff48" d="M617 238l-2-5 13 2 2 5"/>
<path fill="#c7ff38" d="M615 233l0-3 12 2 1 3m-26-6l-1-3 13 2 1 2"/>
<path fill="#d7ff28" d="M601 226l-1-5 13 2 1 5"/>
<path fill="#e7ff18" d="M600 221l-2-5 13 2 2 5"/>
<path fill="#f7ff08" d="M598 216l0-1 13 1 0 2m-178 4l-8 2 1-2 8-3"/>
<path fill="#fff700" d="M426 222l3-5 8-3-3 5"/>
<path fill="#ffe700" d="M429 217l2-4 8-2-2 3"/>
<path fill="#ffc700" d="M549 140l3 4 0-4m-91 57l-8 1 2-3 9-2"/>
<path fill="#ffb700" d="M545 133l0 2 4 5 3 0 0-6m-97 61l4-5 8-2 1 0-4 5"/>
<path fill="#ffa700" d="M546 128l-1 5 7 1 0-2-2-4m-91 62l1-1 7-1"/>
<path fill="#ff9700" d="M546 123l0 5 4 0m36 51l-1-3 13 2 1 1"/>
<path fill="#ff8700" d="M585 176l-2-5 13 2 2 5"/>
<path fill="#ff7800" d="M540 166l-2-4 12 1m-27 3l-3-4 11 0m52 9l-1-3 12 1 2 4m-27-4l-2-5 14 2 1 2"/>
<path fill="#ff6800" d="M538 162l-2-3 4-1 11 0 2 4-3 1m-30-1l-4-4 19 0 1 1-5 3m-22 0l-5-3 10-1m53 6l-2-4 3 0 11 1 2 5m-86-2l-8-1 0-1 12-2m133 12l-1-4 12 2 2 3"/>
<path fill="#ff5800" d="M540 158l9-3 2 3m-35 0l-1-1 6-3 10-1 4 5m-31 1l-3-1 3-3 7-1 4 3-1 1m54 2l10-1 1 2m-92 1l4-5 5-1 5 2-2 2m132 8l-2-5 12 2 2 5"/>
<path fill="#ff4800" d="M521 154l7-5 3 4m-27 2l3-3 4 2m-20 3l2-1 3 0m133 7l-1-1 13 1 0 2m-25-4l-2-4 13 1 1 4"/>
<path fill="#ff3800" d="M614 157l-2-5 12 2 3 4m-166 1l-9 3 1-1 8-3"/>
<path fill="#ff2800" d="M612 152l12 1 0 1m-171 7l4-5 9-3-5 5"/>
<path fill="#ff1800" d="M707 99l0 5 12 2 0-5m-262 55l2-2 8-2-1 1"/>
<path fill="#ff0800" d="M707 94l0 5 12 2 1-5"/>
<path fill="#f70000" d="M707 88l0 6 13 2 0-6-5-1"/>
<path fill="#e70000" d="M498 54l1 5 0-5m158 21l0 2 12 3 1-3m-199 63l-8 3 4-4 9-3"/>
<path fill="#d70000" d="M497 48l1 6 1 0 1-6m157 21l0 6 13 2 0-5m25 3l0 2 12 3 1-3m-171 46l-5-2 13-1m-59 13l-8 2 3-3 9-3m-23 10l3-2 8-2-2 1"/>
<path fill="#c70000" d="M496 43l1 5 3 0 0-1-1-4m196 26l0 6 13 2 0-6m-176 50l-3-2 5-2 12 0 4 2-5 1m-64 12l3-3 8-2-2 2"/>
<path fill="#b70000" d="M474 36l1 6 1-6m-6 0l1 6 0-6m25 1l0 6 3 0-1-6m136 17l11 3 0-1m-111 61l7-3 5 3m-5-3l-1-1 4 0"/>
<path fill="#a70000" d="M474 30l0 1 0 5 2 0 0-1-1-5m-3 1l1 5 1-5 0-1m-5 1l1 5 1 0 0-5m26 1l-1 5 2 0m134 11l0 5 2 1 11 2 0-6m-105 63l-7-2 2-1 18 0 1 0-10 3m-48 6l-8 2 2-1 10-3"/>
<path fill="#970000" d="M474 25l0 5 1 0 0-5m-3 0l0 2 0 4 2-1-1-5m-3 0l-1 5 0 1 2 0 1-4-1-2m150 16l11 4 1-3m-1 3l0 3 13 2 0-1m-110 61l11-3 7 3m-63 10l7-4 10-3-7 4"/>
<path fill="#870000" d="M474 23l0 2 1 0m-3-6l0 6 1 0m-3-6l0 6 1 0m149 10l0 5 1 1 12 1 0-5m-136 79l4-3 8-2-2 2"/>
</g>
<path d="M625.5 338.7l6.4-26.9M632.2 314l-5.9 29.6M631.9 311.8l0.3 2.2M643.5 335.2l-9.6 36.3M650.1 354.3l-11.6 34M518.8 333.9l7.8 11M519.4 338.7l-6.7-9.2M525 342.3l-7.4-10.4M518.6 336.9l-4.9-8.3M660.2 351.7l-11.2 35.3M649.9 380.4l11.1-36.4M512.7 325.7l6.1 8.2M517.6 331.9l-5.8-7.6M526.1 333.4l8.3 11.4M519.5 325.1l6.6 8.3M552.8 321.6l3.6 5.6M551.5 320.6l-0.4-1.2 1.7 2.2M562.9 326.7l-2.4-4.7M562 323.3l3.9 6.1M560.5 322l-0.3-1.1 1.8 2.4M595.8 356.4l-7.5-13.9M383.9 330.2l1.5-0.3M380.3 330.6l1.9-0.1 1.7-0.3M378.5 330.5l1.8 0.1M376.8 330.4l1.7 0.1M377.5 331.3l-1.4-0.3M378.9 331.5l-1.4-0.2M380.2 331.4l-1.3 0.1M381.4 331.3l-1.2 0.1M382.2 331.2l-0.8 0.1M382.6 331.1l-0.4 0.1M382.5 331.2l0.1-0.1M382 331.3l0.5-0.1M381 331.6l1-0.3M379.6 331.9l1.4-0.3M377.9 332.2l1.7-0.3M376 332.3l1.9-0.1M374.1 332.3l1.9 0M375.3 333.3l-1.4 0M377.7 333l-0.4 0M377.2 333.2l0.5-0.2 0 0M376.2 333.4l1-0.2" stroke="#000" stroke-width="1.8" stroke-linecap="round" stroke-linejoin="round" fill="none"/>
<g fill-opacity="0.7" shape-rendering="crispEdges">
<path fill="#0000a7" d="M584 392l-1 0 13 2 0 1"/>
<path fill="#0000b7" d="M583 392l-1-5 12 2 2 5"/>
<path fill="#0000c7" d="M582 387l-2-5 12 3 2 4"/>
<path fill="#0000d7" d="M567 379l-1-4 12 2 2 5-2 0"/>
<path fill="#0000e7" d="M566 375l-2-5 12 2 2 5"/>
<path fill="#0000f7" d="M564 370l-1-4 13 3 0 3"/>
<path fill="#0008ff" d="M624 370l0-1 12 2 1 1"/>
<path fill="#0018ff" d="M668 354l0 2 12 2 1-2m-57 13l-2-5 13 2 1 5"/>
<path fill="#0028ff" d="M669 348l-1 6 13 2 0-6m-59 14l0-2 12 2 1 2"/>
<path fill="#0038ff" d="M669 346l0 2 12 2 0-2"/>
<path fill="#0048ff" d="M607 352l-1-5 13 1 1 6"/>
<path fill="#0058ff" d="M645 327l0 2 12 3 1-3m-65 12l-1-2 13 2 0 2m1 4l-1-4 13 2 1 3"/>
<path fill="#0068ff" d="M645 321l0 6 13 2 0-6m-118 5l0-1 10 1m42 11l-1-5 13 2 1 5"/>
<path fill="#0078ff" d="M635 314l11 2 0-1m0 1l-1 5 13 2 0-4m-118 8l-1-5 13 2 1 4-3 0m41 6l0-1 12 1 1 2"/>
<path fill="#0087ff" d="M634 308l-1 5 2 1 11 1 0-6m-120 11l-2-5 13 2 1 3-11 0m12 2l-1-2 13 0 1 4m-179 8l-8 3 2-1 8-3"/>
<path fill="#0097ff" d="M634 302l0 6 12 1 1-5m-123 11l-1-5 13 1 0 2 1 4m-28-8l0-1 2 1m115 20l-1-5 13 2 1 5m-272 3l9-4 8-3-9 4"/>
<path fill="#00a7ff" d="M634 299l0 3 13 2 0-2m-124 8l-1-4 7 0 6 0 1 5m-27-3l-2-5 14 2 1 1-11 3m50 4l0-3 12 2 1 2m51 10l-1-4 13 2 1 4m-262 4l2-1 8-3-2 1m-58 2l2 5 8-3-2-5"/>
<path fill="#00b7ff" d="M529 306l5-1 1 1m-28-3l-2-5 15 2 1 5m40 5l-2-5 2 0 11 2 1 5m-250 11l3 6 8-3-2-6"/>
<path fill="#00c7ff" d="M505 298l0-1 9-3 4 1 2 5m41 5l11 1 0 1m-242 10l-8 3 1 3 9-3"/>
<path fill="#00d7ff" d="M514 294l4-1 0 2m-120 14l-8 3 2-2 8-3"/>
<path fill="#00e7ff" d="M392 310l3-5 8-3-3 5"/>
<path fill="#00f7ff" d="M395 305l2-3 8-3-2 3"/>
<path fill="#97ff68" d="M631 247l0-2 13 2 0 2"/>
<path fill="#a7ff58" d="M631 245l-1-5 12 2 2 5"/>
<path fill="#b7ff48" d="M630 240l-2-5 13 2 1 5"/>
<path fill="#c7ff38" d="M628 235l-1-3 13 1 1 4m-26-7l-1-2 13 2 0 2"/>
<path fill="#d7ff28" d="M614 228l-1-5 12 2 2 5"/>
<path fill="#e7ff18" d="M613 223l-2-5 13 2 1 5"/>
<path fill="#f7ff08" d="M611 218l0-2 12 1 1 3m-26-5l-1-4 13 2 1 3"/>
<path fill="#fff700" d="M597 211l-2-5 13 2 2 5"/>
<path fill="#ffe700" d="M595 206l-1-4 13 1 1 5m-169 3l-8 2 1-2 8-2"/>
<path fill="#ffd700" d="M432 211l3-5 8-3-3 6"/>
<path fill="#ffc700" d="M435 206l2-4 8-2-2 3"/>
<path fill="#ff7800" d="M582 168l-1-2 13 2 0 1"/>
<path fill="#ff6800" d="M553 162l-2-4 14 2m-29-1l-1-1 5 0m41 8l-2-5 13 2 2 5"/>
<path fill="#ff5800" d="M551 158l-2-3 4-1 10 1 2 5m-30-2l-4-5 17 1 1 1-9 3m39 3l-1-2 12 0 2 4m-27-3l-2-5 13 1 2 3-10 1m-67-2l-5-2 8-1"/>
<path fill="#ff4800" d="M553 154l8-2 2 3m-32-2l-3-4 17 0 3 5m15 1l-2-3 10-1 3 1 2 4m-80 0l-3 0 3-4 8-1 3 1-3 3"/>
<path fill="#ff3800" d="M528 149l9-4 5 0 3 4m26 2l3 0 0 1m-78 0l3-3 5 2"/>
<path fill="#ff2800" d="M537 145l4-2 1 2"/>
<path fill="#ff1800" d="M719 101l0 5 13 2 0-5m-265 49l-8 2 2-3 9-3"/>
<path fill="#ff0800" d="M720 96l-1 5 13 2 0-6m-271 54l4-4 8-2-3 3"/>
<path fill="#f70000" d="M720 90l0 6 12 1 0-5"/>
<path fill="#e70000" d="M670 77l-1 3 13 3 0-5"/>
<path fill="#d70000" d="M657 69l13 3 0-1m0 1l0 5 12 1 0-3m26 2l-1 3 13 2 0-4m-242 57l-8 2 2-3 9-2"/>
<path fill="#c70000" d="M499 43l1 4 0-4m157 20l0 6 13 2 0-6m38 6l0 6 12 1 0-4m-191 45l-5-1 10-1m-62 17l4-3 8-2-3 3"/>
<path fill="#b70000" d="M495 37l1 6 0-6m2 0l1 6 1 0 0-6m157 24l0 2 13 2 0-1m-146 54l-3 0 5-3 14-2 1 1-7 3"/>
<path fill="#a70000" d="M475 30l1 5 0-5m19 1l0 4 0 2 1 0 1-5-1-1m1 0l0 1 1 5 2 0 0-1-1-5m27 84l7-4 7 2"/>
<path fill="#970000" d="M475 25l0 5 1 0 0-4 0-1m-3 0l1 5 0-5m21 0l0 6 1 0m1-6l0 6 2 0-1-6m135 17l-1 3 13 4 0-5"/>
<path fill="#870000" d="M475 19l-1 4 1 2 1 0 1-6m-4 0l-1 0 1 6 1 0 0-2m23-3l0 5 1 0m135 12l0 5 12 2 0-4m-115 67l-8 3 12 1 8-3m-33 3l-8 2 13-1 8-2"/>
</g>
<path d="M602.6 398.5l-14 2.5-13.5-10M642.2 374.7l10.6-36.4M667.5 359.8l-11.9 33.7M661.7 396.9l12.9-32.7M514.5 319.4l5 5.7M544 344.7l-6.6-11.4M510.8 316l3.7 3.4M539.8 331l7.3 11.1M537.4 333.3l-4.8-8.3M534.3 323.3l5.5 7.7M589.8 341l8 13.6M571.3 326.7l-1.9-3.9M610.2 365.3l-8.4-15.5M569.4 322.8l0.3-0.1 2.4 3.6M588.3 342.5l-5.3-10.2M605.8 351.6l9.6 16M584 331.3l5.8 9.7M583 332.3l-3.1-6.2M580.4 325.6l3.6 5.7M579.9 326.1l-0.8-2.3 1.3 1.8M591.6 329.8l-1.7-3.8 0.6 0.2" stroke="#000" stroke-width="1.8" stroke-linecap="round" stroke-linejoin="round" fill="none"/>
<g fill-opacity="0.7" shape-rendering="crispEdges">
<path fill="#000087" d="M604 403l0-1 11 2 2 2"/>
<path fill="#000097" d="M604 402l-5-4 12 2 4 4"/>
<path fill="#0000a7" d="M599 398l-3-3 13 3 2 2"/>
<path fill="#0000f7" d="M664 384l-1-4 12 2 1 4"/>
<path fill="#0008ff" d="M637 372l-1-1 13 2 0 1m14 6l-1-4 12 2 1 4"/>
<path fill="#0018ff" d="M636 371l-1-5 13 2 1 5"/>
<path fill="#0028ff" d="M622 362l-1-3 13 2 0 3m1 2l-1-2 13 2 1 2m-14-4l0-3 12 2 1 3"/>
<path fill="#0038ff" d="M669 342l0 4 12 2 1-4m-61 15l-1-5 12 2 2 5m0 0l-2-5 4 0 9 2 1 5"/>
<path fill="#0048ff" d="M670 336l-1 6 13 2 0-6"/>
<path fill="#0058ff" d="M658 329l-1 3 13 2 0-3m0 3l0 2 12 2 0-1m-77 6l0-2 12 2 1 2"/>
<path fill="#0068ff" d="M658 323l0 6 12 2 1-6m-66 16l-1-5 12 2 1 5"/>
<path fill="#0078ff" d="M658 319l0 4 13 2 0-3m-67 14l-1-2 13 2 0 2"/>
<path fill="#00a7ff" d="M522 306l-1-1 8 1m45 8l-1-2 13 2 1 1m-269 17l2 5 8-3-2-5"/>
<path fill="#00b7ff" d="M521 305l-1-5 13 1 1 4-5 1m44 6l-1-5 13 1 1 6m-271 12l3 6 8-3-3-6"/>
<path fill="#00c7ff" d="M520 300l-2-5 14 1 0 2 1 3m26 4l-1-5 13 1 1 5-11-1m11 2l0-1 13 1 0 1m-263 12l-8 3 1 3 8-3"/>
<path fill="#00d7ff" d="M518 295l0-2 11-2 1 0 2 5m26 4l-1-3 13 0 1 4m-181 11l-8 3 2-2 8-3"/>
<path fill="#00e7ff" d="M384 313l3-5 8-3-3 5"/>
<path fill="#00f7ff" d="M387 308l2-3 8-3-2 3"/>
<path fill="#c7ff38" d="M627 232l0-2 12 2 1 1"/>
<path fill="#d7ff28" d="M627 230l-2-5 13 2 1 5"/>
<path fill="#e7ff18" d="M625 225l-1-5 13 1 1 6"/>
<path fill="#f7ff08" d="M624 220l-1-3 13 2 1 2m-26-5l-1-3 12 2 1 2"/>
<path fill="#fff700" d="M610 213l-2-5 13 1 1 6"/>
<path fill="#ffe700" d="M608 208l-1-5 5 0 7 1 2 5m-27-7l0-1 13 2m-176 10l-8 2 0-1 9-3"/>
<path fill="#ffd700" d="M594 201l-2-5 13 2 2 5m-184 11l3-5 9-3-3 5"/>
<path fill="#ffc700" d="M592 196l-2-5 13 1 2 6m-179 11l3-4 8-3-2 4"/>
<path fill="#ffb700" d="M590 191l0-1 13 0 0 2"/>
<path fill="#ff5800" d="M549 155l-1-1 5 0m25 5l-2-3 14 2 0 1"/>
<path fill="#ff4800" d="M548 154l-3-5 15 1 1 2-8 2m23 2l-2-4 14 1 2 5"/>
<path fill="#ff3800" d="M545 149l-3-4 15 1 3 4m14 2l0-1 12 0 2 2m-60-4l-5-4 14 0"/>
<path fill="#ff2800" d="M542 145l-1-2 8-2 5 0 3 4 0 1m-34-1l-3-3 2-1 16 0 3 2-4 2"/>
<path fill="#ff1800" d="M549 141l4-2 1 2m-32 0l8-5 4 0 4 5"/>
<path fill="#ff0800" d="M530 136l2-1 2 1"/>
<path fill="#e70000" d="M720 84l0 6 12 2 1-6"/>
<path fill="#d70000" d="M670 71l0 1 12 3 0-2m38 9l0 2 13 2 0-2"/>
<path fill="#c70000" d="M670 65l0 6 12 2 1-6m25 4l12 3 0-1m-236 56l-8 2 2-1 9-3"/>
<path fill="#b70000" d="M657 58l0 3 13 3 0-4m0 4l0 1 13 2 0-1m25-1l0 6 12 2 1-6m-243 63l6-5 9-3-6 5"/>
<path fill="#a70000" d="M496 31l1 1 0-1m161 21l-1 6 13 2 0-5m38 8l0 2 13 2 0-2m-237 60l4-4 8-2-3 3"/>
<path fill="#970000" d="M495 25l1 6 1 0 0-6"/>
<path fill="#870000" d="M496 19l-1 5 0 1 2 0 0-5 1-1m24 91l-8 2 12 2 8-3m0 0l-8 3 13 2 8-3"/>
</g>
<path d="M580.7 389.9l14.6 12.3M575.1 391l-12.1-15.6M637.6 353.3l8.1-33M647.8 311.9l-4.3 23.3M645.7 320.3l2.1-8.4M592.5 398.2l-13-15.1M567.7 373.2l13 16.7M657.2 321.3l-7.1 33M652.8 338.3l5.4-24.5-1 7.5M556.4 356.4l11.3 16.8M532.6 325l-3-5.4-1.3-2.9M530.6 318.5l3.7 4.8M528.7 316.4l1.9 2.1M528.3 316.7l0.4-0.3M551.4 337.2l-5.3-9.5M547.8 327.2l6.1 9.5M546.1 327.7l-3.4-6.2M543.7 321.2l4.1 6M542.7 321.5l-1.6-3.1M541.5 318.3l2.2 2.9M553.8 325.1l-2.3-4.5M601.8 349.8l-6.2-12M598.4 339.1l7.4 12.5M595.6 337.8l-4-8M593.3 330.6l5.1 8.5M376.4 333.2l-1.1 0.1M377.3 333l-0.9 0.2M374.8 333.8l1.4-0.4M373.1 334l1.7-0.2M369.3 334.2l1.9 0 1.9-0.2M367.6 334.1l1.7 0.1M367.3 335l-1.2-0.3M370 335.2l-1.3 0-1.4-0.2M371.2 335.1l-1.2 0.1M372.1 335l-0.9 0.1M372.5 334.9l-0.4 0.1M372.5 335l0-0.1M369.6 335.7l1.4-0.3 1-0.3 0.5-0.1M367.9 336l1.7-0.3M366 336.2l1.9-0.2M364.1 336.2l1.9 0M367 337.1l0-0.1" stroke="#000" stroke-width="1.8" stroke-linecap="round" stroke-linejoin="round" fill="none"/>
<g fill-opacity="0.7" shape-rendering="crispEdges">
<path fill="#0000a7" d="M596 395l0-1 12 2 1 2"/>
<path fill="#0000b7" d="M596 394l-2-5 12 2 2 5"/>
<path fill="#0000c7" d="M594 389l-2-4 13 2 1 4m-26-9l12 2 0 1"/>
<path fill="#0000d7" d="M580 382l-2-5 12 2 2 5"/>
<path fill="#0000e7" d="M578 377l-2-5 13 2 1 5"/>
<path fill="#0000f7" d="M576 372l0-3 12 2 1 3"/>
<path fill="#0038ff" d="M682 344l-1 4 13 2 0-4m-49 11l0 1-9-2"/>
<path fill="#0048ff" d="M682 338l0 6 12 2 1-6m-63 16l-1-6 13 2 1 5-9-1"/>
<path fill="#0058ff" d="M670 331l0 3 12 3 1-5m-1 5l0 1 13 2 0-1m-77 6l-1-2 13 2 0 2m1 3l-1-3 13 2 1 3"/>
<path fill="#0068ff" d="M671 325l-1 6 13 1 0-5m-66 16l-1-5 13 2 1 5"/>
<path fill="#0078ff" d="M671 322l0 3 12 2 1-3m-68 14l0-2 12 2 1 2"/>
<path fill="#0087ff" d="M365 335l-8 3 2-1 8-3m-41 11l1 0 8-3-1 0"/>
<path fill="#0097ff" d="M359 337l9-4 8-3-9 4m-46 4l5 7 8-3-5-7"/>
<path fill="#00a7ff" d="M587 315l-1-1 13 1 0 2m51 7l-1-1 13 2 0 1m-294 7l2-1 8-3-2 1m-48 4l-8 3 1 1 8-3"/>
<path fill="#00b7ff" d="M586 314l-1-6 13 2 1 5m50 8l-1-5 13 2 1 5"/>
<path fill="#00c7ff" d="M532 298l0-2 8 1m32 9l-1-5 13 2 1 4m0 1l0-1 12 1 1 2m37 3l-1-2 13 2 1 2m0 3l0-3 12 2 1 3"/>
<path fill="#00d7ff" d="M532 296l-2-5 14 2 1 4-5 0m31 4l-1-4 13 1 1 5m50 8l-1-6 13 2 1 6m-265 2l-8 3 2-2 8-3"/>
<path fill="#00e7ff" d="M530 291l13-2 1 4m89 12l0-1 13 2 0 1m-270 9l3-6 8-2-3 5"/>
<path fill="#00f7ff" d="M379 310l2-2 8-3-2 3"/>
<path fill="#f7ff08" d="M623 217l-1-2 13 1 1 3"/>
<path fill="#fff700" d="M622 215l-1-6 13 2 1 5"/>
<path fill="#ffe700" d="M621 209l-2-5 13 2 2 5m-211 4l-8 3 0-1 8-3"/>
<path fill="#ffd700" d="M619 204l13 1 0 1m-217 11l3-5 8-3-3 5"/>
<path fill="#ffc700" d="M437 202l-8 3 1-1 8-3m-20 11l3-5 8-2-3 4"/>
<path fill="#ffb700" d="M590 190l-1-4 13 1 1 3m-173 14l3-5 8-3-3 5"/>
<path fill="#ffa700" d="M589 186l-2-5 13 2 2 4m-169 12l2-4 8-3-2 4"/>
<path fill="#ff9700" d="M587 181l-1-2 13 0 1 4"/>
<path fill="#ff2800" d="M541 143l-3-2 11 0m-29 1l-2-1 4 0"/>
<path fill="#ff1800" d="M538 141l-4-5 17 1 2 2-4 2m-31 0l-6-3 18-2-8 5"/>
<path fill="#ff0800" d="M534 136l-2-1 7-3 8 0 4 5m-39 1l7-5 10 0 3 2-2 1"/>
<path fill="#f70000" d="M539 132l6-2 2 2m-28 1l5-3 5 3"/>
<path fill="#e70000" d="M733 86l-1 6 13 2 0-6"/>
<path fill="#d70000" d="M682 73l0 2 13 2 0-2m25 3l0 4 13 2 0-4m0 4l0 2 12 2 0-2"/>
<path fill="#c70000" d="M683 67l-1 6 13 2 0-6m25 5l0 4 13 2 0-4m-13-3l0 1 13 2 0-1"/>
<path fill="#b70000" d="M670 60l0 4 13 2 0-5m0 5l0 1 12 2m26-2l-1 6 13 2 0-6"/>
<path fill="#a70000" d="M658 52l12 3 0-1m0 1l0 5 13 1 0-3m25 2l0 3 13 2 0-4m0 4l0 2 12 2 0-2"/>
<path fill="#970000" d="M658 46l0 6 12 2 0-6m38 6l0 6 13 1 0-4"/>
<path fill="#870000" d="M658 44l0 2 12 2 0-1"/>
</g>
<path d="M610.5 403.1l14.7-16.7M595.3 402.2l15.2 0.9M621 397.8l-14.3 7.6-14.2-7.2M613.1 407.1l15.2-6.8M598.1 399l15 8.1M666.8 320.3l-6.6 31.4M661 344l6.1-27.3M660.9 376.4l10.4-36.9M616 350.6l9.2 15.5M615.7 356l-6.9-13.2M609 338.8l7 11.8M608.8 342.8l-4.5-9.3M604.4 331.1l4.6 7.7" stroke="#000" stroke-width="1.8" stroke-linecap="round" stroke-linejoin="round" fill="none"/>
<g fill-opacity="0.7" shape-rendering="crispEdges">
<path fill="#000087" d="M617 406l-2-2 12 2 3 3"/>
<path fill="#000097" d="M615 404l-4-4 12 2 4 4"/>
<path fill="#0000a7" d="M611 400l-2-2 12 2 2 2"/>
<path fill="#0000c7" d="M592 385l0-1 12 2 1 1"/>
<path fill="#0000d7" d="M592 384l-2-5 13 2 1 5"/>
<path fill="#0000e7" d="M590 379l-1-5 12 2 2 5"/>
<path fill="#0000f7" d="M589 374l-1-3 13 2 0 3m-25-7l-1-2 12 2 1 2"/>
<path fill="#0008ff" d="M575 367l-1-6 12 2 0 1 1 5"/>
<path fill="#0018ff" d="M574 361l-2-5 13 2 1 5"/>
<path fill="#0028ff" d="M572 356l0-2 12 2 1 2m75 10l-1-3 12 1 1 4"/>
<path fill="#0038ff" d="M694 346l0 4 13 3 0-5m-48 17l-1-5 12 2 1 4"/>
<path fill="#0048ff" d="M695 340l-1 6 13 2 1-6"/>
<path fill="#0058ff" d="M683 332l-1 5 13 2 0-5m0 5l0 1 13 2 0-1m-78 6l0-2 13 2 0 2"/>
<path fill="#0068ff" d="M683 327l0 5 12 2 1-5m-66 16l-1-5 12 2 2 5"/>
<path fill="#0078ff" d="M684 324l-1 3 13 2 0-3m-80 10l-1-3 13 2 0 3m1 2l-1-2 13 2 0 2"/>
<path fill="#0087ff" d="M615 333l-1-5 12 2 2 5m-293 7l-8 3 6 2 8-3m-23 4l9-3-1 0"/>
<path fill="#0097ff" d="M614 328l0-1 12 2 0 1m26 3l-2-5 13 2 1 5m-351 6l5 7 8-3-5-7"/>
<path fill="#00a7ff" d="M599 317l0-2 13 2 0 2m38 9l0-4 12 2 1 4m-285-1l-8 3 3-4 8-3m-61 12l-8 3 1 1 8-3"/>
<path fill="#00b7ff" d="M599 315l-1-5 12 2 2 5m-239 11l3-4 8-3-3 4"/>
<path fill="#00c7ff" d="M598 310l-1-2 13 2 0 2m38 3l-1-2 13 1 0 3"/>
<path fill="#00d7ff" d="M545 297l-1-4 13 1 0 3m13 0l0-1 13 2m64 15l-1-6 12 2 2 5"/>
<path fill="#00e7ff" d="M530 291l-1-5 13 2 1 1m1 4l-1-4 9 0 4 0 1 5m13 2l-2-5 13 2 2 5m63 9l0-1 12 2 0 1"/>
<path fill="#00f7ff" d="M529 286l-2-5 14 1 1 6m10 1l3 0 1 0m12 2l0-2 13 1 0 3m-192 12l-8 3 1-3 8-3"/>
<path fill="#08fff7" d="M527 281l-1-4 3-1 11 1 1 5m-159 23l3-5 8-3-3 5"/>
<path fill="#18ffe7" d="M529 276l10-2 1 3m-155 23l2-4 8-3-2 4"/>
<path fill="#f7ff08" d="M636 219l-1-3 13 2 0 3"/>
<path fill="#fff700" d="M635 216l-1-5 12 2 2 5"/>
<path fill="#ffe700" d="M634 211l-2-5 13 2 1 5"/>
<path fill="#ffd700" d="M632 206l0-1 12 2 1 1m-26-4l-1-5 12 2 2 4"/>
<path fill="#ffc700" d="M618 199l-2-5 13 2 1 5"/>
<path fill="#ffb700" d="M616 194l-1-2 13 1 1 3m-26-6l-1-3 12 2 1 3"/>
<path fill="#ffa700" d="M602 187l-2-4 13 1 1 5m-171 3l-8 3 1-1 8-3"/>
<path fill="#ff9700" d="M600 183l-1-4 12 1 2 4m-177 10l3-5 9-3-4 5"/>
<path fill="#ff8700" d="M439 189l3-4 8-2-2 3"/>
<path fill="#ff1800" d="M553 139l-2-2 13 0"/>
<path fill="#ff0800" d="M551 137l-4-5 16 1 3 4-2 0m-32-2l-3-2 10-1"/>
<path fill="#f70000" d="M547 132l-2-2 6-2 8 1 4 4m-34 0l-5-3 2-1 17-1 2 2-6 2"/>
<path fill="#e70000" d="M551 128l7-2 1 3m-33 0l9-5 3 0 5 4"/>
<path fill="#d70000" d="M535 124l2-1 1 1"/>
</g>
<path d="M610 405.8l-13.9-12.1M584.3 383.3l13.8 15.7M579.5 383.1l-11.3-17.2M596.1 393.7l-12.4-17M572.1 365.8l12.2 17.5M675 325.6l-7.5 34.2M671.3 339.5l5.1-23.3-1.4 9.4M679.3 382.3l10.8-37.2M630.1 361l-7.2-14M628.2 351l9 15.2M621.5 339.6l6.7 11.4M645.1 365.1l-7.4-14.5M361.9 337.1l-1.3-0.4M363.2 337.3l-1.3-0.2M364.6 337.3l-1.4 0M365.7 337.2l-1.1 0.1M366.6 337.1l-0.9 0.1M367 337l-0.4 0.1M366.4 337.2l0.6-0.1M362.3 338.2l1.7-0.3 1.4-0.4 1-0.3M358.4 338.4l2 0 1.9-0.2M356.6 338.2l1.8 0.2M358.8 339.5l-1.4 0M360.7 339.3l-0.8 0.1M361.1 339.3l-0.4 0M361 339.3l0.1 0M359.4 339.8l1-0.3" stroke="#000" stroke-width="1.8" stroke-linecap="round" stroke-linejoin="round" fill="none"/>
<g fill-opacity="0.7" shape-rendering="crispEdges">
<path fill="#0000a7" d="M609 398l-1-2 12 2 1 2"/>
<path fill="#0000b7" d="M608 396l-2-5 13 2 1 5"/>
<path fill="#0000c7" d="M606 391l-1-4 12 2 2 4"/>
<path fill="#0000f7" d="M588 371l-1-2 13 1 1 3m75 13l-1-4 13 2 1 4"/>
<path fill="#0008ff" d="M587 369l-1-5 13 2 1 4m75 12l-1-4 13 2 1 4"/>
<path fill="#0028ff" d="M572 354l-1-3 12 2 1 3"/>
<path fill="#0038ff" d="M571 351l-1-5 12 2 1 5"/>
<path fill="#0058ff" d="M695 334l0 5 13 2 0-5"/>
<path fill="#0068ff" d="M696 329l-1 5 13 2 1-6"/>
<path fill="#0078ff" d="M684 321l0 3 12 2 0-3m0 3l0 3 13 1 0-1m-81 9l0-3 12 2 1 3"/>
<path fill="#0087ff" d="M684 315l0 6 12 2 1-6m-69 18l-2-5 13 1 1 6m-283 1l-8 3 2-1 8-3m-32 8l-9 3 7 2 8-3"/>
<path fill="#0097ff" d="M685 310l-1 5 13 2 0-4m-83 14l-1-5 12 2 1 5m0 1l0-1 13 2m25 4l-1-5 13 2 1 5m-326 3l9-4 8-3-9 4"/>
<path fill="#00a7ff" d="M613 322l-1-3 12 1 1 4m38 6l-1-4 13 2 1 4m-316 4l2-1 8-3-2 1m2-1l-8 3 3-4 8-3m-11 7l-8 3 3-4 8-3"/>
<path fill="#00b7ff" d="M365 331l3-4 8-3-3 4m-16 6l3-4 8-3-3 4"/>
<path fill="#00c7ff" d="M597 308l-1-3 13 2 1 3"/>
<path fill="#00d7ff" d="M596 305l-1-5 13 2 1 5"/>
<path fill="#00e7ff" d="M583 298l-2-5 13 2 1 4-10-1m10 2l0-1 13 2 0 1m38 4l-1-4 12 2 1 4"/>
<path fill="#00f7ff" d="M581 293l0-3 12 1 1 4m51 7l-2-5 13 2 1 5m-276 4l-9 2 2-2 8-3"/>
<path fill="#08fff7" d="M526 277l0-1 3 0m12 6l-1-5 13 2 0 2m-179 27l3-5 8-3-3 5"/>
<path fill="#18ffe7" d="M526 276l-2-5 14 1 1 2-10 2m11 1l-1-3 9-1 4 1 1 5m-158 14l-8 3 0-1 9-3m-19 11l2-4 8-3-2 4"/>
<path fill="#28ffd7" d="M524 271l-1-5 14 1 1 5m10 1l3 0 1 1m-165 21l3-5 8-3-2 5"/>
<path fill="#38ffc7" d="M523 266l-1-2 9-2 4 0 2 5m-147 23l3-6 8-2-3 5"/>
<path fill="#48ffb7" d="M531 262l4-2 0 2m-142 22l8-3 0 1"/>
<path fill="#f7ff08" d="M648 221l0-3 12 2 1 2"/>
<path fill="#fff700" d="M648 218l-2-5 13 2 1 5"/>
<path fill="#ffe700" d="M646 213l-1-5 12 2 2 5"/>
<path fill="#ffd700" d="M645 208l-1-1 13 2 0 1m-25-5l-2-4 13 2 1 4"/>
<path fill="#ffc700" d="M630 201l-1-5 13 2 1 5"/>
<path fill="#ffb700" d="M629 196l-1-3 12 1 2 4"/>
<path fill="#ff9700" d="M599 179l-1-1 13 1 0 1"/>
<path fill="#ff8700" d="M598 178l-2-5 13 1 2 5m-161 4l-8 2 1-2 8-2"/>
<path fill="#ff7800" d="M596 173l-2-4 13 0 2 5m-166 9l3-5 9-2-4 5"/>
<path fill="#ff6800" d="M446 178l2-2 8-2-1 2"/>
<path fill="#ff0800" d="M566 137l-3-4 14 1 1 2"/>
<path fill="#f70000" d="M563 133l-4-4 15 1 3 4m-32-4l-2-2 8 0"/>
<path fill="#e70000" d="M559 129l-1-3 8-1 5 0 3 5m-31-2l-5-4 18 1 2 1-7 2"/>
<path fill="#d70000" d="M566 125l4 0 1 0m-33-1l-1-1 8-3 6 0 5 5"/>
<path fill="#c70000" d="M545 120l5-1 1 1"/>
</g>
<path d="M638.5 388.3l-14 17.7-14.5-0.2M620.4 408.8l15.3-4.8M635.1 407l-14.6 1.4M605.5 399.3l14.9 9.5M591.8 383l13.7 16.3M606.4 397.2l-12.7-16.9M583.7 376.7l-10.6-17.1M579.9 365.2l11.9 17.8M682.1 338.6l-9.4 37.1M674.6 364.2l8.7-35.1M573.1 359.6l-8.5-14.9M701.8 350.9l-10.4 37.1M622.9 347l-4.9-10-2.7-5.8M617.1 332.5l4.4 7.1M635.5 341.3l6.6 11.2M338.8 345.6l2 0M337 345.4l1.8 0.2M335.6 345.2l1.4 0.2M334.6 345.2l1 0M334.1 345.2l0.5 0M334.2 345.5l-0.1-0.3M334.8 345.9l-0.6-0.4M335.8 346.4l-1-0.5" stroke="#000" stroke-width="1.8" stroke-linecap="round" stroke-linejoin="round" fill="none"/>
<g fill-opacity="0.7" shape-rendering="crispEdges">
<path fill="#000087" d="M630 409l-3-3 13 2 2 3"/>
<path fill="#000097" d="M627 406l-4-4 13 2 4 4"/>
<path fill="#0000a7" d="M623 402l-2-2 13 3 2 1"/>
<path fill="#0000c7" d="M605 387l-1-1 13 2 0 1"/>
<path fill="#0000d7" d="M604 386l-1-5 12 2 2 5"/>
<path fill="#0000e7" d="M603 381l-2-5 13 2 1 5"/>
<path fill="#0000f7" d="M601 376l0-3 12 3 1 2m75 10l-1-4 12 2 1 4"/>
<path fill="#0008ff" d="M662 376l-1-1 13 2 0 1m0 0l0-1 13 2 0 1m1 4l-1-4 12 2 1 4m-13-6l0-1 12 2 0 1"/>
<path fill="#0018ff" d="M661 375l-1-5 13 2 1 5m0 0l-1-5 12 2 2 5m0 0l-2-5 13 1 1 6"/>
<path fill="#0028ff" d="M660 370l0-2 12 2 1 2m0 0l-1-2 13 2 0 2m0 0l0-2 12 2 1 1"/>
<path fill="#0048ff" d="M570 346l-2-5 13 2 1 5"/>
<path fill="#0058ff" d="M568 341l0-3 12 1 1 4m127-7l0 5 12 2 1-5m-53 15l0-2 12 2 1 2"/>
<path fill="#0068ff" d="M709 330l-1 6 13 2 0-6m-53 19l-1-5 12 2 1 5"/>
<path fill="#0078ff" d="M696 323l0 3 13 3 0-4m0 4l0 1 12 2 0-1m-54 15l-1-2 13 2 0 2"/>
<path fill="#0087ff" d="M697 317l-1 6 13 2 0-6"/>
<path fill="#0097ff" d="M685 309l0 1 12 3 0-2m0 2l0 4 12 2 1-4"/>
<path fill="#00a7ff" d="M685 304l0 5 12 2 1-6m-86 14l0-2 12 2 0 1m38 6l0-1 12 2 1 1"/>
<path fill="#00b7ff" d="M685 298l0 6 13 1 0-5m-86 17l-2-5 13 2 1 5m38 6l-1-5 12 2 1 5m-306 0l-8 3 1-1 8-3"/>
<path fill="#00c7ff" d="M686 295l-1 3 13 2 0-2m-88 14l0-2 12 1 1 3m-13-4l-1-3 13 2 0 2m39 9l-1-3 13 2 0 3m-312 7l3-5 8-3-3 5"/>
<path fill="#00d7ff" d="M609 307l-1-5 13 2 1 5m-258 15l2-3 8-3-2 3"/>
<path fill="#00e7ff" d="M595 299l-1-4 13 2 1 4m0 1l0-1 12 2 1 1"/>
<path fill="#00f7ff" d="M581 290l-1-2 13 1 0 2m1 4l-1-4 13 1 1 5m-235 13l-8 3 2-2 8-3"/>
<path fill="#08fff7" d="M553 281l0-2 13 2m14 7l-1-6 13 2 1 5m-227 22l2-5 9-3-3 5"/>
<path fill="#18ffe7" d="M539 274l-1-2 10 1m5 6l-1-5 13 1 1 6m13 1l0-1 12 1 1 2m-224 22l3-4 8-3-2 4"/>
<path fill="#28ffd7" d="M538 272l-1-5 13 2 1 4-3 0m4 1l-1-1 13 0 1 2"/>
<path fill="#38ffc7" d="M537 267l-2-5 14 2 1 5"/>
<path fill="#48ffb7" d="M535 262l0-2 12-2 2 6"/>
<path fill="#f7ff08" d="M661 222l-1-2 13 2 1 2"/>
<path fill="#fff700" d="M660 220l-1-5 12 2 2 5"/>
<path fill="#ffe700" d="M659 215l-2-5 13 2 1 5"/>
<path fill="#ffd700" d="M657 210l0-1 13 1 0 2m-26-5l-1-4 13 2 1 4"/>
<path fill="#ffc700" d="M643 203l-1-5 12 2 2 5"/>
<path fill="#ffb700" d="M642 198l-2-4 13 2 1 4"/>
<path fill="#ff9700" d="M611 180l0-1 13 2"/>
<path fill="#ff8700" d="M611 179l-2-5 13 2 2 5"/>
<path fill="#ff7800" d="M609 174l-2-5 13 2 2 5"/>
<path fill="#e70000" d="M558 126l-2-1 10 0"/>
<path fill="#d70000" d="M556 125l-5-5 16 1 3 4-4 0"/>
<path fill="#c70000" d="M551 120l-1-1 9-2 4 0 4 4"/>
<path fill="#b70000" d="M559 117l3-1 1 1"/>
</g>
<path d="M620.5 408.4l-14.1-11.2M626.8 409l-13.9-12.8M602.5 387.6l14.1 15.7M590.3 369.6l12.2 18M593.7 380.3l-10.8-17.6M685.9 317.2l-3.8 21.4M683.3 329.1l2.6-11.9M570 349.2l9.9 16M694.8 327.2l-7.1 33.6M690.1 345.1l5.6-25.2M580 352.9l10.3 16.7M600.5 378.7l-10.6-17.5M562.1 336.4l7.9 12.8M695.7 319.9l-0.9 7.3M615.3 331.2l-0.2-1.5 2 2.8M637.7 350.6l-5.1-10.5-2.8-6.3M631.2 334.4l4.3 6.9M629.8 333.8l-0.5-1.9 1.9 2.5M359.9 339.4l-1.1 0.1M357.9 340.2l1.5-0.4M356.2 340.5l1.7-0.3M350.5 340.5l1.8 0.1 1.9 0 2-0.1M350 341.6l-1.2-0.3M351.4 341.8l-1.4-0.2M352.6 341.9l-1.2-0.1M353.7 341.8l-1.1 0.1M354.9 341.6l-0.4 0.1-0.8 0.1M354.1 341.9l0.6-0.2 0.2-0.1M353 342.2l1.1-0.3" stroke="#000" stroke-width="1.8" stroke-linecap="round" stroke-linejoin="round" fill="none"/>
<g fill-opacity="0.7" shape-rendering="crispEdges">
<path fill="#0000a7" d="M621 400l-1-2 13 2 1 3"/>
<path fill="#0000b7" d="M620 398l-1-5 12 2 2 5"/>
<path fill="#0000c7" d="M619 393l-2-4 13 3 1 3m-14-6l0-1 12 2 1 2"/>
<path fill="#0000d7" d="M617 388l-2-5 13 2 1 5"/>
<path fill="#0000e7" d="M615 383l-1-5 12 1 2 6"/>
<path fill="#0000f7" d="M601 373l-1-3 13 2 0 4m1 2l-1-2 13 2 0 1"/>
<path fill="#0008ff" d="M600 370l-1-4 12 2 2 4"/>
<path fill="#0028ff" d="M672 370l-1-4 13 2 1 4"/>
<path fill="#0038ff" d="M671 366l-1-4 13 1 1 5"/>
<path fill="#0058ff" d="M568 338l-1-2 13 2 0 1m141-1l-1 5 13 2 0-5"/>
<path fill="#0068ff" d="M567 336l-1-5 12 1 2 6m141-6l0 6 12 2 1-6"/>
<path fill="#0078ff" d="M566 331l-1-1 13 1 0 1m131-7l0 4 12 2 1-4m-1 4l0 1 13 2 0-1"/>
<path fill="#0087ff" d="M709 319l0 6 13 2 0-6m-373 20l-8 3 2-1 8-3"/>
<path fill="#0097ff" d="M697 311l0 2 13 2 0-2m0 2l-1 4 13 2 0-4m-45 20l-1-5 12 2 1 5m-346 4l9-4 8-3-9 4"/>
<path fill="#00a7ff" d="M698 305l-1 6 13 2 0-6m-86 13l0-1 13 2 0 1m39 10l-1-4 12 2 1 4m-336 5l2-1 8-3-2 1"/>
<path fill="#00b7ff" d="M698 300l0 5 12 2 1-5m-87 17l-1-5 13 2 1 5"/>
<path fill="#00c7ff" d="M686 292l0 3 12 3 0-4m0 4l0 2 13 2 0-2m-88 14l-1-3 13 2 1 3m-14-5l0-2 12 2 1 2m25 4l0-3 12 2 1 3m12 2l0-3 12 2 1 3"/>
<path fill="#00d7ff" d="M686 287l0 5 12 2 1-5m-77 20l-1-5 12 1 1 6m26 3l-2-5 13 2 1 5m13 2l-1-5 12 2 1 5m-323-2l-8 3 2-2 8-3"/>
<path fill="#00e7ff" d="M608 301l-1-4 12 1 1 5m1 1l-1-1 13 1 0 1m25 4l0-1 13 2 0 1m13 2l-1-1 13 2 0 1m-13-3l-1-4 13 2 1 4m-328 5l3-6 8-3-3 6"/>
<path fill="#00f7ff" d="M607 297l-1-5 12 2 1 4m63 10l-1-5 13 2 1 5m-324 3l1-3 9-2-2 2m-15 3l-8 3 1-2 9-3"/>
<path fill="#08fff7" d="M357 314l3-5 8-3-2 5"/>
<path fill="#18ffe7" d="M379 299l-8 3 0-1 8-3m-19 11l3-4 8-3-3 4"/>
<path fill="#28ffd7" d="M371 301l3-5 8-3-3 5"/>
<path fill="#38ffc7" d="M374 296l3-6 8-3-3 6"/>
<path fill="#48ffb7" d="M535 260l-1-3 13 1"/>
<path fill="#58ffa7" d="M534 257l-2-5 14 1 1 5"/>
<path fill="#68ff97" d="M532 252l-1-5 1 0 12 1 2 5"/>
<path fill="#78ff87" d="M532 247l11-3 1 4"/>
<path fill="#ffd700" d="M657 209l-1-4 12 2 2 3"/>
<path fill="#ffc700" d="M656 205l-2-5 13 2 1 5"/>
<path fill="#ffb700" d="M654 200l-1-4 13 2 1 4"/>
<path fill="#ff6800" d="M607 169l-2-4 13 1 2 5"/>
<path fill="#ff5800" d="M605 165l-2-5 1 0 12 1 2 5"/>
<path fill="#d70000" d="M570 125l-3-4 15 1 1 2"/>
<path fill="#c70000" d="M567 121l-4-4 15 1 4 4"/>
<path fill="#b70000" d="M563 117l-1-1 13-1 3 3"/>
</g>
<path d="M631.7 411l15.3-7.8M655.6 393.5l-14.1 16.8-14.7-1.3M616.6 403.3l15.1 7.7M612.9 396.2l-12.4-17.5M603.6 377.9l13.1 17.9M582.9 362.7l-8.8-15.4M698.4 358.5l7.5-31.8M707 323.1l-5.2 27.8M589.9 361.2l-8.3-15.1M705.9 326.7l1.1-3.6M708.7 368.3l8.6-34.9M666.4 369.8l11.1 17.9" stroke="#000" stroke-width="1.8" stroke-linecap="round" stroke-linejoin="round" fill="none"/>
<g fill-opacity="0.7" shape-rendering="crispEdges">
<path fill="#000087" d="M642 411l-2-3 12 2 3 4"/>
<path fill="#000097" d="M640 408l-4-4 12 2 4 4"/>
<path fill="#0000a7" d="M636 404l-2-1 13 2 1 1m-14-3l-1-3 12 2 2 3"/>
<path fill="#0000b7" d="M633 400l-2-5 13 2 1 5"/>
<path fill="#0000c7" d="M631 395l-1-3 13 2 1 3m-14-5l-1-2 13 2 1 2"/>
<path fill="#0000d7" d="M629 390l-1-5 12 1 2 6"/>
<path fill="#0000e7" d="M628 385l-2-6 13 2 1 5"/>
<path fill="#0000f7" d="M613 376l0-4 12 2 1 4m0 1l0-1 13 2 0 1"/>
<path fill="#0008ff" d="M613 372l-2-4 13 2 1 4"/>
<path fill="#0028ff" d="M685 372l-1-4 13 2 0 4m0 0l0-4 12 2 1 4"/>
<path fill="#0038ff" d="M670 362l0-1 13 2m1 5l-1-5 12 2 2 5m0 0l-2-5 13 2 1 5"/>
<path fill="#0048ff" d="M670 361l-1-5 13 2 1 5"/>
<path fill="#0058ff" d="M733 340l0 5 12 2 1-5m-77 14l-1-3 13 2 1 3"/>
<path fill="#0068ff" d="M734 334l-1 6 13 2 0-6"/>
<path fill="#0078ff" d="M722 327l-1 4 13 2 0-5m0 5l0 1 12 2 0-1"/>
<path fill="#0087ff" d="M722 321l0 6 12 1 1-5"/>
<path fill="#0097ff" d="M710 313l0 2 12 2 0-2m0 2l0 4 13 2 0-4m-46 20l-1-5 13 2 1 5"/>
<path fill="#00a7ff" d="M710 307l0 6 12 2 1-6m-48 19l-1-1 13 2 0 1m1 4l-1-4 13 2 1 4"/>
<path fill="#00b7ff" d="M711 302l-1 5 13 2 0-6m-49 24l-1-5 13 1 1 6"/>
<path fill="#00c7ff" d="M698 294l0 4 13 2 0-4m0 4l0 2 12 1 0-1m-50 20l0-3 12 2 1 2m-13-4l-1-3 13 2 0 3m13 2l-1-3 13 2 0 3"/>
<path fill="#00d7ff" d="M699 289l-1 5 13 2 0-4m-39 24l-1-5 13 2 1 5m12 2l-1-5 13 2 1 5"/>
<path fill="#00e7ff" d="M620 303l-1-5 13 2 1 4m25 4l-1-4 13 2 1 4m0 1l0-1 12 2 1 1m12 2l0-1 12 2 1 1"/>
<path fill="#00f7ff" d="M606 292l0-1 12 2 0 1m1 4l-1-4 13 1 1 5m25 4l-1-5 13 2 1 5"/>
<path fill="#08fff7" d="M606 291l-2-5 13 2 1 5"/>
<path fill="#18ffe7" d="M604 286l0-2 12 1 1 3m-246 14l-8 3 0-1 8-3"/>
<path fill="#28ffd7" d="M363 304l3-6 8-2-3 5"/>
<path fill="#38ffc7" d="M366 298l3-5 8-3-3 6"/>
<path fill="#58ffa7" d="M547 258l-1-5 13 2 1 2"/>
<path fill="#68ff97" d="M546 253l-2-5 14 2 1 5m-28-8l-1 0 2 0"/>
<path fill="#78ff87" d="M544 248l-1-4 5 0 8 1 2 5m-28-3l-1-5 14 1 0 1-11 3"/>
<path fill="#87ff78" d="M548 244l8-1 0 2m-27-3l-2-5 14 1 2 5"/>
<path fill="#97ff68" d="M527 237l0-1 9-3 4 0 1 5"/>
<path fill="#a7ff58" d="M536 233l3-1 1 1"/>
<path fill="#ffb700" d="M653 196l0-1 12 2 1 1"/>
<path fill="#ffa700" d="M653 195l-2-5 12 2 2 5"/>
<path fill="#ff9700" d="M651 190l-2-5 13 2 1 5"/>
<path fill="#ff8700" d="M649 185l0-1 12 2 1 1"/>
<path fill="#b70000" d="M562 116l-4-3 16 1 1 1"/>
<path fill="#a70000" d="M558 113l-4-3 3 0 12 0 5 4"/>
<path fill="#970000" d="M557 110l10-2 2 2"/>
<path fill="#870000" d="M559 115l-8 3 13 2 8-3m13 2l-8 3 12 2 8-3"/>
</g>
<path d="M616.7 395.8l14.6 13.6M630.7 406.8l-13.5-15.4M620.3 389.7l14.1 16.3M617.2 391.4l-11.7-18M592.5 360.3l11.1 17.6M608 371.4l12.3 18.3M571.8 339.3l8.2 13.6M574.1 347.3l-6.6-12.2M605.5 373.4l-9.7-17M567.5 335.1l-4.6-8.4M565.9 329.4l5.9 9.9M597.8 354.6l10.2 16.8M581.6 346.1l-6.3-11.6M576.7 333.9l6.8 11.4M719.8 322.9l-4 22.9M717.3 333.4l2.5-10.5M575.3 334.5l-4-7.8M572.1 326.3l4.6 7.6M720.9 375l9.3-36.1M730.4 344.1l-8.9 37.2M686.8 388.8l-9.7-17.7M351.5 342.6l1.5-0.4M349.7 342.9l1.8-0.3M347.7 343.1l2-0.2M345.7 343.1l2 0M343.9 342.9l1.8 0.2M343.6 344.1l-1.2-0.3M345 344.3l-1.4-0.2M346.2 344.3l-1.2 0M347.3 344.3l-1.1 0M348 344.2l-0.7 0.1M348.3 344.1l-0.3 0.1M348.1 344.2l0.2-0.1M347.4 344.4l0.7-0.2M344.6 345.1l1.6-0.3 1.2-0.4M342.8 345.4l1.8-0.3M340.8 345.6l2-0.2" stroke="#000" stroke-width="1.8" stroke-linecap="round" stroke-linejoin="round" fill="none"/>
<g fill-opacity="0.7" shape-rendering="crispEdges">
<path fill="#0000f7" d="M626 378l-1-4 13 2 1 4"/>
<path fill="#0008ff" d="M625 374l-1-4 13 2 1 4"/>
<path fill="#0048ff" d="M683 363l-1-5 12 2 1 5"/>
<path fill="#0058ff" d="M746 342l-1 5 13 2 0-5m-76 14l-1-3 12 2 1 3"/>
<path fill="#0068ff" d="M746 336l0 6 12 2 1-6"/>
<path fill="#0078ff" d="M746 335l0 1 13 2 0-1m-55 13l-1-4 13 2 1 4"/>
<path fill="#0087ff" d="M703 346l-1-5 13 2 1 5m-375-4l-8 3 2-1 8-3"/>
<path fill="#0097ff" d="M722 315l0 2 13 2 0-2m-33 24l-1-5 12 2 2 5m-380 3l9-4 8-3-9 4"/>
<path fill="#00a7ff" d="M723 309l-1 6 13 2 0-6m-48 19l0-1 13 2 0 1m1 4l-1-4 12 2 1 4m-369 4l1-1 9-3-2 1"/>
<path fill="#00b7ff" d="M723 303l0 6 12 2 1-6m-49 24l-1-6 12 2 2 6"/>
<path fill="#00c7ff" d="M723 302l0 1 13 2 0-1m-50 19l-1-2 13 2 0 2"/>
<path fill="#00d7ff" d="M699 288l0 1 12 3 0-2"/>
<path fill="#00e7ff" d="M699 282l0 6 12 2 1-6m-79 20l-1-4 13 2 1 4m25 4l-1-4 12 2 1 4m13 2l-1-4 13 2 0 4"/>
<path fill="#00f7ff" d="M699 281l0 1 13 2 0-1m-80 17l-1-5 12 2 2 5m25 4l-1-5 12 2 1 5m13 2l-1-5 12 2 2 5"/>
<path fill="#48ffb7" d="M377 290l-8 3 2-5 8-3"/>
<path fill="#58ffa7" d="M371 288l3-5 8-3-3 5"/>
<path fill="#68ff97" d="M374 283l1-2 8-3-1 2"/>
<path fill="#78ff87" d="M543 244l0-1 5 1"/>
<path fill="#87ff78" d="M543 243l-2-5 14 2 1 3-8 1"/>
<path fill="#97ff68" d="M541 238l-1-5 13 2 2 5"/>
<path fill="#a7ff58" d="M540 233l-1-1 12-3 1 0 1 6"/>
<path fill="#ff8700" d="M649 184l-2-4 13 2 1 4"/>
<path fill="#ff7800" d="M647 180l-2-5 13 2 2 5"/>
<path fill="#ff6800" d="M645 175l0-2 12 2 1 2"/>
<path fill="#b70000" d="M575 115l-1-1 5 0"/>
<path fill="#a70000" d="M574 114l-5-4 15 1 3 3-8 0m-25-4l-1 0 4 0"/>
<path fill="#970000" d="M569 110l-2-2 10-1 3 0 4 4m-31-1l-7-3 0-1 18 0 3 2-10 2"/>
<path fill="#870000" d="M577 107l2 0 1 0m-34-1l13-3 5 3m8 11l-8 3 13 2 8-3"/>
</g>
<path d="M631.3 409.4l15.4 2.6M659.7 404.1l-14.5 9.4-14.5-6.7M649.6 414.6l15.5-6.5M634.4 406l15.2 8.6M647.3 413.2l-14-12.4-12.5-17.6M627.1 385.9l13.6 17.5M620.8 383.2l-10.6-17.9M615.4 367.6l11.7 18.3M733.6 324.5l-3.2 19.6M730.2 338.9l3.4-14.4M735 379.5l9.6-36.5M745.6 344.6l-8.6 37.1M674 357.5l9 15.1" stroke="#000" stroke-width="1.8" stroke-linecap="round" stroke-linejoin="round" fill="none"/>
<g fill-opacity="0.7" shape-rendering="crispEdges">
<path fill="#000087" d="M655 414l-3-4 12 2 3 4"/>
<path fill="#000097" d="M652 410l-4-4 12 2 4 4"/>
<path fill="#0000a7" d="M648 406l-1-1 12 2 1 1m-13-3l-2-3 13 1 1 4"/>
<path fill="#0000b7" d="M645 402l-1-5 12 2 2 4"/>
<path fill="#0000c7" d="M644 397l-1-3 12 2 1 3"/>
<path fill="#0048ff" d="M695 365l-1-5 13 2 1 5"/>
<path fill="#0058ff" d="M681 355l-1-2 13 2 0 2m1 3l-1-3 13 2 1 3"/>
<path fill="#0068ff" d="M680 353l-1-5 13 2 1 5"/>
<path fill="#0078ff" d="M679 348l0-2 12 2 1 2"/>
<path fill="#0097ff" d="M735 317l0 2 12 2 1-2"/>
<path fill="#00a7ff" d="M735 311l0 6 13 2 0-6m-48 19l0-1 12 2 0 1m-358 4l-9 3 4-4 8-3"/>
<path fill="#00b7ff" d="M736 305l-1 6 13 2 0-6m-48 24l-2-6 13 2 1 6m-363 4l3-4 8-3-3 4"/>
<path fill="#00c7ff" d="M736 304l0 1 12 2 0-1m-50 19l0-2 12 2 1 2"/>
<path fill="#00d7ff" d="M711 290l0 2 13 2 0-2"/>
<path fill="#00e7ff" d="M712 284l-1 6 13 2 0-6"/>
<path fill="#00f7ff" d="M712 283l0 1 12 2 0-1m-30 20l12 1 0 1"/>
<path fill="#08fff7" d="M631 295l-1-5 12 2 1 5m26 4l-2-5 13 1 1 6m13 2l-1-6 12 2 1 5"/>
<path fill="#18ffe7" d="M630 290l-1-3 12 1 1 4m25 4l0-4 12 2 1 3m13 2l-1-3 12 2 1 3"/>
<path fill="#87ff78" d="M556 243l-1-3 13 1 0 1"/>
<path fill="#97ff68" d="M555 240l-2-5 14 1 1 5"/>
<path fill="#a7ff58" d="M553 235l-1-6 13 2 2 5m-28-4l-1-4 13 1"/>
<path fill="#b7ff48" d="M552 229l12-1 1 3m-27-3l-2-5 14 1 2 5-1 0"/>
<path fill="#c7ff38" d="M536 223l-1-3 5-1 9 0 1 5"/>
<path fill="#d7ff28" d="M540 219l8-2 1 2"/>
<path fill="#ff6800" d="M645 173l-2-3 13 2 1 3"/>
<path fill="#ff5800" d="M643 170l-2-5 13 2 2 5"/>
<path fill="#ff4800" d="M641 165l0-2 12 2 1 2"/>
<path fill="#a70000" d="M587 114l-3-3 14 1 2 2"/>
<path fill="#970000" d="M584 111l-4-4 14 1 4 4m-31-4l-3-2 13 1"/>
<path fill="#870000" d="M580 107l-1 0 13-1 2 2m-30-2l-5-3 12 2 8 2-2 0m-31-1l-8-1 12 1 9-3m-9 3l-8 2 13 2 8-3m0 0l-8 3 13 2 8-3"/>
</g>
<path d="M636 390.8l-11.2-18.3M625.2 366.1l11.4 18M624.8 372.5l-9.1-16.5M744.6 343l3.8-16.3-2.8 17.9M694 373.6l-7.4-14.7M715.2 347l-0.1-1.5M337 346.7l-1.2-0.3M338.3 346.9l-1.3-0.2M339.5 346.9l-1.2 0M340.5 346.8l-1 0.1M341.2 346.7l-0.7 0.1M341.4 346.7l-0.2 0M341.1 346.8l0.3-0.1M340.3 347.1l0.8-0.3M339.1 347.4l1.2-0.3M335.6 348.1l1.9-0.3 1.6-0.4M333.6 348.2l2-0.1" stroke="#000" stroke-width="1.8" stroke-linecap="round" stroke-linejoin="round" fill="none"/>
<g fill-opacity="0.7" shape-rendering="crispEdges">
<path fill="#0000c7" d="M643 394l-1-2 12 1 1 3"/>
<path fill="#0000d7" d="M642 392l-2-6 13 2 1 5"/>
<path fill="#0000e7" d="M640 386l-1-5 13 2 1 5"/>
<path fill="#0000f7" d="M639 381l0-1 12 2 1 1"/>
<path fill="#0058ff" d="M693 357l0-2 13 2 0 2"/>
<path fill="#0068ff" d="M693 355l-1-5 12 1 2 6"/>
<path fill="#0078ff" d="M692 350l-1-2 13 2 0 1"/>
<path fill="#0087ff" d="M333 347l-8 3 2-1 8-3"/>
<path fill="#0097ff" d="M748 319l-1 2 13 2 0-2m-433 28l9-4 8-3-9 4"/>
<path fill="#00a7ff" d="M748 313l0 6 12 2 1-6m-425 30l1-1 8-3-1 1"/>
<path fill="#00b7ff" d="M748 307l0 6 13 2 0-6"/>
<path fill="#00c7ff" d="M748 306l0 1 13 2 0-1"/>
<path fill="#08fff7" d="M643 297l-1-5 13 2 1 5m25 4l-1-6 13 2 1 6"/>
<path fill="#18ffe7" d="M629 287l-1-2 13 2 0 1m1 4l-1-4 13 2 1 4m25 3l-1-3 13 2 1 3"/>
<path fill="#28ffd7" d="M628 285l-1-5 13 1 1 6"/>
<path fill="#38ffc7" d="M627 280l0-2 12 2 1 1"/>
<path fill="#87ff78" d="M568 242l0-1 7 1"/>
<path fill="#97ff68" d="M568 241l-1-5 13 2 1 4-6 0"/>
<path fill="#a7ff58" d="M567 236l-2-5 13 2 2 5"/>
<path fill="#b7ff48" d="M565 231l-1-3 13 0 1 5"/>
<path fill="#ff4800" d="M641 163l-2-3 13 2 1 3"/>
<path fill="#ff3800" d="M639 160l-2-5 13 2 2 5"/>
<path fill="#ff2800" d="M637 155l0-1 12 2 1 1"/>
<path fill="#870000" d="M579 107l-8-2 13 1 8 0m-33-3l-9 3 13 1 8-2m-33 0l-8 2 12 1 8-2m-8 2l-8 3 13 2 8-3m0 0l-8 3 12 2 9-3"/>
</g>
<path d="M676.1 395.5l-14.1 18.1-14.7-0.4M655.8 415.2l15.6-1.1M640.7 403.4l15.1 11.8M663.3 417l-14.3-9.5-13-16.7M649.9 402.2l14.9 13.6M684.9 349.3l6.7 11.4" stroke="#000" stroke-width="1.8" stroke-linecap="round" stroke-linejoin="round" fill="none"/>
<g fill-opacity="0.7" shape-rendering="crispEdges">
<path fill="#000087" d="M667 416l-3-4 13 2 3 4"/>
<path fill="#000097" d="M664 412l-4-4 13 2 4 4"/>
<path fill="#0000a7" d="M660 408l-1-1 13 2 1 1"/>
<path fill="#0000f7" d="M639 380l-1-4 12 2 1 4"/>
<path fill="#0008ff" d="M638 376l-1-4 12 2 1 4"/>
<path fill="#00a7ff" d="M345 341l-8 3 4-4 8-3"/>
<path fill="#00b7ff" d="M341 340l3-4 8-3-3 4"/>
<path fill="#00c7ff" d="M749 302l-1 4 13 2 0-5"/>
<path fill="#00d7ff" d="M749 298l0 4 12 1 1-3"/>
<path fill="#08fff7" d="M656 299l-1-5 12 2 2 5"/>
<path fill="#18ffe7" d="M655 294l-1-4 13 2 0 4"/>
<path fill="#97ff68" d="M581 242l-1-4 13 2 1 3"/>
<path fill="#a7ff58" d="M580 238l-2-5 13 2 2 5"/>
<path fill="#b7ff48" d="M578 233l-1-5 1 0 12 1 1 6"/>
<path fill="#c7ff38" d="M578 228l12 0 0 1"/>
<path fill="#870000" d="M592 106l-8 0 12 2 8-1m-33-2l-8 2 13 2 8-3m-37 7l-8 3 12 2 8-3"/>
</g>
<path d="M636.6 384.1l13.3 18.1" stroke="#000" stroke-width="1.8" stroke-linecap="round" stroke-linejoin="round" fill="none"/>
<g fill-opacity="0.7" shape-rendering="crispEdges">
<path fill="#0000a7" d="M659 407l-1-4 12 2 2 4"/>
<path fill="#0000b7" d="M658 403l-2-4 13 1 1 5"/>
<path fill="#0000c7" d="M656 399l-1-3 13 2 1 2"/>
<path fill="#18ffe7" d="M654 290l0-2 12 2 1 2"/>
<path fill="#28ffd7" d="M654 288l-2-5 13 2 1 5"/>
<path fill="#38ffc7" d="M652 283l0-1 13 1 0 2"/>
<path fill="#870000" d="M604 107l-8 1 13 2 8-2m-33-2l-8 3 12 2 8-3"/>
</g>
<path d="M677.9 412.2l-14.6 4.8M664.8 415.8l15.7 2.1M693.3 411.1l-14.5 8.6-14.4-7.3M651.1 396.5l-11.5-18.3-9.5-17.2M637.2 366.2l11.2 17.9" stroke="#000" stroke-width="1.8" stroke-linecap="round" stroke-linejoin="round" fill="none"/>
<g fill-opacity="0.7" shape-rendering="crispEdges">
<path fill="#000087" d="M680 418l-3-4 12 2 3 4"/>
<path fill="#000097" d="M677 414l-4-4 12 2 4 4"/>
<path fill="#0000a7" d="M673 410l-1-1 12 2 1 1"/>
<path fill="#0000c7" d="M655 396l-1-3 13 2 1 3"/>
<path fill="#0000d7" d="M654 393l-1-5 13 2 1 5"/>
<path fill="#0000e7" d="M653 388l-1-5 12 2 2 5"/>
<path fill="#0000f7" d="M652 383l-1-1 13 2 0 1"/>
<path fill="#18ffe7" d="M667 292l-1-2 13 2 0 2"/>
<path fill="#28ffd7" d="M666 290l-1-5 13 2 1 5"/>
<path fill="#38ffc7" d="M665 285l0-2 12 2 1 2"/>
<path fill="#870000" d="M596 108l-8 3 13 2 8-3m-33-1l-8 3 12 2 8-3"/>
</g>
<path d="M664.4 412.4l-13.3-15.9M661.6 402.5l14.8 14.4" stroke="#000" stroke-width="1.8" stroke-linecap="round" stroke-linejoin="round" fill="none"/>
<g fill-opacity="0.7" shape-rendering="crispEdges">
<path fill="#0000a7" d="M672 409l-2-4 13 2 1 4"/>
<path fill="#0000b7" d="M670 405l-1-5 12 2 2 5"/>
<path fill="#0000c7" d="M669 400l-1-2 12 2 1 2"/>
<path fill="#0000f7" d="M651 382l-1-4 13 2 1 4"/>
<path fill="#0008ff" d="M650 378l-1-4 13 2 1 4"/>
<path fill="#18ffe7" d="M679 294l0-2 12 2 1 2"/>
<path fill="#28ffd7" d="M679 292l-1-5 12 2 1 5"/>
<path fill="#38ffc7" d="M678 287l-1-2 13 2 0 2"/>
<path fill="#870000" d="M588 111l-8 3 13 2 8-3m-33-1l-9 3 13 2 8-3"/>
</g>
<path d="M692.1 420.8l15.4-13.7M676.4 416.9l15.7 3.9M648.4 384.1l13.2 18.4" stroke="#000" stroke-width="1.8" stroke-linecap="round" stroke-linejoin="round" fill="none"/>
<g fill-opacity="0.7" shape-rendering="crispEdges">
<path fill="#000087" d="M692 420l-3-4 12 2 4 4"/>
<path fill="#000097" d="M689 416l-4-4 13 2 3 4"/>
<path fill="#0000a7" d="M685 412l-1-1 13 2 1 1"/>
<path fill="#0000c7" d="M668 398l-1-3 13 2 0 3"/>
<path fill="#0000d7" d="M667 395l-1-5 12 2 2 5"/>
<path fill="#0000e7" d="M666 390l-2-5 13 2 1 5"/>
<path fill="#0000f7" d="M664 385l0-1 12 2 1 1"/>
<path fill="#0008ff" d="M649 374l0-1 12 2 1 1"/>
<path fill="#0018ff" d="M649 373l-1-5 12 2 1 5"/>
<path fill="#0028ff" d="M648 368l-1-2 13 2 0 2"/>
<path fill="#18ffe7" d="M692 296l-1-2 13 2 0 2"/>
<path fill="#28ffd7" d="M691 294l-1-5 13 2 1 5"/>
<path fill="#38ffc7" d="M677 285l-1-3 13 2 1 3m0 2l0-2 12 2 1 2"/>
<path fill="#48ffb7" d="M676 282l-1-5 13 2 1 5"/>
<path fill="#870000" d="M580 114l-8 3 13 2 8-3"/>
</g>
<path d="M679.9 416.1l-13.4-15.2-11.7-18.4" stroke="#000" stroke-width="1.8" stroke-linecap="round" stroke-linejoin="round" fill="none"/>
<g fill-opacity="0.7" shape-rendering="crispEdges">
<path fill="#0000a7" d="M684 411l-1-4 13 2 1 4"/>
<path fill="#0000b7" d="M683 407l-2-5 13 2 2 5"/>
<path fill="#0000c7" d="M681 402l-1-2 13 2 1 2"/>
<path fill="#0028ff" d="M647 366l-1-3 13 2 1 3"/>
<path fill="#0038ff" d="M646 363l-1-5 13 2 1 5"/>
<path fill="#38ffc7" d="M690 287l-1-3 13 2 0 3"/>
<path fill="#48ffb7" d="M689 284l-1-5 12 2 2 5"/>
</g>
<path d="M708.8 411.2l-14.4 10.8-14.5-5.9M662.1 385.4l13.2 18.5M654.8 382.5l-9.7-17.4" stroke="#000" stroke-width="1.8" stroke-linecap="round" stroke-linejoin="round" fill="none"/>
<g fill-opacity="0.7" shape-rendering="crispEdges">
<path fill="#000087" d="M705 422l-4-4 13 2 4 4"/>
<path fill="#000097" d="M701 418l-3-4 12 2 4 4"/>
<path fill="#0000a7" d="M698 414l-1-1 13 2 0 1m-13-3l-1-4 12 2 2 4"/>
<path fill="#0000b7" d="M696 409l-2-5 12 2 2 5"/>
<path fill="#0000c7" d="M694 404l-1-2 13 2 0 2"/>
<path fill="#0038ff" d="M645 358l0-1 13 2 0 1"/>
<path fill="#0048ff" d="M645 357l-1-5 12 2 2 5"/>
<path fill="#0058ff" d="M644 352l-1-3 13 2 0 3"/>
<path fill="#58ffa7" d="M688 279l-1-6 12 2 1 6"/>
<path fill="#68ff97" d="M687 273l-1-3 12 2 1 3"/>
</g>
<path d="M675.3 403.9l14.8 14.8M695.8 419.2l-13.5-14.9-11.8-18.3M651 367.5l11.1 17.9M677.5 387.7l13.2 18.5M670.5 386l-9.7-17.6" stroke="#000" stroke-width="1.8" stroke-linecap="round" stroke-linejoin="round" fill="none"/>
<g fill-opacity="0.7" shape-rendering="crispEdges">
<path fill="#0000c7" d="M693 402l-1-3 13 2 1 3"/>
<path fill="#0000d7" d="M692 399l-1-5 12 2 2 5"/>
<path fill="#0000e7" d="M691 394l-2-5 13 2 1 5"/>
<path fill="#0000f7" d="M689 389l0-1 12 2 1 1"/>
<path fill="#0038ff" d="M658 360l0-1 12 2 0 1"/>
<path fill="#0048ff" d="M658 359l-2-5 13 2 1 5"/>
<path fill="#0058ff" d="M643 349l0-2 12 2 1 2m0 3l0-3 12 2 1 3"/>
<path fill="#0068ff" d="M643 347l-2-5 13 2 1 5"/>
<path fill="#0078ff" d="M641 342l0-2 13 2 0 2"/>
<path fill="#68ff97" d="M686 270l-1-2 13 2 0 2"/>
<path fill="#78ff87" d="M685 268l-1-5 13 2 1 5"/>
<path fill="#87ff78" d="M684 263l0-1 12 2 1 1"/>
</g>
<path d="M690.1 418.7l15.7 4.7M724.5 412.5l-14.3 11.9-14.4-5.2M690.7 406.2l14.8 14.9M712.1 422l-13.5-14.9M642.1 352.5l8.9 15M660.8 368.4l-7.5-14.7" stroke="#000" stroke-width="1.8" stroke-linecap="round" stroke-linejoin="round" fill="none"/>
<g fill-opacity="0.7" shape-rendering="crispEdges">
<path fill="#000087" d="M718 424l-4-4 12 2 4 4"/>
<path fill="#000097" d="M714 420l-4-4 13 2 3 4"/>
<path fill="#0000a7" d="M710 416l0-1 12 2 1 1"/>
<path fill="#0000c7" d="M706 404l-1-3 12 2 1 3"/>
<path fill="#0000d7" d="M705 401l-2-5 13 2 1 5"/>
<path fill="#0000e7" d="M703 396l-1-5 12 2 2 5"/>
<path fill="#0000f7" d="M702 391l-1-1 13 2 0 1"/>
<path fill="#0058ff" d="M656 351l-1-2 13 2 0 2"/>
<path fill="#0068ff" d="M655 349l-1-5 13 2 1 5"/>
<path fill="#0078ff" d="M641 340l-1-3 13 2 1 3m0 2l0-2 12 2 1 2"/>
<path fill="#0087ff" d="M640 337l-1-6 13 2 1 6"/>
<path fill="#87ff78" d="M684 262l-1-4 12 2 1 4"/>
<path fill="#97ff68" d="M683 258l-1-4 12 2 1 4"/>
</g>
<path d="M698.6 407.1l-11.8-18.3M657.5 354.7l8.9 15.1M683 372.6l11.3 18M677.1 371.1l-7.5-14.7" stroke="#000" stroke-width="1.8" stroke-linecap="round" stroke-linejoin="round" fill="none"/>
<g fill-opacity="0.7" shape-rendering="crispEdges">
<path fill="#0000a7" d="M710 415l-2-4 13 2 1 4"/>
<path fill="#0000b7" d="M708 411l-2-5 13 2 2 5"/>
<path fill="#0000c7" d="M706 406l0-2 12 2 1 2"/>
<path fill="#0000f7" d="M701 390l-1-4 13 2 1 4"/>
<path fill="#0008ff" d="M700 386l-1-4 13 2 1 4"/>
<path fill="#0078ff" d="M654 342l-1-3 12 2 1 3"/>
<path fill="#0087ff" d="M653 339l-1-6 12 2 1 6"/>
<path fill="#0097ff" d="M639 331l-1-5 12 2 2 5"/>
<path fill="#00a7ff" d="M638 326l-1-4 13 2 0 4"/>
<path fill="#97ff68" d="M682 254l-1-1 13 2 0 1"/>
<path fill="#a7ff58" d="M681 253l-1-5 13 2 1 5"/>
<path fill="#b7ff48" d="M680 248l-1-5 12 1 2 6"/>
<path fill="#c7ff38" d="M679 243l-1-4 12 1 1 4"/>
</g>
<path d="M721.3 426l15.6-12.4M705.5 421.1l15.8 4.9M740.7 414.8l-14.2 12.1-14.4-4.9M653.3 353.7l-5.2-10.8M650.9 343.6l6.6 11.1M648.1 342.9l-2.9-6.5M646.6 336.8l4.3 6.8M645.2 336.4l-0.5-2 1.9 2.4M667.4 346.3l6.6 11.2" stroke="#000" stroke-width="1.8" stroke-linecap="round" stroke-linejoin="round" fill="none"/>
<g fill-opacity="0.7" shape-rendering="crispEdges">
<path fill="#000087" d="M730 426l-4-4 13 2 4 4"/>
<path fill="#000097" d="M726 422l-3-4 12 2 4 4"/>
<path fill="#0000a7" d="M723 418l-1-1 13 2 0 1m-13-3l-1-4 12 2 2 4"/>
<path fill="#0000b7" d="M721 413l-2-5 12 2 2 5"/>
<path fill="#0000c7" d="M719 408l-1-2 13 2 0 2"/>
<path fill="#0008ff" d="M699 382l0-1 13 2 0 1"/>
<path fill="#0018ff" d="M699 381l-1-6 12 2 2 6"/>
<path fill="#0028ff" d="M698 375l-1-1 13 2 0 1"/>
<path fill="#0078ff" d="M666 344l-1-3 13 1 1 4"/>
<path fill="#0087ff" d="M665 341l-1-6 13 2 1 5"/>
<path fill="#00a7ff" d="M637 322l0-1 12 2 1 1"/>
<path fill="#00b7ff" d="M637 321l-1-5 12 2 1 5"/>
<path fill="#00c7ff" d="M636 316l-1-3 13 2 0 3"/>
<path fill="#c7ff38" d="M678 239l-1-2 13 2 0 1"/>
<path fill="#d7ff28" d="M677 237l-1-5 12 2 2 5"/>
<path fill="#e7ff18" d="M676 232l-2-5 13 2 1 5"/>
<path fill="#f7ff08" d="M674 227l0-3 12 2 1 3"/>
</g>
<path d="M707.5 409.1l14.9 14.9M694.3 390.6l13.2 18.5M715.4 409.6l-11.7-18.4M669.6 356.4l-5.2-10.8-2.8-6.5-0.5-2.1 2 2.4" stroke="#000" stroke-width="1.8" stroke-linecap="round" stroke-linejoin="round" fill="none"/>
<g fill-opacity="0.7" shape-rendering="crispEdges">
<path fill="#0000c7" d="M718 406l-1-3 13 2 1 3"/>
<path fill="#0000d7" d="M717 403l-1-5 12 2 2 5"/>
<path fill="#0000e7" d="M716 398l-2-5 13 2 1 5"/>
<path fill="#0000f7" d="M714 393l0-1 13 2 0 1"/>
<path fill="#0078ff" d="M679 346l-1-4 13 2 0 4"/>
<path fill="#0087ff" d="M678 342l-1-5 12 2 2 5"/>
<path fill="#f7ff08" d="M674 224l-1-2 13 2 0 2"/>
<path fill="#fff700" d="M673 222l-2-5 13 2 2 5"/>
<path fill="#ffe700" d="M671 217l-1-5 13 2 1 5"/>
<path fill="#ffd700" d="M670 212l0-2 12 2 1 2"/>
</g>
<path d="M722.4 424l15.9 4.6M743.2 429.7l-14.4-5.2-13.4-14.9M703.7 391.2l-9.7-17.6M700.7 375.9l11.4 18M663.1 339.4l4.3 6.9M691.6 360.7l9.1 15.2" stroke="#000" stroke-width="1.8" stroke-linecap="round" stroke-linejoin="round" fill="none"/>
<g fill-opacity="0.7" shape-rendering="crispEdges">
<path fill="#0000f7" d="M714 392l-1-4 13 2 1 4"/>
<path fill="#0008ff" d="M713 388l-1-4 13 2 1 4"/>
<path fill="#0078ff" d="M691 348l0-4 12 2 1 4"/>
<path fill="#0087ff" d="M691 344l-2-5 13 2 1 5"/>
<path fill="#ffd700" d="M670 210l-2-3 13 2 1 3"/>
<path fill="#ffc700" d="M668 207l-1-5 12 2 2 5"/>
<path fill="#ffb700" d="M667 202l-1-4 12 2 1 4"/>
</g>
<path d="M712.1 393.9l13.3 18.5M686.6 358.9l-5.1-10.8-2.7-6.4M680.4 342.3l4.5 7M678.8 341.7l-0.4-2 2 2.6" stroke="#000" stroke-width="1.8" stroke-linecap="round" stroke-linejoin="round" fill="none"/>
<g fill-opacity="0.7" shape-rendering="crispEdges">
<path fill="#0008ff" d="M712 384l0-1 12 1 1 2"/>
<path fill="#0018ff" d="M712 383l-2-6 13 2 1 5"/>
<path fill="#0028ff" d="M710 377l0-1 13 2 0 1"/>
<path fill="#ffb700" d="M666 198l-1-1 13 2 0 1"/>
<path fill="#ffa700" d="M665 197l-2-5 13 2 2 5"/>
<path fill="#ff9700" d="M663 192l-1-5 12 2 2 5"/>
<path fill="#ff8700" d="M662 187l-1-1 13 2 0 1"/>
</g>
<path d="M704.3 361.2l-5-10.6-2.6-6.3M698.6 345.3l4.5 7.2M696.7 344.3l-0.3-1.7 2.2 2.7" stroke="#000" stroke-width="1.8" stroke-linecap="round" stroke-linejoin="round" fill="none"/>
<g fill-opacity="0.7" shape-rendering="crispEdges">
<path fill="#0028ff" d="M710 376l-1-4 13 2 1 4"/>
<path fill="#0038ff" d="M709 372l-1-5 13 2 1 5"/>
<path fill="#ff8700" d="M661 186l-1-4 13 2 1 4"/>
<path fill="#ff7800" d="M660 182l-2-5 13 2 2 5"/>
<path fill="#ff6800" d="M658 177l-1-2 13 2 1 2"/>
</g>
<g fill-opacity="0.7" shape-rendering="crispEdges">
<path fill="#0038ff" d="M708 367l12 2 1 0"/>
<path fill="#0048ff" d="M708 367l-1-5 12 2 1 5"/>
<path fill="#0058ff" d="M707 362l-1-3 13 2 0 3"/>
<path fill="#ff6800" d="M657 175l-1-3 13 2 1 3"/>
<path fill="#ff5800" d="M656 172l-2-5 13 2 2 5"/>
<path fill="#ff4800" d="M654 167l-1-2 13 2 1 2"/>
</g>
<path d="M721.2 393.3l-9.6-17.5" stroke="#000" stroke-width="1.8" stroke-linecap="round" stroke-linejoin="round" fill="none"/>
<g fill-opacity="0.7" shape-rendering="crispEdges">
<path fill="#0058ff" d="M706 359l0-2 12 2 1 2"/>
<path fill="#0068ff" d="M706 357l-2-6 13 2 1 6"/>
<path fill="#0078ff" d="M704 351l0-1 13 2 0 1"/>
<path fill="#ff4800" d="M653 165l-1-3 13 2 1 3"/>
<path fill="#ff3800" d="M652 162l-2-5 13 2 2 5"/>
<path fill="#ff2800" d="M650 157l-1-1 13 1 1 2"/>
</g>
<path d="M711.6 375.8l-7.3-14.6M710 364.1l9.3 15.4" stroke="#000" stroke-width="1.8" stroke-linecap="round" stroke-linejoin="round" fill="none"/>
<g fill-opacity="0.7" shape-rendering="crispEdges">
<path fill="#ff2800" d="M649 156l-1-4 12 2 2 3"/>
<path fill="#ff1800" d="M648 152l-3-4 13 1 2 5"/>
<path fill="#ff0800" d="M645 148l0-1 13 2"/>
</g>
<path d="M703.1 352.5l6.9 11.6" stroke="#000" stroke-width="1.8" stroke-linecap="round" stroke-linejoin="round" fill="none"/>
<path stroke="#262626" fill="none" d="M277.3 459.1 L287.0 459.7M277.3 395.5 L287.0 396.1M277.3 331.9 L287.0 332.5M277.3 268.3 L287.0 268.9M277.3 204.8 L287.0 205.4M277.3 141.2 L287.0 141.8M277.3 77.6 L287.0 78.2M287.0 459.7 L277.8 463.1M362.5 471.1 L353.3 474.5M438.1 482.5 L428.9 485.9M513.6 494.0 L504.4 497.4M589.1 505.4 L579.9 508.8M589.1 505.4 L598.3 506.8M637.6 487.8 L646.9 489.1M686.2 470.1 L695.4 471.5M734.8 452.4 L744.0 453.8M783.3 434.8 L792.5 436.2"/>
<g font-family="Liberation Sans, sans-serif" font-size="11.8" fill="#262626"><text x="271.8" y="463.9" text-anchor="end">-140</text><text x="271.8" y="400.3" text-anchor="end">-120</text><text x="271.8" y="336.7" text-anchor="end">-100</text><text x="271.8" y="273.1" text-anchor="end">-80</text><text x="271.8" y="209.6" text-anchor="end">-60</text><text x="271.8" y="146.0" text-anchor="end">-40</text><text x="271.8" y="82.4" text-anchor="end">-20</text><text x="272.5" y="477.7" text-anchor="end">0.5</text><text x="348.0" y="489.1" text-anchor="end">1</text><text x="423.6" y="500.5" text-anchor="end">1.5</text><text x="499.1" y="512.0" text-anchor="end">2</text><text x="574.6" y="523.4" text-anchor="end">2.5</text><text x="604.1" y="520.4">2.5</text><text x="652.6" y="502.8">2</text><text x="701.2" y="485.1">1.5</text><text x="749.8" y="467.4">1</text><text x="798.3" y="449.8">0.5</text></g>
<text x="619.6" y="541.4" font-family="Liberation Serif, serif" font-size="14.8" fill="#3a3a3a" textLength="134.8" lengthAdjust="spacingAndGlyphs">A-B bond distance (Å)</text>
<text transform="translate(240.2 353.6) rotate(-90)" font-family="Liberation Serif, serif" font-size="14.8" fill="#3a3a3a" textLength="168" lengthAdjust="spacingAndGlyphs">Potential Energy (Kcal/mol)</text>

</svg>
<div class="pn" style="left:5px;top:11px;width:113px;height:153px"></div>
<div class="pt" style="left:32px;top:6.5px;">Atom Types</div>
<div class="lb" style="left:5px;top:28px;width:113px">Atom A</div>
<div class="pop" style="left:18px;top:43.5px;width:91px;height:20px"><span>fluorine</span><i></i></div>
<div class="lb" style="left:5px;top:73.8px;width:113px">Atom B</div>
<div class="pop" style="left:16.5px;top:89.4px;width:91px;height:20px"><span>hydrogen</span><i></i></div>
<div class="lb" style="left:5px;top:120.5px;width:113px">Atom C</div>
<div class="pop" style="left:17.4px;top:133.4px;width:91px;height:20px"><span>hydrogen</span><i></i></div>

<div class="btn" style="left:129.4px;top:10.5px;width:95px;height:46px">Update</div>

<div class="pn" style="left:129.5px;top:70.5px;width:97px;height:37px"></div>
<div class="pt" style="left:134.3px;top:65.5px;">Delta Value</div>
<div class="ed" style="left:138.8px;top:78.2px;width:82.6px;height:21.5px">0.424</div>

<div style="left:129.75px;top:113.2px;width:97px;height:52.5px;background:#f8f8f8"></div>
<div class="pn" style="left:130.5px;top:119.5px;width:96px;height:46px;background:#f8f8f8"></div>
<div class="pt" style="left:135px;top:114.7px;background:#f8f8f8">Calculation Type</div>
<div class="rad on" style="left:139.8px;top:130px"></div>
<div class="rtx" style="left:156.3px;top:129.4px">Dynamics</div>
<div style="left:139.5px;top:145.2px;width:60.7px;height:12.6px;background:#e6e6e6"></div>
<div class="rad" style="left:139.8px;top:146.4px"></div>
<div class="rtx" style="left:156.3px;top:146px">MEP</div>

<div class="pn" style="left:5.6px;top:180.2px;width:112px;height:34px"></div>
<div class="pt" style="left:10px;top:175px;">Steps</div>
<div class="ed" style="left:19.2px;top:187.6px;width:83px;height:17.8px">2000</div>

<div class="pn" style="left:129.7px;top:179.6px;width:100px;height:35px"></div>
<div class="pt" style="left:134.5px;top:174.2px;">Cutoff (Kcal/ mol)</div>
<div class="ed" style="left:143.2px;top:187.6px;width:77px;height:21.2px">-20</div>

<div class="pn" style="left:4px;top:225px;width:226px;height:39px"></div>
<div class="pt" style="left:8.5px;top:219.7px;">Collision Angle</div>

<div class="pn" style="left:3.3px;top:281.5px;width:228px;height:100px"></div>
<div class="pt" style="left:80px;top:276px;">Initial Conditions</div>
<div class="lb" style="left:13.9px;top:288.5px;width:93px">AB Distance (A)</div>
<div class="ed" style="left:13.9px;top:306.9px;width:93.9px;height:18.4px">2.4</div>
<div class="lb" style="left:13.2px;top:334.2px;width:93px">BC Distance (A)</div>
<div class="ed" style="left:13.2px;top:352.5px;width:93.5px;height:18.6px">0.74</div>
<div class="lb" style="left:128px;top:288.2px;width:94px">AB Momentum</div>
<div class="ed" style="left:126.7px;top:307.2px;width:94px;height:18.2px">-0.8</div>
<div class="lb" style="left:127px;top:334px;width:94px">BC Momentum</div>
<div class="ed" style="left:126.7px;top:352.3px;width:94px;height:18.9px">0.1</div>

<div class="sl" style="left:15px;top:232px;width:211px;height:20px;background:#e3e3e3;border-bottom:2px solid #6b6b6b"></div>
<div style="left:15px;top:232px;width:14px;height:18px;background:#f0f0f0;border-left:1px solid #fbfbfb;border-right:2px solid #6b6b6b"></div>
<div style="left:20px;top:237px;width:0;height:0;border-top:3.5px solid transparent;border-bottom:3.5px solid transparent;border-right:4px solid #6a6a6a"></div>
<div style="left:195px;top:232px;width:16px;height:18px;background:#f0f0f0;border-left:1px solid #fbfbfb;border-right:2px solid #6b6b6b"></div>
<div style="left:210px;top:232px;width:16px;height:18px;background:#f0f0f0;border-left:1px solid #fbfbfb;border-right:2px solid #6b6b6b"></div>
<div style="left:217px;top:237px;width:0;height:0;border-top:3.5px solid transparent;border-bottom:3.5px solid transparent;border-left:4px solid #6a6a6a"></div>

<div style="left:3px;top:394px;width:226px;height:119px;background:#fff;border:1px solid #8a8d93"></div>
<div style="left:4px;top:395px;width:209px;height:102px;overflow:hidden;line-height:12.85px;white-space:nowrap;font-size:9.95px;color:#111">
<div style="position:absolute;left:0;top:12.9px;width:209px;height:12.9px;background:#ababab"></div>
<div style="position:absolute;left:1px;top:1px">Contour Plot<br>Surface Plot<br>Internuclear Distances vs Time<br>Potential Energy vs Time<br>Kinetic Energy vs Time<br>Internuclear Velocities vs Internuclear Distance<br>Internuclear Accelerations vs Internuclear Distance<br>Internuclear Momenta vs Internuclear Distance</div>
</div>
<div style="left:213px;top:395px;width:15px;height:102px;background:#ececec"></div>
<div style="left:217.5px;top:401.5px;width:0;height:0;border-left:3.5px solid transparent;border-right:3.5px solid transparent;border-bottom:4px solid #444"></div>
<div style="left:213.5px;top:412px;width:13px;height:43px;border:1px solid #9b9b9b;border-radius:2px;background:linear-gradient(90deg,#f6f6f6,#e6e6e6 50%,#d2d2d2)"></div>
<div style="left:217px;top:430px;width:6px;height:6px;border-top:1px solid #555;border-bottom:1px solid #555"></div>
<div style="left:217px;top:432.5px;width:6px;height:1px;background:#555"></div>
<div style="left:217.5px;top:486px;width:0;height:0;border-left:3.5px solid transparent;border-right:3.5px solid transparent;border-top:4px solid #444"></div>
<div style="left:4px;top:497px;width:209px;height:15px;background:#ececec"></div>
<div style="left:9px;top:501px;width:0;height:0;border-top:3.5px solid transparent;border-bottom:3.5px solid transparent;border-right:4px solid #444"></div>
<div style="left:20px;top:498px;width:158px;height:13px;border:1px solid #9b9b9b;border-radius:2px;background:linear-gradient(#f6f6f6,#e6e6e6 50%,#d2d2d2)"></div>
<div style="left:95.5px;top:501.5px;width:1px;height:6px;background:#555;box-shadow:2px 0 0 #555,4px 0 0 #555"></div>
<div style="left:202.5px;top:501px;width:0;height:0;border-top:3.5px solid transparent;border-bottom:3.5px solid transparent;border-left:4px solid #444"></div>
<div style="left:213px;top:497px;width:15px;height:15px;background:#ececec"></div>
<div style="left:0;top:543px;width:800px;height:2px;background:#c7d8ec"></div>

</body></html>
